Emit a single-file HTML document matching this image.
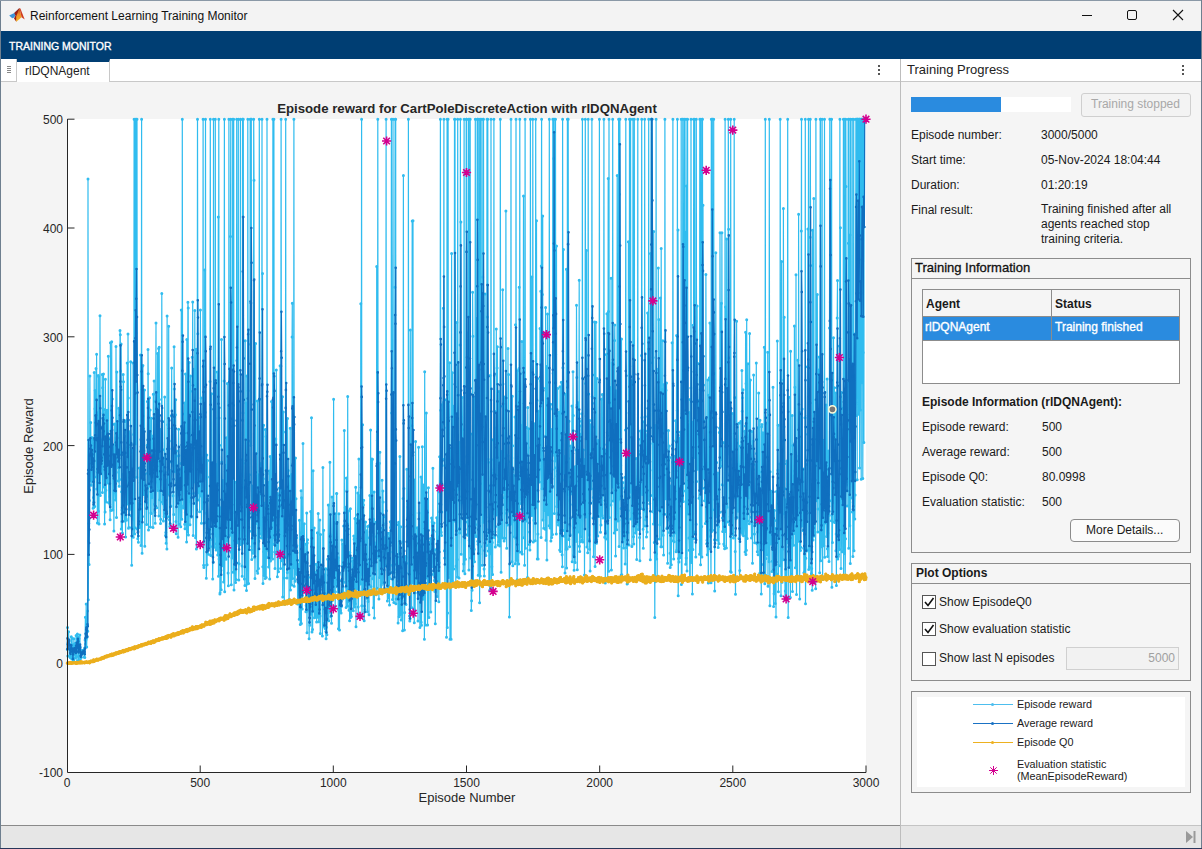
<!DOCTYPE html>
<html><head><meta charset="utf-8">
<style>
*{box-sizing:border-box;margin:0;padding:0}
html,body{width:1202px;height:849px;overflow:hidden;background:#f4f4f4;font-family:"Liberation Sans",sans-serif;color:#1a1a1a}
.a{position:absolute}
.t12{font-size:12px;line-height:14px;white-space:nowrap}
</style></head><body>
<div class="a" style="left:0;top:0;width:1202px;height:849px;background:#f4f4f4"></div>
<!-- title bar -->
<div class="a" style="left:0;top:0;width:1202px;height:31px;background:#f3f3f3"></div>
<svg class="a" style="left:4px;top:4px" width="24" height="24" viewBox="0 0 24 24">
<defs><linearGradient id="lg1" x1="0" y1="0" x2="0" y2="1"><stop offset="0" stop-color="#b83a18"/><stop offset="0.45" stop-color="#ee8a2a"/><stop offset="1" stop-color="#f8c023"/></linearGradient></defs>
<path d="M5.2 11.6 L10.3 9.1 L11.5 11.5 L9.8 13.8 L8.2 14.2 Z" fill="#3a93d8"/>
<path d="M10.3 9.1 L15.5 4 L11.5 11.5 Z" fill="#2a5aa0"/>
<path d="M10.3 9.1 L15.5 4 L12.3 17.8 L10 14.6 L11.5 11.5 Z" fill="#9e1f14"/>
<path d="M15.5 4 L17.6 13.3 L12.3 17.8 L12.2 12.5 Z" fill="url(#lg1)"/>
<path d="M15.5 4 L16.4 4.6 L20.7 15.4 L17.6 13.3 Z" fill="#cf3a1c"/>
</svg>
<div class="a t12" style="left:30px;top:9px;font-size:12px;color:#111">Reinforcement Learning Training Monitor</div>
<!-- window buttons -->
<div class="a" style="left:1082px;top:15px;width:10px;height:1px;background:#111"></div>
<div class="a" style="left:1127px;top:10px;width:10px;height:10px;border:1px solid #111;border-radius:2px"></div>
<svg class="a" style="left:1172px;top:9px" width="12" height="12" viewBox="0 0 12 12"><path d="M1 1 L11 11 M11 1 L1 11" stroke="#111" stroke-width="1.1"/></svg>
<!-- toolstrip -->
<div class="a" style="left:0;top:31px;width:1202px;height:28px;background:#003e73"></div>
<div class="a" style="left:9px;top:40px;font-size:10.5px;-webkit-text-stroke:0.35px #fff;line-height:12px;color:#fff;white-space:nowrap">TRAINING MONITOR</div>
<!-- left tab row -->
<div class="a" style="left:0;top:59px;width:900px;height:23px;background:#fff;border-bottom:1px solid #c8c8c8"></div>
<div class="a" style="left:1px;top:59px;width:16px;height:23px;background:#fff;border-right:1px solid #c8c8c8;border-bottom:1px solid #c8c8c8"></div>
<div class="a" style="left:7px;top:66px;width:4px;height:1px;background:#888;box-shadow:0 2px 0 #888,0 4px 0 #888,0 6px 0 #888"></div>
<div class="a" style="left:17px;top:59px;width:93px;height:23px;background:#fff;border-top:3px solid #003e73;border-right:1px solid #c8c8c8"></div>
<div class="a t12" style="left:25px;top:64px;color:#222">rlDQNAgent</div>
<div class="a" style="left:878px;top:65px;width:2px;height:2px;background:#555;box-shadow:0 4px 0 #555,0 8px 0 #555"></div>
<!-- left panel body -->
<div class="a" style="left:1px;top:82px;width:899px;height:743px;background:#f4f4f4"></div>
<!-- divider -->
<div class="a" style="left:900px;top:59px;width:1px;height:790px;background:#bdbdbd"></div>
<!-- right header -->
<div class="a" style="left:901px;top:59px;width:301px;height:23px;background:#fff;border-bottom:1px solid #c8c8c8"></div>
<div class="a t12" style="left:907px;top:63px;font-size:13px;color:#222">Training Progress</div>
<div class="a" style="left:1182px;top:65px;width:2px;height:2px;background:#555;box-shadow:0 4px 0 #555,0 8px 0 #555"></div>
<!-- right body -->
<div class="a" style="left:901px;top:82px;width:300px;height:743px;background:#f5f5f5"></div>
<!-- progress -->
<div class="a" style="left:911px;top:97px;width:160px;height:15px;background:#fff"></div>
<div class="a" style="left:911px;top:97px;width:90px;height:15px;background:#2a8bdf"></div>
<div class="a" style="left:1081px;top:93px;width:110px;height:24px;border:1px solid #cfcfcf;border-radius:3px;background:#f3f3f3"></div>
<div class="a t12" style="left:1091px;top:97px;color:#a8a8a8">Training stopped</div>
<!-- info rows -->
<div class="a t12" style="left:911px;top:128px">Episode number:</div>
<div class="a t12" style="left:1041px;top:128px">3000/5000</div>
<div class="a t12" style="left:911px;top:153px">Start time:</div>
<div class="a t12" style="left:1041px;top:153px">05-Nov-2024 18:04:44</div>
<div class="a t12" style="left:911px;top:178px">Duration:</div>
<div class="a t12" style="left:1041px;top:178px">01:20:19</div>
<div class="a t12" style="left:911px;top:203px">Final result:</div>
<div class="a t12" style="left:1041px;top:202px;line-height:15px">Training finished after all<br>agents reached stop<br>training criteria.</div>
<!-- training information -->
<div class="a" style="left:911px;top:258px;width:280px;height:295px;border:1px solid #8c8c8c"></div>
<div class="a" style="left:912px;top:278px;width:278px;height:1px;background:#8c8c8c"></div>
<div class="a t12" style="left:915px;top:261px;font-size:13px;-webkit-text-stroke:0.3px #111;color:#111">Training Information</div>
<div class="a" style="left:922px;top:289px;width:258px;height:95px;border:1px solid #8c8c8c;background:#fff"></div>
<div class="a" style="left:923px;top:290px;width:256px;height:27px;background:#f5f5f5;border-bottom:1px solid #8c8c8c"></div>
<div class="a" style="left:923px;top:317px;width:256px;height:24px;background:#2a8bdf;border-bottom:1px solid #8c8c8c"></div>
<div class="a" style="left:1051px;top:290px;width:1px;height:51px;background:#8c8c8c"></div>
<div class="a t12" style="left:926px;top:297px;font-weight:bold">Agent</div>
<div class="a t12" style="left:1055px;top:297px;font-weight:bold">Status</div>
<div class="a t12" style="left:925px;top:320px;font-size:12px;-webkit-text-stroke:0.35px #fff;color:#fff">rlDQNAgent</div>
<div class="a t12" style="left:1055px;top:320px;font-size:12px;-webkit-text-stroke:0.35px #fff;color:#fff">Training finished</div>
<div class="a t12" style="left:922px;top:395px;font-weight:bold">Episode Information (rlDQNAgent):</div>
<div class="a t12" style="left:922px;top:420px">Episode reward:</div>
<div class="a t12" style="left:1042px;top:420px">500</div>
<div class="a t12" style="left:922px;top:445px">Average reward:</div>
<div class="a t12" style="left:1042px;top:445px">500</div>
<div class="a t12" style="left:922px;top:470px">Episode Q0:</div>
<div class="a t12" style="left:1042px;top:470px">80.0998</div>
<div class="a t12" style="left:922px;top:495px">Evaluation statistic:</div>
<div class="a t12" style="left:1042px;top:495px">500</div>
<div class="a" style="left:1070px;top:519px;width:110px;height:23px;border:1px solid #8c8c8c;border-radius:4px;background:#fbfbfb"></div>
<div class="a t12" style="left:1086px;top:523px">More Details...</div>
<!-- plot options -->
<div class="a" style="left:911px;top:563px;width:280px;height:118px;border:1px solid #8c8c8c"></div>
<div class="a" style="left:912px;top:583px;width:278px;height:1px;background:#8c8c8c"></div>
<div class="a t12" style="left:916px;top:566px;font-size:12px;font-weight:bold">Plot Options</div>
<div class="a" style="left:922px;top:595px;width:14px;height:14px;border:1px solid #555;background:#fff"></div>
<svg class="a" style="left:922px;top:595px" width="14" height="14"><path d="M3 7 L6 10.5 L11.5 3" stroke="#111" stroke-width="1.6" fill="none"/></svg>
<div class="a t12" style="left:939px;top:595px">Show EpisodeQ0</div>
<div class="a" style="left:922px;top:622px;width:14px;height:14px;border:1px solid #555;background:#fff"></div>
<svg class="a" style="left:922px;top:622px" width="14" height="14"><path d="M3 7 L6 10.5 L11.5 3" stroke="#111" stroke-width="1.6" fill="none"/></svg>
<div class="a t12" style="left:939px;top:622px">Show evaluation statistic</div>
<div class="a" style="left:922px;top:652px;width:14px;height:14px;border:1px solid #555;background:#fff"></div>
<div class="a t12" style="left:939px;top:651px">Show last N episodes</div>
<div class="a" style="left:1066px;top:647px;width:113px;height:23px;border:1px solid #d0d0d0;background:#f2f2f2"></div>
<div class="a t12" style="left:1066px;top:651px;width:109px;text-align:right;color:#a0a0a0">5000</div>
<!-- legend -->
<div class="a" style="left:911px;top:691px;width:280px;height:102px;border:1px solid #8c8c8c"></div>
<div class="a" style="left:917px;top:697px;width:268px;height:90px;background:#fff"></div>
<div class="a" style="left:973px;top:704px;width:40px;height:1px;background:#4dbeee"></div>
<div class="a" style="left:991px;top:703px;width:3px;height:3px;border-radius:50%;background:#4dbeee"></div>
<div class="a t12" style="left:1017px;top:697px;font-size:10.8px">Episode reward</div>
<div class="a" style="left:973px;top:723px;width:40px;height:1px;background:#1a72c4"></div>
<div class="a" style="left:991px;top:722px;width:3px;height:3px;border-radius:50%;background:#1a72c4"></div>
<div class="a t12" style="left:1017px;top:716px;font-size:10.8px">Average reward</div>
<div class="a" style="left:973px;top:742px;width:40px;height:1px;background:#edb120"></div>
<div class="a" style="left:991px;top:741px;width:3px;height:3px;border-radius:50%;background:#edb120"></div>
<div class="a t12" style="left:1017px;top:735px;font-size:10.8px">Episode Q0</div>
<svg class="a" style="left:988px;top:765px" width="11" height="11" viewBox="-5.5 -5.5 11 11"><path d="M0 -4.5V4.5M-4.5 0H4.5M-3.2 -3.2L3.2 3.2M-3.2 3.2L3.2 -3.2" stroke="#d4008f" stroke-width="1"/></svg>
<div class="a t12" style="left:1017px;top:758px;font-size:10.8px;line-height:12px">Evaluation statistic<br>(MeanEpisodeReward)</div>
<!-- status bar -->
<div class="a" style="left:1px;top:825px;width:1201px;height:24px;background:#e6e6e6;border-top:1px solid #8a8a8a"></div>
<div class="a" style="left:901px;top:825px;width:301px;height:1px;background:#c4c4c4"></div>
<div class="a" style="left:900px;top:825px;width:1px;height:24px;background:#bdbdbd"></div>
<svg class="a" style="left:1185px;top:830px" width="11" height="14"><path d="M1 1 L8 7 L1 13Z" fill="#999"/><rect x="8.5" y="1" width="2" height="12" fill="#999"/></svg>
<!-- window borders -->
<div class="a" style="left:0;top:0;width:1px;height:849px;background:#6e7f8f"></div>
<div class="a" style="left:0;top:0;width:1202px;height:1px;background:#8a98a6"></div>
<div class="a" style="left:1201px;top:0;width:1px;height:849px;background:#6e7f8f"></div>
<div class="a" style="left:0;top:848px;width:1202px;height:1px;background:#28365a"></div>
<svg class="a" style="left:0;top:0" width="1202" height="849" viewBox="0 0 1202 849">
<rect x="67" y="119" width="799" height="653" fill="#fff"/>
<path d="M67.5 663.2h7M67.5 554.4h7M67.5 445.6h7M67.5 336.8h7M67.5 228.0h7M67.5 119.2h7M200.2 772.5v-7M333.3 772.5v-7M466.5 772.5v-7M599.7 772.5v-7M732.8 772.5v-7M866.0 772.5v-7" stroke="#262626" stroke-width="1"/>
<clipPath id="cp"><rect x="60" y="114" width="812" height="660"/></clipPath><g clip-path="url(#cp)">
<polyline points="67.3,649.2 67.5,627.6 67.8,656.1 68.1,643.9 68.3,645.5 68.6,631.7 68.9,646.9 69.1,641.0 69.4,647.2 69.7,645.4 69.9,656.3 70.2,657.4 70.5,648.1 70.7,650.3 71.0,649.0 71.3,636.8 71.5,658.6 71.8,650.8 72.1,638.3 72.3,658.6 72.6,657.1 72.9,661.1 73.1,644.7 73.4,646.7 73.7,660.1 73.9,638.8 74.2,654.7 74.5,653.8 74.7,646.8 75.0,643.4 75.3,657.9 75.5,649.1 75.8,652.1 76.1,635.5 76.3,656.9 76.6,635.8 76.9,661.8 77.1,645.9 77.4,634.1 77.7,645.3 77.9,637.3 78.2,641.0 78.5,660.4 78.7,656.1 79.0,638.6 79.3,648.9 79.5,652.3 79.8,634.9 80.1,646.6 80.3,662.0 80.6,658.4 80.8,650.0 81.1,653.8 81.4,657.3 81.6,652.5 81.9,653.8 82.2,650.6 82.4,651.1 82.7,653.0 83.0,653.8 83.2,650.2 83.5,651.7 83.8,650.2 84.0,650.7 84.3,657.3 84.6,648.0 84.8,657.6 85.1,639.9 85.4,617.3 85.6,644.1 85.9,640.1 86.2,603.9 86.4,638.6 86.7,647.0 87.0,625.2 87.2,636.9 87.5,610.9 87.8,631.2 88.0,179.0 88.3,599.8 88.6,541.0 88.8,523.5 89.1,564.5 89.4,500.5 89.6,489.9 89.9,376.0 90.2,480.6 90.4,457.9 90.7,422.5 91.0,456.1 91.2,485.2 91.5,467.9 91.8,437.4 92.0,444.6 92.3,481.3 92.6,454.0 92.8,439.7 93.1,508.2 93.4,497.6 93.6,507.8 93.9,502.3 94.2,372.5 94.4,439.3 94.7,506.4 95.0,408.7 95.2,390.6 95.5,447.3 95.8,430.1 96.0,368.4 96.3,477.0 96.6,354.3 96.8,488.9 97.1,471.6 97.4,522.9 97.6,412.7 97.9,482.2 98.2,375.4 98.4,511.3 98.7,376.4 99.0,524.1 99.2,466.0 99.5,459.0 99.8,413.2 100.0,315.8 100.3,495.6 100.6,468.8 100.8,457.2 101.1,462.1 101.4,471.8 101.6,439.4 101.9,471.4 102.2,374.6 102.4,492.6 102.7,387.8 103.0,438.1 103.2,432.6 103.5,374.0 103.8,486.9 104.0,409.5 104.3,466.8 104.6,523.9 104.8,418.3 105.1,512.0 105.4,379.3 105.6,441.4 105.9,490.2 106.2,502.1 106.4,440.9 106.7,410.4 107.0,410.2 107.2,483.1 107.5,448.6 107.7,465.3 108.0,479.8 108.3,356.2 108.5,481.7 108.8,502.7 109.1,438.0 109.3,450.1 109.6,496.6 109.9,504.5 110.1,519.7 110.4,342.8 110.7,439.5 110.9,510.6 111.2,443.0 111.5,446.7 111.7,341.7 112.0,430.0 112.3,399.0 112.5,424.5 112.8,510.0 113.1,459.6 113.3,457.4 113.6,446.6 113.9,531.1 114.1,456.4 114.4,484.4 114.7,423.9 114.9,458.8 115.2,492.3 115.5,500.1 115.7,480.8 116.0,346.5 116.3,472.3 116.5,517.6 116.8,372.0 117.1,424.5 117.3,467.5 117.6,461.3 117.9,442.8 118.1,460.3 118.4,481.1 118.7,408.3 118.9,480.2 119.2,486.3 119.5,436.1 119.7,479.5 120.0,330.4 120.3,334.7 120.5,371.1 120.8,454.3 121.1,343.9 121.3,528.9 121.6,491.7 121.9,521.6 122.1,510.1 122.4,532.9 122.7,474.5 122.9,509.0 123.2,374.4 123.5,381.8 123.7,503.9 124.0,512.6 124.3,521.1 124.5,432.2 124.8,436.2 125.1,421.6 125.3,500.8 125.6,537.1 125.9,488.7 126.1,518.8 126.4,520.3 126.7,420.1 126.9,461.9 127.2,362.9 127.5,503.6 127.7,504.1 128.0,334.1 128.3,398.1 128.5,528.2 128.8,527.6 129.1,488.7 129.3,431.8 129.6,496.3 129.9,504.7 130.1,509.2 130.4,464.2 130.7,361.7 130.9,452.5 131.2,515.7 131.5,527.4 131.7,565.2 132.0,494.8 132.3,449.8 132.5,461.7 132.8,519.1 133.1,362.9 133.3,537.3 133.6,434.4 133.8,470.4 134.1,119.2 134.4,435.4 134.6,534.0 134.9,527.7 135.2,119.2 135.4,367.8 135.7,443.8 136.0,333.2 136.2,119.2 136.5,354.6 136.8,477.3 137.0,119.2 137.3,529.0 137.6,529.4 137.8,538.7 138.1,527.5 138.4,542.2 138.6,503.3 138.9,519.1 139.2,506.4 139.4,468.1 139.7,527.6 140.0,517.0 140.2,482.7 140.5,355.1 140.8,439.5 141.0,545.5 141.3,449.6 141.6,119.2 141.8,496.9 142.1,553.3 142.4,516.5 142.6,366.1 142.9,365.6 143.2,426.5 143.4,494.4 143.7,494.0 144.0,450.7 144.2,454.0 144.5,390.1 144.8,546.3 145.0,474.0 145.3,484.5 145.6,498.3 145.8,489.1 146.1,499.6 146.4,502.4 146.6,524.4 146.9,495.6 147.2,445.3 147.4,401.4 147.7,473.0 148.0,349.6 148.2,373.8 148.5,530.0 148.8,460.0 149.0,461.9 149.3,435.2 149.6,397.8 149.8,485.9 150.1,410.0 150.4,526.9 150.6,435.4 150.9,513.1 151.2,513.6 151.4,418.2 151.7,497.7 152.0,436.1 152.2,474.4 152.5,457.1 152.8,487.9 153.0,527.5 153.3,394.2 153.6,394.3 153.8,467.4 154.1,381.0 154.4,504.2 154.6,511.3 154.9,512.6 155.2,523.3 155.4,482.4 155.7,400.9 156.0,323.0 156.2,453.3 156.5,450.3 156.8,507.8 157.0,440.7 157.3,481.4 157.6,353.5 157.8,395.0 158.1,490.4 158.4,490.4 158.6,348.5 158.9,516.0 159.2,347.2 159.4,399.4 159.7,499.7 160.0,484.8 160.2,429.4 160.5,523.4 160.7,519.2 161.0,429.9 161.3,464.4 161.5,460.2 161.8,293.4 162.1,470.4 162.3,502.0 162.6,421.5 162.9,449.7 163.1,503.7 163.4,520.9 163.7,459.8 163.9,501.9 164.2,516.5 164.5,511.7 164.7,397.1 165.0,492.8 165.3,472.3 165.5,535.6 165.8,532.5 166.1,543.3 166.3,479.9 166.6,512.1 166.9,549.0 167.1,316.1 167.4,481.9 167.7,516.7 167.9,424.8 168.2,462.7 168.5,465.7 168.7,326.3 169.0,493.8 169.3,441.1 169.5,519.7 169.8,526.6 170.1,524.2 170.3,470.4 170.6,482.6 170.9,506.0 171.1,462.1 171.4,416.0 171.7,367.9 171.9,448.8 172.2,428.1 172.5,465.5 172.7,453.4 173.0,495.8 173.3,526.9 173.5,414.9 173.8,514.4 174.1,346.8 174.3,388.9 174.6,416.5 174.9,471.7 175.1,471.4 175.4,414.7 175.7,399.7 175.9,521.6 176.2,533.8 176.5,465.4 176.7,451.1 177.0,480.7 177.3,478.9 177.5,501.6 177.8,471.6 178.1,537.3 178.3,456.0 178.6,429.3 178.9,455.4 179.1,524.3 179.4,504.5 179.7,472.3 179.9,491.5 180.2,473.8 180.5,468.7 180.7,526.7 181.0,463.4 181.3,310.0 181.5,505.7 181.8,519.3 182.1,473.6 182.3,119.2 182.6,432.3 182.9,455.2 183.1,431.0 183.4,508.1 183.7,435.0 183.9,450.6 184.2,414.1 184.5,402.9 184.7,524.3 185.0,528.8 185.3,512.2 185.5,374.0 185.8,472.9 186.1,503.2 186.3,498.2 186.6,542.0 186.8,339.6 187.1,456.4 187.4,531.9 187.6,465.3 187.9,302.2 188.2,307.9 188.4,534.9 188.7,501.5 189.0,444.2 189.2,362.5 189.5,438.5 189.8,448.0 190.0,524.8 190.3,441.7 190.6,375.9 190.8,516.1 191.1,516.2 191.4,517.0 191.6,460.0 191.9,487.7 192.2,357.2 192.4,391.2 192.7,301.9 193.0,463.2 193.2,535.4 193.5,493.4 193.8,481.9 194.0,369.3 194.3,480.9 194.6,410.7 194.8,310.4 195.1,446.5 195.4,503.2 195.6,537.7 195.9,435.7 196.2,349.2 196.4,549.0 196.7,509.8 197.0,492.5 197.2,447.8 197.5,119.2 197.8,333.8 198.0,499.9 198.3,465.7 198.6,492.8 198.8,417.5 199.1,450.4 199.4,426.8 199.6,511.7 199.9,475.1 200.2,457.9 200.4,310.0 200.7,444.4 201.0,496.1 201.2,398.0 201.5,523.2 201.8,473.0 202.0,477.2 202.3,458.0 202.6,508.8 202.8,471.3 203.1,119.2 203.4,491.9 203.6,565.3 203.9,567.4 204.2,437.0 204.4,502.2 204.7,270.1 205.0,479.1 205.2,412.3 205.5,119.2 205.8,522.3 206.0,513.3 206.3,578.2 206.6,564.9 206.8,455.1 207.1,564.7 207.4,477.1 207.6,460.4 207.9,549.6 208.2,547.5 208.4,554.3 208.7,543.8 209.0,521.6 209.2,537.1 209.5,530.0 209.8,546.4 210.0,381.6 210.3,119.2 210.6,539.5 210.8,555.4 211.1,485.2 211.4,512.4 211.6,393.7 211.9,517.0 212.2,476.6 212.4,546.4 212.7,579.0 213.0,546.4 213.2,562.0 213.5,119.2 213.7,483.8 214.0,500.4 214.3,520.3 214.5,547.2 214.8,494.8 215.1,536.1 215.3,119.2 215.6,485.9 215.9,543.9 216.1,550.0 216.4,464.4 216.7,549.3 216.9,535.3 217.2,372.0 217.5,543.2 217.7,555.0 218.0,418.0 218.3,217.1 218.5,576.2 218.8,119.2 219.1,558.9 219.3,545.3 219.6,445.2 219.9,593.9 220.1,592.7 220.4,507.8 220.7,564.3 220.9,570.3 221.2,589.7 221.5,339.5 221.7,462.1 222.0,548.1 222.3,565.8 222.5,503.1 222.8,480.5 223.1,521.6 223.3,542.4 223.6,582.0 223.9,510.9 224.1,381.1 224.4,119.2 224.7,591.8 224.9,544.6 225.2,471.4 225.5,465.3 225.7,558.6 226.0,559.3 226.3,437.7 226.5,526.8 226.8,487.2 227.1,541.0 227.3,383.4 227.6,532.7 227.9,453.0 228.1,572.9 228.4,585.7 228.7,511.2 228.9,119.2 229.2,515.1 229.5,472.5 229.7,515.9 230.0,535.3 230.3,507.9 230.5,236.5 230.8,119.2 231.1,551.9 231.3,584.8 231.6,449.1 231.9,507.0 232.1,558.1 232.4,532.8 232.7,119.2 232.9,457.7 233.2,572.2 233.5,405.2 233.7,119.2 234.0,590.1 234.3,567.9 234.5,535.2 234.8,518.9 235.1,482.2 235.3,566.3 235.6,582.5 235.9,546.0 236.1,579.5 236.4,563.0 236.7,119.2 236.9,360.4 237.2,500.7 237.5,542.9 237.7,496.7 238.0,537.4 238.3,119.2 238.5,505.0 238.8,579.9 239.1,563.7 239.3,472.9 239.6,521.8 239.9,481.1 240.1,510.2 240.4,119.2 240.6,544.6 240.9,459.8 241.2,528.8 241.4,474.4 241.7,518.7 242.0,565.9 242.2,576.2 242.5,119.2 242.8,119.2 243.0,413.0 243.3,119.2 243.6,543.1 243.8,536.8 244.1,502.7 244.4,578.9 244.6,536.1 244.9,585.6 245.2,340.7 245.4,515.3 245.7,463.3 246.0,403.1 246.2,498.6 246.5,590.5 246.8,376.1 247.0,554.3 247.3,583.9 247.6,492.7 247.8,119.2 248.1,390.7 248.4,479.5 248.6,583.4 248.9,519.3 249.2,546.4 249.4,474.8 249.7,531.2 250.0,441.1 250.2,119.2 250.5,344.3 250.8,445.6 251.0,119.2 251.3,119.2 251.6,549.9 251.8,559.6 252.1,505.5 252.4,485.9 252.6,529.9 252.9,511.8 253.2,553.3 253.4,541.4 253.7,119.2 254.0,180.2 254.2,539.3 254.5,557.4 254.8,533.5 255.0,578.6 255.3,494.5 255.6,343.5 255.8,523.6 256.1,493.3 256.4,514.1 256.6,476.2 256.9,516.6 257.2,571.0 257.4,401.0 257.7,573.2 258.0,488.7 258.2,474.7 258.5,568.5 258.8,541.2 259.0,537.0 259.3,119.2 259.6,479.2 259.8,399.3 260.1,534.1 260.4,474.0 260.6,468.2 260.9,463.6 261.2,480.9 261.4,538.1 261.7,498.6 262.0,119.2 262.2,534.9 262.5,273.5 262.8,566.8 263.0,583.6 263.3,478.7 263.6,425.3 263.8,551.8 264.1,575.6 264.4,503.2 264.6,508.3 264.9,550.9 265.2,578.6 265.4,429.5 265.7,546.0 266.0,436.4 266.2,577.4 266.5,511.8 266.8,557.5 267.0,119.2 267.3,498.8 267.5,536.4 267.8,482.2 268.1,508.5 268.3,550.5 268.6,567.0 268.9,556.5 269.1,471.0 269.4,559.3 269.7,579.1 269.9,473.7 270.2,456.4 270.5,561.1 270.7,482.4 271.0,542.9 271.3,557.3 271.5,401.5 271.8,554.4 272.1,482.2 272.3,520.1 272.6,559.1 272.9,119.2 273.1,544.3 273.4,529.8 273.7,471.6 273.9,119.2 274.2,537.7 274.5,515.9 274.7,552.0 275.0,568.6 275.3,499.0 275.5,484.7 275.8,439.1 276.1,525.5 276.3,370.0 276.6,552.8 276.9,545.8 277.1,505.3 277.4,576.7 277.7,493.6 277.9,524.5 278.2,515.2 278.5,571.7 278.7,535.3 279.0,496.7 279.3,487.9 279.5,516.6 279.8,481.9 280.1,365.8 280.3,530.1 280.6,568.5 280.9,366.0 281.1,119.2 281.4,450.0 281.7,504.1 281.9,560.7 282.2,484.2 282.5,396.7 282.7,597.1 283.0,514.1 283.3,412.0 283.5,431.9 283.8,491.1 284.1,578.1 284.3,604.2 284.6,511.1 284.9,492.4 285.1,556.7 285.4,547.7 285.7,119.2 285.9,502.8 286.2,527.2 286.5,502.3 286.7,557.8 287.0,577.9 287.3,572.4 287.5,418.5 287.8,470.2 288.1,488.2 288.3,470.4 288.6,555.7 288.9,550.3 289.1,599.6 289.4,513.1 289.7,476.3 289.9,568.4 290.2,428.2 290.5,589.9 290.7,558.5 291.0,545.0 291.3,485.3 291.5,474.5 291.8,585.1 292.1,336.9 292.3,303.2 292.6,578.4 292.9,509.7 293.1,564.2 293.4,504.5 293.6,567.8 293.9,119.2 294.2,586.3 294.4,545.8 294.7,521.7 295.0,554.4 295.2,581.2 295.5,458.1 295.8,573.5 296.0,498.8 296.3,569.7 296.6,537.8 296.8,545.7 297.1,574.6 297.4,560.4 297.6,603.9 297.9,573.0 298.2,569.7 298.4,564.1 298.7,594.2 299.0,591.5 299.2,619.2 299.5,520.2 299.8,592.8 300.0,603.5 300.3,624.5 300.6,594.0 300.8,533.1 301.1,490.8 301.4,623.4 301.6,497.8 301.9,596.9 302.2,608.9 302.4,580.3 302.7,585.1 303.0,443.6 303.2,587.7 303.5,589.2 303.8,580.8 304.0,560.3 304.3,523.7 304.6,580.3 304.8,559.8 305.1,544.3 305.4,559.0 305.6,582.0 305.9,611.7 306.2,605.5 306.4,611.8 306.7,513.1 307.0,632.8 307.2,543.0 307.5,539.8 307.8,574.9 308.0,610.0 308.3,591.1 308.6,577.2 308.8,592.6 309.1,638.8 309.4,621.9 309.6,607.1 309.9,625.3 310.2,587.7 310.4,598.9 310.7,511.5 311.0,614.2 311.2,608.3 311.5,417.7 311.8,564.9 312.0,632.0 312.3,572.7 312.6,629.5 312.8,585.6 313.1,470.7 313.4,610.9 313.6,561.2 313.9,577.3 314.2,528.1 314.4,617.7 314.7,597.1 315.0,572.4 315.2,610.3 315.5,617.3 315.8,586.7 316.0,564.2 316.3,574.0 316.6,622.0 316.8,587.1 317.1,591.6 317.4,532.8 317.6,617.2 317.9,606.6 318.2,513.4 318.4,566.8 318.7,621.8 319.0,608.5 319.2,609.8 319.5,610.3 319.8,520.0 320.0,615.9 320.3,633.5 320.5,534.5 320.8,586.5 321.1,573.8 321.3,586.6 321.6,575.8 321.9,568.4 322.1,585.3 322.4,635.9 322.7,593.5 322.9,467.4 323.2,584.6 323.5,593.7 323.7,530.3 324.0,623.6 324.3,625.7 324.5,627.0 324.8,574.8 325.1,628.5 325.3,627.2 325.6,568.7 325.9,631.4 326.1,638.8 326.4,627.2 326.7,593.9 326.9,634.8 327.2,569.1 327.5,619.8 327.7,559.3 328.0,604.1 328.3,505.1 328.5,600.3 328.8,620.8 329.1,593.3 329.3,602.8 329.6,612.3 329.9,462.3 330.1,534.6 330.4,547.0 330.7,545.6 330.9,616.5 331.2,608.3 331.5,623.2 331.7,540.4 332.0,496.9 332.3,600.6 332.5,589.4 332.8,599.3 333.1,571.8 333.3,546.7 333.6,399.3 333.9,563.7 334.1,578.1 334.4,591.4 334.7,522.6 334.9,565.6 335.2,606.2 335.5,513.8 335.7,584.4 336.0,542.5 336.3,584.0 336.5,493.6 336.8,493.4 337.1,580.1 337.3,586.7 337.6,591.8 337.9,560.5 338.1,557.8 338.4,628.8 338.7,610.1 338.9,513.7 339.2,574.4 339.5,629.9 339.7,580.4 340.0,605.5 340.3,595.3 340.5,610.6 340.8,594.5 341.1,612.9 341.3,597.0 341.6,606.3 341.9,540.1 342.1,591.0 342.4,569.4 342.7,598.9 342.9,544.3 343.2,568.9 343.5,592.7 343.7,526.1 344.0,582.2 344.3,430.5 344.5,564.9 344.8,567.5 345.1,566.1 345.3,507.6 345.6,564.4 345.9,587.0 346.1,607.4 346.4,478.0 346.6,506.7 346.9,490.7 347.2,574.0 347.4,606.0 347.7,396.4 348.0,601.4 348.2,589.4 348.5,511.0 348.8,591.3 349.0,610.2 349.3,570.4 349.6,620.7 349.8,552.4 350.1,606.2 350.4,508.8 350.6,617.5 350.9,614.6 351.2,594.7 351.4,616.5 351.7,585.3 352.0,558.1 352.2,589.3 352.5,561.3 352.8,574.2 353.0,582.5 353.3,610.7 353.6,591.9 353.8,536.1 354.1,539.3 354.4,555.3 354.6,607.1 354.9,518.5 355.2,603.7 355.4,578.2 355.7,487.3 356.0,626.8 356.2,576.8 356.5,541.8 356.8,588.8 357.0,519.6 357.3,534.8 357.6,515.2 357.8,493.0 358.1,607.0 358.4,616.8 358.6,561.1 358.9,459.0 359.2,580.5 359.4,523.3 359.7,591.6 360.0,495.5 360.2,535.8 360.5,584.1 360.8,303.8 361.0,574.4 361.3,465.9 361.6,119.2 361.8,605.7 362.1,616.9 362.4,515.9 362.6,424.8 362.9,582.1 363.2,591.7 363.4,505.0 363.7,500.2 364.0,541.7 364.2,620.8 364.5,605.9 364.8,609.6 365.0,551.9 365.3,560.2 365.6,522.0 365.8,580.5 366.1,577.2 366.4,584.9 366.6,530.7 366.9,598.2 367.2,582.4 367.4,611.7 367.7,526.5 368.0,601.5 368.2,579.3 368.5,563.2 368.8,575.4 369.0,614.8 369.3,537.7 369.6,525.2 369.8,495.4 370.1,575.0 370.4,563.1 370.6,430.1 370.9,586.6 371.2,590.5 371.4,520.7 371.7,459.0 372.0,507.4 372.2,559.4 372.5,459.2 372.8,578.7 373.0,534.0 373.3,607.7 373.5,519.2 373.8,561.3 374.1,491.9 374.3,618.0 374.6,542.8 374.9,561.8 375.1,567.2 375.4,548.6 375.7,570.0 375.9,522.2 376.2,594.8 376.5,536.5 376.7,266.5 377.0,588.3 377.3,440.5 377.5,557.4 377.8,119.2 378.1,529.5 378.3,530.9 378.6,539.1 378.9,598.9 379.1,512.8 379.4,463.2 379.7,577.5 379.9,452.2 380.2,554.3 380.5,534.5 380.7,592.8 381.0,528.2 381.3,585.0 381.5,592.9 381.8,544.2 382.1,480.2 382.3,572.5 382.6,582.4 382.9,491.0 383.1,502.1 383.4,551.6 383.7,537.2 383.9,583.2 384.2,589.8 384.5,592.5 384.7,565.0 385.0,516.8 385.3,565.6 385.5,553.4 385.8,523.5 386.1,119.2 386.3,510.8 386.6,542.5 386.9,589.8 387.1,566.6 387.4,601.0 387.7,533.3 387.9,558.7 388.2,567.9 388.5,598.0 388.7,542.9 389.0,539.6 389.3,533.3 389.5,605.1 389.8,536.8 390.1,578.5 390.3,521.8 390.6,527.5 390.9,543.0 391.1,521.4 391.4,119.2 391.7,413.1 391.9,572.6 392.2,565.2 392.5,599.6 392.7,552.0 393.0,119.2 393.3,507.7 393.5,549.9 393.8,602.6 394.1,565.1 394.3,564.2 394.6,538.7 394.9,287.2 395.1,119.2 395.4,565.1 395.7,119.2 395.9,603.7 396.2,598.9 396.5,569.5 396.7,524.8 397.0,568.5 397.3,577.7 397.5,557.5 397.8,576.2 398.1,623.0 398.3,598.6 398.6,522.3 398.9,577.4 399.1,616.8 399.4,577.9 399.7,589.4 399.9,456.6 400.2,614.7 400.4,558.8 400.7,526.8 401.0,557.9 401.2,620.1 401.5,580.7 401.8,613.2 402.0,600.8 402.3,557.4 402.6,630.7 402.8,541.7 403.1,498.4 403.4,175.5 403.6,596.4 403.9,488.6 404.2,567.9 404.4,629.9 404.7,612.4 405.0,568.7 405.2,575.5 405.5,556.6 405.8,559.1 406.0,604.5 406.3,593.0 406.6,563.2 406.8,469.2 407.1,526.8 407.4,506.9 407.6,543.4 407.9,503.7 408.2,591.8 408.4,119.2 408.7,573.2 409.0,557.3 409.2,592.0 409.5,615.9 409.8,620.9 410.0,618.7 410.3,330.1 410.6,480.2 410.8,523.5 411.1,540.5 411.4,545.3 411.6,607.6 411.9,425.7 412.2,221.1 412.4,562.4 412.7,583.1 413.0,220.8 413.2,552.6 413.5,516.5 413.8,547.1 414.0,608.7 414.3,622.8 414.6,479.9 414.8,512.9 415.1,610.8 415.4,584.5 415.6,441.4 415.9,583.8 416.2,583.7 416.4,567.1 416.7,554.4 417.0,575.9 417.2,527.7 417.5,582.4 417.8,593.0 418.0,621.1 418.3,561.8 418.6,447.2 418.8,548.3 419.1,513.1 419.4,560.1 419.6,561.9 419.9,627.5 420.2,594.3 420.4,585.9 420.7,540.6 421.0,477.1 421.2,622.3 421.5,625.3 421.8,587.4 422.0,573.4 422.3,446.8 422.6,587.8 422.8,599.2 423.1,597.6 423.4,484.9 423.6,588.9 423.9,584.6 424.2,555.0 424.4,639.2 424.7,371.8 425.0,574.8 425.2,549.1 425.5,625.0 425.8,523.2 426.0,541.8 426.3,412.9 426.6,578.1 426.8,506.1 427.1,531.8 427.3,499.6 427.6,625.0 427.9,529.7 428.1,574.2 428.4,487.7 428.7,571.6 428.9,617.4 429.2,570.1 429.5,569.7 429.7,553.4 430.0,542.3 430.3,573.7 430.5,538.5 430.8,612.0 431.1,571.5 431.3,570.5 431.6,518.1 431.9,566.7 432.1,522.1 432.4,561.5 432.7,548.2 432.9,468.3 433.2,574.4 433.5,574.9 433.7,563.6 434.0,522.9 434.3,580.4 434.5,560.0 434.8,591.6 435.1,549.7 435.3,623.7 435.6,591.6 435.9,586.7 436.1,574.7 436.4,582.4 436.7,517.7 436.9,531.5 437.2,596.5 437.5,553.9 437.7,485.8 438.0,583.5 438.3,573.6 438.5,536.9 438.8,601.7 439.1,562.8 439.3,491.9 439.6,456.7 439.9,587.7 440.1,487.8 440.4,119.2 440.7,410.2 440.9,504.5 441.2,532.2 441.5,535.4 441.7,512.1 442.0,404.7 442.3,465.6 442.5,419.6 442.8,423.8 443.1,423.6 443.3,308.3 443.6,402.2 443.9,119.2 444.1,459.3 444.4,550.8 444.7,558.0 444.9,584.9 445.2,484.6 445.5,506.6 445.7,497.8 446.0,399.8 446.3,465.4 446.5,637.3 446.8,427.8 447.1,119.2 447.3,627.4 447.6,613.0 447.9,520.5 448.1,119.2 448.4,566.0 448.7,577.5 448.9,419.2 449.2,484.3 449.5,488.5 449.7,362.8 450.0,639.3 450.3,449.2 450.5,473.6 450.8,523.9 451.1,639.3 451.3,451.2 451.6,253.5 451.9,545.7 452.1,581.1 452.4,372.8 452.7,429.2 452.9,479.4 453.2,584.6 453.4,406.3 453.7,569.0 454.0,426.0 454.2,512.9 454.5,119.2 454.8,520.5 455.0,119.2 455.3,521.3 455.6,454.0 455.8,584.1 456.1,566.1 456.4,442.0 456.6,476.3 456.9,322.5 457.2,559.5 457.4,576.9 457.7,119.2 458.0,489.5 458.2,478.4 458.5,480.7 458.8,442.2 459.0,578.1 459.3,481.6 459.6,528.3 459.8,532.9 460.1,345.0 460.4,119.2 460.6,395.0 460.9,221.9 461.2,554.3 461.4,497.2 461.7,503.0 462.0,488.7 462.2,397.6 462.5,429.4 462.8,489.9 463.0,496.3 463.3,571.1 463.6,475.2 463.8,564.1 464.1,119.2 464.4,495.8 464.6,544.4 464.9,573.7 465.2,470.3 465.4,559.2 465.7,465.8 466.0,517.4 466.2,119.2 466.5,119.2 466.8,456.6 467.0,495.8 467.3,522.0 467.6,535.3 467.8,332.8 468.1,499.0 468.4,119.2 468.6,527.9 468.9,570.1 469.2,540.2 469.4,468.2 469.7,119.2 470.0,488.2 470.2,119.2 470.5,558.0 470.8,505.7 471.0,433.9 471.3,610.5 471.6,600.7 471.8,551.6 472.1,590.2 472.4,556.7 472.6,292.2 472.9,336.3 473.2,560.8 473.4,580.6 473.7,520.2 474.0,397.2 474.2,549.2 474.5,561.8 474.8,486.8 475.0,535.1 475.3,119.2 475.6,524.4 475.8,496.4 476.1,536.5 476.4,480.7 476.6,318.5 476.9,421.0 477.2,119.2 477.4,119.2 477.7,541.2 478.0,544.3 478.2,575.2 478.5,469.0 478.8,119.2 479.0,506.8 479.3,468.3 479.6,602.8 479.8,554.0 480.1,119.2 480.3,576.0 480.6,546.6 480.9,421.7 481.1,119.2 481.4,392.7 481.7,341.0 481.9,374.8 482.2,565.3 482.5,483.7 482.7,277.0 483.0,119.2 483.3,522.2 483.5,119.2 483.8,450.9 484.1,569.0 484.3,576.0 484.6,550.4 484.9,502.2 485.1,294.1 485.4,521.9 485.7,433.6 485.9,555.6 486.2,532.8 486.5,529.4 486.7,545.4 487.0,119.2 487.3,316.9 487.5,419.3 487.8,119.2 488.1,459.3 488.3,550.9 488.6,462.3 488.9,584.7 489.1,517.3 489.4,487.1 489.7,590.3 489.9,547.8 490.2,375.4 490.5,553.7 490.7,527.3 491.0,119.2 491.3,588.0 491.5,459.5 491.8,566.8 492.1,486.1 492.3,542.5 492.6,574.6 492.9,439.7 493.1,513.6 493.4,472.9 493.7,469.5 493.9,119.2 494.2,537.4 494.5,465.3 494.7,427.7 495.0,531.8 495.3,547.1 495.5,526.5 495.8,411.6 496.1,498.0 496.3,329.1 496.6,515.0 496.9,489.6 497.1,368.0 497.4,346.7 497.7,438.0 497.9,544.9 498.2,536.3 498.5,493.0 498.7,541.8 499.0,391.4 499.3,462.2 499.5,535.0 499.8,546.1 500.1,490.1 500.3,119.2 500.6,406.3 500.9,516.1 501.1,572.3 501.4,451.4 501.7,536.2 501.9,498.0 502.2,478.8 502.5,538.0 502.7,289.8 503.0,384.0 503.3,408.3 503.5,492.3 503.8,430.6 504.1,541.0 504.3,497.5 504.6,396.9 504.9,538.2 505.1,473.4 505.4,425.2 505.7,476.8 505.9,211.0 506.2,506.4 506.4,513.3 506.7,548.3 507.0,467.7 507.2,474.4 507.5,525.1 507.8,455.8 508.0,348.5 508.3,510.9 508.6,374.5 508.8,443.0 509.1,492.3 509.4,617.0 509.6,583.0 509.9,490.6 510.2,524.5 510.4,461.7 510.7,513.4 511.0,119.2 511.2,523.5 511.5,516.4 511.8,458.0 512.0,561.8 512.3,396.2 512.6,445.7 512.8,565.7 513.1,469.7 513.4,512.1 513.6,475.2 513.9,504.5 514.2,501.9 514.4,536.8 514.7,521.6 515.0,417.1 515.2,563.8 515.5,324.8 515.8,538.6 516.0,119.2 516.3,560.2 516.6,540.5 516.8,513.0 517.1,579.8 517.4,560.3 517.6,370.8 517.9,440.7 518.2,417.9 518.4,456.1 518.7,563.9 519.0,368.4 519.2,287.2 519.5,552.0 519.8,119.2 520.0,503.5 520.3,498.7 520.6,425.0 520.8,493.1 521.1,484.6 521.4,491.6 521.6,551.9 521.9,341.6 522.2,554.0 522.4,508.2 522.7,501.6 523.0,463.0 523.2,445.0 523.5,195.9 523.8,476.9 524.0,537.8 524.3,455.4 524.6,565.2 524.8,470.6 525.1,119.2 525.4,548.2 525.6,492.9 525.9,442.4 526.2,427.5 526.4,460.9 526.7,521.0 527.0,470.0 527.2,492.1 527.5,577.5 527.8,407.4 528.0,479.5 528.3,480.6 528.6,428.8 528.8,515.8 529.1,492.2 529.4,544.4 529.6,532.1 529.9,549.9 530.2,540.7 530.4,119.2 530.7,492.6 531.0,447.8 531.2,513.9 531.5,475.7 531.8,277.1 532.0,515.5 532.3,496.5 532.6,502.2 532.8,119.2 533.1,462.6 533.3,542.1 533.6,452.3 533.9,520.2 534.1,480.4 534.4,423.7 534.7,461.5 534.9,523.3 535.2,540.7 535.5,506.2 535.7,119.2 536.0,506.6 536.3,506.4 536.5,220.8 536.8,471.7 537.1,400.4 537.3,558.9 537.6,378.4 537.9,534.1 538.1,559.1 538.4,411.3 538.7,438.7 538.9,466.1 539.2,430.6 539.5,481.9 539.7,468.9 540.0,328.4 540.3,421.6 540.5,381.1 540.8,291.3 541.1,537.4 541.3,266.0 541.6,119.2 541.9,417.9 542.1,488.7 542.4,294.4 542.7,215.9 542.9,520.1 543.2,435.8 543.5,388.3 543.7,528.3 544.0,461.6 544.3,510.5 544.5,494.6 544.8,481.4 545.1,474.0 545.3,529.2 545.6,307.6 545.9,540.3 546.1,464.0 546.4,509.7 546.7,366.6 546.9,560.0 547.2,500.0 547.5,314.1 547.7,402.0 548.0,479.5 548.3,514.8 548.5,438.0 548.8,459.2 549.1,525.7 549.3,119.2 549.6,502.3 549.9,444.2 550.1,528.1 550.4,409.1 550.7,404.3 550.9,541.0 551.2,477.9 551.5,429.5 551.7,537.6 552.0,469.5 552.3,455.4 552.5,534.4 552.8,119.2 553.1,373.3 553.3,453.1 553.6,158.4 553.9,119.2 554.1,119.2 554.4,513.4 554.7,266.6 554.9,461.0 555.2,421.1 555.5,119.2 555.7,354.8 556.0,467.7 556.3,534.0 556.5,246.1 556.8,506.4 557.1,476.3 557.3,502.7 557.6,388.4 557.9,522.2 558.1,512.9 558.4,524.9 558.7,506.7 558.9,412.0 559.2,432.5 559.5,514.8 559.7,549.9 560.0,386.7 560.2,516.1 560.5,551.4 560.8,533.1 561.0,506.7 561.3,382.3 561.6,432.0 561.8,485.8 562.1,554.7 562.4,566.8 562.6,119.2 562.9,367.8 563.2,473.3 563.4,249.6 563.7,456.3 564.0,530.5 564.2,480.1 564.5,536.2 564.8,458.3 565.0,573.1 565.3,394.3 565.6,476.7 565.8,432.5 566.1,549.3 566.4,269.3 566.6,568.0 566.9,476.1 567.2,548.9 567.4,119.2 567.7,494.6 568.0,119.2 568.2,119.2 568.5,458.4 568.8,539.6 569.0,421.2 569.3,500.4 569.6,546.8 569.8,525.9 570.1,534.6 570.4,494.2 570.6,446.0 570.9,491.6 571.2,471.7 571.4,493.4 571.7,453.9 572.0,406.1 572.2,561.7 572.5,484.1 572.8,504.5 573.0,371.8 573.3,415.6 573.6,555.3 573.8,545.1 574.1,570.2 574.4,468.1 574.6,478.0 574.9,513.4 575.2,562.4 575.4,466.4 575.7,541.5 576.0,449.7 576.2,539.4 576.5,305.2 576.8,377.6 577.0,405.0 577.3,569.8 577.6,416.3 577.8,402.5 578.1,531.9 578.4,495.0 578.6,518.9 578.9,429.7 579.2,280.2 579.4,546.2 579.7,551.5 580.0,454.6 580.2,541.7 580.5,434.3 580.8,536.7 581.0,425.9 581.3,421.2 581.6,476.2 581.8,413.8 582.1,540.0 582.4,119.2 582.6,475.9 582.9,542.0 583.2,489.8 583.4,450.1 583.7,488.4 584.0,459.5 584.2,467.7 584.5,575.0 584.8,500.5 585.0,511.9 585.3,119.2 585.6,383.6 585.8,517.0 586.1,416.1 586.4,250.6 586.6,440.2 586.9,546.9 587.1,436.6 587.4,431.8 587.7,552.7 587.9,455.1 588.2,119.2 588.5,491.8 588.7,393.9 589.0,534.8 589.3,539.6 589.5,549.2 589.8,420.5 590.1,571.1 590.3,436.3 590.6,502.9 590.9,424.8 591.1,446.7 591.4,488.8 591.7,438.0 591.9,119.2 592.2,396.8 592.5,403.2 592.7,426.9 593.0,518.0 593.3,497.6 593.5,556.8 593.8,501.3 594.1,497.8 594.3,374.9 594.6,322.0 594.9,540.3 595.1,566.6 595.4,520.9 595.7,467.4 595.9,322.2 596.2,542.1 596.5,543.2 596.7,539.8 597.0,378.6 597.3,515.1 597.5,498.3 597.8,535.9 598.1,440.6 598.3,500.3 598.6,479.5 598.9,516.5 599.1,510.9 599.4,119.2 599.7,509.6 599.9,448.2 600.2,503.5 600.5,532.3 600.7,457.0 601.0,525.1 601.3,474.9 601.5,399.2 601.8,495.1 602.1,515.6 602.3,394.6 602.6,487.4 602.9,517.9 603.1,480.2 603.4,428.9 603.7,437.7 603.9,119.2 604.2,444.5 604.5,484.3 604.7,537.2 605.0,480.4 605.3,582.9 605.5,450.0 605.8,531.5 606.1,539.1 606.3,354.5 606.6,467.7 606.9,313.7 607.1,517.1 607.4,475.8 607.7,577.7 607.9,509.0 608.2,178.6 608.5,311.6 608.7,571.3 609.0,119.2 609.3,517.6 609.5,416.0 609.8,387.3 610.1,457.2 610.3,472.7 610.6,442.3 610.9,504.9 611.1,278.3 611.4,570.0 611.7,434.5 611.9,474.2 612.2,362.9 612.5,486.9 612.7,119.2 613.0,473.2 613.2,501.0 613.5,450.2 613.8,447.8 614.0,448.6 614.3,532.9 614.6,340.5 614.8,325.0 615.1,477.1 615.4,524.9 615.6,555.9 615.9,390.8 616.2,413.9 616.4,467.9 616.7,529.7 617.0,450.2 617.2,175.5 617.5,488.0 617.8,441.4 618.0,521.0 618.3,499.9 618.6,119.2 618.8,483.5 619.1,546.4 619.4,194.3 619.6,119.2 619.9,119.2 620.2,498.5 620.4,354.2 620.7,465.2 621.0,508.4 621.2,575.1 621.5,338.9 621.8,574.8 622.0,520.1 622.3,531.3 622.6,501.4 622.8,482.6 623.1,516.0 623.4,510.5 623.6,548.0 623.9,537.8 624.2,522.5 624.4,510.7 624.7,488.0 625.0,477.2 625.2,564.0 625.5,430.1 625.8,119.2 626.0,505.5 626.3,502.6 626.6,547.5 626.8,465.2 627.1,584.0 627.4,583.8 627.6,452.2 627.9,532.7 628.2,510.4 628.4,241.8 628.7,452.1 629.0,544.9 629.2,495.9 629.5,119.2 629.8,366.3 630.0,415.5 630.3,491.2 630.6,119.2 630.8,518.9 631.1,492.2 631.4,438.7 631.6,380.8 631.9,546.6 632.2,512.5 632.4,458.3 632.7,459.4 633.0,119.2 633.2,498.3 633.5,536.7 633.8,543.9 634.0,459.6 634.3,119.2 634.6,501.3 634.8,525.8 635.1,512.9 635.4,532.9 635.6,507.4 635.9,503.1 636.2,458.5 636.4,499.6 636.7,559.5 637.0,507.3 637.2,489.3 637.5,515.2 637.8,119.2 638.0,487.4 638.3,529.4 638.6,439.2 638.8,524.8 639.1,499.7 639.4,503.7 639.6,537.4 639.9,560.7 640.1,454.7 640.4,431.0 640.7,451.0 640.9,480.3 641.2,508.4 641.5,355.6 641.7,119.2 642.0,417.4 642.3,494.6 642.5,440.7 642.8,430.6 643.1,529.3 643.3,548.2 643.6,451.2 643.9,421.8 644.1,450.8 644.4,510.9 644.7,119.2 644.9,526.0 645.2,416.4 645.5,434.2 645.7,519.7 646.0,435.8 646.3,504.7 646.5,537.1 646.8,508.8 647.1,532.1 647.3,431.0 647.6,313.0 647.9,481.4 648.1,408.1 648.4,500.2 648.7,119.2 648.9,428.0 649.2,466.4 649.5,411.2 649.7,503.7 650.0,470.3 650.3,559.8 650.5,253.4 650.8,495.4 651.1,119.2 651.3,119.2 651.6,119.2 651.9,119.2 652.1,119.2 652.4,362.8 652.7,511.8 652.9,443.5 653.2,357.5 653.5,523.9 653.7,231.6 654.0,458.3 654.3,542.5 654.5,497.7 654.8,617.5 655.1,425.6 655.3,581.7 655.6,488.4 655.9,446.0 656.1,119.2 656.4,553.8 656.7,558.9 656.9,495.5 657.2,576.4 657.5,388.6 657.7,369.2 658.0,509.8 658.3,267.9 658.5,487.5 658.8,319.5 659.1,425.5 659.3,538.9 659.6,469.7 659.9,524.8 660.1,435.9 660.4,298.1 660.7,443.7 660.9,546.8 661.2,248.5 661.5,515.8 661.7,546.8 662.0,459.1 662.3,389.6 662.5,451.5 662.8,340.7 663.1,535.2 663.3,502.3 663.6,555.0 663.9,485.5 664.1,384.6 664.4,494.1 664.7,514.2 664.9,119.2 665.2,392.4 665.5,479.6 665.7,498.8 666.0,390.3 666.2,459.9 666.5,383.1 666.8,528.4 667.0,495.2 667.3,527.0 667.6,563.2 667.8,493.9 668.1,457.1 668.4,430.4 668.6,467.1 668.9,520.1 669.2,445.9 669.4,532.4 669.7,457.6 670.0,553.2 670.2,567.6 670.5,486.0 670.8,502.6 671.0,532.0 671.3,564.7 671.6,480.8 671.8,540.7 672.1,342.7 672.4,462.3 672.6,529.4 672.9,119.2 673.2,502.4 673.4,535.7 673.7,559.0 674.0,456.2 674.2,541.8 674.5,462.9 674.8,533.1 675.0,477.7 675.3,486.5 675.6,420.8 675.8,440.8 676.1,551.8 676.4,439.6 676.6,335.6 676.9,549.9 677.2,410.5 677.4,119.2 677.7,480.0 678.0,229.9 678.2,595.8 678.5,558.6 678.8,501.4 679.0,562.0 679.3,519.0 679.6,437.9 679.8,508.5 680.1,557.6 680.4,432.0 680.6,477.3 680.9,549.2 681.2,119.2 681.4,584.5 681.7,494.9 682.0,579.6 682.2,413.2 682.5,494.6 682.8,119.2 683.0,119.2 683.3,501.6 683.6,491.0 683.8,458.3 684.1,339.5 684.4,119.2 684.6,382.1 684.9,467.6 685.2,232.3 685.4,434.8 685.7,564.3 686.0,119.2 686.2,557.9 686.5,186.0 686.8,432.8 687.0,570.9 687.3,420.9 687.6,119.2 687.8,470.0 688.1,514.1 688.4,479.0 688.6,424.7 688.9,537.9 689.2,550.2 689.4,412.5 689.7,579.9 690.0,399.6 690.2,580.4 690.5,501.7 690.8,388.0 691.0,119.2 691.3,562.6 691.6,523.2 691.8,422.1 692.1,429.9 692.4,593.9 692.6,467.0 692.9,549.4 693.1,325.3 693.4,538.4 693.7,119.2 693.9,457.5 694.2,418.2 694.5,378.4 694.7,119.2 695.0,533.2 695.3,531.8 695.5,538.3 695.8,557.1 696.1,524.3 696.3,119.2 696.6,481.5 696.9,418.5 697.1,306.1 697.4,428.4 697.7,469.3 697.9,363.4 698.2,460.2 698.5,400.4 698.7,441.8 699.0,498.2 699.3,419.5 699.5,554.2 699.8,119.2 700.1,495.7 700.3,422.8 700.6,564.8 700.9,119.2 701.1,448.7 701.4,432.4 701.7,526.6 701.9,556.9 702.2,119.2 702.5,119.2 702.7,488.3 703.0,205.2 703.3,478.2 703.5,385.1 703.8,420.8 704.1,459.7 704.3,439.6 704.6,500.7 704.9,466.8 705.1,472.3 705.4,523.4 705.7,483.0 705.9,274.6 706.2,497.0 706.5,480.7 706.7,543.8 707.0,540.2 707.3,554.7 707.5,535.3 707.8,379.9 708.1,493.2 708.3,583.1 708.6,395.3 708.9,530.1 709.1,549.1 709.4,377.8 709.7,491.9 709.9,323.1 710.2,481.5 710.5,536.4 710.7,536.1 711.0,582.7 711.3,119.2 711.5,531.7 711.8,390.1 712.1,119.2 712.3,119.2 712.6,530.3 712.9,473.8 713.1,334.7 713.4,444.5 713.7,119.2 713.9,373.5 714.2,509.7 714.5,539.8 714.7,591.1 715.0,499.5 715.3,507.2 715.5,478.0 715.8,252.7 716.1,512.2 716.3,516.7 716.6,462.5 716.9,510.1 717.1,525.2 717.4,540.1 717.7,498.6 717.9,473.1 718.2,547.5 718.5,526.7 718.7,492.4 719.0,543.7 719.3,432.5 719.5,427.9 719.8,512.3 720.0,232.7 720.3,418.2 720.6,454.1 720.8,466.3 721.1,396.6 721.4,303.3 721.6,459.4 721.9,232.8 722.2,484.8 722.4,518.1 722.7,531.4 723.0,512.2 723.2,497.4 723.5,506.5 723.8,543.9 724.0,442.5 724.3,545.7 724.6,548.7 724.8,485.8 725.1,119.2 725.4,531.6 725.6,307.1 725.9,501.3 726.2,461.9 726.4,547.9 726.7,239.0 727.0,507.3 727.2,418.6 727.5,473.6 727.8,445.8 728.0,521.9 728.3,119.2 728.6,229.3 728.8,357.8 729.1,453.9 729.4,447.8 729.6,524.7 729.9,521.4 730.2,516.8 730.4,571.6 730.7,119.2 731.0,534.1 731.2,572.2 731.5,494.6 731.8,508.8 732.0,534.8 732.3,482.9 732.6,459.2 732.8,413.5 733.1,532.0 733.4,538.1 733.6,453.2 733.9,497.6 734.2,119.2 734.4,442.3 734.7,397.6 735.0,460.8 735.2,551.5 735.5,594.2 735.8,439.4 736.0,518.7 736.3,509.0 736.6,321.2 736.8,443.1 737.1,517.6 737.4,502.3 737.6,468.6 737.9,464.3 738.2,511.2 738.4,478.7 738.7,423.3 739.0,538.4 739.2,469.5 739.5,577.9 739.8,570.6 740.0,476.5 740.3,446.1 740.6,531.6 740.8,421.4 741.1,498.5 741.4,423.0 741.6,532.4 741.9,370.4 742.2,411.2 742.4,397.8 742.7,534.5 743.0,389.8 743.2,476.3 743.5,535.8 743.8,527.7 744.0,492.8 744.3,499.5 744.6,431.3 744.8,502.0 745.1,551.9 745.4,426.1 745.6,332.3 745.9,554.4 746.1,383.5 746.4,550.2 746.7,319.8 746.9,505.9 747.2,538.5 747.5,482.2 747.7,521.0 748.0,363.8 748.3,498.0 748.5,470.2 748.8,487.2 749.1,435.5 749.3,523.7 749.6,333.5 749.9,479.1 750.1,478.8 750.4,379.9 750.7,487.1 750.9,509.8 751.2,517.3 751.5,538.1 751.7,480.3 752.0,431.6 752.3,479.3 752.5,563.2 752.8,473.6 753.1,441.2 753.3,469.6 753.6,374.9 753.9,501.4 754.1,500.8 754.4,534.1 754.7,542.8 754.9,491.9 755.2,524.6 755.5,464.6 755.7,519.9 756.0,502.4 756.3,363.1 756.5,453.4 756.8,439.8 757.1,543.8 757.3,551.7 757.6,531.9 757.9,427.7 758.1,554.7 758.4,505.4 758.7,393.1 758.9,529.5 759.2,509.1 759.5,472.1 759.7,573.3 760.0,420.2 760.3,524.5 760.5,524.9 760.8,578.5 761.1,546.6 761.3,594.1 761.6,426.8 761.9,424.4 762.1,549.7 762.4,441.2 762.7,482.1 762.9,432.7 763.2,564.5 763.5,579.2 763.7,573.9 764.0,478.5 764.3,347.2 764.5,507.9 764.8,583.8 765.1,534.9 765.3,119.2 765.6,575.3 765.9,558.6 766.1,494.9 766.4,535.0 766.7,554.8 766.9,423.1 767.2,456.6 767.5,492.4 767.7,352.2 768.0,586.2 768.3,475.9 768.5,471.3 768.8,435.3 769.1,561.7 769.3,119.2 769.6,519.6 769.9,605.8 770.1,471.8 770.4,517.3 770.7,544.1 770.9,514.7 771.2,515.0 771.5,491.2 771.7,510.6 772.0,571.6 772.3,561.2 772.5,515.9 772.8,527.6 773.0,387.2 773.3,560.9 773.6,606.6 773.8,541.2 774.1,593.7 774.4,510.6 774.6,545.0 774.9,546.8 775.2,603.5 775.4,528.4 775.7,548.5 776.0,616.9 776.2,520.6 776.5,491.5 776.8,573.9 777.0,541.5 777.3,341.0 777.6,538.7 777.8,470.3 778.1,425.2 778.4,591.8 778.6,494.4 778.9,530.1 779.2,492.9 779.4,507.6 779.7,463.9 780.0,565.7 780.2,119.2 780.5,501.0 780.8,490.4 781.0,595.8 781.3,380.1 781.6,261.4 781.8,509.3 782.1,582.2 782.4,549.3 782.6,474.3 782.9,451.9 783.2,559.7 783.4,208.5 783.7,441.3 784.0,426.8 784.2,317.3 784.5,514.0 784.8,488.8 785.0,599.6 785.3,591.1 785.6,517.3 785.8,499.8 786.1,519.6 786.4,597.5 786.6,463.7 786.9,461.1 787.2,542.8 787.4,508.8 787.7,119.2 788.0,498.6 788.2,617.5 788.5,538.6 788.8,546.8 789.0,397.2 789.3,567.5 789.6,530.1 789.8,538.0 790.1,545.5 790.4,597.5 790.6,351.3 790.9,527.0 791.2,484.3 791.4,500.0 791.7,574.3 792.0,528.4 792.2,415.4 792.5,591.6 792.8,445.6 793.0,501.7 793.3,545.0 793.6,545.3 793.8,475.9 794.1,533.5 794.4,325.9 794.6,471.1 794.9,387.3 795.2,465.9 795.4,567.8 795.7,525.0 796.0,274.8 796.2,514.6 796.5,594.4 796.8,469.6 797.0,460.2 797.3,508.5 797.6,576.9 797.8,360.3 798.1,533.6 798.4,541.3 798.6,214.3 798.9,457.5 799.2,425.0 799.4,427.6 799.7,599.0 799.9,412.5 800.2,527.2 800.5,550.5 800.7,547.2 801.0,463.4 801.3,231.1 801.5,119.2 801.8,525.8 802.1,408.9 802.3,511.2 802.6,488.4 802.9,530.4 803.1,481.2 803.4,468.9 803.7,548.3 803.9,572.8 804.2,517.1 804.5,571.8 804.7,513.8 805.0,417.8 805.3,119.2 805.5,603.8 805.8,558.2 806.1,490.3 806.3,492.6 806.6,550.9 806.9,464.4 807.1,549.9 807.4,366.8 807.7,434.3 807.9,228.9 808.2,415.4 808.5,119.2 808.7,569.6 809.0,501.4 809.3,567.0 809.5,421.7 809.8,550.3 810.1,237.3 810.3,119.2 810.6,265.4 810.9,581.3 811.1,534.9 811.4,573.8 811.7,568.5 811.9,497.1 812.2,590.3 812.5,230.2 812.7,513.8 813.0,539.9 813.3,530.6 813.5,536.2 813.8,198.4 814.1,521.4 814.3,516.4 814.6,533.7 814.9,421.3 815.1,484.9 815.4,491.0 815.7,588.7 815.9,119.2 816.2,414.2 816.5,500.8 816.7,402.8 817.0,479.6 817.3,294.4 817.5,453.0 817.8,531.9 818.1,509.0 818.3,408.0 818.6,369.9 818.9,397.6 819.1,357.0 819.4,393.1 819.7,572.8 819.9,439.1 820.2,119.2 820.5,119.2 820.7,560.7 821.0,543.0 821.3,486.4 821.5,546.8 821.8,479.6 822.1,119.2 822.3,463.8 822.6,579.4 822.9,510.0 823.1,440.2 823.4,514.3 823.7,464.0 823.9,545.7 824.2,514.5 824.5,119.2 824.7,557.3 825.0,500.8 825.3,508.3 825.5,523.1 825.8,468.9 826.0,405.0 826.3,513.6 826.6,536.4 826.8,515.2 827.1,378.9 827.4,548.7 827.6,556.6 827.9,533.3 828.2,450.9 828.4,499.9 828.7,457.5 829.0,561.4 829.2,515.3 829.5,328.1 829.8,119.2 830.0,119.2 830.3,302.0 830.6,344.1 830.8,400.9 831.1,500.8 831.4,520.7 831.6,119.2 831.9,587.2 832.2,412.6 832.4,542.5 832.7,489.9 833.0,502.6 833.2,471.8 833.5,337.8 833.8,441.9 834.0,522.0 834.3,387.8 834.6,472.8 834.8,522.5 835.1,489.1 835.4,436.4 835.6,393.1 835.9,550.8 836.2,534.1 836.4,585.6 836.7,441.9 837.0,387.5 837.2,317.9 837.5,280.4 837.8,559.1 838.0,494.4 838.3,556.4 838.6,554.5 838.8,508.9 839.1,527.6 839.4,345.9 839.6,549.4 839.9,119.2 840.2,522.0 840.4,227.8 840.7,477.0 841.0,568.4 841.2,444.2 841.5,392.6 841.8,408.2 842.0,515.0 842.3,551.8 842.6,429.4 842.8,533.9 843.1,483.8 843.4,119.2 843.6,575.3 843.9,511.4 844.2,512.5 844.4,553.4 844.7,119.2 845.0,470.6 845.2,576.8 845.5,538.8 845.8,119.2 846.0,186.6 846.3,469.3 846.6,484.9 846.8,481.9 847.1,505.9 847.4,383.2 847.6,399.0 847.9,479.1 848.2,119.2 848.4,243.3 848.7,548.3 849.0,119.2 849.2,475.4 849.5,483.2 849.8,525.7 850.0,234.9 850.3,563.6 850.6,119.2 850.8,423.1 851.1,373.7 851.4,465.9 851.6,479.6 851.9,498.0 852.2,119.2 852.4,512.0 852.7,460.0 852.9,556.4 853.2,502.2 853.5,471.7 853.7,119.2 854.0,550.7 854.3,334.0 854.5,428.8 854.8,518.9 855.1,494.9 855.3,402.2 855.6,382.6 855.9,119.2 856.1,119.2 856.4,345.4 856.7,415.6 856.9,119.2 857.2,479.8 857.5,119.2 857.7,119.2 858.0,364.1 858.3,119.2 858.5,414.3 858.8,245.4 859.1,119.2 859.3,119.2 859.6,468.1 859.9,119.2 860.1,314.8 860.4,410.1 860.7,119.2 860.9,349.7 861.2,479.3 861.5,119.2 861.7,119.2 862.0,382.8 862.3,119.2 862.5,119.2 862.8,478.4 863.1,352.4 863.3,119.2 863.6,119.2 863.9,442.6 864.1,119.2 864.4,119.2 864.7,119.2 864.9,119.2 865.2,119.2 865.5,119.2 865.7,119.2 866.0,119.2" fill="none" stroke="#30bcef" stroke-width="1.2" stroke-linejoin="round"/>
<path d="M67.3 649.2h0M67.5 627.6h0M67.8 656.1h0M68.1 643.9h0M68.3 645.5h0M68.6 631.7h0M68.9 646.9h0M69.1 641.0h0M69.4 647.2h0M69.7 645.4h0M69.9 656.3h0M70.2 657.4h0M70.5 648.1h0M70.7 650.3h0M71.0 649.0h0M71.3 636.8h0M71.5 658.6h0M71.8 650.8h0M72.1 638.3h0M72.3 658.6h0M72.6 657.1h0M72.9 661.1h0M73.1 644.7h0M73.4 646.7h0M73.7 660.1h0M73.9 638.8h0M74.2 654.7h0M74.5 653.8h0M74.7 646.8h0M75.0 643.4h0M75.3 657.9h0M75.5 649.1h0M75.8 652.1h0M76.1 635.5h0M76.3 656.9h0M76.6 635.8h0M76.9 661.8h0M77.1 645.9h0M77.4 634.1h0M77.7 645.3h0M77.9 637.3h0M78.2 641.0h0M78.5 660.4h0M78.7 656.1h0M79.0 638.6h0M79.3 648.9h0M79.5 652.3h0M79.8 634.9h0M80.1 646.6h0M80.3 662.0h0M80.6 658.4h0M80.8 650.0h0M81.1 653.8h0M81.4 657.3h0M81.6 652.5h0M81.9 653.8h0M82.2 650.6h0M82.4 651.1h0M82.7 653.0h0M83.0 653.8h0M83.2 650.2h0M83.5 651.7h0M83.8 650.2h0M84.0 650.7h0M84.3 657.3h0M84.6 648.0h0M84.8 657.6h0M85.1 639.9h0M85.4 617.3h0M85.6 644.1h0M85.9 640.1h0M86.2 603.9h0M86.4 638.6h0M86.7 647.0h0M87.0 625.2h0M87.2 636.9h0M87.5 610.9h0M87.8 631.2h0M88.0 179.0h0M88.3 599.8h0M88.6 541.0h0M88.8 523.5h0M89.1 564.5h0M89.4 500.5h0M89.6 489.9h0M89.9 376.0h0M90.2 480.6h0M90.4 457.9h0M90.7 422.5h0M91.0 456.1h0M91.2 485.2h0M91.5 467.9h0M91.8 437.4h0M92.0 444.6h0M92.3 481.3h0M92.6 454.0h0M92.8 439.7h0M93.1 508.2h0M93.4 497.6h0M93.6 507.8h0M93.9 502.3h0M94.2 372.5h0M94.4 439.3h0M94.7 506.4h0M95.0 408.7h0M95.2 390.6h0M95.5 447.3h0M95.8 430.1h0M96.0 368.4h0M96.3 477.0h0M96.6 354.3h0M96.8 488.9h0M97.1 471.6h0M97.4 522.9h0M97.6 412.7h0M97.9 482.2h0M98.2 375.4h0M98.4 511.3h0M98.7 376.4h0M99.0 524.1h0M99.2 466.0h0M99.5 459.0h0M99.8 413.2h0M100.0 315.8h0M100.3 495.6h0M100.6 468.8h0M100.8 457.2h0M101.1 462.1h0M101.4 471.8h0M101.6 439.4h0M101.9 471.4h0M102.2 374.6h0M102.4 492.6h0M102.7 387.8h0M103.0 438.1h0M103.2 432.6h0M103.5 374.0h0M103.8 486.9h0M104.0 409.5h0M104.3 466.8h0M104.6 523.9h0M104.8 418.3h0M105.1 512.0h0M105.4 379.3h0M105.6 441.4h0M105.9 490.2h0M106.2 502.1h0M106.4 440.9h0M106.7 410.4h0M107.0 410.2h0M107.2 483.1h0M107.5 448.6h0M107.7 465.3h0M108.0 479.8h0M108.3 356.2h0M108.5 481.7h0M108.8 502.7h0M109.1 438.0h0M109.3 450.1h0M109.6 496.6h0M109.9 504.5h0M110.1 519.7h0M110.4 342.8h0M110.7 439.5h0M110.9 510.6h0M111.2 443.0h0M111.5 446.7h0M111.7 341.7h0M112.0 430.0h0M112.3 399.0h0M112.5 424.5h0M112.8 510.0h0M113.1 459.6h0M113.3 457.4h0M113.6 446.6h0M113.9 531.1h0M114.1 456.4h0M114.4 484.4h0M114.7 423.9h0M114.9 458.8h0M115.2 492.3h0M115.5 500.1h0M115.7 480.8h0M116.0 346.5h0M116.3 472.3h0M116.5 517.6h0M116.8 372.0h0M117.1 424.5h0M117.3 467.5h0M117.6 461.3h0M117.9 442.8h0M118.1 460.3h0M118.4 481.1h0M118.7 408.3h0M118.9 480.2h0M119.2 486.3h0M119.5 436.1h0M119.7 479.5h0M120.0 330.4h0M120.3 334.7h0M120.5 371.1h0M120.8 454.3h0M121.1 343.9h0M121.3 528.9h0M121.6 491.7h0M121.9 521.6h0M122.1 510.1h0M122.4 532.9h0M122.7 474.5h0M122.9 509.0h0M123.2 374.4h0M123.5 381.8h0M123.7 503.9h0M124.0 512.6h0M124.3 521.1h0M124.5 432.2h0M124.8 436.2h0M125.1 421.6h0M125.3 500.8h0M125.6 537.1h0M125.9 488.7h0M126.1 518.8h0M126.4 520.3h0M126.7 420.1h0M126.9 461.9h0M127.2 362.9h0M127.5 503.6h0M127.7 504.1h0M128.0 334.1h0M128.3 398.1h0M128.5 528.2h0M128.8 527.6h0M129.1 488.7h0M129.3 431.8h0M129.6 496.3h0M129.9 504.7h0M130.1 509.2h0M130.4 464.2h0M130.7 361.7h0M130.9 452.5h0M131.2 515.7h0M131.5 527.4h0M131.7 565.2h0M132.0 494.8h0M132.3 449.8h0M132.5 461.7h0M132.8 519.1h0M133.1 362.9h0M133.3 537.3h0M133.6 434.4h0M133.8 470.4h0M134.1 119.2h0M134.4 435.4h0M134.6 534.0h0M134.9 527.7h0M135.2 119.2h0M135.4 367.8h0M135.7 443.8h0M136.0 333.2h0M136.2 119.2h0M136.5 354.6h0M136.8 477.3h0M137.0 119.2h0M137.3 529.0h0M137.6 529.4h0M137.8 538.7h0M138.1 527.5h0M138.4 542.2h0M138.6 503.3h0M138.9 519.1h0M139.2 506.4h0M139.4 468.1h0M139.7 527.6h0M140.0 517.0h0M140.2 482.7h0M140.5 355.1h0M140.8 439.5h0M141.0 545.5h0M141.3 449.6h0M141.6 119.2h0M141.8 496.9h0M142.1 553.3h0M142.4 516.5h0M142.6 366.1h0M142.9 365.6h0M143.2 426.5h0M143.4 494.4h0M143.7 494.0h0M144.0 450.7h0M144.2 454.0h0M144.5 390.1h0M144.8 546.3h0M145.0 474.0h0M145.3 484.5h0M145.6 498.3h0M145.8 489.1h0M146.1 499.6h0M146.4 502.4h0M146.6 524.4h0M146.9 495.6h0M147.2 445.3h0M147.4 401.4h0M147.7 473.0h0M148.0 349.6h0M148.2 373.8h0M148.5 530.0h0M148.8 460.0h0M149.0 461.9h0M149.3 435.2h0M149.6 397.8h0M149.8 485.9h0M150.1 410.0h0M150.4 526.9h0M150.6 435.4h0M150.9 513.1h0M151.2 513.6h0M151.4 418.2h0M151.7 497.7h0M152.0 436.1h0M152.2 474.4h0M152.5 457.1h0M152.8 487.9h0M153.0 527.5h0M153.3 394.2h0M153.6 394.3h0M153.8 467.4h0M154.1 381.0h0M154.4 504.2h0M154.6 511.3h0M154.9 512.6h0M155.2 523.3h0M155.4 482.4h0M155.7 400.9h0M156.0 323.0h0M156.2 453.3h0M156.5 450.3h0M156.8 507.8h0M157.0 440.7h0M157.3 481.4h0M157.6 353.5h0M157.8 395.0h0M158.1 490.4h0M158.4 490.4h0M158.6 348.5h0M158.9 516.0h0M159.2 347.2h0M159.4 399.4h0M159.7 499.7h0M160.0 484.8h0M160.2 429.4h0M160.5 523.4h0M160.7 519.2h0M161.0 429.9h0M161.3 464.4h0M161.5 460.2h0M161.8 293.4h0M162.1 470.4h0M162.3 502.0h0M162.6 421.5h0M162.9 449.7h0M163.1 503.7h0M163.4 520.9h0M163.7 459.8h0M163.9 501.9h0M164.2 516.5h0M164.5 511.7h0M164.7 397.1h0M165.0 492.8h0M165.3 472.3h0M165.5 535.6h0M165.8 532.5h0M166.1 543.3h0M166.3 479.9h0M166.6 512.1h0M166.9 549.0h0M167.1 316.1h0M167.4 481.9h0M167.7 516.7h0M167.9 424.8h0M168.2 462.7h0M168.5 465.7h0M168.7 326.3h0M169.0 493.8h0M169.3 441.1h0M169.5 519.7h0M169.8 526.6h0M170.1 524.2h0M170.3 470.4h0M170.6 482.6h0M170.9 506.0h0M171.1 462.1h0M171.4 416.0h0M171.7 367.9h0M171.9 448.8h0M172.2 428.1h0M172.5 465.5h0M172.7 453.4h0M173.0 495.8h0M173.3 526.9h0M173.5 414.9h0M173.8 514.4h0M174.1 346.8h0M174.3 388.9h0M174.6 416.5h0M174.9 471.7h0M175.1 471.4h0M175.4 414.7h0M175.7 399.7h0M175.9 521.6h0M176.2 533.8h0M176.5 465.4h0M176.7 451.1h0M177.0 480.7h0M177.3 478.9h0M177.5 501.6h0M177.8 471.6h0M178.1 537.3h0M178.3 456.0h0M178.6 429.3h0M178.9 455.4h0M179.1 524.3h0M179.4 504.5h0M179.7 472.3h0M179.9 491.5h0M180.2 473.8h0M180.5 468.7h0M180.7 526.7h0M181.0 463.4h0M181.3 310.0h0M181.5 505.7h0M181.8 519.3h0M182.1 473.6h0M182.3 119.2h0M182.6 432.3h0M182.9 455.2h0M183.1 431.0h0M183.4 508.1h0M183.7 435.0h0M183.9 450.6h0M184.2 414.1h0M184.5 402.9h0M184.7 524.3h0M185.0 528.8h0M185.3 512.2h0M185.5 374.0h0M185.8 472.9h0M186.1 503.2h0M186.3 498.2h0M186.6 542.0h0M186.8 339.6h0M187.1 456.4h0M187.4 531.9h0M187.6 465.3h0M187.9 302.2h0M188.2 307.9h0M188.4 534.9h0M188.7 501.5h0M189.0 444.2h0M189.2 362.5h0M189.5 438.5h0M189.8 448.0h0M190.0 524.8h0M190.3 441.7h0M190.6 375.9h0M190.8 516.1h0M191.1 516.2h0M191.4 517.0h0M191.6 460.0h0M191.9 487.7h0M192.2 357.2h0M192.4 391.2h0M192.7 301.9h0M193.0 463.2h0M193.2 535.4h0M193.5 493.4h0M193.8 481.9h0M194.0 369.3h0M194.3 480.9h0M194.6 410.7h0M194.8 310.4h0M195.1 446.5h0M195.4 503.2h0M195.6 537.7h0M195.9 435.7h0M196.2 349.2h0M196.4 549.0h0M196.7 509.8h0M197.0 492.5h0M197.2 447.8h0M197.5 119.2h0M197.8 333.8h0M198.0 499.9h0M198.3 465.7h0M198.6 492.8h0M198.8 417.5h0M199.1 450.4h0M199.4 426.8h0M199.6 511.7h0M199.9 475.1h0M200.2 457.9h0M200.4 310.0h0M200.7 444.4h0M201.0 496.1h0M201.2 398.0h0M201.5 523.2h0M201.8 473.0h0M202.0 477.2h0M202.3 458.0h0M202.6 508.8h0M202.8 471.3h0M203.1 119.2h0M203.4 491.9h0M203.6 565.3h0M203.9 567.4h0M204.2 437.0h0M204.4 502.2h0M204.7 270.1h0M205.0 479.1h0M205.2 412.3h0M205.5 119.2h0M205.8 522.3h0M206.0 513.3h0M206.3 578.2h0M206.6 564.9h0M206.8 455.1h0M207.1 564.7h0M207.4 477.1h0M207.6 460.4h0M207.9 549.6h0M208.2 547.5h0M208.4 554.3h0M208.7 543.8h0M209.0 521.6h0M209.2 537.1h0M209.5 530.0h0M209.8 546.4h0M210.0 381.6h0M210.3 119.2h0M210.6 539.5h0M210.8 555.4h0M211.1 485.2h0M211.4 512.4h0M211.6 393.7h0M211.9 517.0h0M212.2 476.6h0M212.4 546.4h0M212.7 579.0h0M213.0 546.4h0M213.2 562.0h0M213.5 119.2h0M213.7 483.8h0M214.0 500.4h0M214.3 520.3h0M214.5 547.2h0M214.8 494.8h0M215.1 536.1h0M215.3 119.2h0M215.6 485.9h0M215.9 543.9h0M216.1 550.0h0M216.4 464.4h0M216.7 549.3h0M216.9 535.3h0M217.2 372.0h0M217.5 543.2h0M217.7 555.0h0M218.0 418.0h0M218.3 217.1h0M218.5 576.2h0M218.8 119.2h0M219.1 558.9h0M219.3 545.3h0M219.6 445.2h0M219.9 593.9h0M220.1 592.7h0M220.4 507.8h0M220.7 564.3h0M220.9 570.3h0M221.2 589.7h0M221.5 339.5h0M221.7 462.1h0M222.0 548.1h0M222.3 565.8h0M222.5 503.1h0M222.8 480.5h0M223.1 521.6h0M223.3 542.4h0M223.6 582.0h0M223.9 510.9h0M224.1 381.1h0M224.4 119.2h0M224.7 591.8h0M224.9 544.6h0M225.2 471.4h0M225.5 465.3h0M225.7 558.6h0M226.0 559.3h0M226.3 437.7h0M226.5 526.8h0M226.8 487.2h0M227.1 541.0h0M227.3 383.4h0M227.6 532.7h0M227.9 453.0h0M228.1 572.9h0M228.4 585.7h0M228.7 511.2h0M228.9 119.2h0M229.2 515.1h0M229.5 472.5h0M229.7 515.9h0M230.0 535.3h0M230.3 507.9h0M230.5 236.5h0M230.8 119.2h0M231.1 551.9h0M231.3 584.8h0M231.6 449.1h0M231.9 507.0h0M232.1 558.1h0M232.4 532.8h0M232.7 119.2h0M232.9 457.7h0M233.2 572.2h0M233.5 405.2h0M233.7 119.2h0M234.0 590.1h0M234.3 567.9h0M234.5 535.2h0M234.8 518.9h0M235.1 482.2h0M235.3 566.3h0M235.6 582.5h0M235.9 546.0h0M236.1 579.5h0M236.4 563.0h0M236.7 119.2h0M236.9 360.4h0M237.2 500.7h0M237.5 542.9h0M237.7 496.7h0M238.0 537.4h0M238.3 119.2h0M238.5 505.0h0M238.8 579.9h0M239.1 563.7h0M239.3 472.9h0M239.6 521.8h0M239.9 481.1h0M240.1 510.2h0M240.4 119.2h0M240.6 544.6h0M240.9 459.8h0M241.2 528.8h0M241.4 474.4h0M241.7 518.7h0M242.0 565.9h0M242.2 576.2h0M242.5 119.2h0M242.8 119.2h0M243.0 413.0h0M243.3 119.2h0M243.6 543.1h0M243.8 536.8h0M244.1 502.7h0M244.4 578.9h0M244.6 536.1h0M244.9 585.6h0M245.2 340.7h0M245.4 515.3h0M245.7 463.3h0M246.0 403.1h0M246.2 498.6h0M246.5 590.5h0M246.8 376.1h0M247.0 554.3h0M247.3 583.9h0M247.6 492.7h0M247.8 119.2h0M248.1 390.7h0M248.4 479.5h0M248.6 583.4h0M248.9 519.3h0M249.2 546.4h0M249.4 474.8h0M249.7 531.2h0M250.0 441.1h0M250.2 119.2h0M250.5 344.3h0M250.8 445.6h0M251.0 119.2h0M251.3 119.2h0M251.6 549.9h0M251.8 559.6h0M252.1 505.5h0M252.4 485.9h0M252.6 529.9h0M252.9 511.8h0M253.2 553.3h0M253.4 541.4h0M253.7 119.2h0M254.0 180.2h0M254.2 539.3h0M254.5 557.4h0M254.8 533.5h0M255.0 578.6h0M255.3 494.5h0M255.6 343.5h0M255.8 523.6h0M256.1 493.3h0M256.4 514.1h0M256.6 476.2h0M256.9 516.6h0M257.2 571.0h0M257.4 401.0h0M257.7 573.2h0M258.0 488.7h0M258.2 474.7h0M258.5 568.5h0M258.8 541.2h0M259.0 537.0h0M259.3 119.2h0M259.6 479.2h0M259.8 399.3h0M260.1 534.1h0M260.4 474.0h0M260.6 468.2h0M260.9 463.6h0M261.2 480.9h0M261.4 538.1h0M261.7 498.6h0M262.0 119.2h0M262.2 534.9h0M262.5 273.5h0M262.8 566.8h0M263.0 583.6h0M263.3 478.7h0M263.6 425.3h0M263.8 551.8h0M264.1 575.6h0M264.4 503.2h0M264.6 508.3h0M264.9 550.9h0M265.2 578.6h0M265.4 429.5h0M265.7 546.0h0M266.0 436.4h0M266.2 577.4h0M266.5 511.8h0M266.8 557.5h0M267.0 119.2h0M267.3 498.8h0M267.5 536.4h0M267.8 482.2h0M268.1 508.5h0M268.3 550.5h0M268.6 567.0h0M268.9 556.5h0M269.1 471.0h0M269.4 559.3h0M269.7 579.1h0M269.9 473.7h0M270.2 456.4h0M270.5 561.1h0M270.7 482.4h0M271.0 542.9h0M271.3 557.3h0M271.5 401.5h0M271.8 554.4h0M272.1 482.2h0M272.3 520.1h0M272.6 559.1h0M272.9 119.2h0M273.1 544.3h0M273.4 529.8h0M273.7 471.6h0M273.9 119.2h0M274.2 537.7h0M274.5 515.9h0M274.7 552.0h0M275.0 568.6h0M275.3 499.0h0M275.5 484.7h0M275.8 439.1h0M276.1 525.5h0M276.3 370.0h0M276.6 552.8h0M276.9 545.8h0M277.1 505.3h0M277.4 576.7h0M277.7 493.6h0M277.9 524.5h0M278.2 515.2h0M278.5 571.7h0M278.7 535.3h0M279.0 496.7h0M279.3 487.9h0M279.5 516.6h0M279.8 481.9h0M280.1 365.8h0M280.3 530.1h0M280.6 568.5h0M280.9 366.0h0M281.1 119.2h0M281.4 450.0h0M281.7 504.1h0M281.9 560.7h0M282.2 484.2h0M282.5 396.7h0M282.7 597.1h0M283.0 514.1h0M283.3 412.0h0M283.5 431.9h0M283.8 491.1h0M284.1 578.1h0M284.3 604.2h0M284.6 511.1h0M284.9 492.4h0M285.1 556.7h0M285.4 547.7h0M285.7 119.2h0M285.9 502.8h0M286.2 527.2h0M286.5 502.3h0M286.7 557.8h0M287.0 577.9h0M287.3 572.4h0M287.5 418.5h0M287.8 470.2h0M288.1 488.2h0M288.3 470.4h0M288.6 555.7h0M288.9 550.3h0M289.1 599.6h0M289.4 513.1h0M289.7 476.3h0M289.9 568.4h0M290.2 428.2h0M290.5 589.9h0M290.7 558.5h0M291.0 545.0h0M291.3 485.3h0M291.5 474.5h0M291.8 585.1h0M292.1 336.9h0M292.3 303.2h0M292.6 578.4h0M292.9 509.7h0M293.1 564.2h0M293.4 504.5h0M293.6 567.8h0M293.9 119.2h0M294.2 586.3h0M294.4 545.8h0M294.7 521.7h0M295.0 554.4h0M295.2 581.2h0M295.5 458.1h0M295.8 573.5h0M296.0 498.8h0M296.3 569.7h0M296.6 537.8h0M296.8 545.7h0M297.1 574.6h0M297.4 560.4h0M297.6 603.9h0M297.9 573.0h0M298.2 569.7h0M298.4 564.1h0M298.7 594.2h0M299.0 591.5h0M299.2 619.2h0M299.5 520.2h0M299.8 592.8h0M300.0 603.5h0M300.3 624.5h0M300.6 594.0h0M300.8 533.1h0M301.1 490.8h0M301.4 623.4h0M301.6 497.8h0M301.9 596.9h0M302.2 608.9h0M302.4 580.3h0M302.7 585.1h0M303.0 443.6h0M303.2 587.7h0M303.5 589.2h0M303.8 580.8h0M304.0 560.3h0M304.3 523.7h0M304.6 580.3h0M304.8 559.8h0M305.1 544.3h0M305.4 559.0h0M305.6 582.0h0M305.9 611.7h0M306.2 605.5h0M306.4 611.8h0M306.7 513.1h0M307.0 632.8h0M307.2 543.0h0M307.5 539.8h0M307.8 574.9h0M308.0 610.0h0M308.3 591.1h0M308.6 577.2h0M308.8 592.6h0M309.1 638.8h0M309.4 621.9h0M309.6 607.1h0M309.9 625.3h0M310.2 587.7h0M310.4 598.9h0M310.7 511.5h0M311.0 614.2h0M311.2 608.3h0M311.5 417.7h0M311.8 564.9h0M312.0 632.0h0M312.3 572.7h0M312.6 629.5h0M312.8 585.6h0M313.1 470.7h0M313.4 610.9h0M313.6 561.2h0M313.9 577.3h0M314.2 528.1h0M314.4 617.7h0M314.7 597.1h0M315.0 572.4h0M315.2 610.3h0M315.5 617.3h0M315.8 586.7h0M316.0 564.2h0M316.3 574.0h0M316.6 622.0h0M316.8 587.1h0M317.1 591.6h0M317.4 532.8h0M317.6 617.2h0M317.9 606.6h0M318.2 513.4h0M318.4 566.8h0M318.7 621.8h0M319.0 608.5h0M319.2 609.8h0M319.5 610.3h0M319.8 520.0h0M320.0 615.9h0M320.3 633.5h0M320.5 534.5h0M320.8 586.5h0M321.1 573.8h0M321.3 586.6h0M321.6 575.8h0M321.9 568.4h0M322.1 585.3h0M322.4 635.9h0M322.7 593.5h0M322.9 467.4h0M323.2 584.6h0M323.5 593.7h0M323.7 530.3h0M324.0 623.6h0M324.3 625.7h0M324.5 627.0h0M324.8 574.8h0M325.1 628.5h0M325.3 627.2h0M325.6 568.7h0M325.9 631.4h0M326.1 638.8h0M326.4 627.2h0M326.7 593.9h0M326.9 634.8h0M327.2 569.1h0M327.5 619.8h0M327.7 559.3h0M328.0 604.1h0M328.3 505.1h0M328.5 600.3h0M328.8 620.8h0M329.1 593.3h0M329.3 602.8h0M329.6 612.3h0M329.9 462.3h0M330.1 534.6h0M330.4 547.0h0M330.7 545.6h0M330.9 616.5h0M331.2 608.3h0M331.5 623.2h0M331.7 540.4h0M332.0 496.9h0M332.3 600.6h0M332.5 589.4h0M332.8 599.3h0M333.1 571.8h0M333.3 546.7h0M333.6 399.3h0M333.9 563.7h0M334.1 578.1h0M334.4 591.4h0M334.7 522.6h0M334.9 565.6h0M335.2 606.2h0M335.5 513.8h0M335.7 584.4h0M336.0 542.5h0M336.3 584.0h0M336.5 493.6h0M336.8 493.4h0M337.1 580.1h0M337.3 586.7h0M337.6 591.8h0M337.9 560.5h0M338.1 557.8h0M338.4 628.8h0M338.7 610.1h0M338.9 513.7h0M339.2 574.4h0M339.5 629.9h0M339.7 580.4h0M340.0 605.5h0M340.3 595.3h0M340.5 610.6h0M340.8 594.5h0M341.1 612.9h0M341.3 597.0h0M341.6 606.3h0M341.9 540.1h0M342.1 591.0h0M342.4 569.4h0M342.7 598.9h0M342.9 544.3h0M343.2 568.9h0M343.5 592.7h0M343.7 526.1h0M344.0 582.2h0M344.3 430.5h0M344.5 564.9h0M344.8 567.5h0M345.1 566.1h0M345.3 507.6h0M345.6 564.4h0M345.9 587.0h0M346.1 607.4h0M346.4 478.0h0M346.6 506.7h0M346.9 490.7h0M347.2 574.0h0M347.4 606.0h0M347.7 396.4h0M348.0 601.4h0M348.2 589.4h0M348.5 511.0h0M348.8 591.3h0M349.0 610.2h0M349.3 570.4h0M349.6 620.7h0M349.8 552.4h0M350.1 606.2h0M350.4 508.8h0M350.6 617.5h0M350.9 614.6h0M351.2 594.7h0M351.4 616.5h0M351.7 585.3h0M352.0 558.1h0M352.2 589.3h0M352.5 561.3h0M352.8 574.2h0M353.0 582.5h0M353.3 610.7h0M353.6 591.9h0M353.8 536.1h0M354.1 539.3h0M354.4 555.3h0M354.6 607.1h0M354.9 518.5h0M355.2 603.7h0M355.4 578.2h0M355.7 487.3h0M356.0 626.8h0M356.2 576.8h0M356.5 541.8h0M356.8 588.8h0M357.0 519.6h0M357.3 534.8h0M357.6 515.2h0M357.8 493.0h0M358.1 607.0h0M358.4 616.8h0M358.6 561.1h0M358.9 459.0h0M359.2 580.5h0M359.4 523.3h0M359.7 591.6h0M360.0 495.5h0M360.2 535.8h0M360.5 584.1h0M360.8 303.8h0M361.0 574.4h0M361.3 465.9h0M361.6 119.2h0M361.8 605.7h0M362.1 616.9h0M362.4 515.9h0M362.6 424.8h0M362.9 582.1h0M363.2 591.7h0M363.4 505.0h0M363.7 500.2h0M364.0 541.7h0M364.2 620.8h0M364.5 605.9h0M364.8 609.6h0M365.0 551.9h0M365.3 560.2h0M365.6 522.0h0M365.8 580.5h0M366.1 577.2h0M366.4 584.9h0M366.6 530.7h0M366.9 598.2h0M367.2 582.4h0M367.4 611.7h0M367.7 526.5h0M368.0 601.5h0M368.2 579.3h0M368.5 563.2h0M368.8 575.4h0M369.0 614.8h0M369.3 537.7h0M369.6 525.2h0M369.8 495.4h0M370.1 575.0h0M370.4 563.1h0M370.6 430.1h0M370.9 586.6h0M371.2 590.5h0M371.4 520.7h0M371.7 459.0h0M372.0 507.4h0M372.2 559.4h0M372.5 459.2h0M372.8 578.7h0M373.0 534.0h0M373.3 607.7h0M373.5 519.2h0M373.8 561.3h0M374.1 491.9h0M374.3 618.0h0M374.6 542.8h0M374.9 561.8h0M375.1 567.2h0M375.4 548.6h0M375.7 570.0h0M375.9 522.2h0M376.2 594.8h0M376.5 536.5h0M376.7 266.5h0M377.0 588.3h0M377.3 440.5h0M377.5 557.4h0M377.8 119.2h0M378.1 529.5h0M378.3 530.9h0M378.6 539.1h0M378.9 598.9h0M379.1 512.8h0M379.4 463.2h0M379.7 577.5h0M379.9 452.2h0M380.2 554.3h0M380.5 534.5h0M380.7 592.8h0M381.0 528.2h0M381.3 585.0h0M381.5 592.9h0M381.8 544.2h0M382.1 480.2h0M382.3 572.5h0M382.6 582.4h0M382.9 491.0h0M383.1 502.1h0M383.4 551.6h0M383.7 537.2h0M383.9 583.2h0M384.2 589.8h0M384.5 592.5h0M384.7 565.0h0M385.0 516.8h0M385.3 565.6h0M385.5 553.4h0M385.8 523.5h0M386.1 119.2h0M386.3 510.8h0M386.6 542.5h0M386.9 589.8h0M387.1 566.6h0M387.4 601.0h0M387.7 533.3h0M387.9 558.7h0M388.2 567.9h0M388.5 598.0h0M388.7 542.9h0M389.0 539.6h0M389.3 533.3h0M389.5 605.1h0M389.8 536.8h0M390.1 578.5h0M390.3 521.8h0M390.6 527.5h0M390.9 543.0h0M391.1 521.4h0M391.4 119.2h0M391.7 413.1h0M391.9 572.6h0M392.2 565.2h0M392.5 599.6h0M392.7 552.0h0M393.0 119.2h0M393.3 507.7h0M393.5 549.9h0M393.8 602.6h0M394.1 565.1h0M394.3 564.2h0M394.6 538.7h0M394.9 287.2h0M395.1 119.2h0M395.4 565.1h0M395.7 119.2h0M395.9 603.7h0M396.2 598.9h0M396.5 569.5h0M396.7 524.8h0M397.0 568.5h0M397.3 577.7h0M397.5 557.5h0M397.8 576.2h0M398.1 623.0h0M398.3 598.6h0M398.6 522.3h0M398.9 577.4h0M399.1 616.8h0M399.4 577.9h0M399.7 589.4h0M399.9 456.6h0M400.2 614.7h0M400.4 558.8h0M400.7 526.8h0M401.0 557.9h0M401.2 620.1h0M401.5 580.7h0M401.8 613.2h0M402.0 600.8h0M402.3 557.4h0M402.6 630.7h0M402.8 541.7h0M403.1 498.4h0M403.4 175.5h0M403.6 596.4h0M403.9 488.6h0M404.2 567.9h0M404.4 629.9h0M404.7 612.4h0M405.0 568.7h0M405.2 575.5h0M405.5 556.6h0M405.8 559.1h0M406.0 604.5h0M406.3 593.0h0M406.6 563.2h0M406.8 469.2h0M407.1 526.8h0M407.4 506.9h0M407.6 543.4h0M407.9 503.7h0M408.2 591.8h0M408.4 119.2h0M408.7 573.2h0M409.0 557.3h0M409.2 592.0h0M409.5 615.9h0M409.8 620.9h0M410.0 618.7h0M410.3 330.1h0M410.6 480.2h0M410.8 523.5h0M411.1 540.5h0M411.4 545.3h0M411.6 607.6h0M411.9 425.7h0M412.2 221.1h0M412.4 562.4h0M412.7 583.1h0M413.0 220.8h0M413.2 552.6h0M413.5 516.5h0M413.8 547.1h0M414.0 608.7h0M414.3 622.8h0M414.6 479.9h0M414.8 512.9h0M415.1 610.8h0M415.4 584.5h0M415.6 441.4h0M415.9 583.8h0M416.2 583.7h0M416.4 567.1h0M416.7 554.4h0M417.0 575.9h0M417.2 527.7h0M417.5 582.4h0M417.8 593.0h0M418.0 621.1h0M418.3 561.8h0M418.6 447.2h0M418.8 548.3h0M419.1 513.1h0M419.4 560.1h0M419.6 561.9h0M419.9 627.5h0M420.2 594.3h0M420.4 585.9h0M420.7 540.6h0M421.0 477.1h0M421.2 622.3h0M421.5 625.3h0M421.8 587.4h0M422.0 573.4h0M422.3 446.8h0M422.6 587.8h0M422.8 599.2h0M423.1 597.6h0M423.4 484.9h0M423.6 588.9h0M423.9 584.6h0M424.2 555.0h0M424.4 639.2h0M424.7 371.8h0M425.0 574.8h0M425.2 549.1h0M425.5 625.0h0M425.8 523.2h0M426.0 541.8h0M426.3 412.9h0M426.6 578.1h0M426.8 506.1h0M427.1 531.8h0M427.3 499.6h0M427.6 625.0h0M427.9 529.7h0M428.1 574.2h0M428.4 487.7h0M428.7 571.6h0M428.9 617.4h0M429.2 570.1h0M429.5 569.7h0M429.7 553.4h0M430.0 542.3h0M430.3 573.7h0M430.5 538.5h0M430.8 612.0h0M431.1 571.5h0M431.3 570.5h0M431.6 518.1h0M431.9 566.7h0M432.1 522.1h0M432.4 561.5h0M432.7 548.2h0M432.9 468.3h0M433.2 574.4h0M433.5 574.9h0M433.7 563.6h0M434.0 522.9h0M434.3 580.4h0M434.5 560.0h0M434.8 591.6h0M435.1 549.7h0M435.3 623.7h0M435.6 591.6h0M435.9 586.7h0M436.1 574.7h0M436.4 582.4h0M436.7 517.7h0M436.9 531.5h0M437.2 596.5h0M437.5 553.9h0M437.7 485.8h0M438.0 583.5h0M438.3 573.6h0M438.5 536.9h0M438.8 601.7h0M439.1 562.8h0M439.3 491.9h0M439.6 456.7h0M439.9 587.7h0M440.1 487.8h0M440.4 119.2h0M440.7 410.2h0M440.9 504.5h0M441.2 532.2h0M441.5 535.4h0M441.7 512.1h0M442.0 404.7h0M442.3 465.6h0M442.5 419.6h0M442.8 423.8h0M443.1 423.6h0M443.3 308.3h0M443.6 402.2h0M443.9 119.2h0M444.1 459.3h0M444.4 550.8h0M444.7 558.0h0M444.9 584.9h0M445.2 484.6h0M445.5 506.6h0M445.7 497.8h0M446.0 399.8h0M446.3 465.4h0M446.5 637.3h0M446.8 427.8h0M447.1 119.2h0M447.3 627.4h0M447.6 613.0h0M447.9 520.5h0M448.1 119.2h0M448.4 566.0h0M448.7 577.5h0M448.9 419.2h0M449.2 484.3h0M449.5 488.5h0M449.7 362.8h0M450.0 639.3h0M450.3 449.2h0M450.5 473.6h0M450.8 523.9h0M451.1 639.3h0M451.3 451.2h0M451.6 253.5h0M451.9 545.7h0M452.1 581.1h0M452.4 372.8h0M452.7 429.2h0M452.9 479.4h0M453.2 584.6h0M453.4 406.3h0M453.7 569.0h0M454.0 426.0h0M454.2 512.9h0M454.5 119.2h0M454.8 520.5h0M455.0 119.2h0M455.3 521.3h0M455.6 454.0h0M455.8 584.1h0M456.1 566.1h0M456.4 442.0h0M456.6 476.3h0M456.9 322.5h0M457.2 559.5h0M457.4 576.9h0M457.7 119.2h0M458.0 489.5h0M458.2 478.4h0M458.5 480.7h0M458.8 442.2h0M459.0 578.1h0M459.3 481.6h0M459.6 528.3h0M459.8 532.9h0M460.1 345.0h0M460.4 119.2h0M460.6 395.0h0M460.9 221.9h0M461.2 554.3h0M461.4 497.2h0M461.7 503.0h0M462.0 488.7h0M462.2 397.6h0M462.5 429.4h0M462.8 489.9h0M463.0 496.3h0M463.3 571.1h0M463.6 475.2h0M463.8 564.1h0M464.1 119.2h0M464.4 495.8h0M464.6 544.4h0M464.9 573.7h0M465.2 470.3h0M465.4 559.2h0M465.7 465.8h0M466.0 517.4h0M466.2 119.2h0M466.5 119.2h0M466.8 456.6h0M467.0 495.8h0M467.3 522.0h0M467.6 535.3h0M467.8 332.8h0M468.1 499.0h0M468.4 119.2h0M468.6 527.9h0M468.9 570.1h0M469.2 540.2h0M469.4 468.2h0M469.7 119.2h0M470.0 488.2h0M470.2 119.2h0M470.5 558.0h0M470.8 505.7h0M471.0 433.9h0M471.3 610.5h0M471.6 600.7h0M471.8 551.6h0M472.1 590.2h0M472.4 556.7h0M472.6 292.2h0M472.9 336.3h0M473.2 560.8h0M473.4 580.6h0M473.7 520.2h0M474.0 397.2h0M474.2 549.2h0M474.5 561.8h0M474.8 486.8h0M475.0 535.1h0M475.3 119.2h0M475.6 524.4h0M475.8 496.4h0M476.1 536.5h0M476.4 480.7h0M476.6 318.5h0M476.9 421.0h0M477.2 119.2h0M477.4 119.2h0M477.7 541.2h0M478.0 544.3h0M478.2 575.2h0M478.5 469.0h0M478.8 119.2h0M479.0 506.8h0M479.3 468.3h0M479.6 602.8h0M479.8 554.0h0M480.1 119.2h0M480.3 576.0h0M480.6 546.6h0M480.9 421.7h0M481.1 119.2h0M481.4 392.7h0M481.7 341.0h0M481.9 374.8h0M482.2 565.3h0M482.5 483.7h0M482.7 277.0h0M483.0 119.2h0M483.3 522.2h0M483.5 119.2h0M483.8 450.9h0M484.1 569.0h0M484.3 576.0h0M484.6 550.4h0M484.9 502.2h0M485.1 294.1h0M485.4 521.9h0M485.7 433.6h0M485.9 555.6h0M486.2 532.8h0M486.5 529.4h0M486.7 545.4h0M487.0 119.2h0M487.3 316.9h0M487.5 419.3h0M487.8 119.2h0M488.1 459.3h0M488.3 550.9h0M488.6 462.3h0M488.9 584.7h0M489.1 517.3h0M489.4 487.1h0M489.7 590.3h0M489.9 547.8h0M490.2 375.4h0M490.5 553.7h0M490.7 527.3h0M491.0 119.2h0M491.3 588.0h0M491.5 459.5h0M491.8 566.8h0M492.1 486.1h0M492.3 542.5h0M492.6 574.6h0M492.9 439.7h0M493.1 513.6h0M493.4 472.9h0M493.7 469.5h0M493.9 119.2h0M494.2 537.4h0M494.5 465.3h0M494.7 427.7h0M495.0 531.8h0M495.3 547.1h0M495.5 526.5h0M495.8 411.6h0M496.1 498.0h0M496.3 329.1h0M496.6 515.0h0M496.9 489.6h0M497.1 368.0h0M497.4 346.7h0M497.7 438.0h0M497.9 544.9h0M498.2 536.3h0M498.5 493.0h0M498.7 541.8h0M499.0 391.4h0M499.3 462.2h0M499.5 535.0h0M499.8 546.1h0M500.1 490.1h0M500.3 119.2h0M500.6 406.3h0M500.9 516.1h0M501.1 572.3h0M501.4 451.4h0M501.7 536.2h0M501.9 498.0h0M502.2 478.8h0M502.5 538.0h0M502.7 289.8h0M503.0 384.0h0M503.3 408.3h0M503.5 492.3h0M503.8 430.6h0M504.1 541.0h0M504.3 497.5h0M504.6 396.9h0M504.9 538.2h0M505.1 473.4h0M505.4 425.2h0M505.7 476.8h0M505.9 211.0h0M506.2 506.4h0M506.4 513.3h0M506.7 548.3h0M507.0 467.7h0M507.2 474.4h0M507.5 525.1h0M507.8 455.8h0M508.0 348.5h0M508.3 510.9h0M508.6 374.5h0M508.8 443.0h0M509.1 492.3h0M509.4 617.0h0M509.6 583.0h0M509.9 490.6h0M510.2 524.5h0M510.4 461.7h0M510.7 513.4h0M511.0 119.2h0M511.2 523.5h0M511.5 516.4h0M511.8 458.0h0M512.0 561.8h0M512.3 396.2h0M512.6 445.7h0M512.8 565.7h0M513.1 469.7h0M513.4 512.1h0M513.6 475.2h0M513.9 504.5h0M514.2 501.9h0M514.4 536.8h0M514.7 521.6h0M515.0 417.1h0M515.2 563.8h0M515.5 324.8h0M515.8 538.6h0M516.0 119.2h0M516.3 560.2h0M516.6 540.5h0M516.8 513.0h0M517.1 579.8h0M517.4 560.3h0M517.6 370.8h0M517.9 440.7h0M518.2 417.9h0M518.4 456.1h0M518.7 563.9h0M519.0 368.4h0M519.2 287.2h0M519.5 552.0h0M519.8 119.2h0M520.0 503.5h0M520.3 498.7h0M520.6 425.0h0M520.8 493.1h0M521.1 484.6h0M521.4 491.6h0M521.6 551.9h0M521.9 341.6h0M522.2 554.0h0M522.4 508.2h0M522.7 501.6h0M523.0 463.0h0M523.2 445.0h0M523.5 195.9h0M523.8 476.9h0M524.0 537.8h0M524.3 455.4h0M524.6 565.2h0M524.8 470.6h0M525.1 119.2h0M525.4 548.2h0M525.6 492.9h0M525.9 442.4h0M526.2 427.5h0M526.4 460.9h0M526.7 521.0h0M527.0 470.0h0M527.2 492.1h0M527.5 577.5h0M527.8 407.4h0M528.0 479.5h0M528.3 480.6h0M528.6 428.8h0M528.8 515.8h0M529.1 492.2h0M529.4 544.4h0M529.6 532.1h0M529.9 549.9h0M530.2 540.7h0M530.4 119.2h0M530.7 492.6h0M531.0 447.8h0M531.2 513.9h0M531.5 475.7h0M531.8 277.1h0M532.0 515.5h0M532.3 496.5h0M532.6 502.2h0M532.8 119.2h0M533.1 462.6h0M533.3 542.1h0M533.6 452.3h0M533.9 520.2h0M534.1 480.4h0M534.4 423.7h0M534.7 461.5h0M534.9 523.3h0M535.2 540.7h0M535.5 506.2h0M535.7 119.2h0M536.0 506.6h0M536.3 506.4h0M536.5 220.8h0M536.8 471.7h0M537.1 400.4h0M537.3 558.9h0M537.6 378.4h0M537.9 534.1h0M538.1 559.1h0M538.4 411.3h0M538.7 438.7h0M538.9 466.1h0M539.2 430.6h0M539.5 481.9h0M539.7 468.9h0M540.0 328.4h0M540.3 421.6h0M540.5 381.1h0M540.8 291.3h0M541.1 537.4h0M541.3 266.0h0M541.6 119.2h0M541.9 417.9h0M542.1 488.7h0M542.4 294.4h0M542.7 215.9h0M542.9 520.1h0M543.2 435.8h0M543.5 388.3h0M543.7 528.3h0M544.0 461.6h0M544.3 510.5h0M544.5 494.6h0M544.8 481.4h0M545.1 474.0h0M545.3 529.2h0M545.6 307.6h0M545.9 540.3h0M546.1 464.0h0M546.4 509.7h0M546.7 366.6h0M546.9 560.0h0M547.2 500.0h0M547.5 314.1h0M547.7 402.0h0M548.0 479.5h0M548.3 514.8h0M548.5 438.0h0M548.8 459.2h0M549.1 525.7h0M549.3 119.2h0M549.6 502.3h0M549.9 444.2h0M550.1 528.1h0M550.4 409.1h0M550.7 404.3h0M550.9 541.0h0M551.2 477.9h0M551.5 429.5h0M551.7 537.6h0M552.0 469.5h0M552.3 455.4h0M552.5 534.4h0M552.8 119.2h0M553.1 373.3h0M553.3 453.1h0M553.6 158.4h0M553.9 119.2h0M554.1 119.2h0M554.4 513.4h0M554.7 266.6h0M554.9 461.0h0M555.2 421.1h0M555.5 119.2h0M555.7 354.8h0M556.0 467.7h0M556.3 534.0h0M556.5 246.1h0M556.8 506.4h0M557.1 476.3h0M557.3 502.7h0M557.6 388.4h0M557.9 522.2h0M558.1 512.9h0M558.4 524.9h0M558.7 506.7h0M558.9 412.0h0M559.2 432.5h0M559.5 514.8h0M559.7 549.9h0M560.0 386.7h0M560.2 516.1h0M560.5 551.4h0M560.8 533.1h0M561.0 506.7h0M561.3 382.3h0M561.6 432.0h0M561.8 485.8h0M562.1 554.7h0M562.4 566.8h0M562.6 119.2h0M562.9 367.8h0M563.2 473.3h0M563.4 249.6h0M563.7 456.3h0M564.0 530.5h0M564.2 480.1h0M564.5 536.2h0M564.8 458.3h0M565.0 573.1h0M565.3 394.3h0M565.6 476.7h0M565.8 432.5h0M566.1 549.3h0M566.4 269.3h0M566.6 568.0h0M566.9 476.1h0M567.2 548.9h0M567.4 119.2h0M567.7 494.6h0M568.0 119.2h0M568.2 119.2h0M568.5 458.4h0M568.8 539.6h0M569.0 421.2h0M569.3 500.4h0M569.6 546.8h0M569.8 525.9h0M570.1 534.6h0M570.4 494.2h0M570.6 446.0h0M570.9 491.6h0M571.2 471.7h0M571.4 493.4h0M571.7 453.9h0M572.0 406.1h0M572.2 561.7h0M572.5 484.1h0M572.8 504.5h0M573.0 371.8h0M573.3 415.6h0M573.6 555.3h0M573.8 545.1h0M574.1 570.2h0M574.4 468.1h0M574.6 478.0h0M574.9 513.4h0M575.2 562.4h0M575.4 466.4h0M575.7 541.5h0M576.0 449.7h0M576.2 539.4h0M576.5 305.2h0M576.8 377.6h0M577.0 405.0h0M577.3 569.8h0M577.6 416.3h0M577.8 402.5h0M578.1 531.9h0M578.4 495.0h0M578.6 518.9h0M578.9 429.7h0M579.2 280.2h0M579.4 546.2h0M579.7 551.5h0M580.0 454.6h0M580.2 541.7h0M580.5 434.3h0M580.8 536.7h0M581.0 425.9h0M581.3 421.2h0M581.6 476.2h0M581.8 413.8h0M582.1 540.0h0M582.4 119.2h0M582.6 475.9h0M582.9 542.0h0M583.2 489.8h0M583.4 450.1h0M583.7 488.4h0M584.0 459.5h0M584.2 467.7h0M584.5 575.0h0M584.8 500.5h0M585.0 511.9h0M585.3 119.2h0M585.6 383.6h0M585.8 517.0h0M586.1 416.1h0M586.4 250.6h0M586.6 440.2h0M586.9 546.9h0M587.1 436.6h0M587.4 431.8h0M587.7 552.7h0M587.9 455.1h0M588.2 119.2h0M588.5 491.8h0M588.7 393.9h0M589.0 534.8h0M589.3 539.6h0M589.5 549.2h0M589.8 420.5h0M590.1 571.1h0M590.3 436.3h0M590.6 502.9h0M590.9 424.8h0M591.1 446.7h0M591.4 488.8h0M591.7 438.0h0M591.9 119.2h0M592.2 396.8h0M592.5 403.2h0M592.7 426.9h0M593.0 518.0h0M593.3 497.6h0M593.5 556.8h0M593.8 501.3h0M594.1 497.8h0M594.3 374.9h0M594.6 322.0h0M594.9 540.3h0M595.1 566.6h0M595.4 520.9h0M595.7 467.4h0M595.9 322.2h0M596.2 542.1h0M596.5 543.2h0M596.7 539.8h0M597.0 378.6h0M597.3 515.1h0M597.5 498.3h0M597.8 535.9h0M598.1 440.6h0M598.3 500.3h0M598.6 479.5h0M598.9 516.5h0M599.1 510.9h0M599.4 119.2h0M599.7 509.6h0M599.9 448.2h0M600.2 503.5h0M600.5 532.3h0M600.7 457.0h0M601.0 525.1h0M601.3 474.9h0M601.5 399.2h0M601.8 495.1h0M602.1 515.6h0M602.3 394.6h0M602.6 487.4h0M602.9 517.9h0M603.1 480.2h0M603.4 428.9h0M603.7 437.7h0M603.9 119.2h0M604.2 444.5h0M604.5 484.3h0M604.7 537.2h0M605.0 480.4h0M605.3 582.9h0M605.5 450.0h0M605.8 531.5h0M606.1 539.1h0M606.3 354.5h0M606.6 467.7h0M606.9 313.7h0M607.1 517.1h0M607.4 475.8h0M607.7 577.7h0M607.9 509.0h0M608.2 178.6h0M608.5 311.6h0M608.7 571.3h0M609.0 119.2h0M609.3 517.6h0M609.5 416.0h0M609.8 387.3h0M610.1 457.2h0M610.3 472.7h0M610.6 442.3h0M610.9 504.9h0M611.1 278.3h0M611.4 570.0h0M611.7 434.5h0M611.9 474.2h0M612.2 362.9h0M612.5 486.9h0M612.7 119.2h0M613.0 473.2h0M613.2 501.0h0M613.5 450.2h0M613.8 447.8h0M614.0 448.6h0M614.3 532.9h0M614.6 340.5h0M614.8 325.0h0M615.1 477.1h0M615.4 524.9h0M615.6 555.9h0M615.9 390.8h0M616.2 413.9h0M616.4 467.9h0M616.7 529.7h0M617.0 450.2h0M617.2 175.5h0M617.5 488.0h0M617.8 441.4h0M618.0 521.0h0M618.3 499.9h0M618.6 119.2h0M618.8 483.5h0M619.1 546.4h0M619.4 194.3h0M619.6 119.2h0M619.9 119.2h0M620.2 498.5h0M620.4 354.2h0M620.7 465.2h0M621.0 508.4h0M621.2 575.1h0M621.5 338.9h0M621.8 574.8h0M622.0 520.1h0M622.3 531.3h0M622.6 501.4h0M622.8 482.6h0M623.1 516.0h0M623.4 510.5h0M623.6 548.0h0M623.9 537.8h0M624.2 522.5h0M624.4 510.7h0M624.7 488.0h0M625.0 477.2h0M625.2 564.0h0M625.5 430.1h0M625.8 119.2h0M626.0 505.5h0M626.3 502.6h0M626.6 547.5h0M626.8 465.2h0M627.1 584.0h0M627.4 583.8h0M627.6 452.2h0M627.9 532.7h0M628.2 510.4h0M628.4 241.8h0M628.7 452.1h0M629.0 544.9h0M629.2 495.9h0M629.5 119.2h0M629.8 366.3h0M630.0 415.5h0M630.3 491.2h0M630.6 119.2h0M630.8 518.9h0M631.1 492.2h0M631.4 438.7h0M631.6 380.8h0M631.9 546.6h0M632.2 512.5h0M632.4 458.3h0M632.7 459.4h0M633.0 119.2h0M633.2 498.3h0M633.5 536.7h0M633.8 543.9h0M634.0 459.6h0M634.3 119.2h0M634.6 501.3h0M634.8 525.8h0M635.1 512.9h0M635.4 532.9h0M635.6 507.4h0M635.9 503.1h0M636.2 458.5h0M636.4 499.6h0M636.7 559.5h0M637.0 507.3h0M637.2 489.3h0M637.5 515.2h0M637.8 119.2h0M638.0 487.4h0M638.3 529.4h0M638.6 439.2h0M638.8 524.8h0M639.1 499.7h0M639.4 503.7h0M639.6 537.4h0M639.9 560.7h0M640.1 454.7h0M640.4 431.0h0M640.7 451.0h0M640.9 480.3h0M641.2 508.4h0M641.5 355.6h0M641.7 119.2h0M642.0 417.4h0M642.3 494.6h0M642.5 440.7h0M642.8 430.6h0M643.1 529.3h0M643.3 548.2h0M643.6 451.2h0M643.9 421.8h0M644.1 450.8h0M644.4 510.9h0M644.7 119.2h0M644.9 526.0h0M645.2 416.4h0M645.5 434.2h0M645.7 519.7h0M646.0 435.8h0M646.3 504.7h0M646.5 537.1h0M646.8 508.8h0M647.1 532.1h0M647.3 431.0h0M647.6 313.0h0M647.9 481.4h0M648.1 408.1h0M648.4 500.2h0M648.7 119.2h0M648.9 428.0h0M649.2 466.4h0M649.5 411.2h0M649.7 503.7h0M650.0 470.3h0M650.3 559.8h0M650.5 253.4h0M650.8 495.4h0M651.1 119.2h0M651.3 119.2h0M651.6 119.2h0M651.9 119.2h0M652.1 119.2h0M652.4 362.8h0M652.7 511.8h0M652.9 443.5h0M653.2 357.5h0M653.5 523.9h0M653.7 231.6h0M654.0 458.3h0M654.3 542.5h0M654.5 497.7h0M654.8 617.5h0M655.1 425.6h0M655.3 581.7h0M655.6 488.4h0M655.9 446.0h0M656.1 119.2h0M656.4 553.8h0M656.7 558.9h0M656.9 495.5h0M657.2 576.4h0M657.5 388.6h0M657.7 369.2h0M658.0 509.8h0M658.3 267.9h0M658.5 487.5h0M658.8 319.5h0M659.1 425.5h0M659.3 538.9h0M659.6 469.7h0M659.9 524.8h0M660.1 435.9h0M660.4 298.1h0M660.7 443.7h0M660.9 546.8h0M661.2 248.5h0M661.5 515.8h0M661.7 546.8h0M662.0 459.1h0M662.3 389.6h0M662.5 451.5h0M662.8 340.7h0M663.1 535.2h0M663.3 502.3h0M663.6 555.0h0M663.9 485.5h0M664.1 384.6h0M664.4 494.1h0M664.7 514.2h0M664.9 119.2h0M665.2 392.4h0M665.5 479.6h0M665.7 498.8h0M666.0 390.3h0M666.2 459.9h0M666.5 383.1h0M666.8 528.4h0M667.0 495.2h0M667.3 527.0h0M667.6 563.2h0M667.8 493.9h0M668.1 457.1h0M668.4 430.4h0M668.6 467.1h0M668.9 520.1h0M669.2 445.9h0M669.4 532.4h0M669.7 457.6h0M670.0 553.2h0M670.2 567.6h0M670.5 486.0h0M670.8 502.6h0M671.0 532.0h0M671.3 564.7h0M671.6 480.8h0M671.8 540.7h0M672.1 342.7h0M672.4 462.3h0M672.6 529.4h0M672.9 119.2h0M673.2 502.4h0M673.4 535.7h0M673.7 559.0h0M674.0 456.2h0M674.2 541.8h0M674.5 462.9h0M674.8 533.1h0M675.0 477.7h0M675.3 486.5h0M675.6 420.8h0M675.8 440.8h0M676.1 551.8h0M676.4 439.6h0M676.6 335.6h0M676.9 549.9h0M677.2 410.5h0M677.4 119.2h0M677.7 480.0h0M678.0 229.9h0M678.2 595.8h0M678.5 558.6h0M678.8 501.4h0M679.0 562.0h0M679.3 519.0h0M679.6 437.9h0M679.8 508.5h0M680.1 557.6h0M680.4 432.0h0M680.6 477.3h0M680.9 549.2h0M681.2 119.2h0M681.4 584.5h0M681.7 494.9h0M682.0 579.6h0M682.2 413.2h0M682.5 494.6h0M682.8 119.2h0M683.0 119.2h0M683.3 501.6h0M683.6 491.0h0M683.8 458.3h0M684.1 339.5h0M684.4 119.2h0M684.6 382.1h0M684.9 467.6h0M685.2 232.3h0M685.4 434.8h0M685.7 564.3h0M686.0 119.2h0M686.2 557.9h0M686.5 186.0h0M686.8 432.8h0M687.0 570.9h0M687.3 420.9h0M687.6 119.2h0M687.8 470.0h0M688.1 514.1h0M688.4 479.0h0M688.6 424.7h0M688.9 537.9h0M689.2 550.2h0M689.4 412.5h0M689.7 579.9h0M690.0 399.6h0M690.2 580.4h0M690.5 501.7h0M690.8 388.0h0M691.0 119.2h0M691.3 562.6h0M691.6 523.2h0M691.8 422.1h0M692.1 429.9h0M692.4 593.9h0M692.6 467.0h0M692.9 549.4h0M693.1 325.3h0M693.4 538.4h0M693.7 119.2h0M693.9 457.5h0M694.2 418.2h0M694.5 378.4h0M694.7 119.2h0M695.0 533.2h0M695.3 531.8h0M695.5 538.3h0M695.8 557.1h0M696.1 524.3h0M696.3 119.2h0M696.6 481.5h0M696.9 418.5h0M697.1 306.1h0M697.4 428.4h0M697.7 469.3h0M697.9 363.4h0M698.2 460.2h0M698.5 400.4h0M698.7 441.8h0M699.0 498.2h0M699.3 419.5h0M699.5 554.2h0M699.8 119.2h0M700.1 495.7h0M700.3 422.8h0M700.6 564.8h0M700.9 119.2h0M701.1 448.7h0M701.4 432.4h0M701.7 526.6h0M701.9 556.9h0M702.2 119.2h0M702.5 119.2h0M702.7 488.3h0M703.0 205.2h0M703.3 478.2h0M703.5 385.1h0M703.8 420.8h0M704.1 459.7h0M704.3 439.6h0M704.6 500.7h0M704.9 466.8h0M705.1 472.3h0M705.4 523.4h0M705.7 483.0h0M705.9 274.6h0M706.2 497.0h0M706.5 480.7h0M706.7 543.8h0M707.0 540.2h0M707.3 554.7h0M707.5 535.3h0M707.8 379.9h0M708.1 493.2h0M708.3 583.1h0M708.6 395.3h0M708.9 530.1h0M709.1 549.1h0M709.4 377.8h0M709.7 491.9h0M709.9 323.1h0M710.2 481.5h0M710.5 536.4h0M710.7 536.1h0M711.0 582.7h0M711.3 119.2h0M711.5 531.7h0M711.8 390.1h0M712.1 119.2h0M712.3 119.2h0M712.6 530.3h0M712.9 473.8h0M713.1 334.7h0M713.4 444.5h0M713.7 119.2h0M713.9 373.5h0M714.2 509.7h0M714.5 539.8h0M714.7 591.1h0M715.0 499.5h0M715.3 507.2h0M715.5 478.0h0M715.8 252.7h0M716.1 512.2h0M716.3 516.7h0M716.6 462.5h0M716.9 510.1h0M717.1 525.2h0M717.4 540.1h0M717.7 498.6h0M717.9 473.1h0M718.2 547.5h0M718.5 526.7h0M718.7 492.4h0M719.0 543.7h0M719.3 432.5h0M719.5 427.9h0M719.8 512.3h0M720.0 232.7h0M720.3 418.2h0M720.6 454.1h0M720.8 466.3h0M721.1 396.6h0M721.4 303.3h0M721.6 459.4h0M721.9 232.8h0M722.2 484.8h0M722.4 518.1h0M722.7 531.4h0M723.0 512.2h0M723.2 497.4h0M723.5 506.5h0M723.8 543.9h0M724.0 442.5h0M724.3 545.7h0M724.6 548.7h0M724.8 485.8h0M725.1 119.2h0M725.4 531.6h0M725.6 307.1h0M725.9 501.3h0M726.2 461.9h0M726.4 547.9h0M726.7 239.0h0M727.0 507.3h0M727.2 418.6h0M727.5 473.6h0M727.8 445.8h0M728.0 521.9h0M728.3 119.2h0M728.6 229.3h0M728.8 357.8h0M729.1 453.9h0M729.4 447.8h0M729.6 524.7h0M729.9 521.4h0M730.2 516.8h0M730.4 571.6h0M730.7 119.2h0M731.0 534.1h0M731.2 572.2h0M731.5 494.6h0M731.8 508.8h0M732.0 534.8h0M732.3 482.9h0M732.6 459.2h0M732.8 413.5h0M733.1 532.0h0M733.4 538.1h0M733.6 453.2h0M733.9 497.6h0M734.2 119.2h0M734.4 442.3h0M734.7 397.6h0M735.0 460.8h0M735.2 551.5h0M735.5 594.2h0M735.8 439.4h0M736.0 518.7h0M736.3 509.0h0M736.6 321.2h0M736.8 443.1h0M737.1 517.6h0M737.4 502.3h0M737.6 468.6h0M737.9 464.3h0M738.2 511.2h0M738.4 478.7h0M738.7 423.3h0M739.0 538.4h0M739.2 469.5h0M739.5 577.9h0M739.8 570.6h0M740.0 476.5h0M740.3 446.1h0M740.6 531.6h0M740.8 421.4h0M741.1 498.5h0M741.4 423.0h0M741.6 532.4h0M741.9 370.4h0M742.2 411.2h0M742.4 397.8h0M742.7 534.5h0M743.0 389.8h0M743.2 476.3h0M743.5 535.8h0M743.8 527.7h0M744.0 492.8h0M744.3 499.5h0M744.6 431.3h0M744.8 502.0h0M745.1 551.9h0M745.4 426.1h0M745.6 332.3h0M745.9 554.4h0M746.1 383.5h0M746.4 550.2h0M746.7 319.8h0M746.9 505.9h0M747.2 538.5h0M747.5 482.2h0M747.7 521.0h0M748.0 363.8h0M748.3 498.0h0M748.5 470.2h0M748.8 487.2h0M749.1 435.5h0M749.3 523.7h0M749.6 333.5h0M749.9 479.1h0M750.1 478.8h0M750.4 379.9h0M750.7 487.1h0M750.9 509.8h0M751.2 517.3h0M751.5 538.1h0M751.7 480.3h0M752.0 431.6h0M752.3 479.3h0M752.5 563.2h0M752.8 473.6h0M753.1 441.2h0M753.3 469.6h0M753.6 374.9h0M753.9 501.4h0M754.1 500.8h0M754.4 534.1h0M754.7 542.8h0M754.9 491.9h0M755.2 524.6h0M755.5 464.6h0M755.7 519.9h0M756.0 502.4h0M756.3 363.1h0M756.5 453.4h0M756.8 439.8h0M757.1 543.8h0M757.3 551.7h0M757.6 531.9h0M757.9 427.7h0M758.1 554.7h0M758.4 505.4h0M758.7 393.1h0M758.9 529.5h0M759.2 509.1h0M759.5 472.1h0M759.7 573.3h0M760.0 420.2h0M760.3 524.5h0M760.5 524.9h0M760.8 578.5h0M761.1 546.6h0M761.3 594.1h0M761.6 426.8h0M761.9 424.4h0M762.1 549.7h0M762.4 441.2h0M762.7 482.1h0M762.9 432.7h0M763.2 564.5h0M763.5 579.2h0M763.7 573.9h0M764.0 478.5h0M764.3 347.2h0M764.5 507.9h0M764.8 583.8h0M765.1 534.9h0M765.3 119.2h0M765.6 575.3h0M765.9 558.6h0M766.1 494.9h0M766.4 535.0h0M766.7 554.8h0M766.9 423.1h0M767.2 456.6h0M767.5 492.4h0M767.7 352.2h0M768.0 586.2h0M768.3 475.9h0M768.5 471.3h0M768.8 435.3h0M769.1 561.7h0M769.3 119.2h0M769.6 519.6h0M769.9 605.8h0M770.1 471.8h0M770.4 517.3h0M770.7 544.1h0M770.9 514.7h0M771.2 515.0h0M771.5 491.2h0M771.7 510.6h0M772.0 571.6h0M772.3 561.2h0M772.5 515.9h0M772.8 527.6h0M773.0 387.2h0M773.3 560.9h0M773.6 606.6h0M773.8 541.2h0M774.1 593.7h0M774.4 510.6h0M774.6 545.0h0M774.9 546.8h0M775.2 603.5h0M775.4 528.4h0M775.7 548.5h0M776.0 616.9h0M776.2 520.6h0M776.5 491.5h0M776.8 573.9h0M777.0 541.5h0M777.3 341.0h0M777.6 538.7h0M777.8 470.3h0M778.1 425.2h0M778.4 591.8h0M778.6 494.4h0M778.9 530.1h0M779.2 492.9h0M779.4 507.6h0M779.7 463.9h0M780.0 565.7h0M780.2 119.2h0M780.5 501.0h0M780.8 490.4h0M781.0 595.8h0M781.3 380.1h0M781.6 261.4h0M781.8 509.3h0M782.1 582.2h0M782.4 549.3h0M782.6 474.3h0M782.9 451.9h0M783.2 559.7h0M783.4 208.5h0M783.7 441.3h0M784.0 426.8h0M784.2 317.3h0M784.5 514.0h0M784.8 488.8h0M785.0 599.6h0M785.3 591.1h0M785.6 517.3h0M785.8 499.8h0M786.1 519.6h0M786.4 597.5h0M786.6 463.7h0M786.9 461.1h0M787.2 542.8h0M787.4 508.8h0M787.7 119.2h0M788.0 498.6h0M788.2 617.5h0M788.5 538.6h0M788.8 546.8h0M789.0 397.2h0M789.3 567.5h0M789.6 530.1h0M789.8 538.0h0M790.1 545.5h0M790.4 597.5h0M790.6 351.3h0M790.9 527.0h0M791.2 484.3h0M791.4 500.0h0M791.7 574.3h0M792.0 528.4h0M792.2 415.4h0M792.5 591.6h0M792.8 445.6h0M793.0 501.7h0M793.3 545.0h0M793.6 545.3h0M793.8 475.9h0M794.1 533.5h0M794.4 325.9h0M794.6 471.1h0M794.9 387.3h0M795.2 465.9h0M795.4 567.8h0M795.7 525.0h0M796.0 274.8h0M796.2 514.6h0M796.5 594.4h0M796.8 469.6h0M797.0 460.2h0M797.3 508.5h0M797.6 576.9h0M797.8 360.3h0M798.1 533.6h0M798.4 541.3h0M798.6 214.3h0M798.9 457.5h0M799.2 425.0h0M799.4 427.6h0M799.7 599.0h0M799.9 412.5h0M800.2 527.2h0M800.5 550.5h0M800.7 547.2h0M801.0 463.4h0M801.3 231.1h0M801.5 119.2h0M801.8 525.8h0M802.1 408.9h0M802.3 511.2h0M802.6 488.4h0M802.9 530.4h0M803.1 481.2h0M803.4 468.9h0M803.7 548.3h0M803.9 572.8h0M804.2 517.1h0M804.5 571.8h0M804.7 513.8h0M805.0 417.8h0M805.3 119.2h0M805.5 603.8h0M805.8 558.2h0M806.1 490.3h0M806.3 492.6h0M806.6 550.9h0M806.9 464.4h0M807.1 549.9h0M807.4 366.8h0M807.7 434.3h0M807.9 228.9h0M808.2 415.4h0M808.5 119.2h0M808.7 569.6h0M809.0 501.4h0M809.3 567.0h0M809.5 421.7h0M809.8 550.3h0M810.1 237.3h0M810.3 119.2h0M810.6 265.4h0M810.9 581.3h0M811.1 534.9h0M811.4 573.8h0M811.7 568.5h0M811.9 497.1h0M812.2 590.3h0M812.5 230.2h0M812.7 513.8h0M813.0 539.9h0M813.3 530.6h0M813.5 536.2h0M813.8 198.4h0M814.1 521.4h0M814.3 516.4h0M814.6 533.7h0M814.9 421.3h0M815.1 484.9h0M815.4 491.0h0M815.7 588.7h0M815.9 119.2h0M816.2 414.2h0M816.5 500.8h0M816.7 402.8h0M817.0 479.6h0M817.3 294.4h0M817.5 453.0h0M817.8 531.9h0M818.1 509.0h0M818.3 408.0h0M818.6 369.9h0M818.9 397.6h0M819.1 357.0h0M819.4 393.1h0M819.7 572.8h0M819.9 439.1h0M820.2 119.2h0M820.5 119.2h0M820.7 560.7h0M821.0 543.0h0M821.3 486.4h0M821.5 546.8h0M821.8 479.6h0M822.1 119.2h0M822.3 463.8h0M822.6 579.4h0M822.9 510.0h0M823.1 440.2h0M823.4 514.3h0M823.7 464.0h0M823.9 545.7h0M824.2 514.5h0M824.5 119.2h0M824.7 557.3h0M825.0 500.8h0M825.3 508.3h0M825.5 523.1h0M825.8 468.9h0M826.0 405.0h0M826.3 513.6h0M826.6 536.4h0M826.8 515.2h0M827.1 378.9h0M827.4 548.7h0M827.6 556.6h0M827.9 533.3h0M828.2 450.9h0M828.4 499.9h0M828.7 457.5h0M829.0 561.4h0M829.2 515.3h0M829.5 328.1h0M829.8 119.2h0M830.0 119.2h0M830.3 302.0h0M830.6 344.1h0M830.8 400.9h0M831.1 500.8h0M831.4 520.7h0M831.6 119.2h0M831.9 587.2h0M832.2 412.6h0M832.4 542.5h0M832.7 489.9h0M833.0 502.6h0M833.2 471.8h0M833.5 337.8h0M833.8 441.9h0M834.0 522.0h0M834.3 387.8h0M834.6 472.8h0M834.8 522.5h0M835.1 489.1h0M835.4 436.4h0M835.6 393.1h0M835.9 550.8h0M836.2 534.1h0M836.4 585.6h0M836.7 441.9h0M837.0 387.5h0M837.2 317.9h0M837.5 280.4h0M837.8 559.1h0M838.0 494.4h0M838.3 556.4h0M838.6 554.5h0M838.8 508.9h0M839.1 527.6h0M839.4 345.9h0M839.6 549.4h0M839.9 119.2h0M840.2 522.0h0M840.4 227.8h0M840.7 477.0h0M841.0 568.4h0M841.2 444.2h0M841.5 392.6h0M841.8 408.2h0M842.0 515.0h0M842.3 551.8h0M842.6 429.4h0M842.8 533.9h0M843.1 483.8h0M843.4 119.2h0M843.6 575.3h0M843.9 511.4h0M844.2 512.5h0M844.4 553.4h0M844.7 119.2h0M845.0 470.6h0M845.2 576.8h0M845.5 538.8h0M845.8 119.2h0M846.0 186.6h0M846.3 469.3h0M846.6 484.9h0M846.8 481.9h0M847.1 505.9h0M847.4 383.2h0M847.6 399.0h0M847.9 479.1h0M848.2 119.2h0M848.4 243.3h0M848.7 548.3h0M849.0 119.2h0M849.2 475.4h0M849.5 483.2h0M849.8 525.7h0M850.0 234.9h0M850.3 563.6h0M850.6 119.2h0M850.8 423.1h0M851.1 373.7h0M851.4 465.9h0M851.6 479.6h0M851.9 498.0h0M852.2 119.2h0M852.4 512.0h0M852.7 460.0h0M852.9 556.4h0M853.2 502.2h0M853.5 471.7h0M853.7 119.2h0M854.0 550.7h0M854.3 334.0h0M854.5 428.8h0M854.8 518.9h0M855.1 494.9h0M855.3 402.2h0M855.6 382.6h0M855.9 119.2h0M856.1 119.2h0M856.4 345.4h0M856.7 415.6h0M856.9 119.2h0M857.2 479.8h0M857.5 119.2h0M857.7 119.2h0M858.0 364.1h0M858.3 119.2h0M858.5 414.3h0M858.8 245.4h0M859.1 119.2h0M859.3 119.2h0M859.6 468.1h0M859.9 119.2h0M860.1 314.8h0M860.4 410.1h0M860.7 119.2h0M860.9 349.7h0M861.2 479.3h0M861.5 119.2h0M861.7 119.2h0M862.0 382.8h0M862.3 119.2h0M862.5 119.2h0M862.8 478.4h0M863.1 352.4h0M863.3 119.2h0M863.6 119.2h0M863.9 442.6h0M864.1 119.2h0M864.4 119.2h0M864.7 119.2h0M864.9 119.2h0M865.2 119.2h0M865.5 119.2h0M865.7 119.2h0M866.0 119.2h0" stroke="#30bcef" stroke-width="3" stroke-linecap="round"/>
<polyline points="67.3,649.2 67.5,638.4 67.8,644.3 68.1,642.5 68.3,648.5 68.6,640.4 68.9,641.4 69.1,639.9 69.4,645.1 69.7,644.6 69.9,649.7 70.2,653.1 70.5,654.0 70.7,651.9 71.0,649.1 71.3,645.4 71.5,648.1 71.8,648.7 72.1,649.2 72.3,649.2 72.6,651.3 72.9,658.9 73.1,654.3 73.4,650.9 73.7,650.5 73.9,648.5 74.2,651.2 74.5,649.1 74.7,651.7 75.0,648.0 75.3,649.4 75.5,650.1 75.8,653.0 76.1,645.6 76.3,648.2 76.6,642.7 76.9,651.5 77.1,647.8 77.4,647.3 77.7,641.8 77.9,638.9 78.2,641.2 78.5,646.3 78.7,652.5 79.0,651.7 79.3,647.9 79.5,646.6 79.8,645.4 80.1,644.6 80.3,647.8 80.6,655.7 80.8,656.8 81.1,654.1 81.4,653.7 81.6,654.5 81.9,654.5 82.2,652.3 82.4,651.8 82.7,651.5 83.0,652.6 83.2,652.3 83.5,651.9 83.8,650.7 84.0,650.9 84.3,652.7 84.6,652.0 84.8,654.3 85.1,648.5 85.4,638.3 85.6,633.7 85.9,633.8 86.2,629.4 86.4,627.5 86.7,629.8 87.0,636.9 87.2,636.3 87.5,624.3 87.8,626.3 88.0,473.7 88.3,470.0 88.6,440.0 88.8,554.8 89.1,543.0 89.4,529.5 89.6,518.3 89.9,455.5 90.2,448.8 90.4,438.2 90.7,453.7 91.0,445.5 91.2,454.6 91.5,469.7 91.8,463.5 92.0,450.0 92.3,454.4 92.6,460.0 92.8,458.4 93.1,467.3 93.4,481.8 93.6,504.5 93.9,502.6 94.2,460.9 94.4,438.0 94.7,439.4 95.0,451.5 95.2,435.2 95.5,415.5 95.8,422.7 96.0,415.3 96.3,425.2 96.6,399.9 96.8,440.1 97.1,438.3 97.4,494.5 97.6,469.1 97.9,472.6 98.2,423.4 98.4,456.3 98.7,421.0 99.0,470.6 99.2,455.5 99.5,483.0 99.8,446.1 100.0,396.0 100.3,408.2 100.6,426.8 100.8,473.9 101.1,462.7 101.4,463.7 101.6,457.7 101.9,460.8 102.2,428.4 102.4,446.2 102.7,418.3 103.0,439.5 103.2,419.5 103.5,414.9 103.8,431.2 104.0,423.5 104.3,454.4 104.6,466.8 104.8,469.7 105.1,484.7 105.4,436.5 105.6,444.2 105.9,437.0 106.2,477.9 106.4,477.7 106.7,451.1 107.0,420.5 107.2,434.6 107.5,447.3 107.7,465.6 108.0,464.5 108.3,433.8 108.5,439.2 108.8,446.9 109.1,474.1 109.3,463.6 109.6,461.6 109.9,483.7 110.1,506.9 110.4,455.7 110.7,434.0 110.9,431.0 111.2,464.4 111.5,466.8 111.7,410.5 112.0,406.1 112.3,390.2 112.5,417.8 112.8,444.5 113.1,464.7 113.3,475.7 113.6,454.5 113.9,478.4 114.1,478.0 114.4,490.6 114.7,454.9 114.9,455.7 115.2,458.3 115.5,483.7 115.7,491.1 116.0,442.5 116.3,433.2 116.5,445.4 116.8,454.0 117.1,438.0 117.3,421.3 117.6,451.1 117.9,457.2 118.1,454.8 118.4,461.4 118.7,449.9 118.9,456.5 119.2,458.3 119.5,467.5 119.7,467.3 120.0,415.3 120.3,381.5 120.5,345.4 120.8,386.7 121.1,389.8 121.3,442.4 121.6,454.9 121.9,514.1 122.1,507.8 122.4,521.6 122.7,505.9 122.9,505.5 123.2,452.6 123.5,421.8 123.7,420.1 124.0,466.1 124.3,512.5 124.5,488.6 124.8,463.2 125.1,430.0 125.3,452.9 125.6,486.5 125.9,508.9 126.1,514.9 126.4,509.3 126.7,486.4 126.9,467.4 127.2,415.0 127.5,442.8 127.7,456.9 128.0,447.3 128.3,412.1 128.5,420.1 128.8,484.6 129.1,514.8 129.3,482.7 129.6,472.3 129.9,477.6 130.1,503.4 130.4,492.7 130.7,445.0 130.9,426.1 131.2,443.3 131.5,498.5 131.7,536.1 132.0,529.1 132.3,503.3 132.5,468.8 132.8,476.9 133.1,447.9 133.3,473.1 133.6,444.9 133.8,480.7 134.1,341.3 134.4,341.7 134.6,362.8 134.9,499.0 135.2,393.6 135.4,338.2 135.7,310.3 136.0,381.6 136.2,298.7 136.5,269.0 136.8,317.0 137.0,317.0 137.3,375.1 137.6,392.5 137.8,532.4 138.1,531.9 138.4,536.1 138.6,524.3 138.9,521.5 139.2,509.6 139.4,497.9 139.7,500.7 140.0,504.2 140.2,509.1 140.5,451.6 140.8,425.8 141.0,446.7 141.3,478.2 141.6,371.5 141.8,355.2 142.1,389.8 142.4,522.2 142.6,478.6 142.9,416.1 143.2,386.1 143.4,428.8 143.7,471.6 144.0,479.7 144.2,466.2 144.5,431.6 144.8,463.5 145.0,470.1 145.3,501.6 145.6,485.6 145.8,490.6 146.1,495.7 146.4,497.0 146.6,508.8 146.9,507.5 147.2,488.4 147.4,447.4 147.7,439.9 148.0,408.0 148.2,398.8 148.5,417.8 148.8,454.6 149.0,483.9 149.3,452.3 149.6,431.6 149.8,439.6 150.1,431.2 150.4,474.3 150.6,457.4 150.9,491.8 151.2,487.4 151.4,481.6 151.7,476.5 152.0,450.6 152.2,469.4 152.5,455.8 152.8,473.1 153.0,490.8 153.3,469.9 153.6,438.7 153.8,418.6 154.1,414.3 154.4,450.9 154.6,465.5 154.9,509.4 155.2,515.8 155.4,506.1 155.7,468.9 156.0,402.1 156.2,392.4 156.5,408.9 156.8,470.5 157.0,466.3 157.3,476.7 157.6,425.2 157.8,410.0 158.1,413.0 158.4,458.6 158.6,443.1 158.9,451.7 159.2,403.9 159.4,420.9 159.7,415.4 160.0,461.3 160.2,471.3 160.5,479.2 160.7,490.7 161.0,490.8 161.3,471.2 161.5,451.5 161.8,406.0 162.1,408.0 162.3,421.9 162.6,464.6 162.9,457.7 163.1,458.3 163.4,491.4 163.7,494.8 163.9,494.2 164.2,492.7 164.5,510.0 164.7,475.1 165.0,467.2 165.3,454.1 165.5,500.2 165.8,513.5 166.1,537.1 166.3,518.6 166.6,511.8 166.9,513.7 167.1,459.1 167.4,449.0 167.7,438.3 167.9,474.5 168.2,468.1 168.5,451.1 168.7,418.2 169.0,428.6 169.3,420.4 169.5,484.9 169.8,495.8 170.1,523.5 170.3,507.1 170.6,492.4 170.9,486.3 171.1,483.6 171.4,461.4 171.7,415.3 171.9,410.9 172.2,414.9 172.5,447.5 172.7,449.0 173.0,471.5 173.3,492.0 173.5,479.2 173.8,485.4 174.1,425.3 174.3,416.7 174.6,384.1 174.9,425.7 175.1,453.2 175.4,452.6 175.7,428.6 175.9,445.3 176.2,485.0 176.5,506.9 176.7,483.4 177.0,465.7 177.3,470.2 177.5,487.1 177.8,484.1 178.1,503.5 178.3,488.3 178.6,474.2 178.9,446.9 179.1,469.6 179.4,494.7 179.7,500.3 179.9,489.4 180.2,479.2 180.5,478.0 180.7,489.7 181.0,486.3 181.3,433.4 181.5,426.4 181.8,445.0 182.1,499.5 182.3,370.7 182.6,341.7 182.9,335.6 183.1,439.5 183.4,464.8 183.7,458.0 183.9,464.6 184.2,433.3 184.5,422.6 184.7,447.1 185.0,485.3 185.3,521.8 185.5,471.7 185.8,453.0 186.1,450.0 186.3,491.4 186.6,514.5 186.8,459.9 187.1,446.0 187.4,442.6 187.6,484.5 187.9,433.1 188.2,358.5 188.4,381.7 188.7,448.1 189.0,493.5 189.2,436.1 189.5,415.1 189.8,416.3 190.0,470.4 190.3,471.5 190.6,447.5 190.8,444.6 191.1,469.4 191.4,516.4 191.6,497.7 191.9,488.2 192.2,435.0 192.4,412.0 192.7,350.1 193.0,385.4 193.2,433.5 193.5,497.3 193.8,503.6 194.0,448.2 194.3,444.0 194.6,420.3 194.8,400.7 195.1,389.2 195.4,420.1 195.6,495.8 195.9,492.2 196.2,440.9 196.4,444.6 196.7,469.3 197.0,517.1 197.2,483.3 197.5,353.2 197.8,300.3 198.0,317.6 198.3,433.1 198.6,486.1 198.8,458.7 199.1,453.6 199.4,431.6 199.6,462.9 199.9,471.2 200.2,481.5 200.4,414.3 200.7,404.1 201.0,416.9 201.2,446.2 201.5,472.5 201.8,464.8 202.0,491.2 202.3,469.4 202.6,481.3 202.8,479.4 203.1,366.4 203.4,360.8 203.6,392.1 203.9,541.5 204.2,523.2 204.4,502.2 204.7,403.1 205.0,417.1 205.2,387.1 205.5,336.9 205.8,351.3 206.0,384.9 206.3,537.9 206.6,552.1 206.8,532.7 207.1,528.3 207.4,499.0 207.6,500.7 207.9,495.7 208.2,519.2 208.4,550.5 208.7,548.5 209.0,539.9 209.2,534.2 209.5,529.6 209.8,537.8 210.0,486.0 210.3,349.1 210.6,346.8 210.8,404.7 211.1,526.7 211.4,517.7 211.6,463.8 211.9,474.4 212.2,462.5 212.4,513.3 212.7,534.0 213.0,557.3 213.2,562.5 213.5,409.2 213.7,388.3 214.0,367.8 214.3,501.5 214.5,522.6 214.8,520.8 215.1,526.0 215.3,383.4 215.6,380.4 215.9,383.0 216.1,526.6 216.4,519.4 216.7,521.2 216.9,516.3 217.2,485.5 217.5,483.5 217.7,490.1 218.0,505.4 218.3,396.7 218.5,403.8 218.8,304.2 219.1,418.1 219.3,407.8 219.6,516.5 219.9,528.1 220.1,543.9 220.4,564.8 220.7,554.9 220.9,547.5 221.2,574.8 221.5,499.8 221.7,463.8 222.0,449.9 222.3,525.4 222.5,539.0 222.8,516.5 223.1,501.7 223.3,514.8 223.6,548.7 223.9,545.1 224.1,491.3 224.4,337.1 224.7,364.0 224.9,418.5 225.2,536.0 225.5,493.8 225.7,498.4 226.0,527.7 226.3,518.5 226.5,507.9 226.8,483.9 227.1,518.3 227.3,470.5 227.6,485.7 227.9,456.4 228.1,519.6 228.4,537.2 228.7,556.6 228.9,405.4 229.2,381.8 229.5,368.9 229.7,501.2 230.0,507.9 230.3,519.7 230.5,426.5 230.8,287.8 231.1,302.5 231.3,418.7 231.6,528.6 231.9,513.6 232.1,504.7 232.4,532.6 232.7,403.4 232.9,369.9 233.2,383.1 233.5,478.4 233.7,365.5 234.0,371.5 234.3,425.7 234.5,564.4 234.8,540.7 235.1,512.1 235.3,522.5 235.6,543.7 235.9,564.9 236.1,569.3 236.4,562.8 236.7,420.6 236.9,347.5 237.2,326.8 237.5,468.0 237.7,513.4 238.0,525.6 238.3,384.4 238.5,387.2 238.8,401.4 239.1,549.6 239.3,538.9 239.6,519.5 239.9,491.9 240.1,504.4 240.4,370.2 240.6,391.4 240.9,374.5 241.2,511.1 241.4,487.7 241.7,507.3 242.0,519.6 242.2,553.6 242.5,420.4 242.8,271.5 243.0,217.1 243.3,217.1 243.6,358.4 243.8,399.7 244.1,527.5 244.4,539.5 244.6,539.2 244.9,566.9 245.2,487.5 245.4,480.5 245.7,439.8 246.0,460.6 246.2,455.0 246.5,497.4 246.8,488.4 247.0,507.0 247.3,504.8 247.6,543.6 247.8,398.6 248.1,334.2 248.4,329.8 248.6,484.6 248.9,527.4 249.2,549.7 249.4,513.5 249.7,517.5 250.0,482.4 250.2,363.8 250.5,301.5 250.8,303.0 251.0,303.0 251.3,228.0 251.6,262.8 251.8,409.6 252.1,538.3 252.4,517.0 252.6,507.1 252.9,509.2 253.2,531.7 253.4,535.5 253.7,404.6 254.0,280.3 254.2,279.6 254.5,425.6 254.8,543.4 255.0,556.5 255.3,535.5 255.6,472.2 255.8,453.9 256.1,453.5 256.4,510.3 256.6,494.5 256.9,502.3 257.2,521.3 257.4,496.2 257.7,515.0 258.0,487.6 258.2,512.2 258.5,510.6 258.8,528.1 259.0,548.9 259.3,399.1 259.6,378.5 259.8,332.6 260.1,470.9 260.4,469.1 260.6,492.1 260.9,468.6 261.2,470.9 261.4,494.2 261.7,505.8 262.0,385.3 262.2,384.2 262.5,309.2 262.8,458.4 263.0,474.6 263.3,543.0 263.6,495.8 263.8,485.3 264.1,517.6 264.4,543.6 264.6,529.0 264.9,520.8 265.2,545.9 265.4,519.7 265.7,518.0 266.0,470.6 266.2,519.9 266.5,508.5 266.8,548.9 267.0,396.2 267.3,391.8 267.5,384.8 267.8,505.8 268.1,509.0 268.3,513.7 268.6,542.0 268.9,558.0 269.1,531.5 269.4,528.9 269.7,536.5 269.9,537.4 270.2,503.1 270.5,497.1 270.7,500.0 271.0,528.8 271.3,527.5 271.5,500.5 271.8,504.4 272.1,479.3 272.3,518.9 272.6,520.4 272.9,399.5 273.1,407.5 273.4,397.8 273.7,515.2 273.9,373.5 274.2,376.2 274.5,390.9 274.7,535.2 275.0,545.5 275.3,539.9 275.5,517.4 275.8,474.3 276.1,483.1 276.3,444.9 276.6,482.8 276.9,489.5 277.1,534.6 277.4,542.6 277.7,525.2 277.9,531.6 278.2,511.1 278.5,537.1 278.7,540.7 279.0,534.6 279.3,506.6 279.5,500.4 279.8,495.4 280.1,454.8 280.3,459.3 280.6,488.1 280.9,488.2 281.1,351.2 281.4,311.7 281.7,357.8 281.9,504.9 282.2,516.3 282.5,480.6 282.7,492.7 283.0,502.7 283.3,507.8 283.5,452.7 283.8,445.0 284.1,500.4 284.3,557.8 284.6,564.5 284.9,535.9 285.1,520.1 285.4,532.3 285.7,407.9 285.9,389.9 286.2,383.1 286.5,510.8 286.7,529.1 287.0,546.0 287.3,569.4 287.5,522.9 287.8,487.0 288.1,459.0 288.3,476.2 288.6,504.8 288.9,525.4 289.1,568.5 289.4,554.3 289.7,529.7 289.9,519.3 290.2,491.0 290.5,528.8 290.7,525.5 291.0,564.4 291.3,529.6 291.5,501.6 291.8,515.0 292.1,465.5 292.3,408.4 292.6,406.2 292.9,463.8 293.1,550.8 293.4,526.1 293.6,545.5 293.9,397.2 294.2,424.4 294.4,417.1 294.7,551.3 295.0,540.6 295.2,552.5 295.5,531.2 295.8,537.6 296.0,510.1 296.3,547.3 296.6,535.4 296.8,551.1 297.1,552.7 297.4,560.2 297.6,579.6 297.9,579.1 298.2,582.2 298.4,569.0 298.7,576.0 299.0,583.3 299.2,601.7 299.5,577.0 299.8,577.4 300.0,572.2 300.3,606.9 300.6,607.3 300.8,583.9 301.1,539.3 301.4,549.1 301.6,537.3 301.9,572.7 302.2,567.9 302.4,595.4 302.7,591.4 303.0,536.3 303.2,538.8 303.5,540.2 303.8,585.9 304.0,576.8 304.3,554.9 304.6,554.7 304.8,554.6 305.1,561.5 305.4,554.4 305.6,561.8 305.9,584.2 306.2,599.7 306.4,609.7 306.7,576.8 307.0,585.9 307.2,563.0 307.5,571.9 307.8,552.6 308.0,574.9 308.3,592.0 308.6,592.8 308.8,587.0 309.1,602.8 309.4,617.8 309.6,622.6 309.9,618.1 310.2,606.7 310.4,604.0 310.7,566.0 311.0,574.9 311.2,578.0 311.5,546.7 311.8,530.3 312.0,538.2 312.3,589.9 312.6,611.4 312.8,595.9 313.1,561.9 313.4,555.7 313.6,547.6 313.9,583.2 314.2,555.6 314.4,574.4 314.7,581.0 315.0,595.7 315.2,593.3 315.5,600.0 315.8,604.8 316.0,589.4 316.3,575.0 316.6,586.7 316.8,594.4 317.1,600.2 317.4,570.5 317.6,580.6 317.9,585.6 318.2,579.1 318.4,562.3 318.7,567.3 319.0,599.0 319.2,613.4 319.5,609.5 319.8,580.1 320.0,582.1 320.3,589.8 320.5,594.6 320.8,584.8 321.1,564.9 321.3,582.3 321.6,578.7 321.9,576.9 322.1,576.5 322.4,596.5 322.7,604.9 322.9,565.6 323.2,548.5 323.5,548.6 323.7,569.5 324.0,582.5 324.3,593.2 324.5,625.4 324.8,609.2 325.1,610.1 325.3,610.2 325.6,608.1 325.9,609.1 326.1,613.0 326.4,632.5 326.7,620.0 326.9,618.7 327.2,599.3 327.5,607.9 327.7,582.8 328.0,594.4 328.3,556.2 328.5,569.8 328.8,575.4 329.1,604.8 329.3,605.6 329.6,602.8 329.9,559.1 330.1,536.4 330.4,514.6 330.7,542.4 330.9,569.7 331.2,590.1 331.5,616.0 331.7,590.6 332.0,553.5 332.3,545.9 332.5,562.3 332.8,596.4 333.1,586.8 333.3,572.6 333.6,505.9 333.9,503.2 334.1,513.7 334.4,577.7 334.7,564.0 334.9,559.8 335.2,564.8 335.5,561.8 335.7,568.1 336.0,546.9 336.3,570.3 336.5,540.0 336.8,523.7 337.1,522.4 337.3,553.4 337.6,586.2 337.9,579.7 338.1,570.0 338.4,582.4 338.7,598.9 338.9,584.2 339.2,566.1 339.5,572.7 339.7,594.9 340.0,605.2 340.3,593.7 340.5,603.8 340.8,600.2 341.1,606.0 341.3,601.5 341.6,605.4 341.9,581.2 342.1,579.1 342.4,566.8 342.7,586.4 342.9,570.9 343.2,570.7 343.5,568.6 343.7,562.6 344.0,567.0 344.3,512.9 344.5,525.9 344.8,520.9 345.1,566.1 345.3,547.1 345.6,546.0 345.9,553.0 346.1,586.2 346.4,557.5 346.6,530.7 346.9,491.8 347.2,523.8 347.4,556.9 347.7,525.5 348.0,534.6 348.2,529.1 348.5,567.2 348.8,563.9 349.0,570.8 349.3,590.6 349.6,600.4 349.8,581.1 350.1,593.1 350.4,555.8 350.6,577.5 350.9,580.3 351.2,609.0 351.4,608.6 351.7,598.8 352.0,586.6 352.2,577.6 352.5,569.6 352.8,575.0 353.0,572.7 353.3,589.2 353.6,595.1 353.8,579.6 354.1,555.8 354.4,543.6 354.6,567.2 354.9,560.3 355.2,576.4 355.4,566.8 355.7,556.4 356.0,564.1 356.2,563.6 356.5,581.8 356.8,569.1 357.0,550.1 357.3,547.7 357.6,523.2 357.8,514.3 358.1,538.4 358.4,572.3 358.6,595.0 358.9,545.6 359.2,533.5 359.4,520.9 359.7,565.1 360.0,536.8 360.2,541.0 360.5,538.5 360.8,474.6 361.0,487.5 361.3,448.0 361.6,386.5 361.8,396.9 362.1,447.3 362.4,579.5 362.6,519.2 362.9,507.6 363.2,532.9 363.4,559.6 363.7,532.3 364.0,515.6 364.2,554.2 364.5,589.5 364.8,612.1 365.0,589.1 365.3,573.9 365.6,544.7 365.8,554.2 366.1,559.9 366.4,580.9 366.6,564.3 366.9,571.3 367.2,570.4 367.4,597.5 367.7,573.5 368.0,579.9 368.2,569.1 368.5,581.3 368.8,572.7 369.0,584.5 369.3,576.0 369.6,559.3 369.8,519.5 370.1,531.9 370.4,544.5 370.6,522.7 370.9,526.6 371.2,535.7 371.4,565.9 371.7,523.4 372.0,495.7 372.2,508.6 372.5,508.7 372.8,532.5 373.0,524.0 373.3,573.4 373.5,553.6 373.8,562.7 374.1,524.1 374.3,557.1 374.6,550.9 374.9,574.2 375.1,557.3 375.4,559.2 375.7,562.0 375.9,546.9 376.2,562.3 376.5,551.1 376.7,465.9 377.0,463.8 377.3,431.8 377.5,528.8 377.8,372.4 378.1,402.0 378.3,393.2 378.6,533.2 378.9,556.3 379.1,550.3 379.4,525.0 379.7,517.8 379.9,497.6 380.2,528.0 380.5,513.6 380.7,560.5 381.0,551.8 381.3,568.7 381.5,568.7 381.8,574.0 382.1,539.1 382.3,532.3 382.6,545.1 382.9,548.7 383.1,525.2 383.4,514.9 383.7,530.3 383.9,557.3 384.2,570.1 384.5,588.5 384.7,582.5 385.0,558.1 385.3,549.1 385.5,545.3 385.8,547.5 386.1,398.7 386.3,384.5 386.6,390.8 386.9,547.7 387.1,566.3 387.4,585.8 387.7,567.0 387.9,564.3 388.2,553.3 388.5,574.8 388.7,569.6 389.0,560.2 389.3,538.6 389.5,559.3 389.8,558.4 390.1,573.5 390.3,545.7 390.6,542.6 390.9,530.8 391.1,530.6 391.4,394.6 391.7,351.2 391.9,368.3 392.2,517.0 392.5,579.2 392.7,572.3 393.0,423.6 393.3,393.0 393.5,392.3 393.8,553.4 394.1,572.5 394.3,577.3 394.6,556.0 394.9,463.4 395.1,315.0 395.4,323.8 395.7,267.8 395.9,429.4 396.2,440.6 396.5,590.7 396.7,564.4 397.0,554.3 397.3,557.0 397.5,567.9 397.8,570.5 398.1,585.6 398.3,599.3 398.6,581.3 398.9,566.1 399.1,572.2 399.4,590.7 399.7,594.7 399.9,541.3 400.2,553.6 400.4,543.4 400.7,566.8 401.0,547.8 401.2,568.3 401.5,586.2 401.8,604.6 402.0,598.2 402.3,590.5 402.6,596.3 402.8,576.6 403.1,556.9 403.4,405.2 403.6,423.4 403.9,420.2 404.2,550.9 404.4,562.1 404.7,603.4 405.0,603.6 405.2,585.5 405.5,566.9 405.8,563.7 406.0,573.4 406.3,585.5 406.6,586.9 406.8,541.8 407.1,519.8 407.4,501.0 407.6,525.7 407.9,518.0 408.2,546.3 408.4,404.9 408.7,428.1 409.0,416.6 409.2,574.2 409.5,588.4 409.8,609.6 410.0,618.5 410.3,523.2 410.6,476.4 410.8,444.6 411.1,514.7 411.4,536.4 411.6,564.5 411.9,526.2 412.2,418.1 412.4,403.1 412.7,455.5 413.0,455.4 413.2,452.2 413.5,430.0 413.8,538.7 414.0,557.4 414.3,592.9 414.6,570.5 414.8,538.5 415.1,534.5 415.4,569.4 415.6,545.6 415.9,536.6 416.2,536.3 416.4,578.2 416.7,568.4 417.0,565.8 417.2,552.7 417.5,562.0 417.8,567.7 418.0,598.8 418.3,592.0 418.6,543.4 418.8,519.1 419.1,502.9 419.4,540.5 419.6,545.0 419.9,583.1 420.2,594.6 420.4,602.5 420.7,573.6 421.0,534.5 421.2,546.7 421.5,574.9 421.8,611.7 422.0,595.4 422.3,535.9 422.6,536.0 422.8,544.6 423.1,594.9 423.4,560.6 423.6,557.2 423.9,552.8 424.2,576.2 424.4,592.9 424.7,522.0 425.0,528.6 425.2,498.6 425.5,583.0 425.8,565.8 426.0,563.3 426.3,492.6 426.6,510.9 426.8,499.0 427.1,538.7 427.3,512.5 427.6,552.1 427.9,551.5 428.1,576.3 428.4,530.6 428.7,544.5 428.9,558.9 429.2,586.3 429.5,585.7 429.7,564.4 430.0,555.1 430.3,556.5 430.5,551.5 430.8,574.7 431.1,574.0 431.3,584.7 431.6,553.4 431.9,551.8 432.1,535.6 432.4,550.1 432.7,543.9 432.9,526.0 433.2,530.3 433.5,539.2 433.7,570.9 434.0,553.8 434.3,555.6 434.5,554.4 434.8,577.3 435.1,567.1 435.3,588.3 435.6,588.3 435.9,600.7 436.1,584.3 436.4,581.3 436.7,558.3 436.9,543.9 437.2,548.6 437.5,560.7 437.7,545.4 438.0,541.1 438.3,547.6 438.5,564.7 438.8,570.7 439.1,567.1 439.3,552.1 439.6,503.8 439.9,512.1 440.1,510.7 440.4,398.2 440.7,339.1 440.9,344.6 441.2,482.3 441.5,524.0 441.7,526.6 442.0,484.1 442.3,460.8 442.5,429.9 442.8,436.3 443.1,422.3 443.3,385.2 443.6,378.0 443.9,276.6 444.1,326.9 444.4,376.4 444.7,522.7 444.9,564.5 445.2,542.5 445.5,525.4 445.7,496.4 446.0,468.1 446.3,454.4 446.5,500.8 446.8,510.2 447.1,394.8 447.3,391.4 447.6,453.2 447.9,586.9 448.1,417.5 448.4,401.9 448.7,420.9 448.9,520.9 449.2,493.6 449.5,464.0 449.7,445.2 450.0,496.9 450.3,483.8 450.5,520.7 450.8,482.3 451.1,545.6 451.3,538.1 451.6,448.0 451.9,416.8 452.1,460.1 452.4,499.8 452.7,461.0 452.9,427.1 453.2,497.7 453.4,490.1 453.7,520.0 454.0,467.1 454.2,502.6 454.5,352.7 454.8,384.2 455.0,253.0 455.3,387.0 455.6,364.8 455.8,519.8 456.1,534.7 456.4,530.7 456.6,494.8 456.9,413.6 457.2,452.8 457.4,486.3 457.7,418.5 458.0,395.2 458.2,362.4 458.5,482.9 458.8,467.1 459.0,500.3 459.3,500.6 459.6,529.3 459.8,514.3 460.1,468.7 460.4,332.4 460.6,286.4 460.9,245.4 461.2,390.4 461.4,424.4 461.7,518.1 462.0,496.3 462.2,463.1 462.5,438.6 462.8,439.0 463.0,471.8 463.3,519.1 463.6,514.2 463.8,536.8 464.1,386.2 464.4,393.1 464.6,386.5 464.9,538.0 465.2,529.4 465.4,534.4 465.7,498.4 466.0,514.1 466.2,367.5 466.5,251.9 466.8,231.7 467.0,357.2 467.3,491.5 467.6,517.7 467.8,463.4 468.1,455.7 468.4,317.0 468.6,382.0 468.9,405.7 469.2,546.1 469.4,526.2 469.7,375.9 470.0,358.5 470.2,242.2 470.5,388.4 470.8,394.3 471.0,499.2 471.3,516.7 471.6,548.4 471.8,587.6 472.1,580.8 472.4,566.2 472.6,479.7 472.9,395.1 473.2,396.4 473.4,492.6 473.7,553.9 474.0,499.3 474.2,488.9 474.5,502.7 474.8,532.6 475.0,527.9 475.3,380.4 475.6,392.9 475.8,380.0 476.1,519.1 476.4,504.6 476.6,445.2 476.9,406.7 477.2,286.2 477.4,219.8 477.7,259.9 478.0,401.6 478.2,553.6 478.5,529.5 478.8,387.8 479.0,365.0 479.3,364.8 479.6,526.0 479.8,541.7 480.1,425.3 480.3,416.4 480.6,413.9 480.9,514.8 481.1,362.5 481.4,311.2 481.7,284.3 481.9,369.5 482.2,427.0 482.5,474.6 482.7,442.0 483.0,293.3 483.3,306.1 483.5,253.5 483.8,364.1 484.1,379.7 484.3,532.0 484.6,565.1 484.9,542.9 485.1,448.9 485.4,439.4 485.7,416.5 485.9,503.7 486.2,507.3 486.5,539.3 486.7,535.9 487.0,398.0 487.3,327.1 487.5,285.1 487.8,285.1 488.1,332.6 488.3,376.5 488.6,490.8 488.9,532.6 489.1,521.4 489.4,529.7 489.7,531.5 489.9,541.7 490.2,504.5 490.5,492.3 490.7,485.5 491.0,400.1 491.3,411.5 491.5,388.9 491.8,538.1 492.1,504.1 492.3,531.8 492.6,534.4 492.9,519.0 493.1,509.3 493.4,475.4 493.7,485.4 493.9,353.9 494.2,375.4 494.5,373.9 494.7,476.8 495.0,474.9 495.3,502.2 495.5,535.1 495.8,495.1 496.1,478.7 496.3,412.9 496.6,447.4 496.9,444.6 497.1,457.6 497.4,401.4 497.7,384.2 497.9,443.2 498.2,506.4 498.5,524.8 498.7,523.7 499.0,475.4 499.3,465.2 499.5,462.9 499.8,514.4 500.1,523.7 500.3,385.1 500.6,338.5 500.9,347.2 501.1,498.2 501.4,513.2 501.7,519.9 501.9,495.2 502.2,504.3 502.5,504.9 502.7,435.5 503.0,403.9 503.3,360.7 503.5,428.2 503.8,443.8 504.1,488.0 504.3,489.7 504.6,478.5 504.9,477.6 505.1,469.5 505.4,478.9 505.7,458.5 505.9,371.0 506.2,398.1 506.4,410.3 506.7,522.7 507.0,509.8 507.2,496.8 507.5,489.1 507.8,485.1 508.0,443.1 508.3,438.4 508.6,411.3 508.8,442.8 509.1,436.6 509.4,517.4 509.6,564.1 509.9,563.5 510.2,532.7 510.4,492.3 510.7,499.9 511.0,364.8 511.2,385.3 511.5,386.4 511.8,499.3 512.0,512.1 512.3,472.0 512.6,467.9 512.8,469.2 513.1,493.7 513.4,515.8 513.6,485.7 513.9,497.3 514.2,493.9 514.4,514.4 514.7,520.1 515.0,491.9 515.2,500.8 515.5,435.2 515.8,475.7 516.0,327.5 516.3,406.0 516.6,406.7 516.8,537.9 517.1,544.5 517.4,551.0 517.6,503.6 517.9,457.2 518.2,409.8 518.4,438.2 518.7,479.3 519.0,462.8 519.2,406.5 519.5,402.5 519.8,319.5 520.0,391.6 520.3,373.8 520.6,475.7 520.8,472.3 521.1,467.6 521.4,489.7 521.6,509.3 521.9,461.7 522.2,482.5 522.4,467.9 522.7,521.3 523.0,491.0 523.2,469.9 523.5,368.0 523.8,372.6 524.0,403.5 524.3,490.0 524.6,519.5 524.8,497.0 525.1,385.0 525.4,379.3 525.6,386.8 525.9,494.5 526.2,454.3 526.4,443.6 526.7,469.8 527.0,483.9 527.2,494.4 527.5,513.2 527.8,492.3 528.0,488.1 528.3,455.8 528.6,463.0 528.8,475.1 529.1,478.9 529.4,517.5 529.6,522.9 529.9,542.1 530.2,540.9 530.4,403.3 530.7,384.2 531.0,353.2 531.2,484.7 531.5,479.1 531.8,422.2 532.0,422.8 532.3,429.7 532.6,504.7 532.8,372.6 533.1,361.3 533.3,374.6 533.6,485.7 533.9,504.9 534.1,484.3 534.4,474.8 534.7,455.2 534.9,469.5 535.2,508.5 535.5,523.4 535.7,388.7 536.0,377.3 536.3,377.4 536.5,411.3 536.8,399.7 537.1,364.3 537.3,477.0 537.6,445.9 537.9,490.5 538.1,490.5 538.4,501.5 538.7,469.7 538.9,438.7 539.2,445.1 539.5,459.5 539.7,460.4 540.0,426.4 540.3,406.3 540.5,377.0 540.8,364.7 541.1,403.3 541.3,364.9 541.6,307.5 541.9,267.7 542.1,341.9 542.4,400.3 542.7,333.0 542.9,343.5 543.2,390.6 543.5,448.1 543.7,450.8 544.0,459.4 544.3,500.2 544.5,488.9 544.8,495.5 545.1,483.3 545.3,494.9 545.6,436.9 545.9,459.0 546.1,437.3 546.4,504.6 546.7,446.7 546.9,478.8 547.2,475.5 547.5,458.1 547.7,405.4 548.0,398.5 548.3,465.4 548.5,477.4 548.8,470.7 549.1,474.3 549.3,368.0 549.6,382.4 549.9,355.2 550.1,491.5 550.4,460.5 550.7,447.2 550.9,451.5 551.2,474.4 551.5,482.8 551.7,481.7 552.0,478.9 552.3,487.5 552.5,486.4 552.8,369.7 553.1,342.3 553.3,315.2 553.6,328.3 553.9,243.6 554.1,132.3 554.4,250.6 554.7,299.8 554.9,413.7 555.2,382.9 555.5,333.8 555.7,298.4 556.0,313.9 556.3,452.2 556.5,416.0 556.8,428.8 557.1,409.6 557.3,495.1 557.6,455.8 557.9,471.1 558.1,474.5 558.4,520.0 558.7,514.8 558.9,481.2 559.2,450.4 559.5,453.1 559.7,499.1 560.0,483.8 560.2,484.2 560.5,484.7 560.8,533.5 561.0,530.4 561.3,474.1 561.6,440.3 561.8,433.4 562.1,490.8 562.4,535.8 562.6,413.6 562.9,351.3 563.2,320.1 563.4,363.6 563.7,393.1 564.0,412.1 564.2,489.0 564.5,515.6 564.8,491.5 565.0,522.6 565.3,475.2 565.6,481.4 565.8,434.5 566.1,486.2 566.4,417.0 566.6,462.2 566.9,437.8 567.2,531.0 567.4,381.4 567.7,387.6 568.0,244.3 568.2,244.3 568.5,232.3 568.8,372.4 569.0,473.1 569.3,487.1 569.6,489.4 569.8,524.4 570.1,535.8 570.4,518.2 570.6,491.6 570.9,477.2 571.2,469.7 571.4,485.6 571.7,473.0 572.0,451.1 572.2,473.9 572.5,484.0 572.8,516.8 573.0,453.5 573.3,430.7 573.6,447.6 573.8,505.4 574.1,556.9 574.4,527.8 574.6,505.4 574.9,486.5 575.2,517.9 575.4,514.1 575.7,523.4 576.0,485.9 576.2,510.2 576.5,431.4 576.8,407.4 577.0,362.6 577.3,450.8 577.6,463.7 577.8,462.9 578.1,450.2 578.4,476.5 578.6,515.3 578.9,481.2 579.2,409.6 579.4,418.7 579.7,459.3 580.0,517.4 580.2,515.9 580.5,476.9 580.8,504.2 581.0,465.6 581.3,461.3 581.6,441.1 581.8,437.1 582.1,476.7 582.4,357.7 582.6,378.4 582.9,379.0 583.2,502.6 583.4,494.0 583.7,476.1 584.0,466.0 584.2,471.9 584.5,500.8 584.8,514.4 585.0,529.1 585.3,377.2 585.6,338.2 585.8,339.9 586.1,438.9 586.4,394.6 586.6,369.0 586.9,412.5 587.1,474.6 587.4,471.8 587.7,473.7 587.9,479.9 588.2,375.7 588.5,355.4 588.7,335.0 589.0,473.5 589.3,489.4 589.5,541.2 589.8,503.1 590.1,513.6 590.3,475.9 590.6,503.4 590.9,454.7 591.1,458.1 591.4,453.4 591.7,457.8 591.9,348.7 592.2,318.0 592.5,306.4 592.7,409.0 593.0,449.4 593.3,480.8 593.5,524.1 593.8,518.5 594.1,518.6 594.3,458.0 594.6,398.2 594.9,412.4 595.1,476.3 595.4,542.6 595.7,518.3 595.9,436.8 596.2,443.9 596.5,469.2 596.7,541.7 597.0,487.2 597.3,477.8 597.5,464.0 597.8,516.4 598.1,491.6 598.3,492.3 598.6,473.5 598.9,498.8 599.1,502.3 599.4,382.2 599.7,379.9 599.9,359.0 600.2,487.1 600.5,494.7 600.7,497.6 601.0,504.8 601.3,485.7 601.5,466.4 601.8,456.4 602.1,470.0 602.3,468.4 602.6,465.9 602.9,466.6 603.1,495.2 603.4,475.7 603.7,448.9 603.9,328.6 604.2,333.8 604.5,349.3 604.7,488.7 605.0,500.6 605.3,533.5 605.5,504.4 605.8,521.5 606.1,506.9 606.3,475.1 606.6,453.8 606.9,378.6 607.1,432.8 607.4,435.5 607.7,523.5 607.9,520.8 608.2,421.8 608.5,333.0 608.7,353.8 609.0,334.0 609.3,402.7 609.5,350.9 609.8,440.3 610.1,420.2 610.3,439.1 610.6,457.4 610.9,473.3 611.1,408.5 611.4,451.1 611.7,427.6 611.9,492.9 612.2,423.9 612.5,441.3 612.7,323.0 613.0,359.8 613.2,364.5 613.5,474.8 613.8,466.3 614.0,448.8 614.3,476.4 614.6,440.7 614.8,399.5 615.1,380.9 615.4,442.3 615.6,519.3 615.9,490.5 616.2,453.5 616.4,424.2 616.7,470.5 617.0,482.6 617.2,385.1 617.5,371.2 617.8,368.3 618.0,483.5 618.3,487.4 618.6,380.0 618.8,367.6 619.1,383.1 619.4,408.1 619.6,286.6 619.9,144.2 620.2,245.6 620.4,324.0 620.7,439.3 621.0,442.6 621.2,516.2 621.5,474.1 621.8,496.3 622.0,477.9 622.3,542.1 622.6,517.6 622.8,505.1 623.1,500.0 623.4,503.1 623.6,524.9 623.9,532.1 624.2,536.1 624.4,523.7 624.7,507.0 625.0,492.0 625.2,509.7 625.5,490.4 625.8,371.1 626.0,351.6 626.3,375.8 626.6,518.6 626.8,505.1 627.1,532.3 627.4,544.3 627.6,540.0 627.9,522.9 628.2,498.4 628.4,428.3 628.7,401.4 629.0,412.9 629.2,497.6 629.5,386.7 629.8,327.1 630.0,300.3 630.3,424.3 630.6,342.0 630.8,376.5 631.1,376.8 631.4,483.3 631.6,437.2 631.9,455.4 632.2,480.0 632.4,505.8 632.7,476.7 633.0,345.6 633.2,359.0 633.5,384.7 633.8,526.3 634.0,513.4 634.3,374.2 634.6,360.0 634.8,382.1 635.1,513.3 635.4,523.9 635.6,517.7 635.9,514.5 636.2,489.7 636.4,487.0 636.7,505.8 637.0,522.1 637.2,518.7 637.5,503.9 637.8,374.6 638.0,374.0 638.3,378.7 638.6,485.3 638.8,497.8 639.1,487.9 639.4,509.4 639.6,513.6 639.9,534.0 640.1,517.6 640.4,482.2 640.7,445.6 640.9,454.1 641.2,479.9 641.5,448.1 641.7,327.7 642.0,297.4 642.3,343.7 642.5,450.9 642.8,455.3 643.1,466.9 643.3,502.7 643.6,509.6 643.9,473.7 644.1,441.3 644.4,461.2 644.7,360.3 644.9,385.4 645.2,353.9 645.5,458.9 645.7,456.7 646.0,463.2 646.3,486.7 646.5,492.5 646.8,516.8 647.1,526.0 647.3,490.6 647.6,425.4 647.9,408.5 648.1,400.9 648.4,463.3 648.7,342.5 648.9,349.1 649.2,337.9 649.5,435.2 649.7,460.4 650.0,461.7 650.3,511.3 650.5,427.8 650.8,436.2 651.1,289.3 651.3,244.6 651.6,119.2 651.9,119.2 652.1,119.2 652.4,200.4 652.7,331.3 652.9,439.4 653.2,437.6 653.5,441.6 653.7,371.0 654.0,404.6 654.3,410.8 654.5,499.5 654.8,552.5 655.1,513.6 655.3,541.6 655.6,498.5 655.9,505.4 656.1,351.2 656.4,373.0 656.7,410.6 656.9,536.0 657.2,543.6 657.5,486.8 657.7,444.7 658.0,422.5 658.3,382.3 658.5,421.7 658.8,358.3 659.1,410.8 659.3,428.0 659.6,478.0 659.9,511.1 660.1,476.8 660.4,419.6 660.7,392.6 660.9,429.5 661.2,413.0 661.5,437.0 661.7,437.0 662.0,507.2 662.3,465.1 662.5,433.4 662.8,393.9 663.1,442.5 663.3,459.4 663.6,530.8 663.9,514.3 664.1,475.0 664.4,454.7 664.7,464.3 664.9,375.8 665.2,341.9 665.5,330.4 665.7,456.9 666.0,456.2 666.2,449.7 666.5,411.1 666.8,457.1 667.0,468.9 667.3,516.9 667.6,528.5 667.8,528.0 668.1,504.7 668.4,460.5 668.6,451.5 668.9,472.5 669.2,477.7 669.4,499.4 669.7,478.6 670.0,514.4 670.2,526.1 670.5,535.6 670.8,518.7 671.0,506.9 671.3,533.1 671.6,525.9 671.8,528.8 672.1,454.8 672.4,448.6 672.6,444.8 672.9,370.3 673.2,383.7 673.4,385.8 673.7,532.4 674.0,517.0 674.2,519.0 674.5,486.9 674.8,512.6 675.0,491.2 675.3,499.1 675.6,461.7 675.8,449.4 676.1,471.1 676.4,477.4 676.6,442.3 676.9,441.7 677.2,432.0 677.4,359.9 677.7,336.5 678.0,276.4 678.2,435.2 678.5,461.4 678.8,551.9 679.0,540.6 679.3,527.5 679.6,506.3 679.8,488.5 680.1,501.3 680.4,499.4 680.6,489.0 680.9,486.2 681.2,381.9 681.4,417.7 681.7,399.6 682.0,553.0 682.2,495.9 682.5,495.8 682.8,342.3 683.0,244.3 683.3,246.7 683.6,370.6 683.8,483.6 684.1,429.6 684.4,305.6 684.6,280.2 684.9,322.9 685.2,360.7 685.4,378.2 685.7,410.5 686.0,372.8 686.2,413.8 686.5,287.7 686.8,392.2 687.0,396.6 687.3,474.9 687.6,370.3 687.8,336.7 688.1,367.7 688.4,487.7 688.6,472.6 688.9,480.5 689.2,504.3 689.4,500.2 689.7,514.2 690.0,464.0 690.2,520.0 690.5,493.9 690.8,490.0 691.0,336.3 691.3,356.6 691.6,401.7 691.8,502.6 692.1,458.4 692.4,482.0 692.6,496.9 692.9,536.8 693.1,447.3 693.4,471.0 693.7,327.6 693.9,371.7 694.2,331.6 694.5,418.0 694.7,305.2 695.0,343.6 695.3,394.7 695.5,534.4 695.8,542.4 696.1,539.9 696.3,400.2 696.6,375.0 696.9,339.7 697.1,402.0 697.4,384.4 697.7,401.3 697.9,420.4 698.2,431.0 698.5,408.0 698.7,434.2 699.0,446.8 699.3,453.2 699.5,490.6 699.8,364.3 700.1,389.7 700.3,345.9 700.6,494.4 700.9,368.9 701.1,377.6 701.4,333.4 701.7,469.2 701.9,505.3 702.2,400.9 702.5,265.1 702.7,242.2 703.0,270.9 703.3,390.6 703.5,356.2 703.8,428.0 704.1,421.9 704.3,440.0 704.6,466.7 704.9,469.0 705.1,480.0 705.4,487.5 705.7,492.9 705.9,427.0 706.2,418.2 706.5,417.4 706.7,507.1 707.0,521.5 707.3,546.2 707.5,543.4 707.8,490.0 708.1,469.5 708.3,485.4 708.6,490.5 708.9,502.8 709.1,491.5 709.4,485.7 709.7,473.0 709.9,397.6 710.2,432.2 710.5,447.0 710.7,518.0 711.0,551.7 711.3,412.7 711.5,411.2 711.8,347.0 712.1,347.0 712.3,209.5 712.6,256.2 712.9,374.4 713.1,446.3 713.4,417.7 713.7,299.5 713.9,312.4 714.2,334.1 714.5,474.3 714.7,546.9 715.0,543.4 715.3,532.6 715.5,494.9 715.8,412.6 716.1,414.3 716.3,427.2 716.6,497.1 716.9,496.4 717.1,499.3 717.4,525.1 717.7,521.3 717.9,503.9 718.2,506.4 718.5,515.7 718.7,522.2 719.0,520.9 719.3,489.5 719.5,468.0 719.8,457.6 720.0,391.0 720.3,387.7 720.6,368.4 720.8,446.2 721.1,439.0 721.4,388.8 721.6,386.4 721.9,331.9 722.2,392.3 722.4,411.9 722.7,511.5 723.0,520.6 723.2,513.7 723.5,505.4 723.8,515.9 724.0,497.6 724.3,510.7 724.6,512.3 724.8,526.7 725.1,384.6 725.4,378.9 725.6,319.3 725.9,446.7 726.2,423.4 726.4,503.7 726.7,416.3 727.0,431.4 727.2,388.3 727.5,466.5 727.8,446.0 728.0,480.4 728.3,362.3 728.6,290.1 728.8,235.4 729.1,347.0 729.4,419.8 729.6,475.5 729.9,498.0 730.2,521.0 730.4,536.6 730.7,402.5 731.0,408.3 731.2,408.5 731.5,533.7 731.8,525.2 732.0,512.7 732.3,508.8 732.6,492.3 732.8,451.9 733.1,468.2 733.4,494.5 733.6,507.7 733.9,496.3 734.2,356.7 734.4,353.0 734.7,319.7 735.0,433.6 735.2,470.0 735.5,535.5 735.8,528.4 736.0,517.4 736.3,489.0 736.6,449.6 736.8,424.4 737.1,427.3 737.4,487.7 737.6,496.2 737.9,478.4 738.2,481.4 738.4,484.7 738.7,471.1 739.0,480.2 739.2,477.1 739.5,528.6 739.8,539.3 740.0,541.7 740.3,497.8 740.6,484.8 740.8,466.4 741.1,483.8 741.4,447.6 741.6,484.6 741.9,441.9 742.2,438.0 742.4,393.1 742.7,447.8 743.0,440.7 743.2,466.9 743.5,467.3 743.8,513.3 744.0,518.8 744.3,506.7 744.6,474.5 744.8,477.6 745.1,495.1 745.4,493.3 745.6,436.7 745.9,437.6 746.1,423.4 746.4,496.0 746.7,417.8 746.9,458.6 747.2,454.7 747.5,508.9 747.7,513.9 748.0,455.6 748.3,460.9 748.5,444.0 748.8,485.1 749.1,464.3 749.3,482.1 749.6,430.9 749.9,445.4 750.1,430.5 750.4,445.9 750.7,448.6 750.9,458.9 751.2,504.7 751.5,521.7 751.7,511.9 752.0,483.3 752.3,463.7 752.5,491.4 752.8,505.4 753.1,492.7 753.3,461.5 753.6,428.6 753.9,448.7 754.1,459.0 754.4,512.1 754.7,525.9 754.9,522.9 755.2,519.8 755.5,493.7 755.7,503.0 756.0,495.6 756.3,461.8 756.5,439.6 756.8,418.8 757.1,479.0 757.3,511.8 757.6,542.5 757.9,503.8 758.1,504.8 758.4,495.9 758.7,484.4 758.9,476.0 759.2,477.2 759.5,503.5 759.7,518.1 760.0,488.5 760.3,506.0 760.5,489.9 760.8,542.6 761.1,550.0 761.3,573.1 761.6,522.5 761.9,481.8 762.1,467.0 762.4,471.8 762.7,491.0 762.9,452.0 763.2,493.1 763.5,525.5 763.7,572.6 764.0,543.9 764.3,466.5 764.5,444.5 764.8,479.6 765.1,542.2 765.3,412.6 765.6,409.8 765.9,417.7 766.1,542.9 766.4,529.5 766.7,528.3 766.9,504.3 767.2,478.2 767.5,457.4 767.7,433.7 768.0,476.9 768.3,471.4 768.5,511.1 768.8,460.8 769.1,489.5 769.3,372.1 769.6,400.2 769.9,414.9 770.1,532.4 770.4,531.7 770.7,511.1 770.9,525.4 771.2,524.6 771.5,507.0 771.7,505.6 772.0,524.4 772.3,547.8 772.5,549.6 772.8,534.9 773.0,476.9 773.3,491.9 773.6,518.3 773.8,569.6 774.1,580.5 774.4,548.5 774.6,549.8 774.9,534.1 775.2,565.1 775.4,559.6 775.7,560.2 776.0,564.6 776.2,562.0 776.5,543.0 776.8,528.7 777.0,535.6 777.3,485.4 777.6,473.7 777.8,450.0 778.1,478.1 778.4,495.8 778.6,503.8 778.9,538.8 779.2,505.8 779.4,510.2 779.7,488.1 780.0,512.4 780.2,383.0 780.5,395.3 780.8,370.2 781.0,529.1 781.3,488.8 781.6,412.4 781.8,383.6 782.1,450.9 782.4,546.9 782.6,535.3 782.9,491.8 783.2,495.3 783.4,406.7 783.7,403.2 784.0,358.9 784.2,395.1 784.5,419.3 784.8,440.0 785.0,534.1 785.3,559.8 785.6,569.3 785.8,536.1 786.1,512.2 786.4,539.0 786.6,526.9 786.9,507.4 787.2,489.2 787.4,504.2 787.7,390.3 788.0,375.5 788.2,411.8 788.5,551.6 788.8,567.6 789.0,494.2 789.3,503.8 789.6,498.3 789.8,545.2 790.1,537.9 790.4,560.3 790.6,498.1 790.9,492.0 791.2,454.2 791.4,503.8 791.7,519.5 792.0,534.2 792.2,506.1 792.5,511.8 792.8,484.2 793.0,513.0 793.3,497.4 793.6,530.7 793.8,522.1 794.1,518.2 794.4,445.1 794.6,443.5 794.9,394.8 795.2,441.5 795.4,473.7 795.7,519.6 796.0,455.9 796.2,438.2 796.5,461.3 796.8,526.2 797.0,508.0 797.3,479.4 797.6,515.2 797.8,481.9 798.1,490.3 798.4,478.4 798.6,429.7 798.9,404.4 799.2,365.6 799.4,436.7 799.7,483.9 799.9,479.7 800.2,512.9 800.5,496.7 800.7,541.6 801.0,520.3 801.3,413.9 801.5,271.2 801.8,292.0 802.1,351.3 802.3,481.9 802.6,469.5 802.9,510.0 803.1,500.0 803.4,493.5 803.7,499.5 803.9,530.0 804.2,546.1 804.5,553.9 804.7,534.2 805.0,501.1 805.3,350.3 805.5,380.3 805.8,427.1 806.1,550.8 806.3,513.7 806.6,511.2 806.9,502.6 807.1,521.7 807.4,460.4 807.7,450.3 807.9,343.3 808.2,359.5 808.5,254.5 808.7,368.1 809.0,396.8 809.3,546.0 809.5,496.7 809.8,513.0 810.1,403.1 810.3,302.3 810.6,207.3 810.9,322.0 811.1,460.5 811.4,563.3 811.7,559.0 811.9,546.5 812.2,552.0 812.5,439.2 812.7,444.8 813.0,428.0 813.3,528.1 813.5,535.5 813.8,421.7 814.1,418.7 814.3,412.1 814.6,523.8 814.9,490.5 815.1,480.0 815.4,465.8 815.7,521.6 815.9,399.7 816.2,374.1 816.5,344.8 816.7,439.3 817.0,461.1 817.3,392.3 817.5,409.0 817.8,426.4 818.1,498.0 818.3,483.0 818.6,429.0 818.9,391.8 819.1,374.8 819.4,382.6 819.7,441.0 819.9,468.3 820.2,377.0 820.5,225.8 820.7,266.4 821.0,407.6 821.3,530.1 821.5,525.4 821.8,504.3 822.1,381.9 822.3,354.2 822.6,387.5 822.9,517.8 823.1,509.9 823.4,488.1 823.7,472.8 823.9,508.0 824.2,508.1 824.5,393.1 824.7,397.0 825.0,392.4 825.3,522.1 825.5,510.7 825.8,500.1 826.0,465.7 826.3,462.5 826.6,485.0 826.8,521.8 827.1,476.9 827.4,481.0 827.6,494.7 827.9,546.2 828.2,513.6 828.4,494.7 828.7,469.4 829.0,506.2 829.2,511.4 829.5,468.3 829.8,320.9 830.0,188.8 830.3,180.1 830.6,255.1 830.8,349.0 831.1,415.3 831.4,474.1 831.6,380.2 831.9,409.0 832.2,373.0 832.4,514.1 832.7,481.7 833.0,511.7 833.2,488.1 833.5,437.4 833.8,417.2 834.0,433.9 834.3,450.6 834.6,460.9 834.8,461.0 835.1,494.8 835.4,482.7 835.6,439.5 835.9,460.1 836.2,492.7 836.4,556.8 836.7,520.6 837.0,471.7 837.2,382.5 837.5,328.6 837.8,385.8 838.0,444.6 838.3,536.6 838.6,535.1 838.8,539.9 839.1,530.3 839.4,460.8 839.6,474.3 839.9,338.2 840.2,396.9 840.4,289.6 840.7,408.9 841.0,424.4 841.2,496.6 841.5,468.4 841.8,415.0 842.0,438.6 842.3,491.7 842.6,498.7 842.8,505.0 843.1,482.4 843.4,379.0 843.6,392.8 843.9,401.9 844.2,533.0 844.4,525.7 844.7,395.0 845.0,381.1 845.2,388.9 845.5,528.7 845.8,411.6 846.0,281.5 846.3,258.4 846.6,380.2 846.8,478.7 847.1,490.9 847.4,457.0 847.6,429.3 847.9,420.4 848.2,332.4 848.4,280.5 848.7,303.6 849.0,303.6 849.2,381.0 849.5,359.3 849.8,494.8 850.0,414.6 850.3,441.4 850.6,305.9 850.8,368.6 851.1,305.3 851.4,420.9 851.6,439.7 851.9,481.1 852.2,365.6 852.4,376.4 852.7,363.8 852.9,509.5 853.2,506.2 853.5,510.1 853.7,364.4 854.0,380.5 854.3,334.6 854.5,437.8 854.8,427.2 855.1,480.9 855.3,472.0 855.6,426.6 855.9,301.3 856.1,207.0 856.4,194.6 856.7,293.4 856.9,293.4 857.2,338.2 857.5,239.4 857.7,239.4 858.0,200.8 858.3,200.8 858.5,299.2 858.8,259.6 859.1,259.6 859.3,161.3 859.6,235.5 859.9,235.5 860.1,300.7 860.4,281.4 860.7,281.4 860.9,293.0 861.2,316.1 861.5,316.1 861.7,239.2 862.0,207.1 862.3,207.1 862.5,207.1 862.8,238.9 863.1,316.7 863.3,316.7 863.6,196.9 863.9,227.0 864.1,227.0 864.4,227.0 864.7,119.2 864.9,119.2 865.2,119.2 865.5,119.2 865.7,119.2 866.0,119.2" fill="none" stroke="#0f6fbf" stroke-width="1.2" stroke-linejoin="round"/>
<path d="M67.3 649.2h0M67.5 638.4h0M67.8 644.3h0M68.1 642.5h0M68.3 648.5h0M68.6 640.4h0M68.9 641.4h0M69.1 639.9h0M69.4 645.1h0M69.7 644.6h0M69.9 649.7h0M70.2 653.1h0M70.5 654.0h0M70.7 651.9h0M71.0 649.1h0M71.3 645.4h0M71.5 648.1h0M71.8 648.7h0M72.1 649.2h0M72.3 649.2h0M72.6 651.3h0M72.9 658.9h0M73.1 654.3h0M73.4 650.9h0M73.7 650.5h0M73.9 648.5h0M74.2 651.2h0M74.5 649.1h0M74.7 651.7h0M75.0 648.0h0M75.3 649.4h0M75.5 650.1h0M75.8 653.0h0M76.1 645.6h0M76.3 648.2h0M76.6 642.7h0M76.9 651.5h0M77.1 647.8h0M77.4 647.3h0M77.7 641.8h0M77.9 638.9h0M78.2 641.2h0M78.5 646.3h0M78.7 652.5h0M79.0 651.7h0M79.3 647.9h0M79.5 646.6h0M79.8 645.4h0M80.1 644.6h0M80.3 647.8h0M80.6 655.7h0M80.8 656.8h0M81.1 654.1h0M81.4 653.7h0M81.6 654.5h0M81.9 654.5h0M82.2 652.3h0M82.4 651.8h0M82.7 651.5h0M83.0 652.6h0M83.2 652.3h0M83.5 651.9h0M83.8 650.7h0M84.0 650.9h0M84.3 652.7h0M84.6 652.0h0M84.8 654.3h0M85.1 648.5h0M85.4 638.3h0M85.6 633.7h0M85.9 633.8h0M86.2 629.4h0M86.4 627.5h0M86.7 629.8h0M87.0 636.9h0M87.2 636.3h0M87.5 624.3h0M87.8 626.3h0M88.0 473.7h0M88.3 470.0h0M88.6 440.0h0M88.8 554.8h0M89.1 543.0h0M89.4 529.5h0M89.6 518.3h0M89.9 455.5h0M90.2 448.8h0M90.4 438.2h0M90.7 453.7h0M91.0 445.5h0M91.2 454.6h0M91.5 469.7h0M91.8 463.5h0M92.0 450.0h0M92.3 454.4h0M92.6 460.0h0M92.8 458.4h0M93.1 467.3h0M93.4 481.8h0M93.6 504.5h0M93.9 502.6h0M94.2 460.9h0M94.4 438.0h0M94.7 439.4h0M95.0 451.5h0M95.2 435.2h0M95.5 415.5h0M95.8 422.7h0M96.0 415.3h0M96.3 425.2h0M96.6 399.9h0M96.8 440.1h0M97.1 438.3h0M97.4 494.5h0M97.6 469.1h0M97.9 472.6h0M98.2 423.4h0M98.4 456.3h0M98.7 421.0h0M99.0 470.6h0M99.2 455.5h0M99.5 483.0h0M99.8 446.1h0M100.0 396.0h0M100.3 408.2h0M100.6 426.8h0M100.8 473.9h0M101.1 462.7h0M101.4 463.7h0M101.6 457.7h0M101.9 460.8h0M102.2 428.4h0M102.4 446.2h0M102.7 418.3h0M103.0 439.5h0M103.2 419.5h0M103.5 414.9h0M103.8 431.2h0M104.0 423.5h0M104.3 454.4h0M104.6 466.8h0M104.8 469.7h0M105.1 484.7h0M105.4 436.5h0M105.6 444.2h0M105.9 437.0h0M106.2 477.9h0M106.4 477.7h0M106.7 451.1h0M107.0 420.5h0M107.2 434.6h0M107.5 447.3h0M107.7 465.6h0M108.0 464.5h0M108.3 433.8h0M108.5 439.2h0M108.8 446.9h0M109.1 474.1h0M109.3 463.6h0M109.6 461.6h0M109.9 483.7h0M110.1 506.9h0M110.4 455.7h0M110.7 434.0h0M110.9 431.0h0M111.2 464.4h0M111.5 466.8h0M111.7 410.5h0M112.0 406.1h0M112.3 390.2h0M112.5 417.8h0M112.8 444.5h0M113.1 464.7h0M113.3 475.7h0M113.6 454.5h0M113.9 478.4h0M114.1 478.0h0M114.4 490.6h0M114.7 454.9h0M114.9 455.7h0M115.2 458.3h0M115.5 483.7h0M115.7 491.1h0M116.0 442.5h0M116.3 433.2h0M116.5 445.4h0M116.8 454.0h0M117.1 438.0h0M117.3 421.3h0M117.6 451.1h0M117.9 457.2h0M118.1 454.8h0M118.4 461.4h0M118.7 449.9h0M118.9 456.5h0M119.2 458.3h0M119.5 467.5h0M119.7 467.3h0M120.0 415.3h0M120.3 381.5h0M120.5 345.4h0M120.8 386.7h0M121.1 389.8h0M121.3 442.4h0M121.6 454.9h0M121.9 514.1h0M122.1 507.8h0M122.4 521.6h0M122.7 505.9h0M122.9 505.5h0M123.2 452.6h0M123.5 421.8h0M123.7 420.1h0M124.0 466.1h0M124.3 512.5h0M124.5 488.6h0M124.8 463.2h0M125.1 430.0h0M125.3 452.9h0M125.6 486.5h0M125.9 508.9h0M126.1 514.9h0M126.4 509.3h0M126.7 486.4h0M126.9 467.4h0M127.2 415.0h0M127.5 442.8h0M127.7 456.9h0M128.0 447.3h0M128.3 412.1h0M128.5 420.1h0M128.8 484.6h0M129.1 514.8h0M129.3 482.7h0M129.6 472.3h0M129.9 477.6h0M130.1 503.4h0M130.4 492.7h0M130.7 445.0h0M130.9 426.1h0M131.2 443.3h0M131.5 498.5h0M131.7 536.1h0M132.0 529.1h0M132.3 503.3h0M132.5 468.8h0M132.8 476.9h0M133.1 447.9h0M133.3 473.1h0M133.6 444.9h0M133.8 480.7h0M134.1 341.3h0M134.4 341.7h0M134.6 362.8h0M134.9 499.0h0M135.2 393.6h0M135.4 338.2h0M135.7 310.3h0M136.0 381.6h0M136.2 298.7h0M136.5 269.0h0M136.8 317.0h0M137.0 317.0h0M137.3 375.1h0M137.6 392.5h0M137.8 532.4h0M138.1 531.9h0M138.4 536.1h0M138.6 524.3h0M138.9 521.5h0M139.2 509.6h0M139.4 497.9h0M139.7 500.7h0M140.0 504.2h0M140.2 509.1h0M140.5 451.6h0M140.8 425.8h0M141.0 446.7h0M141.3 478.2h0M141.6 371.5h0M141.8 355.2h0M142.1 389.8h0M142.4 522.2h0M142.6 478.6h0M142.9 416.1h0M143.2 386.1h0M143.4 428.8h0M143.7 471.6h0M144.0 479.7h0M144.2 466.2h0M144.5 431.6h0M144.8 463.5h0M145.0 470.1h0M145.3 501.6h0M145.6 485.6h0M145.8 490.6h0M146.1 495.7h0M146.4 497.0h0M146.6 508.8h0M146.9 507.5h0M147.2 488.4h0M147.4 447.4h0M147.7 439.9h0M148.0 408.0h0M148.2 398.8h0M148.5 417.8h0M148.8 454.6h0M149.0 483.9h0M149.3 452.3h0M149.6 431.6h0M149.8 439.6h0M150.1 431.2h0M150.4 474.3h0M150.6 457.4h0M150.9 491.8h0M151.2 487.4h0M151.4 481.6h0M151.7 476.5h0M152.0 450.6h0M152.2 469.4h0M152.5 455.8h0M152.8 473.1h0M153.0 490.8h0M153.3 469.9h0M153.6 438.7h0M153.8 418.6h0M154.1 414.3h0M154.4 450.9h0M154.6 465.5h0M154.9 509.4h0M155.2 515.8h0M155.4 506.1h0M155.7 468.9h0M156.0 402.1h0M156.2 392.4h0M156.5 408.9h0M156.8 470.5h0M157.0 466.3h0M157.3 476.7h0M157.6 425.2h0M157.8 410.0h0M158.1 413.0h0M158.4 458.6h0M158.6 443.1h0M158.9 451.7h0M159.2 403.9h0M159.4 420.9h0M159.7 415.4h0M160.0 461.3h0M160.2 471.3h0M160.5 479.2h0M160.7 490.7h0M161.0 490.8h0M161.3 471.2h0M161.5 451.5h0M161.8 406.0h0M162.1 408.0h0M162.3 421.9h0M162.6 464.6h0M162.9 457.7h0M163.1 458.3h0M163.4 491.4h0M163.7 494.8h0M163.9 494.2h0M164.2 492.7h0M164.5 510.0h0M164.7 475.1h0M165.0 467.2h0M165.3 454.1h0M165.5 500.2h0M165.8 513.5h0M166.1 537.1h0M166.3 518.6h0M166.6 511.8h0M166.9 513.7h0M167.1 459.1h0M167.4 449.0h0M167.7 438.3h0M167.9 474.5h0M168.2 468.1h0M168.5 451.1h0M168.7 418.2h0M169.0 428.6h0M169.3 420.4h0M169.5 484.9h0M169.8 495.8h0M170.1 523.5h0M170.3 507.1h0M170.6 492.4h0M170.9 486.3h0M171.1 483.6h0M171.4 461.4h0M171.7 415.3h0M171.9 410.9h0M172.2 414.9h0M172.5 447.5h0M172.7 449.0h0M173.0 471.5h0M173.3 492.0h0M173.5 479.2h0M173.8 485.4h0M174.1 425.3h0M174.3 416.7h0M174.6 384.1h0M174.9 425.7h0M175.1 453.2h0M175.4 452.6h0M175.7 428.6h0M175.9 445.3h0M176.2 485.0h0M176.5 506.9h0M176.7 483.4h0M177.0 465.7h0M177.3 470.2h0M177.5 487.1h0M177.8 484.1h0M178.1 503.5h0M178.3 488.3h0M178.6 474.2h0M178.9 446.9h0M179.1 469.6h0M179.4 494.7h0M179.7 500.3h0M179.9 489.4h0M180.2 479.2h0M180.5 478.0h0M180.7 489.7h0M181.0 486.3h0M181.3 433.4h0M181.5 426.4h0M181.8 445.0h0M182.1 499.5h0M182.3 370.7h0M182.6 341.7h0M182.9 335.6h0M183.1 439.5h0M183.4 464.8h0M183.7 458.0h0M183.9 464.6h0M184.2 433.3h0M184.5 422.6h0M184.7 447.1h0M185.0 485.3h0M185.3 521.8h0M185.5 471.7h0M185.8 453.0h0M186.1 450.0h0M186.3 491.4h0M186.6 514.5h0M186.8 459.9h0M187.1 446.0h0M187.4 442.6h0M187.6 484.5h0M187.9 433.1h0M188.2 358.5h0M188.4 381.7h0M188.7 448.1h0M189.0 493.5h0M189.2 436.1h0M189.5 415.1h0M189.8 416.3h0M190.0 470.4h0M190.3 471.5h0M190.6 447.5h0M190.8 444.6h0M191.1 469.4h0M191.4 516.4h0M191.6 497.7h0M191.9 488.2h0M192.2 435.0h0M192.4 412.0h0M192.7 350.1h0M193.0 385.4h0M193.2 433.5h0M193.5 497.3h0M193.8 503.6h0M194.0 448.2h0M194.3 444.0h0M194.6 420.3h0M194.8 400.7h0M195.1 389.2h0M195.4 420.1h0M195.6 495.8h0M195.9 492.2h0M196.2 440.9h0M196.4 444.6h0M196.7 469.3h0M197.0 517.1h0M197.2 483.3h0M197.5 353.2h0M197.8 300.3h0M198.0 317.6h0M198.3 433.1h0M198.6 486.1h0M198.8 458.7h0M199.1 453.6h0M199.4 431.6h0M199.6 462.9h0M199.9 471.2h0M200.2 481.5h0M200.4 414.3h0M200.7 404.1h0M201.0 416.9h0M201.2 446.2h0M201.5 472.5h0M201.8 464.8h0M202.0 491.2h0M202.3 469.4h0M202.6 481.3h0M202.8 479.4h0M203.1 366.4h0M203.4 360.8h0M203.6 392.1h0M203.9 541.5h0M204.2 523.2h0M204.4 502.2h0M204.7 403.1h0M205.0 417.1h0M205.2 387.1h0M205.5 336.9h0M205.8 351.3h0M206.0 384.9h0M206.3 537.9h0M206.6 552.1h0M206.8 532.7h0M207.1 528.3h0M207.4 499.0h0M207.6 500.7h0M207.9 495.7h0M208.2 519.2h0M208.4 550.5h0M208.7 548.5h0M209.0 539.9h0M209.2 534.2h0M209.5 529.6h0M209.8 537.8h0M210.0 486.0h0M210.3 349.1h0M210.6 346.8h0M210.8 404.7h0M211.1 526.7h0M211.4 517.7h0M211.6 463.8h0M211.9 474.4h0M212.2 462.5h0M212.4 513.3h0M212.7 534.0h0M213.0 557.3h0M213.2 562.5h0M213.5 409.2h0M213.7 388.3h0M214.0 367.8h0M214.3 501.5h0M214.5 522.6h0M214.8 520.8h0M215.1 526.0h0M215.3 383.4h0M215.6 380.4h0M215.9 383.0h0M216.1 526.6h0M216.4 519.4h0M216.7 521.2h0M216.9 516.3h0M217.2 485.5h0M217.5 483.5h0M217.7 490.1h0M218.0 505.4h0M218.3 396.7h0M218.5 403.8h0M218.8 304.2h0M219.1 418.1h0M219.3 407.8h0M219.6 516.5h0M219.9 528.1h0M220.1 543.9h0M220.4 564.8h0M220.7 554.9h0M220.9 547.5h0M221.2 574.8h0M221.5 499.8h0M221.7 463.8h0M222.0 449.9h0M222.3 525.4h0M222.5 539.0h0M222.8 516.5h0M223.1 501.7h0M223.3 514.8h0M223.6 548.7h0M223.9 545.1h0M224.1 491.3h0M224.4 337.1h0M224.7 364.0h0M224.9 418.5h0M225.2 536.0h0M225.5 493.8h0M225.7 498.4h0M226.0 527.7h0M226.3 518.5h0M226.5 507.9h0M226.8 483.9h0M227.1 518.3h0M227.3 470.5h0M227.6 485.7h0M227.9 456.4h0M228.1 519.6h0M228.4 537.2h0M228.7 556.6h0M228.9 405.4h0M229.2 381.8h0M229.5 368.9h0M229.7 501.2h0M230.0 507.9h0M230.3 519.7h0M230.5 426.5h0M230.8 287.8h0M231.1 302.5h0M231.3 418.7h0M231.6 528.6h0M231.9 513.6h0M232.1 504.7h0M232.4 532.6h0M232.7 403.4h0M232.9 369.9h0M233.2 383.1h0M233.5 478.4h0M233.7 365.5h0M234.0 371.5h0M234.3 425.7h0M234.5 564.4h0M234.8 540.7h0M235.1 512.1h0M235.3 522.5h0M235.6 543.7h0M235.9 564.9h0M236.1 569.3h0M236.4 562.8h0M236.7 420.6h0M236.9 347.5h0M237.2 326.8h0M237.5 468.0h0M237.7 513.4h0M238.0 525.6h0M238.3 384.4h0M238.5 387.2h0M238.8 401.4h0M239.1 549.6h0M239.3 538.9h0M239.6 519.5h0M239.9 491.9h0M240.1 504.4h0M240.4 370.2h0M240.6 391.4h0M240.9 374.5h0M241.2 511.1h0M241.4 487.7h0M241.7 507.3h0M242.0 519.6h0M242.2 553.6h0M242.5 420.4h0M242.8 271.5h0M243.0 217.1h0M243.3 217.1h0M243.6 358.4h0M243.8 399.7h0M244.1 527.5h0M244.4 539.5h0M244.6 539.2h0M244.9 566.9h0M245.2 487.5h0M245.4 480.5h0M245.7 439.8h0M246.0 460.6h0M246.2 455.0h0M246.5 497.4h0M246.8 488.4h0M247.0 507.0h0M247.3 504.8h0M247.6 543.6h0M247.8 398.6h0M248.1 334.2h0M248.4 329.8h0M248.6 484.6h0M248.9 527.4h0M249.2 549.7h0M249.4 513.5h0M249.7 517.5h0M250.0 482.4h0M250.2 363.8h0M250.5 301.5h0M250.8 303.0h0M251.0 303.0h0M251.3 228.0h0M251.6 262.8h0M251.8 409.6h0M252.1 538.3h0M252.4 517.0h0M252.6 507.1h0M252.9 509.2h0M253.2 531.7h0M253.4 535.5h0M253.7 404.6h0M254.0 280.3h0M254.2 279.6h0M254.5 425.6h0M254.8 543.4h0M255.0 556.5h0M255.3 535.5h0M255.6 472.2h0M255.8 453.9h0M256.1 453.5h0M256.4 510.3h0M256.6 494.5h0M256.9 502.3h0M257.2 521.3h0M257.4 496.2h0M257.7 515.0h0M258.0 487.6h0M258.2 512.2h0M258.5 510.6h0M258.8 528.1h0M259.0 548.9h0M259.3 399.1h0M259.6 378.5h0M259.8 332.6h0M260.1 470.9h0M260.4 469.1h0M260.6 492.1h0M260.9 468.6h0M261.2 470.9h0M261.4 494.2h0M261.7 505.8h0M262.0 385.3h0M262.2 384.2h0M262.5 309.2h0M262.8 458.4h0M263.0 474.6h0M263.3 543.0h0M263.6 495.8h0M263.8 485.3h0M264.1 517.6h0M264.4 543.6h0M264.6 529.0h0M264.9 520.8h0M265.2 545.9h0M265.4 519.7h0M265.7 518.0h0M266.0 470.6h0M266.2 519.9h0M266.5 508.5h0M266.8 548.9h0M267.0 396.2h0M267.3 391.8h0M267.5 384.8h0M267.8 505.8h0M268.1 509.0h0M268.3 513.7h0M268.6 542.0h0M268.9 558.0h0M269.1 531.5h0M269.4 528.9h0M269.7 536.5h0M269.9 537.4h0M270.2 503.1h0M270.5 497.1h0M270.7 500.0h0M271.0 528.8h0M271.3 527.5h0M271.5 500.5h0M271.8 504.4h0M272.1 479.3h0M272.3 518.9h0M272.6 520.4h0M272.9 399.5h0M273.1 407.5h0M273.4 397.8h0M273.7 515.2h0M273.9 373.5h0M274.2 376.2h0M274.5 390.9h0M274.7 535.2h0M275.0 545.5h0M275.3 539.9h0M275.5 517.4h0M275.8 474.3h0M276.1 483.1h0M276.3 444.9h0M276.6 482.8h0M276.9 489.5h0M277.1 534.6h0M277.4 542.6h0M277.7 525.2h0M277.9 531.6h0M278.2 511.1h0M278.5 537.1h0M278.7 540.7h0M279.0 534.6h0M279.3 506.6h0M279.5 500.4h0M279.8 495.4h0M280.1 454.8h0M280.3 459.3h0M280.6 488.1h0M280.9 488.2h0M281.1 351.2h0M281.4 311.7h0M281.7 357.8h0M281.9 504.9h0M282.2 516.3h0M282.5 480.6h0M282.7 492.7h0M283.0 502.7h0M283.3 507.8h0M283.5 452.7h0M283.8 445.0h0M284.1 500.4h0M284.3 557.8h0M284.6 564.5h0M284.9 535.9h0M285.1 520.1h0M285.4 532.3h0M285.7 407.9h0M285.9 389.9h0M286.2 383.1h0M286.5 510.8h0M286.7 529.1h0M287.0 546.0h0M287.3 569.4h0M287.5 522.9h0M287.8 487.0h0M288.1 459.0h0M288.3 476.2h0M288.6 504.8h0M288.9 525.4h0M289.1 568.5h0M289.4 554.3h0M289.7 529.7h0M289.9 519.3h0M290.2 491.0h0M290.5 528.8h0M290.7 525.5h0M291.0 564.4h0M291.3 529.6h0M291.5 501.6h0M291.8 515.0h0M292.1 465.5h0M292.3 408.4h0M292.6 406.2h0M292.9 463.8h0M293.1 550.8h0M293.4 526.1h0M293.6 545.5h0M293.9 397.2h0M294.2 424.4h0M294.4 417.1h0M294.7 551.3h0M295.0 540.6h0M295.2 552.5h0M295.5 531.2h0M295.8 537.6h0M296.0 510.1h0M296.3 547.3h0M296.6 535.4h0M296.8 551.1h0M297.1 552.7h0M297.4 560.2h0M297.6 579.6h0M297.9 579.1h0M298.2 582.2h0M298.4 569.0h0M298.7 576.0h0M299.0 583.3h0M299.2 601.7h0M299.5 577.0h0M299.8 577.4h0M300.0 572.2h0M300.3 606.9h0M300.6 607.3h0M300.8 583.9h0M301.1 539.3h0M301.4 549.1h0M301.6 537.3h0M301.9 572.7h0M302.2 567.9h0M302.4 595.4h0M302.7 591.4h0M303.0 536.3h0M303.2 538.8h0M303.5 540.2h0M303.8 585.9h0M304.0 576.8h0M304.3 554.9h0M304.6 554.7h0M304.8 554.6h0M305.1 561.5h0M305.4 554.4h0M305.6 561.8h0M305.9 584.2h0M306.2 599.7h0M306.4 609.7h0M306.7 576.8h0M307.0 585.9h0M307.2 563.0h0M307.5 571.9h0M307.8 552.6h0M308.0 574.9h0M308.3 592.0h0M308.6 592.8h0M308.8 587.0h0M309.1 602.8h0M309.4 617.8h0M309.6 622.6h0M309.9 618.1h0M310.2 606.7h0M310.4 604.0h0M310.7 566.0h0M311.0 574.9h0M311.2 578.0h0M311.5 546.7h0M311.8 530.3h0M312.0 538.2h0M312.3 589.9h0M312.6 611.4h0M312.8 595.9h0M313.1 561.9h0M313.4 555.7h0M313.6 547.6h0M313.9 583.2h0M314.2 555.6h0M314.4 574.4h0M314.7 581.0h0M315.0 595.7h0M315.2 593.3h0M315.5 600.0h0M315.8 604.8h0M316.0 589.4h0M316.3 575.0h0M316.6 586.7h0M316.8 594.4h0M317.1 600.2h0M317.4 570.5h0M317.6 580.6h0M317.9 585.6h0M318.2 579.1h0M318.4 562.3h0M318.7 567.3h0M319.0 599.0h0M319.2 613.4h0M319.5 609.5h0M319.8 580.1h0M320.0 582.1h0M320.3 589.8h0M320.5 594.6h0M320.8 584.8h0M321.1 564.9h0M321.3 582.3h0M321.6 578.7h0M321.9 576.9h0M322.1 576.5h0M322.4 596.5h0M322.7 604.9h0M322.9 565.6h0M323.2 548.5h0M323.5 548.6h0M323.7 569.5h0M324.0 582.5h0M324.3 593.2h0M324.5 625.4h0M324.8 609.2h0M325.1 610.1h0M325.3 610.2h0M325.6 608.1h0M325.9 609.1h0M326.1 613.0h0M326.4 632.5h0M326.7 620.0h0M326.9 618.7h0M327.2 599.3h0M327.5 607.9h0M327.7 582.8h0M328.0 594.4h0M328.3 556.2h0M328.5 569.8h0M328.8 575.4h0M329.1 604.8h0M329.3 605.6h0M329.6 602.8h0M329.9 559.1h0M330.1 536.4h0M330.4 514.6h0M330.7 542.4h0M330.9 569.7h0M331.2 590.1h0M331.5 616.0h0M331.7 590.6h0M332.0 553.5h0M332.3 545.9h0M332.5 562.3h0M332.8 596.4h0M333.1 586.8h0M333.3 572.6h0M333.6 505.9h0M333.9 503.2h0M334.1 513.7h0M334.4 577.7h0M334.7 564.0h0M334.9 559.8h0M335.2 564.8h0M335.5 561.8h0M335.7 568.1h0M336.0 546.9h0M336.3 570.3h0M336.5 540.0h0M336.8 523.7h0M337.1 522.4h0M337.3 553.4h0M337.6 586.2h0M337.9 579.7h0M338.1 570.0h0M338.4 582.4h0M338.7 598.9h0M338.9 584.2h0M339.2 566.1h0M339.5 572.7h0M339.7 594.9h0M340.0 605.2h0M340.3 593.7h0M340.5 603.8h0M340.8 600.2h0M341.1 606.0h0M341.3 601.5h0M341.6 605.4h0M341.9 581.2h0M342.1 579.1h0M342.4 566.8h0M342.7 586.4h0M342.9 570.9h0M343.2 570.7h0M343.5 568.6h0M343.7 562.6h0M344.0 567.0h0M344.3 512.9h0M344.5 525.9h0M344.8 520.9h0M345.1 566.1h0M345.3 547.1h0M345.6 546.0h0M345.9 553.0h0M346.1 586.2h0M346.4 557.5h0M346.6 530.7h0M346.9 491.8h0M347.2 523.8h0M347.4 556.9h0M347.7 525.5h0M348.0 534.6h0M348.2 529.1h0M348.5 567.2h0M348.8 563.9h0M349.0 570.8h0M349.3 590.6h0M349.6 600.4h0M349.8 581.1h0M350.1 593.1h0M350.4 555.8h0M350.6 577.5h0M350.9 580.3h0M351.2 609.0h0M351.4 608.6h0M351.7 598.8h0M352.0 586.6h0M352.2 577.6h0M352.5 569.6h0M352.8 575.0h0M353.0 572.7h0M353.3 589.2h0M353.6 595.1h0M353.8 579.6h0M354.1 555.8h0M354.4 543.6h0M354.6 567.2h0M354.9 560.3h0M355.2 576.4h0M355.4 566.8h0M355.7 556.4h0M356.0 564.1h0M356.2 563.6h0M356.5 581.8h0M356.8 569.1h0M357.0 550.1h0M357.3 547.7h0M357.6 523.2h0M357.8 514.3h0M358.1 538.4h0M358.4 572.3h0M358.6 595.0h0M358.9 545.6h0M359.2 533.5h0M359.4 520.9h0M359.7 565.1h0M360.0 536.8h0M360.2 541.0h0M360.5 538.5h0M360.8 474.6h0M361.0 487.5h0M361.3 448.0h0M361.6 386.5h0M361.8 396.9h0M362.1 447.3h0M362.4 579.5h0M362.6 519.2h0M362.9 507.6h0M363.2 532.9h0M363.4 559.6h0M363.7 532.3h0M364.0 515.6h0M364.2 554.2h0M364.5 589.5h0M364.8 612.1h0M365.0 589.1h0M365.3 573.9h0M365.6 544.7h0M365.8 554.2h0M366.1 559.9h0M366.4 580.9h0M366.6 564.3h0M366.9 571.3h0M367.2 570.4h0M367.4 597.5h0M367.7 573.5h0M368.0 579.9h0M368.2 569.1h0M368.5 581.3h0M368.8 572.7h0M369.0 584.5h0M369.3 576.0h0M369.6 559.3h0M369.8 519.5h0M370.1 531.9h0M370.4 544.5h0M370.6 522.7h0M370.9 526.6h0M371.2 535.7h0M371.4 565.9h0M371.7 523.4h0M372.0 495.7h0M372.2 508.6h0M372.5 508.7h0M372.8 532.5h0M373.0 524.0h0M373.3 573.4h0M373.5 553.6h0M373.8 562.7h0M374.1 524.1h0M374.3 557.1h0M374.6 550.9h0M374.9 574.2h0M375.1 557.3h0M375.4 559.2h0M375.7 562.0h0M375.9 546.9h0M376.2 562.3h0M376.5 551.1h0M376.7 465.9h0M377.0 463.8h0M377.3 431.8h0M377.5 528.8h0M377.8 372.4h0M378.1 402.0h0M378.3 393.2h0M378.6 533.2h0M378.9 556.3h0M379.1 550.3h0M379.4 525.0h0M379.7 517.8h0M379.9 497.6h0M380.2 528.0h0M380.5 513.6h0M380.7 560.5h0M381.0 551.8h0M381.3 568.7h0M381.5 568.7h0M381.8 574.0h0M382.1 539.1h0M382.3 532.3h0M382.6 545.1h0M382.9 548.7h0M383.1 525.2h0M383.4 514.9h0M383.7 530.3h0M383.9 557.3h0M384.2 570.1h0M384.5 588.5h0M384.7 582.5h0M385.0 558.1h0M385.3 549.1h0M385.5 545.3h0M385.8 547.5h0M386.1 398.7h0M386.3 384.5h0M386.6 390.8h0M386.9 547.7h0M387.1 566.3h0M387.4 585.8h0M387.7 567.0h0M387.9 564.3h0M388.2 553.3h0M388.5 574.8h0M388.7 569.6h0M389.0 560.2h0M389.3 538.6h0M389.5 559.3h0M389.8 558.4h0M390.1 573.5h0M390.3 545.7h0M390.6 542.6h0M390.9 530.8h0M391.1 530.6h0M391.4 394.6h0M391.7 351.2h0M391.9 368.3h0M392.2 517.0h0M392.5 579.2h0M392.7 572.3h0M393.0 423.6h0M393.3 393.0h0M393.5 392.3h0M393.8 553.4h0M394.1 572.5h0M394.3 577.3h0M394.6 556.0h0M394.9 463.4h0M395.1 315.0h0M395.4 323.8h0M395.7 267.8h0M395.9 429.4h0M396.2 440.6h0M396.5 590.7h0M396.7 564.4h0M397.0 554.3h0M397.3 557.0h0M397.5 567.9h0M397.8 570.5h0M398.1 585.6h0M398.3 599.3h0M398.6 581.3h0M398.9 566.1h0M399.1 572.2h0M399.4 590.7h0M399.7 594.7h0M399.9 541.3h0M400.2 553.6h0M400.4 543.4h0M400.7 566.8h0M401.0 547.8h0M401.2 568.3h0M401.5 586.2h0M401.8 604.6h0M402.0 598.2h0M402.3 590.5h0M402.6 596.3h0M402.8 576.6h0M403.1 556.9h0M403.4 405.2h0M403.6 423.4h0M403.9 420.2h0M404.2 550.9h0M404.4 562.1h0M404.7 603.4h0M405.0 603.6h0M405.2 585.5h0M405.5 566.9h0M405.8 563.7h0M406.0 573.4h0M406.3 585.5h0M406.6 586.9h0M406.8 541.8h0M407.1 519.8h0M407.4 501.0h0M407.6 525.7h0M407.9 518.0h0M408.2 546.3h0M408.4 404.9h0M408.7 428.1h0M409.0 416.6h0M409.2 574.2h0M409.5 588.4h0M409.8 609.6h0M410.0 618.5h0M410.3 523.2h0M410.6 476.4h0M410.8 444.6h0M411.1 514.7h0M411.4 536.4h0M411.6 564.5h0M411.9 526.2h0M412.2 418.1h0M412.4 403.1h0M412.7 455.5h0M413.0 455.4h0M413.2 452.2h0M413.5 430.0h0M413.8 538.7h0M414.0 557.4h0M414.3 592.9h0M414.6 570.5h0M414.8 538.5h0M415.1 534.5h0M415.4 569.4h0M415.6 545.6h0M415.9 536.6h0M416.2 536.3h0M416.4 578.2h0M416.7 568.4h0M417.0 565.8h0M417.2 552.7h0M417.5 562.0h0M417.8 567.7h0M418.0 598.8h0M418.3 592.0h0M418.6 543.4h0M418.8 519.1h0M419.1 502.9h0M419.4 540.5h0M419.6 545.0h0M419.9 583.1h0M420.2 594.6h0M420.4 602.5h0M420.7 573.6h0M421.0 534.5h0M421.2 546.7h0M421.5 574.9h0M421.8 611.7h0M422.0 595.4h0M422.3 535.9h0M422.6 536.0h0M422.8 544.6h0M423.1 594.9h0M423.4 560.6h0M423.6 557.2h0M423.9 552.8h0M424.2 576.2h0M424.4 592.9h0M424.7 522.0h0M425.0 528.6h0M425.2 498.6h0M425.5 583.0h0M425.8 565.8h0M426.0 563.3h0M426.3 492.6h0M426.6 510.9h0M426.8 499.0h0M427.1 538.7h0M427.3 512.5h0M427.6 552.1h0M427.9 551.5h0M428.1 576.3h0M428.4 530.6h0M428.7 544.5h0M428.9 558.9h0M429.2 586.3h0M429.5 585.7h0M429.7 564.4h0M430.0 555.1h0M430.3 556.5h0M430.5 551.5h0M430.8 574.7h0M431.1 574.0h0M431.3 584.7h0M431.6 553.4h0M431.9 551.8h0M432.1 535.6h0M432.4 550.1h0M432.7 543.9h0M432.9 526.0h0M433.2 530.3h0M433.5 539.2h0M433.7 570.9h0M434.0 553.8h0M434.3 555.6h0M434.5 554.4h0M434.8 577.3h0M435.1 567.1h0M435.3 588.3h0M435.6 588.3h0M435.9 600.7h0M436.1 584.3h0M436.4 581.3h0M436.7 558.3h0M436.9 543.9h0M437.2 548.6h0M437.5 560.7h0M437.7 545.4h0M438.0 541.1h0M438.3 547.6h0M438.5 564.7h0M438.8 570.7h0M439.1 567.1h0M439.3 552.1h0M439.6 503.8h0M439.9 512.1h0M440.1 510.7h0M440.4 398.2h0M440.7 339.1h0M440.9 344.6h0M441.2 482.3h0M441.5 524.0h0M441.7 526.6h0M442.0 484.1h0M442.3 460.8h0M442.5 429.9h0M442.8 436.3h0M443.1 422.3h0M443.3 385.2h0M443.6 378.0h0M443.9 276.6h0M444.1 326.9h0M444.4 376.4h0M444.7 522.7h0M444.9 564.5h0M445.2 542.5h0M445.5 525.4h0M445.7 496.4h0M446.0 468.1h0M446.3 454.4h0M446.5 500.8h0M446.8 510.2h0M447.1 394.8h0M447.3 391.4h0M447.6 453.2h0M447.9 586.9h0M448.1 417.5h0M448.4 401.9h0M448.7 420.9h0M448.9 520.9h0M449.2 493.6h0M449.5 464.0h0M449.7 445.2h0M450.0 496.9h0M450.3 483.8h0M450.5 520.7h0M450.8 482.3h0M451.1 545.6h0M451.3 538.1h0M451.6 448.0h0M451.9 416.8h0M452.1 460.1h0M452.4 499.8h0M452.7 461.0h0M452.9 427.1h0M453.2 497.7h0M453.4 490.1h0M453.7 520.0h0M454.0 467.1h0M454.2 502.6h0M454.5 352.7h0M454.8 384.2h0M455.0 253.0h0M455.3 387.0h0M455.6 364.8h0M455.8 519.8h0M456.1 534.7h0M456.4 530.7h0M456.6 494.8h0M456.9 413.6h0M457.2 452.8h0M457.4 486.3h0M457.7 418.5h0M458.0 395.2h0M458.2 362.4h0M458.5 482.9h0M458.8 467.1h0M459.0 500.3h0M459.3 500.6h0M459.6 529.3h0M459.8 514.3h0M460.1 468.7h0M460.4 332.4h0M460.6 286.4h0M460.9 245.4h0M461.2 390.4h0M461.4 424.4h0M461.7 518.1h0M462.0 496.3h0M462.2 463.1h0M462.5 438.6h0M462.8 439.0h0M463.0 471.8h0M463.3 519.1h0M463.6 514.2h0M463.8 536.8h0M464.1 386.2h0M464.4 393.1h0M464.6 386.5h0M464.9 538.0h0M465.2 529.4h0M465.4 534.4h0M465.7 498.4h0M466.0 514.1h0M466.2 367.5h0M466.5 251.9h0M466.8 231.7h0M467.0 357.2h0M467.3 491.5h0M467.6 517.7h0M467.8 463.4h0M468.1 455.7h0M468.4 317.0h0M468.6 382.0h0M468.9 405.7h0M469.2 546.1h0M469.4 526.2h0M469.7 375.9h0M470.0 358.5h0M470.2 242.2h0M470.5 388.4h0M470.8 394.3h0M471.0 499.2h0M471.3 516.7h0M471.6 548.4h0M471.8 587.6h0M472.1 580.8h0M472.4 566.2h0M472.6 479.7h0M472.9 395.1h0M473.2 396.4h0M473.4 492.6h0M473.7 553.9h0M474.0 499.3h0M474.2 488.9h0M474.5 502.7h0M474.8 532.6h0M475.0 527.9h0M475.3 380.4h0M475.6 392.9h0M475.8 380.0h0M476.1 519.1h0M476.4 504.6h0M476.6 445.2h0M476.9 406.7h0M477.2 286.2h0M477.4 219.8h0M477.7 259.9h0M478.0 401.6h0M478.2 553.6h0M478.5 529.5h0M478.8 387.8h0M479.0 365.0h0M479.3 364.8h0M479.6 526.0h0M479.8 541.7h0M480.1 425.3h0M480.3 416.4h0M480.6 413.9h0M480.9 514.8h0M481.1 362.5h0M481.4 311.2h0M481.7 284.3h0M481.9 369.5h0M482.2 427.0h0M482.5 474.6h0M482.7 442.0h0M483.0 293.3h0M483.3 306.1h0M483.5 253.5h0M483.8 364.1h0M484.1 379.7h0M484.3 532.0h0M484.6 565.1h0M484.9 542.9h0M485.1 448.9h0M485.4 439.4h0M485.7 416.5h0M485.9 503.7h0M486.2 507.3h0M486.5 539.3h0M486.7 535.9h0M487.0 398.0h0M487.3 327.1h0M487.5 285.1h0M487.8 285.1h0M488.1 332.6h0M488.3 376.5h0M488.6 490.8h0M488.9 532.6h0M489.1 521.4h0M489.4 529.7h0M489.7 531.5h0M489.9 541.7h0M490.2 504.5h0M490.5 492.3h0M490.7 485.5h0M491.0 400.1h0M491.3 411.5h0M491.5 388.9h0M491.8 538.1h0M492.1 504.1h0M492.3 531.8h0M492.6 534.4h0M492.9 519.0h0M493.1 509.3h0M493.4 475.4h0M493.7 485.4h0M493.9 353.9h0M494.2 375.4h0M494.5 373.9h0M494.7 476.8h0M495.0 474.9h0M495.3 502.2h0M495.5 535.1h0M495.8 495.1h0M496.1 478.7h0M496.3 412.9h0M496.6 447.4h0M496.9 444.6h0M497.1 457.6h0M497.4 401.4h0M497.7 384.2h0M497.9 443.2h0M498.2 506.4h0M498.5 524.8h0M498.7 523.7h0M499.0 475.4h0M499.3 465.2h0M499.5 462.9h0M499.8 514.4h0M500.1 523.7h0M500.3 385.1h0M500.6 338.5h0M500.9 347.2h0M501.1 498.2h0M501.4 513.2h0M501.7 519.9h0M501.9 495.2h0M502.2 504.3h0M502.5 504.9h0M502.7 435.5h0M503.0 403.9h0M503.3 360.7h0M503.5 428.2h0M503.8 443.8h0M504.1 488.0h0M504.3 489.7h0M504.6 478.5h0M504.9 477.6h0M505.1 469.5h0M505.4 478.9h0M505.7 458.5h0M505.9 371.0h0M506.2 398.1h0M506.4 410.3h0M506.7 522.7h0M507.0 509.8h0M507.2 496.8h0M507.5 489.1h0M507.8 485.1h0M508.0 443.1h0M508.3 438.4h0M508.6 411.3h0M508.8 442.8h0M509.1 436.6h0M509.4 517.4h0M509.6 564.1h0M509.9 563.5h0M510.2 532.7h0M510.4 492.3h0M510.7 499.9h0M511.0 364.8h0M511.2 385.3h0M511.5 386.4h0M511.8 499.3h0M512.0 512.1h0M512.3 472.0h0M512.6 467.9h0M512.8 469.2h0M513.1 493.7h0M513.4 515.8h0M513.6 485.7h0M513.9 497.3h0M514.2 493.9h0M514.4 514.4h0M514.7 520.1h0M515.0 491.9h0M515.2 500.8h0M515.5 435.2h0M515.8 475.7h0M516.0 327.5h0M516.3 406.0h0M516.6 406.7h0M516.8 537.9h0M517.1 544.5h0M517.4 551.0h0M517.6 503.6h0M517.9 457.2h0M518.2 409.8h0M518.4 438.2h0M518.7 479.3h0M519.0 462.8h0M519.2 406.5h0M519.5 402.5h0M519.8 319.5h0M520.0 391.6h0M520.3 373.8h0M520.6 475.7h0M520.8 472.3h0M521.1 467.6h0M521.4 489.7h0M521.6 509.3h0M521.9 461.7h0M522.2 482.5h0M522.4 467.9h0M522.7 521.3h0M523.0 491.0h0M523.2 469.9h0M523.5 368.0h0M523.8 372.6h0M524.0 403.5h0M524.3 490.0h0M524.6 519.5h0M524.8 497.0h0M525.1 385.0h0M525.4 379.3h0M525.6 386.8h0M525.9 494.5h0M526.2 454.3h0M526.4 443.6h0M526.7 469.8h0M527.0 483.9h0M527.2 494.4h0M527.5 513.2h0M527.8 492.3h0M528.0 488.1h0M528.3 455.8h0M528.6 463.0h0M528.8 475.1h0M529.1 478.9h0M529.4 517.5h0M529.6 522.9h0M529.9 542.1h0M530.2 540.9h0M530.4 403.3h0M530.7 384.2h0M531.0 353.2h0M531.2 484.7h0M531.5 479.1h0M531.8 422.2h0M532.0 422.8h0M532.3 429.7h0M532.6 504.7h0M532.8 372.6h0M533.1 361.3h0M533.3 374.6h0M533.6 485.7h0M533.9 504.9h0M534.1 484.3h0M534.4 474.8h0M534.7 455.2h0M534.9 469.5h0M535.2 508.5h0M535.5 523.4h0M535.7 388.7h0M536.0 377.3h0M536.3 377.4h0M536.5 411.3h0M536.8 399.7h0M537.1 364.3h0M537.3 477.0h0M537.6 445.9h0M537.9 490.5h0M538.1 490.5h0M538.4 501.5h0M538.7 469.7h0M538.9 438.7h0M539.2 445.1h0M539.5 459.5h0M539.7 460.4h0M540.0 426.4h0M540.3 406.3h0M540.5 377.0h0M540.8 364.7h0M541.1 403.3h0M541.3 364.9h0M541.6 307.5h0M541.9 267.7h0M542.1 341.9h0M542.4 400.3h0M542.7 333.0h0M542.9 343.5h0M543.2 390.6h0M543.5 448.1h0M543.7 450.8h0M544.0 459.4h0M544.3 500.2h0M544.5 488.9h0M544.8 495.5h0M545.1 483.3h0M545.3 494.9h0M545.6 436.9h0M545.9 459.0h0M546.1 437.3h0M546.4 504.6h0M546.7 446.7h0M546.9 478.8h0M547.2 475.5h0M547.5 458.1h0M547.7 405.4h0M548.0 398.5h0M548.3 465.4h0M548.5 477.4h0M548.8 470.7h0M549.1 474.3h0M549.3 368.0h0M549.6 382.4h0M549.9 355.2h0M550.1 491.5h0M550.4 460.5h0M550.7 447.2h0M550.9 451.5h0M551.2 474.4h0M551.5 482.8h0M551.7 481.7h0M552.0 478.9h0M552.3 487.5h0M552.5 486.4h0M552.8 369.7h0M553.1 342.3h0M553.3 315.2h0M553.6 328.3h0M553.9 243.6h0M554.1 132.3h0M554.4 250.6h0M554.7 299.8h0M554.9 413.7h0M555.2 382.9h0M555.5 333.8h0M555.7 298.4h0M556.0 313.9h0M556.3 452.2h0M556.5 416.0h0M556.8 428.8h0M557.1 409.6h0M557.3 495.1h0M557.6 455.8h0M557.9 471.1h0M558.1 474.5h0M558.4 520.0h0M558.7 514.8h0M558.9 481.2h0M559.2 450.4h0M559.5 453.1h0M559.7 499.1h0M560.0 483.8h0M560.2 484.2h0M560.5 484.7h0M560.8 533.5h0M561.0 530.4h0M561.3 474.1h0M561.6 440.3h0M561.8 433.4h0M562.1 490.8h0M562.4 535.8h0M562.6 413.6h0M562.9 351.3h0M563.2 320.1h0M563.4 363.6h0M563.7 393.1h0M564.0 412.1h0M564.2 489.0h0M564.5 515.6h0M564.8 491.5h0M565.0 522.6h0M565.3 475.2h0M565.6 481.4h0M565.8 434.5h0M566.1 486.2h0M566.4 417.0h0M566.6 462.2h0M566.9 437.8h0M567.2 531.0h0M567.4 381.4h0M567.7 387.6h0M568.0 244.3h0M568.2 244.3h0M568.5 232.3h0M568.8 372.4h0M569.0 473.1h0M569.3 487.1h0M569.6 489.4h0M569.8 524.4h0M570.1 535.8h0M570.4 518.2h0M570.6 491.6h0M570.9 477.2h0M571.2 469.7h0M571.4 485.6h0M571.7 473.0h0M572.0 451.1h0M572.2 473.9h0M572.5 484.0h0M572.8 516.8h0M573.0 453.5h0M573.3 430.7h0M573.6 447.6h0M573.8 505.4h0M574.1 556.9h0M574.4 527.8h0M574.6 505.4h0M574.9 486.5h0M575.2 517.9h0M575.4 514.1h0M575.7 523.4h0M576.0 485.9h0M576.2 510.2h0M576.5 431.4h0M576.8 407.4h0M577.0 362.6h0M577.3 450.8h0M577.6 463.7h0M577.8 462.9h0M578.1 450.2h0M578.4 476.5h0M578.6 515.3h0M578.9 481.2h0M579.2 409.6h0M579.4 418.7h0M579.7 459.3h0M580.0 517.4h0M580.2 515.9h0M580.5 476.9h0M580.8 504.2h0M581.0 465.6h0M581.3 461.3h0M581.6 441.1h0M581.8 437.1h0M582.1 476.7h0M582.4 357.7h0M582.6 378.4h0M582.9 379.0h0M583.2 502.6h0M583.4 494.0h0M583.7 476.1h0M584.0 466.0h0M584.2 471.9h0M584.5 500.8h0M584.8 514.4h0M585.0 529.1h0M585.3 377.2h0M585.6 338.2h0M585.8 339.9h0M586.1 438.9h0M586.4 394.6h0M586.6 369.0h0M586.9 412.5h0M587.1 474.6h0M587.4 471.8h0M587.7 473.7h0M587.9 479.9h0M588.2 375.7h0M588.5 355.4h0M588.7 335.0h0M589.0 473.5h0M589.3 489.4h0M589.5 541.2h0M589.8 503.1h0M590.1 513.6h0M590.3 475.9h0M590.6 503.4h0M590.9 454.7h0M591.1 458.1h0M591.4 453.4h0M591.7 457.8h0M591.9 348.7h0M592.2 318.0h0M592.5 306.4h0M592.7 409.0h0M593.0 449.4h0M593.3 480.8h0M593.5 524.1h0M593.8 518.5h0M594.1 518.6h0M594.3 458.0h0M594.6 398.2h0M594.9 412.4h0M595.1 476.3h0M595.4 542.6h0M595.7 518.3h0M595.9 436.8h0M596.2 443.9h0M596.5 469.2h0M596.7 541.7h0M597.0 487.2h0M597.3 477.8h0M597.5 464.0h0M597.8 516.4h0M598.1 491.6h0M598.3 492.3h0M598.6 473.5h0M598.9 498.8h0M599.1 502.3h0M599.4 382.2h0M599.7 379.9h0M599.9 359.0h0M600.2 487.1h0M600.5 494.7h0M600.7 497.6h0M601.0 504.8h0M601.3 485.7h0M601.5 466.4h0M601.8 456.4h0M602.1 470.0h0M602.3 468.4h0M602.6 465.9h0M602.9 466.6h0M603.1 495.2h0M603.4 475.7h0M603.7 448.9h0M603.9 328.6h0M604.2 333.8h0M604.5 349.3h0M604.7 488.7h0M605.0 500.6h0M605.3 533.5h0M605.5 504.4h0M605.8 521.5h0M606.1 506.9h0M606.3 475.1h0M606.6 453.8h0M606.9 378.6h0M607.1 432.8h0M607.4 435.5h0M607.7 523.5h0M607.9 520.8h0M608.2 421.8h0M608.5 333.0h0M608.7 353.8h0M609.0 334.0h0M609.3 402.7h0M609.5 350.9h0M609.8 440.3h0M610.1 420.2h0M610.3 439.1h0M610.6 457.4h0M610.9 473.3h0M611.1 408.5h0M611.4 451.1h0M611.7 427.6h0M611.9 492.9h0M612.2 423.9h0M612.5 441.3h0M612.7 323.0h0M613.0 359.8h0M613.2 364.5h0M613.5 474.8h0M613.8 466.3h0M614.0 448.8h0M614.3 476.4h0M614.6 440.7h0M614.8 399.5h0M615.1 380.9h0M615.4 442.3h0M615.6 519.3h0M615.9 490.5h0M616.2 453.5h0M616.4 424.2h0M616.7 470.5h0M617.0 482.6h0M617.2 385.1h0M617.5 371.2h0M617.8 368.3h0M618.0 483.5h0M618.3 487.4h0M618.6 380.0h0M618.8 367.6h0M619.1 383.1h0M619.4 408.1h0M619.6 286.6h0M619.9 144.2h0M620.2 245.6h0M620.4 324.0h0M620.7 439.3h0M621.0 442.6h0M621.2 516.2h0M621.5 474.1h0M621.8 496.3h0M622.0 477.9h0M622.3 542.1h0M622.6 517.6h0M622.8 505.1h0M623.1 500.0h0M623.4 503.1h0M623.6 524.9h0M623.9 532.1h0M624.2 536.1h0M624.4 523.7h0M624.7 507.0h0M625.0 492.0h0M625.2 509.7h0M625.5 490.4h0M625.8 371.1h0M626.0 351.6h0M626.3 375.8h0M626.6 518.6h0M626.8 505.1h0M627.1 532.3h0M627.4 544.3h0M627.6 540.0h0M627.9 522.9h0M628.2 498.4h0M628.4 428.3h0M628.7 401.4h0M629.0 412.9h0M629.2 497.6h0M629.5 386.7h0M629.8 327.1h0M630.0 300.3h0M630.3 424.3h0M630.6 342.0h0M630.8 376.5h0M631.1 376.8h0M631.4 483.3h0M631.6 437.2h0M631.9 455.4h0M632.2 480.0h0M632.4 505.8h0M632.7 476.7h0M633.0 345.6h0M633.2 359.0h0M633.5 384.7h0M633.8 526.3h0M634.0 513.4h0M634.3 374.2h0M634.6 360.0h0M634.8 382.1h0M635.1 513.3h0M635.4 523.9h0M635.6 517.7h0M635.9 514.5h0M636.2 489.7h0M636.4 487.0h0M636.7 505.8h0M637.0 522.1h0M637.2 518.7h0M637.5 503.9h0M637.8 374.6h0M638.0 374.0h0M638.3 378.7h0M638.6 485.3h0M638.8 497.8h0M639.1 487.9h0M639.4 509.4h0M639.6 513.6h0M639.9 534.0h0M640.1 517.6h0M640.4 482.2h0M640.7 445.6h0M640.9 454.1h0M641.2 479.9h0M641.5 448.1h0M641.7 327.7h0M642.0 297.4h0M642.3 343.7h0M642.5 450.9h0M642.8 455.3h0M643.1 466.9h0M643.3 502.7h0M643.6 509.6h0M643.9 473.7h0M644.1 441.3h0M644.4 461.2h0M644.7 360.3h0M644.9 385.4h0M645.2 353.9h0M645.5 458.9h0M645.7 456.7h0M646.0 463.2h0M646.3 486.7h0M646.5 492.5h0M646.8 516.8h0M647.1 526.0h0M647.3 490.6h0M647.6 425.4h0M647.9 408.5h0M648.1 400.9h0M648.4 463.3h0M648.7 342.5h0M648.9 349.1h0M649.2 337.9h0M649.5 435.2h0M649.7 460.4h0M650.0 461.7h0M650.3 511.3h0M650.5 427.8h0M650.8 436.2h0M651.1 289.3h0M651.3 244.6h0M651.6 119.2h0M651.9 119.2h0M652.1 119.2h0M652.4 200.4h0M652.7 331.3h0M652.9 439.4h0M653.2 437.6h0M653.5 441.6h0M653.7 371.0h0M654.0 404.6h0M654.3 410.8h0M654.5 499.5h0M654.8 552.5h0M655.1 513.6h0M655.3 541.6h0M655.6 498.5h0M655.9 505.4h0M656.1 351.2h0M656.4 373.0h0M656.7 410.6h0M656.9 536.0h0M657.2 543.6h0M657.5 486.8h0M657.7 444.7h0M658.0 422.5h0M658.3 382.3h0M658.5 421.7h0M658.8 358.3h0M659.1 410.8h0M659.3 428.0h0M659.6 478.0h0M659.9 511.1h0M660.1 476.8h0M660.4 419.6h0M660.7 392.6h0M660.9 429.5h0M661.2 413.0h0M661.5 437.0h0M661.7 437.0h0M662.0 507.2h0M662.3 465.1h0M662.5 433.4h0M662.8 393.9h0M663.1 442.5h0M663.3 459.4h0M663.6 530.8h0M663.9 514.3h0M664.1 475.0h0M664.4 454.7h0M664.7 464.3h0M664.9 375.8h0M665.2 341.9h0M665.5 330.4h0M665.7 456.9h0M666.0 456.2h0M666.2 449.7h0M666.5 411.1h0M666.8 457.1h0M667.0 468.9h0M667.3 516.9h0M667.6 528.5h0M667.8 528.0h0M668.1 504.7h0M668.4 460.5h0M668.6 451.5h0M668.9 472.5h0M669.2 477.7h0M669.4 499.4h0M669.7 478.6h0M670.0 514.4h0M670.2 526.1h0M670.5 535.6h0M670.8 518.7h0M671.0 506.9h0M671.3 533.1h0M671.6 525.9h0M671.8 528.8h0M672.1 454.8h0M672.4 448.6h0M672.6 444.8h0M672.9 370.3h0M673.2 383.7h0M673.4 385.8h0M673.7 532.4h0M674.0 517.0h0M674.2 519.0h0M674.5 486.9h0M674.8 512.6h0M675.0 491.2h0M675.3 499.1h0M675.6 461.7h0M675.8 449.4h0M676.1 471.1h0M676.4 477.4h0M676.6 442.3h0M676.9 441.7h0M677.2 432.0h0M677.4 359.9h0M677.7 336.5h0M678.0 276.4h0M678.2 435.2h0M678.5 461.4h0M678.8 551.9h0M679.0 540.6h0M679.3 527.5h0M679.6 506.3h0M679.8 488.5h0M680.1 501.3h0M680.4 499.4h0M680.6 489.0h0M680.9 486.2h0M681.2 381.9h0M681.4 417.7h0M681.7 399.6h0M682.0 553.0h0M682.2 495.9h0M682.5 495.8h0M682.8 342.3h0M683.0 244.3h0M683.3 246.7h0M683.6 370.6h0M683.8 483.6h0M684.1 429.6h0M684.4 305.6h0M684.6 280.2h0M684.9 322.9h0M685.2 360.7h0M685.4 378.2h0M685.7 410.5h0M686.0 372.8h0M686.2 413.8h0M686.5 287.7h0M686.8 392.2h0M687.0 396.6h0M687.3 474.9h0M687.6 370.3h0M687.8 336.7h0M688.1 367.7h0M688.4 487.7h0M688.6 472.6h0M688.9 480.5h0M689.2 504.3h0M689.4 500.2h0M689.7 514.2h0M690.0 464.0h0M690.2 520.0h0M690.5 493.9h0M690.8 490.0h0M691.0 336.3h0M691.3 356.6h0M691.6 401.7h0M691.8 502.6h0M692.1 458.4h0M692.4 482.0h0M692.6 496.9h0M692.9 536.8h0M693.1 447.3h0M693.4 471.0h0M693.7 327.6h0M693.9 371.7h0M694.2 331.6h0M694.5 418.0h0M694.7 305.2h0M695.0 343.6h0M695.3 394.7h0M695.5 534.4h0M695.8 542.4h0M696.1 539.9h0M696.3 400.2h0M696.6 375.0h0M696.9 339.7h0M697.1 402.0h0M697.4 384.4h0M697.7 401.3h0M697.9 420.4h0M698.2 431.0h0M698.5 408.0h0M698.7 434.2h0M699.0 446.8h0M699.3 453.2h0M699.5 490.6h0M699.8 364.3h0M700.1 389.7h0M700.3 345.9h0M700.6 494.4h0M700.9 368.9h0M701.1 377.6h0M701.4 333.4h0M701.7 469.2h0M701.9 505.3h0M702.2 400.9h0M702.5 265.1h0M702.7 242.2h0M703.0 270.9h0M703.3 390.6h0M703.5 356.2h0M703.8 428.0h0M704.1 421.9h0M704.3 440.0h0M704.6 466.7h0M704.9 469.0h0M705.1 480.0h0M705.4 487.5h0M705.7 492.9h0M705.9 427.0h0M706.2 418.2h0M706.5 417.4h0M706.7 507.1h0M707.0 521.5h0M707.3 546.2h0M707.5 543.4h0M707.8 490.0h0M708.1 469.5h0M708.3 485.4h0M708.6 490.5h0M708.9 502.8h0M709.1 491.5h0M709.4 485.7h0M709.7 473.0h0M709.9 397.6h0M710.2 432.2h0M710.5 447.0h0M710.7 518.0h0M711.0 551.7h0M711.3 412.7h0M711.5 411.2h0M711.8 347.0h0M712.1 347.0h0M712.3 209.5h0M712.6 256.2h0M712.9 374.4h0M713.1 446.3h0M713.4 417.7h0M713.7 299.5h0M713.9 312.4h0M714.2 334.1h0M714.5 474.3h0M714.7 546.9h0M715.0 543.4h0M715.3 532.6h0M715.5 494.9h0M715.8 412.6h0M716.1 414.3h0M716.3 427.2h0M716.6 497.1h0M716.9 496.4h0M717.1 499.3h0M717.4 525.1h0M717.7 521.3h0M717.9 503.9h0M718.2 506.4h0M718.5 515.7h0M718.7 522.2h0M719.0 520.9h0M719.3 489.5h0M719.5 468.0h0M719.8 457.6h0M720.0 391.0h0M720.3 387.7h0M720.6 368.4h0M720.8 446.2h0M721.1 439.0h0M721.4 388.8h0M721.6 386.4h0M721.9 331.9h0M722.2 392.3h0M722.4 411.9h0M722.7 511.5h0M723.0 520.6h0M723.2 513.7h0M723.5 505.4h0M723.8 515.9h0M724.0 497.6h0M724.3 510.7h0M724.6 512.3h0M724.8 526.7h0M725.1 384.6h0M725.4 378.9h0M725.6 319.3h0M725.9 446.7h0M726.2 423.4h0M726.4 503.7h0M726.7 416.3h0M727.0 431.4h0M727.2 388.3h0M727.5 466.5h0M727.8 446.0h0M728.0 480.4h0M728.3 362.3h0M728.6 290.1h0M728.8 235.4h0M729.1 347.0h0M729.4 419.8h0M729.6 475.5h0M729.9 498.0h0M730.2 521.0h0M730.4 536.6h0M730.7 402.5h0M731.0 408.3h0M731.2 408.5h0M731.5 533.7h0M731.8 525.2h0M732.0 512.7h0M732.3 508.8h0M732.6 492.3h0M732.8 451.9h0M733.1 468.2h0M733.4 494.5h0M733.6 507.7h0M733.9 496.3h0M734.2 356.7h0M734.4 353.0h0M734.7 319.7h0M735.0 433.6h0M735.2 470.0h0M735.5 535.5h0M735.8 528.4h0M736.0 517.4h0M736.3 489.0h0M736.6 449.6h0M736.8 424.4h0M737.1 427.3h0M737.4 487.7h0M737.6 496.2h0M737.9 478.4h0M738.2 481.4h0M738.4 484.7h0M738.7 471.1h0M739.0 480.2h0M739.2 477.1h0M739.5 528.6h0M739.8 539.3h0M740.0 541.7h0M740.3 497.8h0M740.6 484.8h0M740.8 466.4h0M741.1 483.8h0M741.4 447.6h0M741.6 484.6h0M741.9 441.9h0M742.2 438.0h0M742.4 393.1h0M742.7 447.8h0M743.0 440.7h0M743.2 466.9h0M743.5 467.3h0M743.8 513.3h0M744.0 518.8h0M744.3 506.7h0M744.6 474.5h0M744.8 477.6h0M745.1 495.1h0M745.4 493.3h0M745.6 436.7h0M745.9 437.6h0M746.1 423.4h0M746.4 496.0h0M746.7 417.8h0M746.9 458.6h0M747.2 454.7h0M747.5 508.9h0M747.7 513.9h0M748.0 455.6h0M748.3 460.9h0M748.5 444.0h0M748.8 485.1h0M749.1 464.3h0M749.3 482.1h0M749.6 430.9h0M749.9 445.4h0M750.1 430.5h0M750.4 445.9h0M750.7 448.6h0M750.9 458.9h0M751.2 504.7h0M751.5 521.7h0M751.7 511.9h0M752.0 483.3h0M752.3 463.7h0M752.5 491.4h0M752.8 505.4h0M753.1 492.7h0M753.3 461.5h0M753.6 428.6h0M753.9 448.7h0M754.1 459.0h0M754.4 512.1h0M754.7 525.9h0M754.9 522.9h0M755.2 519.8h0M755.5 493.7h0M755.7 503.0h0M756.0 495.6h0M756.3 461.8h0M756.5 439.6h0M756.8 418.8h0M757.1 479.0h0M757.3 511.8h0M757.6 542.5h0M757.9 503.8h0M758.1 504.8h0M758.4 495.9h0M758.7 484.4h0M758.9 476.0h0M759.2 477.2h0M759.5 503.5h0M759.7 518.1h0M760.0 488.5h0M760.3 506.0h0M760.5 489.9h0M760.8 542.6h0M761.1 550.0h0M761.3 573.1h0M761.6 522.5h0M761.9 481.8h0M762.1 467.0h0M762.4 471.8h0M762.7 491.0h0M762.9 452.0h0M763.2 493.1h0M763.5 525.5h0M763.7 572.6h0M764.0 543.9h0M764.3 466.5h0M764.5 444.5h0M764.8 479.6h0M765.1 542.2h0M765.3 412.6h0M765.6 409.8h0M765.9 417.7h0M766.1 542.9h0M766.4 529.5h0M766.7 528.3h0M766.9 504.3h0M767.2 478.2h0M767.5 457.4h0M767.7 433.7h0M768.0 476.9h0M768.3 471.4h0M768.5 511.1h0M768.8 460.8h0M769.1 489.5h0M769.3 372.1h0M769.6 400.2h0M769.9 414.9h0M770.1 532.4h0M770.4 531.7h0M770.7 511.1h0M770.9 525.4h0M771.2 524.6h0M771.5 507.0h0M771.7 505.6h0M772.0 524.4h0M772.3 547.8h0M772.5 549.6h0M772.8 534.9h0M773.0 476.9h0M773.3 491.9h0M773.6 518.3h0M773.8 569.6h0M774.1 580.5h0M774.4 548.5h0M774.6 549.8h0M774.9 534.1h0M775.2 565.1h0M775.4 559.6h0M775.7 560.2h0M776.0 564.6h0M776.2 562.0h0M776.5 543.0h0M776.8 528.7h0M777.0 535.6h0M777.3 485.4h0M777.6 473.7h0M777.8 450.0h0M778.1 478.1h0M778.4 495.8h0M778.6 503.8h0M778.9 538.8h0M779.2 505.8h0M779.4 510.2h0M779.7 488.1h0M780.0 512.4h0M780.2 383.0h0M780.5 395.3h0M780.8 370.2h0M781.0 529.1h0M781.3 488.8h0M781.6 412.4h0M781.8 383.6h0M782.1 450.9h0M782.4 546.9h0M782.6 535.3h0M782.9 491.8h0M783.2 495.3h0M783.4 406.7h0M783.7 403.2h0M784.0 358.9h0M784.2 395.1h0M784.5 419.3h0M784.8 440.0h0M785.0 534.1h0M785.3 559.8h0M785.6 569.3h0M785.8 536.1h0M786.1 512.2h0M786.4 539.0h0M786.6 526.9h0M786.9 507.4h0M787.2 489.2h0M787.4 504.2h0M787.7 390.3h0M788.0 375.5h0M788.2 411.8h0M788.5 551.6h0M788.8 567.6h0M789.0 494.2h0M789.3 503.8h0M789.6 498.3h0M789.8 545.2h0M790.1 537.9h0M790.4 560.3h0M790.6 498.1h0M790.9 492.0h0M791.2 454.2h0M791.4 503.8h0M791.7 519.5h0M792.0 534.2h0M792.2 506.1h0M792.5 511.8h0M792.8 484.2h0M793.0 513.0h0M793.3 497.4h0M793.6 530.7h0M793.8 522.1h0M794.1 518.2h0M794.4 445.1h0M794.6 443.5h0M794.9 394.8h0M795.2 441.5h0M795.4 473.7h0M795.7 519.6h0M796.0 455.9h0M796.2 438.2h0M796.5 461.3h0M796.8 526.2h0M797.0 508.0h0M797.3 479.4h0M797.6 515.2h0M797.8 481.9h0M798.1 490.3h0M798.4 478.4h0M798.6 429.7h0M798.9 404.4h0M799.2 365.6h0M799.4 436.7h0M799.7 483.9h0M799.9 479.7h0M800.2 512.9h0M800.5 496.7h0M800.7 541.6h0M801.0 520.3h0M801.3 413.9h0M801.5 271.2h0M801.8 292.0h0M802.1 351.3h0M802.3 481.9h0M802.6 469.5h0M802.9 510.0h0M803.1 500.0h0M803.4 493.5h0M803.7 499.5h0M803.9 530.0h0M804.2 546.1h0M804.5 553.9h0M804.7 534.2h0M805.0 501.1h0M805.3 350.3h0M805.5 380.3h0M805.8 427.1h0M806.1 550.8h0M806.3 513.7h0M806.6 511.2h0M806.9 502.6h0M807.1 521.7h0M807.4 460.4h0M807.7 450.3h0M807.9 343.3h0M808.2 359.5h0M808.5 254.5h0M808.7 368.1h0M809.0 396.8h0M809.3 546.0h0M809.5 496.7h0M809.8 513.0h0M810.1 403.1h0M810.3 302.3h0M810.6 207.3h0M810.9 322.0h0M811.1 460.5h0M811.4 563.3h0M811.7 559.0h0M811.9 546.5h0M812.2 552.0h0M812.5 439.2h0M812.7 444.8h0M813.0 428.0h0M813.3 528.1h0M813.5 535.5h0M813.8 421.7h0M814.1 418.7h0M814.3 412.1h0M814.6 523.8h0M814.9 490.5h0M815.1 480.0h0M815.4 465.8h0M815.7 521.6h0M815.9 399.7h0M816.2 374.1h0M816.5 344.8h0M816.7 439.3h0M817.0 461.1h0M817.3 392.3h0M817.5 409.0h0M817.8 426.4h0M818.1 498.0h0M818.3 483.0h0M818.6 429.0h0M818.9 391.8h0M819.1 374.8h0M819.4 382.6h0M819.7 441.0h0M819.9 468.3h0M820.2 377.0h0M820.5 225.8h0M820.7 266.4h0M821.0 407.6h0M821.3 530.1h0M821.5 525.4h0M821.8 504.3h0M822.1 381.9h0M822.3 354.2h0M822.6 387.5h0M822.9 517.8h0M823.1 509.9h0M823.4 488.1h0M823.7 472.8h0M823.9 508.0h0M824.2 508.1h0M824.5 393.1h0M824.7 397.0h0M825.0 392.4h0M825.3 522.1h0M825.5 510.7h0M825.8 500.1h0M826.0 465.7h0M826.3 462.5h0M826.6 485.0h0M826.8 521.8h0M827.1 476.9h0M827.4 481.0h0M827.6 494.7h0M827.9 546.2h0M828.2 513.6h0M828.4 494.7h0M828.7 469.4h0M829.0 506.2h0M829.2 511.4h0M829.5 468.3h0M829.8 320.9h0M830.0 188.8h0M830.3 180.1h0M830.6 255.1h0M830.8 349.0h0M831.1 415.3h0M831.4 474.1h0M831.6 380.2h0M831.9 409.0h0M832.2 373.0h0M832.4 514.1h0M832.7 481.7h0M833.0 511.7h0M833.2 488.1h0M833.5 437.4h0M833.8 417.2h0M834.0 433.9h0M834.3 450.6h0M834.6 460.9h0M834.8 461.0h0M835.1 494.8h0M835.4 482.7h0M835.6 439.5h0M835.9 460.1h0M836.2 492.7h0M836.4 556.8h0M836.7 520.6h0M837.0 471.7h0M837.2 382.5h0M837.5 328.6h0M837.8 385.8h0M838.0 444.6h0M838.3 536.6h0M838.6 535.1h0M838.8 539.9h0M839.1 530.3h0M839.4 460.8h0M839.6 474.3h0M839.9 338.2h0M840.2 396.9h0M840.4 289.6h0M840.7 408.9h0M841.0 424.4h0M841.2 496.6h0M841.5 468.4h0M841.8 415.0h0M842.0 438.6h0M842.3 491.7h0M842.6 498.7h0M842.8 505.0h0M843.1 482.4h0M843.4 379.0h0M843.6 392.8h0M843.9 401.9h0M844.2 533.0h0M844.4 525.7h0M844.7 395.0h0M845.0 381.1h0M845.2 388.9h0M845.5 528.7h0M845.8 411.6h0M846.0 281.5h0M846.3 258.4h0M846.6 380.2h0M846.8 478.7h0M847.1 490.9h0M847.4 457.0h0M847.6 429.3h0M847.9 420.4h0M848.2 332.4h0M848.4 280.5h0M848.7 303.6h0M849.0 303.6h0M849.2 381.0h0M849.5 359.3h0M849.8 494.8h0M850.0 414.6h0M850.3 441.4h0M850.6 305.9h0M850.8 368.6h0M851.1 305.3h0M851.4 420.9h0M851.6 439.7h0M851.9 481.1h0M852.2 365.6h0M852.4 376.4h0M852.7 363.8h0M852.9 509.5h0M853.2 506.2h0M853.5 510.1h0M853.7 364.4h0M854.0 380.5h0M854.3 334.6h0M854.5 437.8h0M854.8 427.2h0M855.1 480.9h0M855.3 472.0h0M855.6 426.6h0M855.9 301.3h0M856.1 207.0h0M856.4 194.6h0M856.7 293.4h0M856.9 293.4h0M857.2 338.2h0M857.5 239.4h0M857.7 239.4h0M858.0 200.8h0M858.3 200.8h0M858.5 299.2h0M858.8 259.6h0M859.1 259.6h0M859.3 161.3h0M859.6 235.5h0M859.9 235.5h0M860.1 300.7h0M860.4 281.4h0M860.7 281.4h0M860.9 293.0h0M861.2 316.1h0M861.5 316.1h0M861.7 239.2h0M862.0 207.1h0M862.3 207.1h0M862.5 207.1h0M862.8 238.9h0M863.1 316.7h0M863.3 316.7h0M863.6 196.9h0M863.9 227.0h0M864.1 227.0h0M864.4 227.0h0M864.7 119.2h0M864.9 119.2h0M865.2 119.2h0M865.5 119.2h0M865.7 119.2h0M866.0 119.2h0" stroke="#0f6fbf" stroke-width="2.6" stroke-linecap="round"/>
<polyline points="67.3,663.2 67.5,663.1 67.8,662.7 68.1,663.3 68.3,663.2 68.6,663.3 68.9,663.1 69.1,662.9 69.4,663.3 69.7,662.7 69.9,662.8 70.2,662.9 70.5,662.9 70.7,662.4 71.0,663.3 71.3,663.1 71.5,662.5 71.8,663.3 72.1,662.9 72.3,663.0 72.6,663.2 72.9,663.2 73.1,663.0 73.4,662.8 73.7,662.8 73.9,662.7 74.2,662.8 74.5,662.8 74.7,662.7 75.0,663.0 75.3,663.1 75.5,662.6 75.8,663.3 76.1,662.6 76.3,662.4 76.6,663.1 76.9,663.3 77.1,662.9 77.4,662.6 77.7,663.0 77.9,662.4 78.2,662.5 78.5,662.9 78.7,662.4 79.0,663.0 79.3,662.7 79.5,662.5 79.8,662.2 80.1,662.4 80.3,662.1 80.6,663.0 80.8,661.6 81.1,662.8 81.4,662.4 81.6,662.0 81.9,662.3 82.2,662.1 82.4,662.8 82.7,662.8 83.0,662.6 83.2,662.6 83.5,662.4 83.8,662.5 84.0,662.7 84.3,662.3 84.6,662.8 84.8,662.6 85.1,662.2 85.4,662.6 85.6,662.3 85.9,662.1 86.2,661.8 86.4,661.9 86.7,662.0 87.0,662.1 87.2,662.6 87.5,662.5 87.8,662.5 88.0,662.4 88.3,662.2 88.6,662.5 88.8,662.3 89.1,661.8 89.4,662.3 89.6,662.8 89.9,662.1 90.2,662.0 90.4,662.0 90.7,661.1 91.0,661.4 91.2,661.0 91.5,661.7 91.8,661.2 92.0,661.3 92.3,661.3 92.6,661.5 92.8,661.0 93.1,661.7 93.4,660.6 93.6,659.9 93.9,660.2 94.2,661.4 94.4,660.5 94.7,660.7 95.0,660.6 95.2,660.4 95.5,659.8 95.8,659.9 96.0,660.4 96.3,659.8 96.6,659.8 96.8,659.1 97.1,660.2 97.4,659.7 97.6,659.9 97.9,659.5 98.2,660.1 98.4,659.6 98.7,659.2 99.0,659.3 99.2,659.3 99.5,659.0 99.8,659.1 100.0,659.1 100.3,658.8 100.6,658.6 100.8,658.4 101.1,659.1 101.4,658.5 101.6,657.8 101.9,658.7 102.2,658.0 102.4,658.2 102.7,657.5 103.0,657.4 103.2,657.6 103.5,657.8 103.8,658.2 104.0,657.7 104.3,657.7 104.6,657.3 104.8,656.6 105.1,656.4 105.4,656.9 105.6,656.9 105.9,656.9 106.2,656.7 106.4,656.8 106.7,655.9 107.0,656.8 107.2,656.4 107.5,656.6 107.7,655.9 108.0,655.5 108.3,655.8 108.5,655.9 108.8,655.9 109.1,655.6 109.3,655.9 109.6,655.0 109.9,654.9 110.1,655.1 110.4,655.1 110.7,655.5 110.9,654.5 111.2,655.7 111.5,655.4 111.7,654.1 112.0,655.1 112.3,655.1 112.5,655.4 112.8,654.2 113.1,654.0 113.3,654.4 113.6,655.0 113.9,654.3 114.1,654.5 114.4,653.7 114.7,653.4 114.9,653.7 115.2,653.7 115.5,653.1 115.7,652.9 116.0,654.1 116.3,653.3 116.5,653.9 116.8,653.7 117.1,652.7 117.3,653.6 117.6,653.1 117.9,652.4 118.1,652.7 118.4,653.5 118.7,652.8 118.9,652.7 119.2,652.9 119.5,651.6 119.7,652.3 120.0,652.3 120.3,651.7 120.5,652.0 120.8,652.6 121.1,651.9 121.3,651.7 121.6,651.7 121.9,651.2 122.1,651.2 122.4,651.3 122.7,651.5 122.9,651.3 123.2,650.4 123.5,651.9 123.7,650.6 124.0,650.8 124.3,651.2 124.5,650.8 124.8,650.4 125.1,651.3 125.3,650.5 125.6,650.2 125.9,650.8 126.1,650.2 126.4,649.6 126.7,650.0 126.9,650.4 127.2,650.7 127.5,650.7 127.7,649.3 128.0,649.8 128.3,649.6 128.5,649.6 128.8,649.8 129.1,648.5 129.3,648.9 129.6,648.5 129.9,649.7 130.1,648.7 130.4,648.6 130.7,649.4 130.9,649.2 131.2,649.1 131.5,648.1 131.7,648.4 132.0,648.7 132.3,648.0 132.5,648.5 132.8,648.1 133.1,648.1 133.3,648.4 133.6,647.4 133.8,647.8 134.1,648.8 134.4,647.7 134.6,646.8 134.9,648.6 135.2,646.9 135.4,647.2 135.7,647.8 136.0,647.1 136.2,647.6 136.5,647.7 136.8,646.7 137.0,646.6 137.3,647.6 137.6,646.9 137.8,646.5 138.1,647.2 138.4,645.8 138.6,646.6 138.9,646.0 139.2,645.7 139.4,646.5 139.7,645.7 140.0,645.8 140.2,645.5 140.5,645.9 140.8,645.1 141.0,645.1 141.3,644.6 141.6,644.7 141.8,645.9 142.1,645.4 142.4,644.8 142.6,644.4 142.9,645.2 143.2,644.8 143.4,644.5 143.7,644.7 144.0,644.0 144.2,645.0 144.5,644.1 144.8,644.7 145.0,643.9 145.3,644.6 145.6,644.2 145.8,643.4 146.1,644.4 146.4,643.7 146.6,643.3 146.9,643.6 147.2,643.6 147.4,643.4 147.7,643.8 148.0,642.8 148.2,642.7 148.5,642.1 148.8,642.8 149.0,642.3 149.3,643.1 149.6,642.4 149.8,643.1 150.1,642.4 150.4,642.6 150.6,641.8 150.9,643.4 151.2,642.3 151.4,642.3 151.7,641.6 152.0,642.3 152.2,642.1 152.5,641.0 152.8,642.0 153.0,641.8 153.3,640.8 153.6,642.6 153.8,641.1 154.1,641.0 154.4,641.0 154.6,642.1 154.9,641.8 155.2,641.3 155.4,641.3 155.7,640.3 156.0,640.9 156.2,639.7 156.5,640.5 156.8,640.0 157.0,640.7 157.3,640.5 157.6,639.8 157.8,639.5 158.1,640.3 158.4,639.1 158.6,639.9 158.9,638.7 159.2,640.3 159.4,639.7 159.7,639.0 160.0,639.3 160.2,639.6 160.5,638.7 160.7,638.5 161.0,639.2 161.3,638.4 161.5,639.0 161.8,639.2 162.1,637.8 162.3,638.9 162.6,638.7 162.9,637.9 163.1,638.9 163.4,638.7 163.7,638.2 163.9,637.9 164.2,637.3 164.5,637.9 164.7,638.1 165.0,638.4 165.3,637.8 165.5,637.8 165.8,636.7 166.1,638.3 166.3,638.3 166.6,638.3 166.9,637.2 167.1,636.7 167.4,635.9 167.7,637.8 167.9,636.6 168.2,637.0 168.5,635.5 168.7,636.2 169.0,635.4 169.3,636.3 169.5,635.5 169.8,635.9 170.1,636.4 170.3,635.3 170.6,636.0 170.9,637.2 171.1,635.7 171.4,636.3 171.7,635.1 171.9,634.4 172.2,635.1 172.5,634.9 172.7,635.9 173.0,635.6 173.3,635.3 173.5,633.6 173.8,635.1 174.1,634.5 174.3,635.8 174.6,634.9 174.9,634.4 175.1,634.4 175.4,634.5 175.7,633.9 175.9,633.8 176.2,634.8 176.5,634.8 176.7,633.5 177.0,633.2 177.3,634.6 177.5,633.1 177.8,634.4 178.1,633.5 178.3,632.5 178.6,634.3 178.9,633.1 179.1,633.2 179.4,633.7 179.7,632.4 179.9,633.4 180.2,633.2 180.5,633.4 180.7,632.2 181.0,632.1 181.3,631.4 181.5,632.4 181.8,632.8 182.1,631.1 182.3,632.4 182.6,631.5 182.9,630.7 183.1,631.2 183.4,632.9 183.7,632.3 183.9,632.0 184.2,630.8 184.5,631.9 184.7,630.7 185.0,631.0 185.3,630.9 185.5,631.0 185.8,631.4 186.1,629.8 186.3,630.6 186.6,629.6 186.8,631.2 187.1,631.6 187.4,629.4 187.6,631.1 187.9,630.1 188.2,630.4 188.4,630.1 188.7,630.2 189.0,630.6 189.2,630.6 189.5,629.5 189.8,630.1 190.0,628.3 190.3,629.4 190.6,628.3 190.8,629.6 191.1,628.6 191.4,629.5 191.6,629.7 191.9,629.1 192.2,629.0 192.4,626.8 192.7,629.6 193.0,629.0 193.2,628.0 193.5,628.5 193.8,628.2 194.0,627.6 194.3,628.2 194.6,628.6 194.8,629.0 195.1,627.9 195.4,627.4 195.6,627.5 195.9,626.7 196.2,627.8 196.4,627.2 196.7,628.0 197.0,628.7 197.2,626.7 197.5,627.4 197.8,626.5 198.0,627.4 198.3,628.0 198.6,627.4 198.8,626.9 199.1,627.1 199.4,626.7 199.6,626.0 199.9,626.3 200.2,625.9 200.4,626.2 200.7,626.6 201.0,626.7 201.2,627.5 201.5,625.3 201.8,624.8 202.0,626.3 202.3,626.2 202.6,626.0 202.8,625.0 203.1,625.1 203.4,625.3 203.6,625.0 203.9,626.2 204.2,624.9 204.4,624.9 204.7,624.3 205.0,625.1 205.2,624.9 205.5,624.2 205.8,622.2 206.0,624.6 206.3,622.5 206.6,624.7 206.8,623.8 207.1,624.5 207.4,622.6 207.6,623.5 207.9,623.3 208.2,622.6 208.4,622.3 208.7,623.7 209.0,622.9 209.2,623.4 209.5,622.0 209.8,624.5 210.0,621.0 210.3,622.8 210.6,624.2 210.8,622.2 211.1,623.0 211.4,622.2 211.6,622.1 211.9,621.2 212.2,623.4 212.4,621.6 212.7,620.9 213.0,622.7 213.2,621.0 213.5,620.8 213.7,621.8 214.0,622.9 214.3,621.1 214.5,621.5 214.8,619.8 215.1,621.1 215.3,620.3 215.6,620.5 215.9,620.5 216.1,621.6 216.4,621.1 216.7,620.3 216.9,620.3 217.2,620.3 217.5,619.5 217.7,620.0 218.0,619.3 218.3,619.7 218.5,619.4 218.8,620.1 219.1,620.8 219.3,618.7 219.6,618.6 219.9,618.7 220.1,619.8 220.4,618.1 220.7,618.9 220.9,618.7 221.2,619.3 221.5,619.1 221.7,619.1 222.0,618.2 222.3,619.0 222.5,618.3 222.8,618.7 223.1,619.2 223.3,618.0 223.6,617.8 223.9,617.8 224.1,620.2 224.4,616.8 224.7,617.6 224.9,618.3 225.2,615.7 225.5,617.2 225.7,616.5 226.0,617.0 226.3,619.0 226.5,615.9 226.8,617.8 227.1,615.8 227.3,616.7 227.6,617.2 227.9,618.5 228.1,616.7 228.4,617.1 228.7,616.1 228.9,617.0 229.2,615.3 229.5,616.3 229.7,616.1 230.0,613.9 230.3,614.9 230.5,616.0 230.8,615.1 231.1,616.7 231.3,615.8 231.6,615.2 231.9,615.6 232.1,615.8 232.4,614.3 232.7,615.2 232.9,615.3 233.2,615.1 233.5,615.0 233.7,613.7 234.0,614.0 234.3,615.5 234.5,612.9 234.8,613.0 235.1,614.1 235.3,614.6 235.6,613.7 235.9,614.1 236.1,613.0 236.4,613.4 236.7,612.2 236.9,614.6 237.2,613.7 237.5,612.8 237.7,613.4 238.0,613.2 238.3,613.8 238.5,611.0 238.8,612.7 239.1,611.8 239.3,613.1 239.6,612.7 239.9,612.2 240.1,610.6 240.4,610.8 240.6,610.1 240.9,610.6 241.2,610.5 241.4,612.0 241.7,612.4 242.0,610.5 242.2,612.3 242.5,611.1 242.8,612.0 243.0,612.4 243.3,611.3 243.6,612.1 243.8,611.5 244.1,610.4 244.4,611.3 244.6,610.2 244.9,611.4 245.2,610.7 245.4,611.8 245.7,609.7 246.0,612.6 246.2,610.5 246.5,610.2 246.8,613.0 247.0,612.0 247.3,611.9 247.6,610.5 247.8,610.6 248.1,610.7 248.4,609.7 248.6,608.2 248.9,611.1 249.2,609.8 249.4,610.0 249.7,609.0 250.0,611.9 250.2,611.3 250.5,610.8 250.8,610.7 251.0,609.5 251.3,610.1 251.6,611.4 251.8,610.2 252.1,610.9 252.4,610.1 252.6,609.5 252.9,610.0 253.2,608.1 253.4,607.1 253.7,608.7 254.0,610.5 254.2,607.7 254.5,607.0 254.8,609.1 255.0,608.5 255.3,607.8 255.6,608.5 255.8,607.5 256.1,608.1 256.4,609.1 256.6,608.9 256.9,608.7 257.2,609.0 257.4,607.1 257.7,608.0 258.0,608.4 258.2,607.4 258.5,608.0 258.8,607.1 259.0,606.5 259.3,607.8 259.6,608.4 259.8,608.9 260.1,606.1 260.4,607.3 260.6,608.2 260.9,607.7 261.2,608.6 261.4,606.2 261.7,607.1 262.0,607.7 262.2,608.7 262.5,605.3 262.8,607.1 263.0,609.2 263.3,607.6 263.6,607.0 263.8,606.8 264.1,607.9 264.4,605.7 264.6,606.2 264.9,606.7 265.2,607.3 265.4,608.3 265.7,607.0 266.0,606.7 266.2,607.5 266.5,606.1 266.8,605.6 267.0,606.7 267.3,606.6 267.5,606.1 267.8,604.5 268.1,604.7 268.3,607.5 268.6,606.4 268.9,603.4 269.1,606.1 269.4,604.1 269.7,605.2 269.9,604.4 270.2,605.9 270.5,605.4 270.7,604.9 271.0,605.4 271.3,605.4 271.5,603.9 271.8,605.3 272.1,603.9 272.3,605.6 272.6,605.3 272.9,604.3 273.1,604.4 273.4,603.9 273.7,604.7 273.9,604.8 274.2,605.1 274.5,606.1 274.7,604.9 275.0,603.5 275.3,604.5 275.5,604.2 275.8,603.1 276.1,605.1 276.3,603.9 276.6,604.7 276.9,603.0 277.1,605.4 277.4,604.3 277.7,604.4 277.9,604.2 278.2,604.3 278.5,601.9 278.7,603.9 279.0,603.8 279.3,605.0 279.5,604.8 279.8,604.2 280.1,604.6 280.3,602.9 280.6,603.9 280.9,603.7 281.1,603.4 281.4,604.1 281.7,604.4 281.9,603.8 282.2,602.9 282.5,603.2 282.7,603.9 283.0,601.5 283.3,602.6 283.5,602.3 283.8,601.4 284.1,603.8 284.3,601.9 284.6,602.6 284.9,602.5 285.1,604.2 285.4,603.5 285.7,602.7 285.9,602.7 286.2,601.1 286.5,603.0 286.7,602.3 287.0,602.8 287.3,603.8 287.5,602.8 287.8,602.3 288.1,600.7 288.3,601.2 288.6,602.9 288.9,603.2 289.1,602.3 289.4,602.8 289.7,599.8 289.9,601.3 290.2,602.2 290.5,602.6 290.7,603.1 291.0,602.1 291.3,604.5 291.5,602.4 291.8,602.4 292.1,600.4 292.3,603.6 292.6,600.9 292.9,602.1 293.1,601.0 293.4,602.5 293.6,601.3 293.9,600.8 294.2,599.1 294.4,602.4 294.7,601.7 295.0,601.6 295.2,602.1 295.5,601.6 295.8,601.4 296.0,601.8 296.3,603.1 296.6,601.1 296.8,602.8 297.1,601.4 297.4,600.2 297.6,602.5 297.9,601.3 298.2,601.0 298.4,601.2 298.7,601.6 299.0,601.0 299.2,600.3 299.5,602.0 299.8,601.1 300.0,600.2 300.3,601.5 300.6,602.1 300.8,600.1 301.1,600.1 301.4,599.8 301.6,600.7 301.9,601.3 302.2,599.1 302.4,599.4 302.7,599.8 303.0,601.1 303.2,600.4 303.5,601.4 303.8,601.5 304.0,600.3 304.3,600.1 304.6,599.8 304.8,600.2 305.1,598.2 305.4,601.3 305.6,598.9 305.9,600.6 306.2,599.2 306.4,601.1 306.7,597.9 307.0,598.6 307.2,601.7 307.5,598.7 307.8,599.8 308.0,599.0 308.3,599.9 308.6,600.0 308.8,601.2 309.1,600.3 309.4,599.8 309.6,601.4 309.9,600.7 310.2,599.6 310.4,599.2 310.7,600.1 311.0,598.1 311.2,600.0 311.5,598.9 311.8,598.1 312.0,600.2 312.3,598.2 312.6,599.5 312.8,600.2 313.1,597.6 313.4,597.6 313.6,599.5 313.9,598.1 314.2,598.1 314.4,599.1 314.7,596.8 315.0,599.2 315.2,599.7 315.5,598.9 315.8,599.1 316.0,599.4 316.3,599.2 316.6,600.2 316.8,598.2 317.1,600.2 317.4,597.6 317.6,598.0 317.9,599.1 318.2,599.0 318.4,599.3 318.7,598.6 319.0,596.7 319.2,598.2 319.5,598.9 319.8,596.6 320.0,598.8 320.3,598.7 320.5,596.1 320.8,597.6 321.1,597.0 321.3,597.6 321.6,597.6 321.9,597.5 322.1,597.3 322.4,595.8 322.7,599.3 322.9,600.5 323.2,598.3 323.5,599.5 323.7,597.8 324.0,599.2 324.3,597.8 324.5,596.7 324.8,598.4 325.1,598.6 325.3,596.9 325.6,598.5 325.9,597.8 326.1,597.8 326.4,599.0 326.7,596.6 326.9,598.7 327.2,596.6 327.5,597.1 327.7,598.6 328.0,597.8 328.3,596.5 328.5,597.7 328.8,595.0 329.1,598.4 329.3,596.0 329.6,599.0 329.9,597.5 330.1,596.1 330.4,599.2 330.7,596.8 330.9,598.3 331.2,598.5 331.5,597.8 331.7,597.6 332.0,597.5 332.3,597.6 332.5,597.8 332.8,599.7 333.1,595.4 333.3,594.5 333.6,596.3 333.9,597.0 334.1,597.8 334.4,596.4 334.7,596.3 334.9,597.6 335.2,596.8 335.5,595.7 335.7,596.2 336.0,596.5 336.3,596.3 336.5,597.2 336.8,596.4 337.1,596.3 337.3,597.1 337.6,596.4 337.9,595.2 338.1,595.1 338.4,598.6 338.7,597.7 338.9,595.0 339.2,595.6 339.5,595.6 339.7,597.5 340.0,595.9 340.3,595.3 340.5,595.4 340.8,596.7 341.1,596.5 341.3,595.5 341.6,595.6 341.9,594.3 342.1,598.2 342.4,596.3 342.7,594.3 342.9,596.9 343.2,595.5 343.5,594.0 343.7,596.6 344.0,595.1 344.3,593.3 344.5,596.8 344.8,597.6 345.1,594.2 345.3,595.9 345.6,595.4 345.9,595.2 346.1,593.9 346.4,595.5 346.6,594.1 346.9,594.3 347.2,595.1 347.4,593.9 347.7,594.7 348.0,595.1 348.2,591.6 348.5,597.2 348.8,596.2 349.0,596.0 349.3,595.3 349.6,594.6 349.8,595.0 350.1,592.2 350.4,595.3 350.6,595.9 350.9,594.6 351.2,595.1 351.4,595.1 351.7,593.5 352.0,594.2 352.2,593.2 352.5,595.7 352.8,593.7 353.0,594.4 353.3,595.1 353.6,596.1 353.8,594.4 354.1,595.6 354.4,593.4 354.6,593.7 354.9,593.6 355.2,591.0 355.4,592.7 355.7,596.4 356.0,593.4 356.2,593.8 356.5,593.7 356.8,594.5 357.0,592.9 357.3,597.1 357.6,595.4 357.8,593.1 358.1,593.6 358.4,592.7 358.6,594.2 358.9,594.3 359.2,592.8 359.4,593.4 359.7,595.6 360.0,592.5 360.2,594.8 360.5,592.5 360.8,593.3 361.0,592.8 361.3,592.3 361.6,594.6 361.8,592.6 362.1,593.4 362.4,593.6 362.6,593.3 362.9,593.9 363.2,593.2 363.4,593.0 363.7,594.0 364.0,591.9 364.2,593.1 364.5,594.4 364.8,592.6 365.0,592.5 365.3,594.7 365.6,592.7 365.8,593.5 366.1,592.7 366.4,593.2 366.6,592.5 366.9,592.7 367.2,595.6 367.4,592.8 367.7,592.2 368.0,592.0 368.2,591.3 368.5,592.4 368.8,591.2 369.0,591.7 369.3,593.3 369.6,593.5 369.8,591.1 370.1,591.8 370.4,594.7 370.6,593.8 370.9,591.2 371.2,592.3 371.4,594.5 371.7,592.0 372.0,591.3 372.2,591.7 372.5,592.5 372.8,592.6 373.0,593.0 373.3,592.9 373.5,592.0 373.8,589.3 374.1,589.2 374.3,592.4 374.6,594.0 374.9,592.3 375.1,592.5 375.4,592.4 375.7,594.1 375.9,592.2 376.2,592.8 376.5,592.0 376.7,593.9 377.0,591.9 377.3,593.4 377.5,592.9 377.8,592.7 378.1,592.6 378.3,592.5 378.6,592.5 378.9,592.6 379.1,592.6 379.4,592.5 379.7,592.2 379.9,589.5 380.2,590.6 380.5,592.4 380.7,593.3 381.0,590.3 381.3,591.6 381.5,591.2 381.8,590.2 382.1,593.8 382.3,592.2 382.6,591.3 382.9,589.8 383.1,591.5 383.4,591.3 383.7,591.4 383.9,591.4 384.2,591.1 384.5,592.0 384.7,592.1 385.0,591.7 385.3,590.5 385.5,589.8 385.8,591.0 386.1,591.5 386.3,589.6 386.6,590.4 386.9,590.2 387.1,591.2 387.4,591.5 387.7,590.4 387.9,591.2 388.2,589.5 388.5,592.0 388.7,590.5 389.0,590.9 389.3,592.1 389.5,591.3 389.8,592.1 390.1,591.2 390.3,591.1 390.6,587.5 390.9,592.0 391.1,589.9 391.4,591.2 391.7,590.2 391.9,591.0 392.2,591.6 392.5,588.8 392.7,589.2 393.0,592.7 393.3,590.7 393.5,590.9 393.8,592.4 394.1,590.2 394.3,589.8 394.6,590.3 394.9,589.8 395.1,588.1 395.4,590.9 395.7,588.7 395.9,587.6 396.2,593.8 396.5,590.5 396.7,588.5 397.0,589.7 397.3,590.9 397.5,588.3 397.8,589.0 398.1,592.0 398.3,589.0 398.6,590.2 398.9,589.7 399.1,591.4 399.4,589.2 399.7,589.7 399.9,591.0 400.2,590.3 400.4,588.0 400.7,587.9 401.0,591.6 401.2,589.1 401.5,590.1 401.8,590.3 402.0,589.4 402.3,587.7 402.6,588.9 402.8,590.8 403.1,589.5 403.4,589.0 403.6,588.1 403.9,589.6 404.2,589.3 404.4,589.1 404.7,588.6 405.0,591.8 405.2,587.6 405.5,588.9 405.8,589.3 406.0,590.7 406.3,588.9 406.6,586.8 406.8,590.0 407.1,591.3 407.4,588.6 407.6,589.1 407.9,589.2 408.2,591.0 408.4,588.5 408.7,588.2 409.0,594.5 409.2,588.8 409.5,588.0 409.8,590.1 410.0,591.6 410.3,588.8 410.6,586.2 410.8,588.4 411.1,586.0 411.4,588.4 411.6,589.1 411.9,589.7 412.2,586.9 412.4,590.4 412.7,589.5 413.0,589.2 413.2,588.3 413.5,588.5 413.8,590.5 414.0,590.1 414.3,586.3 414.6,588.4 414.8,588.5 415.1,588.9 415.4,588.1 415.6,589.4 415.9,586.9 416.2,587.3 416.4,588.3 416.7,587.1 417.0,588.5 417.2,588.8 417.5,587.0 417.8,588.3 418.0,589.2 418.3,586.1 418.6,588.4 418.8,587.5 419.1,586.1 419.4,589.7 419.6,588.4 419.9,586.8 420.2,588.4 420.4,588.5 420.7,588.1 421.0,588.3 421.2,588.3 421.5,587.3 421.8,587.7 422.0,585.6 422.3,587.4 422.6,585.6 422.8,587.6 423.1,585.4 423.4,587.9 423.6,586.1 423.9,587.4 424.2,585.5 424.4,588.6 424.7,588.2 425.0,587.0 425.2,588.8 425.5,585.6 425.8,587.7 426.0,586.7 426.3,586.1 426.6,586.6 426.8,588.3 427.1,589.1 427.3,589.5 427.6,588.5 427.9,588.2 428.1,588.3 428.4,586.6 428.7,589.0 428.9,589.3 429.2,586.9 429.5,584.8 429.7,588.3 430.0,587.2 430.3,587.1 430.5,585.6 430.8,585.9 431.1,587.6 431.3,585.7 431.6,586.8 431.9,585.8 432.1,584.5 432.4,589.7 432.7,588.7 432.9,588.6 433.2,588.4 433.5,586.6 433.7,586.6 434.0,584.4 434.3,584.8 434.5,586.3 434.8,586.8 435.1,585.7 435.3,586.0 435.6,587.2 435.9,585.6 436.1,587.2 436.4,586.6 436.7,586.7 436.9,587.2 437.2,587.3 437.5,586.3 437.7,586.5 438.0,588.0 438.3,584.1 438.5,584.0 438.8,584.1 439.1,584.7 439.3,586.4 439.6,587.5 439.9,587.6 440.1,588.5 440.4,586.6 440.7,588.4 440.9,586.0 441.2,585.7 441.5,586.8 441.7,586.8 442.0,586.1 442.3,585.2 442.5,586.4 442.8,583.7 443.1,587.1 443.3,586.7 443.6,586.5 443.9,586.1 444.1,585.5 444.4,585.1 444.7,586.2 444.9,583.6 445.2,588.2 445.5,585.3 445.7,585.6 446.0,587.5 446.3,587.6 446.5,585.5 446.8,584.1 447.1,585.0 447.3,585.7 447.6,585.9 447.9,586.2 448.1,586.0 448.4,584.6 448.7,584.0 448.9,584.7 449.2,586.3 449.5,584.6 449.7,584.0 450.0,587.8 450.3,584.9 450.5,586.0 450.8,585.1 451.1,586.9 451.3,586.6 451.6,585.3 451.9,585.9 452.1,585.8 452.4,586.3 452.7,584.5 452.9,583.6 453.2,586.3 453.4,584.7 453.7,585.6 454.0,584.6 454.2,583.4 454.5,584.6 454.8,585.1 455.0,586.3 455.3,583.3 455.6,582.6 455.8,587.4 456.1,584.0 456.4,585.0 456.6,586.4 456.9,582.4 457.2,584.0 457.4,581.8 457.7,585.7 458.0,585.2 458.2,586.6 458.5,584.5 458.8,586.8 459.0,584.9 459.3,582.9 459.6,583.7 459.8,583.1 460.1,584.2 460.4,583.3 460.6,584.5 460.9,586.1 461.2,583.7 461.4,584.4 461.7,585.3 462.0,585.7 462.2,582.6 462.5,586.4 462.8,585.3 463.0,583.7 463.3,583.3 463.6,583.8 463.8,586.1 464.1,582.6 464.4,584.2 464.6,586.0 464.9,582.5 465.2,584.1 465.4,586.4 465.7,587.5 466.0,584.1 466.2,584.7 466.5,583.5 466.8,583.6 467.0,584.9 467.3,583.2 467.6,583.5 467.8,585.2 468.1,582.7 468.4,583.5 468.6,584.0 468.9,583.3 469.2,584.9 469.4,584.8 469.7,583.9 470.0,585.0 470.2,581.6 470.5,583.4 470.8,582.7 471.0,581.2 471.3,581.7 471.6,580.8 471.8,584.8 472.1,581.4 472.4,584.2 472.6,583.9 472.9,583.3 473.2,583.5 473.4,583.6 473.7,583.1 474.0,581.5 474.2,586.5 474.5,585.5 474.8,585.3 475.0,583.1 475.3,583.3 475.6,583.0 475.8,580.9 476.1,583.4 476.4,585.4 476.6,582.9 476.9,580.9 477.2,580.7 477.4,583.5 477.7,583.2 478.0,582.9 478.2,582.6 478.5,583.6 478.8,584.0 479.0,581.2 479.3,581.2 479.6,583.3 479.8,584.1 480.1,584.2 480.3,584.9 480.6,585.0 480.9,583.7 481.1,584.3 481.4,582.9 481.7,584.0 481.9,584.5 482.2,583.8 482.5,586.7 482.7,582.7 483.0,583.6 483.3,581.3 483.5,583.8 483.8,583.4 484.1,584.5 484.3,580.3 484.6,582.8 484.9,581.5 485.1,583.6 485.4,582.4 485.7,584.5 485.9,584.0 486.2,583.6 486.5,584.4 486.7,582.1 487.0,582.0 487.3,581.5 487.5,584.4 487.8,583.9 488.1,583.1 488.3,582.2 488.6,584.8 488.9,583.4 489.1,581.6 489.4,582.9 489.7,583.2 489.9,584.6 490.2,583.5 490.5,582.1 490.7,581.6 491.0,585.3 491.3,582.5 491.5,583.5 491.8,584.3 492.1,580.5 492.3,582.1 492.6,584.5 492.9,584.4 493.1,582.7 493.4,585.0 493.7,583.2 493.9,582.3 494.2,584.7 494.5,582.7 494.7,582.3 495.0,583.8 495.3,582.4 495.5,582.0 495.8,582.3 496.1,583.8 496.3,581.7 496.6,583.3 496.9,582.6 497.1,582.8 497.4,582.8 497.7,585.6 497.9,581.4 498.2,582.2 498.5,582.6 498.7,582.0 499.0,583.4 499.3,583.0 499.5,582.1 499.8,585.7 500.1,583.8 500.3,583.6 500.6,583.2 500.9,583.5 501.1,583.8 501.4,582.4 501.7,581.6 501.9,582.1 502.2,581.3 502.5,582.0 502.7,580.6 503.0,580.5 503.3,583.3 503.5,583.8 503.8,583.5 504.1,583.1 504.3,581.6 504.6,581.9 504.9,582.3 505.1,583.5 505.4,583.2 505.7,582.8 505.9,582.3 506.2,586.7 506.4,582.2 506.7,581.9 507.0,583.5 507.2,580.6 507.5,581.5 507.8,581.5 508.0,584.7 508.3,581.4 508.6,582.3 508.8,582.2 509.1,585.6 509.4,584.6 509.6,582.9 509.9,584.3 510.2,580.6 510.4,584.0 510.7,581.4 511.0,581.9 511.2,578.5 511.5,582.3 511.8,580.3 512.0,583.0 512.3,583.9 512.6,581.9 512.8,580.6 513.1,583.1 513.4,580.9 513.6,581.5 513.9,582.3 514.2,582.0 514.4,582.1 514.7,583.1 515.0,582.0 515.2,581.7 515.5,583.2 515.8,585.8 516.0,581.3 516.3,583.1 516.6,581.4 516.8,583.4 517.1,581.6 517.4,582.5 517.6,582.6 517.9,582.2 518.2,581.7 518.4,584.6 518.7,580.4 519.0,580.7 519.2,581.7 519.5,584.4 519.8,580.9 520.0,582.1 520.3,579.8 520.6,582.7 520.8,582.3 521.1,580.7 521.4,585.0 521.6,582.6 521.9,582.3 522.2,585.2 522.4,583.3 522.7,581.7 523.0,581.5 523.2,579.7 523.5,580.7 523.8,583.8 524.0,580.9 524.3,581.4 524.6,581.8 524.8,583.5 525.1,579.3 525.4,579.5 525.6,581.5 525.9,583.0 526.2,583.4 526.4,583.4 526.7,580.6 527.0,584.2 527.2,580.3 527.5,582.1 527.8,581.3 528.0,580.8 528.3,578.5 528.6,580.8 528.8,582.0 529.1,581.2 529.4,581.6 529.6,581.7 529.9,581.6 530.2,583.1 530.4,581.3 530.7,583.6 531.0,580.1 531.2,582.2 531.5,583.3 531.8,580.8 532.0,580.7 532.3,581.5 532.6,583.7 532.8,583.4 533.1,580.9 533.3,578.5 533.6,581.3 533.9,581.2 534.1,580.8 534.4,582.8 534.7,580.0 534.9,582.4 535.2,581.5 535.5,582.7 535.7,583.2 536.0,582.6 536.3,582.8 536.5,582.1 536.8,579.4 537.1,581.1 537.3,582.3 537.6,580.9 537.9,582.3 538.1,579.9 538.4,580.3 538.7,581.9 538.9,581.5 539.2,581.3 539.5,582.8 539.7,583.0 540.0,581.6 540.3,582.6 540.5,581.4 540.8,580.2 541.1,581.7 541.3,580.5 541.6,578.9 541.9,581.9 542.1,579.3 542.4,582.4 542.7,582.9 542.9,581.0 543.2,581.5 543.5,583.3 543.7,579.5 544.0,580.1 544.3,582.6 544.5,581.5 544.8,581.3 545.1,582.9 545.3,580.7 545.6,583.1 545.9,583.6 546.1,579.2 546.4,582.0 546.7,582.2 546.9,581.5 547.2,582.1 547.5,578.2 547.7,580.5 548.0,580.0 548.3,579.9 548.5,578.1 548.8,584.2 549.1,580.0 549.3,580.8 549.6,580.9 549.9,579.4 550.1,580.2 550.4,583.4 550.7,580.7 550.9,581.2 551.2,579.5 551.5,583.9 551.7,580.1 552.0,580.8 552.3,580.1 552.5,580.4 552.8,583.8 553.1,580.0 553.3,581.0 553.6,582.0 553.9,579.6 554.1,581.0 554.4,578.6 554.7,579.4 554.9,582.4 555.2,579.8 555.5,580.9 555.7,580.9 556.0,581.1 556.3,579.4 556.5,581.9 556.8,580.2 557.1,583.0 557.3,580.4 557.6,582.6 557.9,582.6 558.1,580.8 558.4,582.3 558.7,579.2 558.9,582.3 559.2,578.5 559.5,579.6 559.7,580.6 560.0,579.8 560.2,580.4 560.5,577.4 560.8,580.0 561.0,581.5 561.3,580.1 561.6,581.1 561.8,580.8 562.1,581.5 562.4,581.4 562.6,579.5 562.9,580.7 563.2,579.5 563.4,581.0 563.7,580.7 564.0,581.2 564.2,578.8 564.5,578.3 564.8,580.7 565.0,579.3 565.3,582.5 565.6,582.3 565.8,579.5 566.1,582.9 566.4,576.6 566.6,579.1 566.9,578.1 567.2,580.6 567.4,582.3 567.7,581.7 568.0,581.7 568.2,579.3 568.5,581.9 568.8,581.5 569.0,578.2 569.3,582.1 569.6,581.3 569.8,578.5 570.1,576.9 570.4,582.7 570.6,583.7 570.9,581.3 571.2,580.0 571.4,580.4 571.7,581.1 572.0,582.1 572.2,579.1 572.5,581.0 572.8,581.2 573.0,580.2 573.3,578.2 573.6,580.0 573.8,576.6 574.1,580.7 574.4,579.4 574.6,583.2 574.9,581.1 575.2,580.2 575.4,581.2 575.7,581.3 576.0,580.9 576.2,581.5 576.5,580.9 576.8,580.0 577.0,579.6 577.3,581.6 577.6,580.4 577.8,581.2 578.1,578.8 578.4,577.6 578.6,579.8 578.9,579.5 579.2,580.4 579.4,579.3 579.7,580.3 580.0,581.8 580.2,578.3 580.5,576.8 580.8,579.1 581.0,580.0 581.3,579.3 581.6,577.6 581.8,580.6 582.1,578.9 582.4,579.7 582.6,583.0 582.9,580.4 583.2,579.1 583.4,579.4 583.7,580.0 584.0,581.6 584.2,579.5 584.5,579.6 584.8,579.1 585.0,577.3 585.3,579.8 585.6,578.3 585.8,579.1 586.1,575.9 586.4,579.1 586.6,576.0 586.9,581.2 587.1,581.5 587.4,579.1 587.7,579.9 587.9,577.9 588.2,578.6 588.5,578.5 588.7,580.8 589.0,579.7 589.3,578.5 589.5,580.4 589.8,579.6 590.1,577.9 590.3,579.7 590.6,579.3 590.9,577.9 591.1,578.9 591.4,581.6 591.7,579.4 591.9,579.5 592.2,579.1 592.5,576.3 592.7,577.9 593.0,579.3 593.3,580.4 593.5,578.3 593.8,579.2 594.1,577.6 594.3,579.0 594.6,578.0 594.9,580.6 595.1,579.7 595.4,579.4 595.7,580.6 595.9,578.9 596.2,579.9 596.5,579.9 596.7,580.4 597.0,579.5 597.3,581.7 597.5,578.1 597.8,578.8 598.1,578.5 598.3,577.6 598.6,578.9 598.9,579.7 599.1,577.4 599.4,579.9 599.7,579.1 599.9,582.4 600.2,580.1 600.5,579.3 600.7,578.4 601.0,578.6 601.3,577.9 601.5,580.1 601.8,580.1 602.1,579.0 602.3,580.4 602.6,579.9 602.9,579.2 603.1,582.1 603.4,581.6 603.7,578.7 603.9,580.3 604.2,578.3 604.5,580.0 604.7,580.8 605.0,578.5 605.3,579.7 605.5,578.8 605.8,580.3 606.1,580.5 606.3,579.8 606.6,580.4 606.9,579.6 607.1,580.8 607.4,578.8 607.7,578.2 607.9,578.7 608.2,581.1 608.5,577.6 608.7,581.8 609.0,579.0 609.3,579.2 609.5,578.3 609.8,580.3 610.1,580.0 610.3,577.7 610.6,577.7 610.9,580.8 611.1,579.7 611.4,580.4 611.7,583.0 611.9,577.7 612.2,580.2 612.5,579.2 612.7,579.0 613.0,581.1 613.2,578.0 613.5,580.3 613.8,581.4 614.0,578.8 614.3,579.1 614.6,580.1 614.8,579.4 615.1,576.9 615.4,578.3 615.6,579.3 615.9,579.8 616.2,576.7 616.4,579.9 616.7,582.0 617.0,577.6 617.2,580.0 617.5,582.4 617.8,581.3 618.0,581.2 618.3,582.4 618.6,580.3 618.8,580.1 619.1,577.0 619.4,579.4 619.6,580.1 619.9,579.5 620.2,579.0 620.4,577.9 620.7,577.4 621.0,582.0 621.2,581.3 621.5,579.3 621.8,576.5 622.0,580.0 622.3,577.7 622.6,580.0 622.8,580.0 623.1,579.6 623.4,577.3 623.6,579.9 623.9,579.1 624.2,578.8 624.4,577.9 624.7,579.1 625.0,578.0 625.2,576.8 625.5,578.1 625.8,579.7 626.0,579.4 626.3,578.8 626.6,579.6 626.8,580.8 627.1,580.5 627.4,580.0 627.6,582.0 627.9,575.1 628.2,578.0 628.4,580.0 628.7,580.2 629.0,577.5 629.2,581.2 629.5,580.6 629.8,577.7 630.0,579.3 630.3,578.1 630.6,579.0 630.8,579.2 631.1,580.1 631.4,578.5 631.6,578.8 631.9,578.8 632.2,579.8 632.4,577.5 632.7,579.1 633.0,578.3 633.2,580.8 633.5,581.5 633.8,578.1 634.0,580.1 634.3,580.3 634.6,578.6 634.8,577.3 635.1,579.5 635.4,579.6 635.6,578.5 635.9,578.4 636.2,579.0 636.4,581.7 636.7,578.0 637.0,580.2 637.2,576.2 637.5,580.1 637.8,578.8 638.0,579.2 638.3,578.8 638.6,575.6 638.8,579.5 639.1,577.7 639.4,579.1 639.6,579.6 639.9,578.0 640.1,578.6 640.4,579.4 640.7,580.5 640.9,578.5 641.2,574.3 641.5,579.3 641.7,578.2 642.0,579.9 642.3,574.2 642.5,581.1 642.8,579.9 643.1,581.7 643.3,578.1 643.6,578.9 643.9,578.5 644.1,579.1 644.4,576.9 644.7,577.1 644.9,577.4 645.2,582.9 645.5,580.4 645.7,578.9 646.0,577.8 646.3,582.9 646.5,576.8 646.8,578.6 647.1,576.8 647.3,580.7 647.6,580.1 647.9,580.5 648.1,579.9 648.4,580.1 648.7,581.5 648.9,577.2 649.2,578.3 649.5,580.2 649.7,582.0 650.0,577.4 650.3,582.3 650.5,580.6 650.8,580.8 651.1,580.1 651.3,578.4 651.6,577.8 651.9,578.6 652.1,580.7 652.4,577.2 652.7,577.3 652.9,577.9 653.2,575.7 653.5,580.5 653.7,580.1 654.0,580.1 654.3,579.9 654.5,578.1 654.8,578.7 655.1,579.6 655.3,577.4 655.6,579.1 655.9,579.8 656.1,579.9 656.4,580.9 656.7,579.4 656.9,580.3 657.2,579.2 657.5,578.5 657.7,578.4 658.0,579.7 658.3,576.3 658.5,580.7 658.8,578.0 659.1,579.0 659.3,578.6 659.6,580.0 659.9,580.1 660.1,578.1 660.4,581.5 660.7,578.8 660.9,581.1 661.2,581.6 661.5,578.9 661.7,579.8 662.0,576.2 662.3,581.5 662.5,578.8 662.8,578.9 663.1,578.8 663.3,579.7 663.6,581.3 663.9,578.0 664.1,577.9 664.4,578.4 664.7,578.6 664.9,577.3 665.2,577.6 665.5,578.0 665.7,579.9 666.0,577.5 666.2,580.2 666.5,578.4 666.8,580.4 667.0,579.2 667.3,577.8 667.6,579.4 667.8,577.6 668.1,579.6 668.4,576.6 668.6,579.2 668.9,575.3 669.2,577.9 669.4,579.0 669.7,580.5 670.0,579.5 670.2,576.1 670.5,580.7 670.8,581.2 671.0,578.5 671.3,577.2 671.6,579.5 671.8,580.2 672.1,579.2 672.4,579.2 672.6,577.3 672.9,576.3 673.2,579.1 673.4,580.1 673.7,580.6 674.0,581.4 674.2,579.0 674.5,581.1 674.8,577.9 675.0,579.2 675.3,579.9 675.6,576.9 675.8,581.4 676.1,577.6 676.4,578.8 676.6,578.5 676.9,578.9 677.2,580.5 677.4,578.0 677.7,577.2 678.0,581.8 678.2,578.8 678.5,579.1 678.8,579.3 679.0,578.3 679.3,579.2 679.6,579.5 679.8,577.2 680.1,580.3 680.4,579.5 680.6,579.5 680.9,580.0 681.2,579.6 681.4,576.9 681.7,580.1 682.0,575.3 682.2,581.1 682.5,582.3 682.8,579.9 683.0,580.7 683.3,577.1 683.6,578.2 683.8,580.4 684.1,579.2 684.4,579.3 684.6,575.1 684.9,578.7 685.2,578.5 685.4,578.1 685.7,578.6 686.0,578.9 686.2,580.1 686.5,578.7 686.8,578.6 687.0,580.8 687.3,578.8 687.6,580.7 687.8,581.3 688.1,579.0 688.4,578.1 688.6,577.5 688.9,579.7 689.2,581.0 689.4,580.1 689.7,579.2 690.0,579.0 690.2,578.2 690.5,579.1 690.8,577.3 691.0,579.8 691.3,578.2 691.6,577.9 691.8,578.3 692.1,578.1 692.4,580.4 692.6,577.6 692.9,579.6 693.1,579.1 693.4,580.3 693.7,578.3 693.9,579.5 694.2,579.8 694.5,577.8 694.7,579.9 695.0,578.3 695.3,578.6 695.5,578.1 695.8,578.7 696.1,580.5 696.3,578.6 696.6,578.3 696.9,576.1 697.1,576.1 697.4,577.5 697.7,577.4 697.9,582.4 698.2,579.5 698.5,580.3 698.7,577.9 699.0,578.0 699.3,578.0 699.5,577.9 699.8,578.2 700.1,578.9 700.3,579.6 700.6,577.7 700.9,578.7 701.1,577.2 701.4,579.4 701.7,579.1 701.9,579.9 702.2,577.8 702.5,579.9 702.7,582.1 703.0,579.9 703.3,579.7 703.5,578.7 703.8,579.2 704.1,576.9 704.3,578.3 704.6,577.3 704.9,576.7 705.1,577.2 705.4,577.4 705.7,579.4 705.9,578.1 706.2,578.8 706.5,577.6 706.7,579.5 707.0,577.7 707.3,579.4 707.5,577.6 707.8,576.9 708.1,576.9 708.3,579.3 708.6,576.8 708.9,581.1 709.1,578.4 709.4,580.7 709.7,578.6 709.9,580.4 710.2,578.7 710.5,579.7 710.7,576.8 711.0,575.6 711.3,577.4 711.5,577.2 711.8,578.0 712.1,578.8 712.3,578.9 712.6,580.3 712.9,579.7 713.1,577.5 713.4,579.2 713.7,578.1 713.9,579.9 714.2,575.3 714.5,576.7 714.7,578.7 715.0,575.9 715.3,577.9 715.5,577.0 715.8,578.8 716.1,579.2 716.3,576.5 716.6,577.5 716.9,577.4 717.1,577.1 717.4,578.4 717.7,579.2 717.9,578.0 718.2,581.1 718.5,578.4 718.7,576.9 719.0,578.9 719.3,575.9 719.5,579.0 719.8,580.0 720.0,577.7 720.3,578.8 720.6,577.7 720.8,579.5 721.1,577.7 721.4,578.4 721.6,578.2 721.9,577.2 722.2,579.6 722.4,578.8 722.7,576.9 723.0,576.8 723.2,577.5 723.5,580.1 723.8,578.2 724.0,579.1 724.3,579.0 724.6,580.7 724.8,581.5 725.1,577.1 725.4,577.4 725.6,580.6 725.9,579.0 726.2,578.4 726.4,579.3 726.7,577.8 727.0,579.1 727.2,580.5 727.5,579.1 727.8,577.9 728.0,579.8 728.3,577.4 728.6,577.0 728.8,577.6 729.1,577.7 729.4,578.6 729.6,577.7 729.9,579.5 730.2,581.8 730.4,579.5 730.7,576.4 731.0,577.0 731.2,580.0 731.5,578.8 731.8,579.5 732.0,580.2 732.3,579.0 732.6,577.4 732.8,578.4 733.1,578.8 733.4,581.6 733.6,575.4 733.9,580.1 734.2,578.5 734.4,577.3 734.7,578.2 735.0,577.3 735.2,581.8 735.5,579.7 735.8,579.4 736.0,580.4 736.3,580.7 736.6,577.3 736.8,580.3 737.1,576.9 737.4,577.2 737.6,579.0 737.9,580.5 738.2,579.3 738.4,579.5 738.7,579.4 739.0,579.6 739.2,578.4 739.5,578.9 739.8,578.6 740.0,578.5 740.3,576.7 740.6,575.6 740.8,578.4 741.1,578.6 741.4,578.7 741.6,577.1 741.9,577.5 742.2,578.3 742.4,578.7 742.7,577.6 743.0,577.0 743.2,579.1 743.5,577.8 743.8,581.0 744.0,579.4 744.3,577.8 744.6,580.7 744.8,580.6 745.1,578.1 745.4,581.2 745.6,578.9 745.9,575.5 746.1,577.9 746.4,576.0 746.7,576.2 746.9,579.5 747.2,578.7 747.5,577.9 747.7,576.9 748.0,576.4 748.3,577.3 748.5,577.9 748.8,579.9 749.1,576.9 749.3,579.2 749.6,577.0 749.9,576.5 750.1,580.4 750.4,575.5 750.7,578.7 750.9,576.9 751.2,577.0 751.5,575.8 751.7,576.7 752.0,576.1 752.3,577.2 752.5,579.5 752.8,578.6 753.1,577.4 753.3,577.0 753.6,578.1 753.9,579.4 754.1,580.1 754.4,578.2 754.7,574.1 754.9,578.5 755.2,579.0 755.5,577.5 755.7,577.3 756.0,578.2 756.3,581.2 756.5,579.3 756.8,579.2 757.1,577.4 757.3,579.2 757.6,578.7 757.9,579.9 758.1,579.1 758.4,575.2 758.7,577.1 758.9,577.7 759.2,579.5 759.5,580.0 759.7,576.9 760.0,578.3 760.3,577.5 760.5,577.9 760.8,578.2 761.1,581.9 761.3,577.1 761.6,575.9 761.9,578.3 762.1,578.7 762.4,578.1 762.7,578.8 762.9,581.0 763.2,579.0 763.5,578.5 763.7,577.0 764.0,579.9 764.3,578.9 764.5,578.5 764.8,577.9 765.1,575.8 765.3,577.6 765.6,577.6 765.9,580.3 766.1,576.3 766.4,581.0 766.7,576.7 766.9,577.4 767.2,578.5 767.5,580.1 767.7,577.9 768.0,579.3 768.3,576.7 768.5,582.8 768.8,578.5 769.1,582.4 769.3,578.6 769.6,579.1 769.9,577.5 770.1,580.3 770.4,580.1 770.7,581.8 770.9,579.4 771.2,578.5 771.5,579.1 771.7,580.2 772.0,579.1 772.3,578.0 772.5,578.4 772.8,581.6 773.0,579.6 773.3,580.1 773.6,582.8 773.8,578.0 774.1,578.5 774.4,580.4 774.6,578.2 774.9,578.6 775.2,579.6 775.4,578.5 775.7,579.3 776.0,580.0 776.2,577.5 776.5,581.2 776.8,576.3 777.0,578.7 777.3,579.6 777.6,578.4 777.8,580.4 778.1,579.7 778.4,576.3 778.6,578.4 778.9,579.3 779.2,579.3 779.4,577.8 779.7,577.8 780.0,579.6 780.2,577.5 780.5,579.2 780.8,579.2 781.0,578.1 781.3,580.2 781.6,581.4 781.8,579.4 782.1,578.0 782.4,579.7 782.6,578.0 782.9,577.5 783.2,579.8 783.4,579.3 783.7,579.5 784.0,578.4 784.2,578.6 784.5,579.1 784.8,577.4 785.0,578.8 785.3,578.9 785.6,580.4 785.8,579.3 786.1,577.5 786.4,578.4 786.6,579.2 786.9,579.5 787.2,580.6 787.4,580.4 787.7,577.9 788.0,579.3 788.2,579.2 788.5,577.5 788.8,579.9 789.0,579.9 789.3,577.2 789.6,578.4 789.8,581.5 790.1,579.2 790.4,580.3 790.6,579.9 790.9,579.5 791.2,581.5 791.4,580.2 791.7,576.6 792.0,579.4 792.2,579.8 792.5,577.8 792.8,581.1 793.0,579.4 793.3,577.3 793.6,579.1 793.8,578.6 794.1,579.4 794.4,578.6 794.6,578.1 794.9,579.3 795.2,578.9 795.4,578.7 795.7,581.7 796.0,577.7 796.2,576.4 796.5,577.8 796.8,578.6 797.0,579.5 797.3,578.4 797.6,576.2 797.8,576.8 798.1,579.9 798.4,576.8 798.6,579.9 798.9,579.8 799.2,579.1 799.4,578.0 799.7,579.2 799.9,577.5 800.2,578.4 800.5,576.6 800.7,580.8 801.0,578.6 801.3,577.9 801.5,576.6 801.8,581.7 802.1,579.1 802.3,581.5 802.6,578.1 802.9,579.5 803.1,578.3 803.4,577.3 803.7,577.5 803.9,579.0 804.2,577.8 804.5,574.3 804.7,579.4 805.0,577.9 805.3,579.3 805.5,577.5 805.8,579.8 806.1,577.8 806.3,580.7 806.6,578.3 806.9,575.1 807.1,580.2 807.4,579.4 807.7,577.3 807.9,580.1 808.2,581.8 808.5,580.9 808.7,578.2 809.0,577.0 809.3,578.4 809.5,578.4 809.8,577.0 810.1,578.5 810.3,576.6 810.6,576.4 810.9,578.9 811.1,576.6 811.4,577.4 811.7,578.6 811.9,578.4 812.2,576.9 812.5,580.1 812.7,580.6 813.0,576.7 813.3,575.6 813.5,578.0 813.8,576.9 814.1,580.6 814.3,580.2 814.6,579.1 814.9,578.8 815.1,578.1 815.4,579.0 815.7,578.4 815.9,578.6 816.2,577.4 816.5,576.8 816.7,577.0 817.0,576.3 817.3,578.5 817.5,578.9 817.8,580.9 818.1,580.6 818.3,577.1 818.6,577.5 818.9,578.1 819.1,578.6 819.4,579.9 819.7,581.3 819.9,579.0 820.2,578.5 820.5,581.8 820.7,576.3 821.0,579.1 821.3,577.5 821.5,576.3 821.8,576.0 822.1,578.5 822.3,576.7 822.6,576.8 822.9,578.0 823.1,577.6 823.4,579.3 823.7,577.7 823.9,579.0 824.2,578.4 824.5,577.9 824.7,576.7 825.0,578.4 825.3,578.4 825.5,578.6 825.8,574.1 826.0,578.6 826.3,577.3 826.6,580.1 826.8,577.9 827.1,579.7 827.4,578.7 827.6,576.9 827.9,575.5 828.2,577.7 828.4,577.0 828.7,577.6 829.0,578.5 829.2,577.8 829.5,576.5 829.8,577.6 830.0,578.4 830.3,578.5 830.6,577.1 830.8,578.3 831.1,576.5 831.4,579.8 831.6,576.7 831.9,578.9 832.2,577.9 832.4,574.7 832.7,576.3 833.0,578.5 833.2,578.3 833.5,576.4 833.8,576.4 834.0,577.7 834.3,576.6 834.6,578.3 834.8,581.6 835.1,576.1 835.4,578.4 835.6,576.8 835.9,577.9 836.2,578.0 836.4,578.9 836.7,576.5 837.0,576.4 837.2,575.8 837.5,576.6 837.8,577.0 838.0,578.3 838.3,577.5 838.6,576.9 838.8,581.1 839.1,579.2 839.4,577.8 839.6,576.3 839.9,575.5 840.2,575.1 840.4,578.6 840.7,577.4 841.0,578.2 841.2,578.6 841.5,578.0 841.8,577.3 842.0,576.3 842.3,579.5 842.6,577.6 842.8,578.8 843.1,575.4 843.4,575.0 843.6,578.1 843.9,578.4 844.2,576.5 844.4,576.0 844.7,578.8 845.0,578.0 845.2,577.0 845.5,578.8 845.8,575.2 846.0,577.3 846.3,577.2 846.6,579.0 846.8,575.5 847.1,579.2 847.4,578.3 847.6,578.1 847.9,577.4 848.2,579.3 848.4,578.4 848.7,576.4 849.0,577.3 849.2,577.0 849.5,575.8 849.8,576.6 850.0,575.8 850.3,577.1 850.6,578.4 850.8,574.8 851.1,579.6 851.4,579.1 851.6,578.8 851.9,573.8 852.2,577.0 852.4,575.6 852.7,579.3 852.9,578.7 853.2,576.6 853.5,577.7 853.7,576.9 854.0,576.2 854.3,576.9 854.5,576.9 854.8,576.7 855.1,577.3 855.3,576.6 855.6,575.6 855.9,578.3 856.1,576.6 856.4,575.7 856.7,577.2 856.9,577.1 857.2,574.3 857.5,575.3 857.7,573.7 858.0,574.2 858.3,577.4 858.5,577.9 858.8,577.3 859.1,575.6 859.3,581.7 859.6,576.8 859.9,575.1 860.1,576.8 860.4,576.4 860.7,577.1 860.9,579.2 861.2,575.4 861.5,577.2 861.7,576.1 862.0,576.7 862.3,574.0 862.5,576.1 862.8,576.1 863.1,576.9 863.3,577.9 863.6,576.1 863.9,575.2 864.1,576.7 864.4,579.7 864.7,577.8 864.9,573.9 865.2,577.4 865.5,576.4 865.7,579.3 866.0,577.4" fill="none" stroke="#ebae1c" stroke-width="2.6" stroke-linejoin="round"/>
<path d="M67.3 663.2h0M67.5 663.1h0M67.8 662.7h0M68.1 663.3h0M68.3 663.2h0M68.6 663.3h0M68.9 663.1h0M69.1 662.9h0M69.4 663.3h0M69.7 662.7h0M69.9 662.8h0M70.2 662.9h0M70.5 662.9h0M70.7 662.4h0M71.0 663.3h0M71.3 663.1h0M71.5 662.5h0M71.8 663.3h0M72.1 662.9h0M72.3 663.0h0M72.6 663.2h0M72.9 663.2h0M73.1 663.0h0M73.4 662.8h0M73.7 662.8h0M73.9 662.7h0M74.2 662.8h0M74.5 662.8h0M74.7 662.7h0M75.0 663.0h0M75.3 663.1h0M75.5 662.6h0M75.8 663.3h0M76.1 662.6h0M76.3 662.4h0M76.6 663.1h0M76.9 663.3h0M77.1 662.9h0M77.4 662.6h0M77.7 663.0h0M77.9 662.4h0M78.2 662.5h0M78.5 662.9h0M78.7 662.4h0M79.0 663.0h0M79.3 662.7h0M79.5 662.5h0M79.8 662.2h0M80.1 662.4h0M80.3 662.1h0M80.6 663.0h0M80.8 661.6h0M81.1 662.8h0M81.4 662.4h0M81.6 662.0h0M81.9 662.3h0M82.2 662.1h0M82.4 662.8h0M82.7 662.8h0M83.0 662.6h0M83.2 662.6h0M83.5 662.4h0M83.8 662.5h0M84.0 662.7h0M84.3 662.3h0M84.6 662.8h0M84.8 662.6h0M85.1 662.2h0M85.4 662.6h0M85.6 662.3h0M85.9 662.1h0M86.2 661.8h0M86.4 661.9h0M86.7 662.0h0M87.0 662.1h0M87.2 662.6h0M87.5 662.5h0M87.8 662.5h0M88.0 662.4h0M88.3 662.2h0M88.6 662.5h0M88.8 662.3h0M89.1 661.8h0M89.4 662.3h0M89.6 662.8h0M89.9 662.1h0M90.2 662.0h0M90.4 662.0h0M90.7 661.1h0M91.0 661.4h0M91.2 661.0h0M91.5 661.7h0M91.8 661.2h0M92.0 661.3h0M92.3 661.3h0M92.6 661.5h0M92.8 661.0h0M93.1 661.7h0M93.4 660.6h0M93.6 659.9h0M93.9 660.2h0M94.2 661.4h0M94.4 660.5h0M94.7 660.7h0M95.0 660.6h0M95.2 660.4h0M95.5 659.8h0M95.8 659.9h0M96.0 660.4h0M96.3 659.8h0M96.6 659.8h0M96.8 659.1h0M97.1 660.2h0M97.4 659.7h0M97.6 659.9h0M97.9 659.5h0M98.2 660.1h0M98.4 659.6h0M98.7 659.2h0M99.0 659.3h0M99.2 659.3h0M99.5 659.0h0M99.8 659.1h0M100.0 659.1h0M100.3 658.8h0M100.6 658.6h0M100.8 658.4h0M101.1 659.1h0M101.4 658.5h0M101.6 657.8h0M101.9 658.7h0M102.2 658.0h0M102.4 658.2h0M102.7 657.5h0M103.0 657.4h0M103.2 657.6h0M103.5 657.8h0M103.8 658.2h0M104.0 657.7h0M104.3 657.7h0M104.6 657.3h0M104.8 656.6h0M105.1 656.4h0M105.4 656.9h0M105.6 656.9h0M105.9 656.9h0M106.2 656.7h0M106.4 656.8h0M106.7 655.9h0M107.0 656.8h0M107.2 656.4h0M107.5 656.6h0M107.7 655.9h0M108.0 655.5h0M108.3 655.8h0M108.5 655.9h0M108.8 655.9h0M109.1 655.6h0M109.3 655.9h0M109.6 655.0h0M109.9 654.9h0M110.1 655.1h0M110.4 655.1h0M110.7 655.5h0M110.9 654.5h0M111.2 655.7h0M111.5 655.4h0M111.7 654.1h0M112.0 655.1h0M112.3 655.1h0M112.5 655.4h0M112.8 654.2h0M113.1 654.0h0M113.3 654.4h0M113.6 655.0h0M113.9 654.3h0M114.1 654.5h0M114.4 653.7h0M114.7 653.4h0M114.9 653.7h0M115.2 653.7h0M115.5 653.1h0M115.7 652.9h0M116.0 654.1h0M116.3 653.3h0M116.5 653.9h0M116.8 653.7h0M117.1 652.7h0M117.3 653.6h0M117.6 653.1h0M117.9 652.4h0M118.1 652.7h0M118.4 653.5h0M118.7 652.8h0M118.9 652.7h0M119.2 652.9h0M119.5 651.6h0M119.7 652.3h0M120.0 652.3h0M120.3 651.7h0M120.5 652.0h0M120.8 652.6h0M121.1 651.9h0M121.3 651.7h0M121.6 651.7h0M121.9 651.2h0M122.1 651.2h0M122.4 651.3h0M122.7 651.5h0M122.9 651.3h0M123.2 650.4h0M123.5 651.9h0M123.7 650.6h0M124.0 650.8h0M124.3 651.2h0M124.5 650.8h0M124.8 650.4h0M125.1 651.3h0M125.3 650.5h0M125.6 650.2h0M125.9 650.8h0M126.1 650.2h0M126.4 649.6h0M126.7 650.0h0M126.9 650.4h0M127.2 650.7h0M127.5 650.7h0M127.7 649.3h0M128.0 649.8h0M128.3 649.6h0M128.5 649.6h0M128.8 649.8h0M129.1 648.5h0M129.3 648.9h0M129.6 648.5h0M129.9 649.7h0M130.1 648.7h0M130.4 648.6h0M130.7 649.4h0M130.9 649.2h0M131.2 649.1h0M131.5 648.1h0M131.7 648.4h0M132.0 648.7h0M132.3 648.0h0M132.5 648.5h0M132.8 648.1h0M133.1 648.1h0M133.3 648.4h0M133.6 647.4h0M133.8 647.8h0M134.1 648.8h0M134.4 647.7h0M134.6 646.8h0M134.9 648.6h0M135.2 646.9h0M135.4 647.2h0M135.7 647.8h0M136.0 647.1h0M136.2 647.6h0M136.5 647.7h0M136.8 646.7h0M137.0 646.6h0M137.3 647.6h0M137.6 646.9h0M137.8 646.5h0M138.1 647.2h0M138.4 645.8h0M138.6 646.6h0M138.9 646.0h0M139.2 645.7h0M139.4 646.5h0M139.7 645.7h0M140.0 645.8h0M140.2 645.5h0M140.5 645.9h0M140.8 645.1h0M141.0 645.1h0M141.3 644.6h0M141.6 644.7h0M141.8 645.9h0M142.1 645.4h0M142.4 644.8h0M142.6 644.4h0M142.9 645.2h0M143.2 644.8h0M143.4 644.5h0M143.7 644.7h0M144.0 644.0h0M144.2 645.0h0M144.5 644.1h0M144.8 644.7h0M145.0 643.9h0M145.3 644.6h0M145.6 644.2h0M145.8 643.4h0M146.1 644.4h0M146.4 643.7h0M146.6 643.3h0M146.9 643.6h0M147.2 643.6h0M147.4 643.4h0M147.7 643.8h0M148.0 642.8h0M148.2 642.7h0M148.5 642.1h0M148.8 642.8h0M149.0 642.3h0M149.3 643.1h0M149.6 642.4h0M149.8 643.1h0M150.1 642.4h0M150.4 642.6h0M150.6 641.8h0M150.9 643.4h0M151.2 642.3h0M151.4 642.3h0M151.7 641.6h0M152.0 642.3h0M152.2 642.1h0M152.5 641.0h0M152.8 642.0h0M153.0 641.8h0M153.3 640.8h0M153.6 642.6h0M153.8 641.1h0M154.1 641.0h0M154.4 641.0h0M154.6 642.1h0M154.9 641.8h0M155.2 641.3h0M155.4 641.3h0M155.7 640.3h0M156.0 640.9h0M156.2 639.7h0M156.5 640.5h0M156.8 640.0h0M157.0 640.7h0M157.3 640.5h0M157.6 639.8h0M157.8 639.5h0M158.1 640.3h0M158.4 639.1h0M158.6 639.9h0M158.9 638.7h0M159.2 640.3h0M159.4 639.7h0M159.7 639.0h0M160.0 639.3h0M160.2 639.6h0M160.5 638.7h0M160.7 638.5h0M161.0 639.2h0M161.3 638.4h0M161.5 639.0h0M161.8 639.2h0M162.1 637.8h0M162.3 638.9h0M162.6 638.7h0M162.9 637.9h0M163.1 638.9h0M163.4 638.7h0M163.7 638.2h0M163.9 637.9h0M164.2 637.3h0M164.5 637.9h0M164.7 638.1h0M165.0 638.4h0M165.3 637.8h0M165.5 637.8h0M165.8 636.7h0M166.1 638.3h0M166.3 638.3h0M166.6 638.3h0M166.9 637.2h0M167.1 636.7h0M167.4 635.9h0M167.7 637.8h0M167.9 636.6h0M168.2 637.0h0M168.5 635.5h0M168.7 636.2h0M169.0 635.4h0M169.3 636.3h0M169.5 635.5h0M169.8 635.9h0M170.1 636.4h0M170.3 635.3h0M170.6 636.0h0M170.9 637.2h0M171.1 635.7h0M171.4 636.3h0M171.7 635.1h0M171.9 634.4h0M172.2 635.1h0M172.5 634.9h0M172.7 635.9h0M173.0 635.6h0M173.3 635.3h0M173.5 633.6h0M173.8 635.1h0M174.1 634.5h0M174.3 635.8h0M174.6 634.9h0M174.9 634.4h0M175.1 634.4h0M175.4 634.5h0M175.7 633.9h0M175.9 633.8h0M176.2 634.8h0M176.5 634.8h0M176.7 633.5h0M177.0 633.2h0M177.3 634.6h0M177.5 633.1h0M177.8 634.4h0M178.1 633.5h0M178.3 632.5h0M178.6 634.3h0M178.9 633.1h0M179.1 633.2h0M179.4 633.7h0M179.7 632.4h0M179.9 633.4h0M180.2 633.2h0M180.5 633.4h0M180.7 632.2h0M181.0 632.1h0M181.3 631.4h0M181.5 632.4h0M181.8 632.8h0M182.1 631.1h0M182.3 632.4h0M182.6 631.5h0M182.9 630.7h0M183.1 631.2h0M183.4 632.9h0M183.7 632.3h0M183.9 632.0h0M184.2 630.8h0M184.5 631.9h0M184.7 630.7h0M185.0 631.0h0M185.3 630.9h0M185.5 631.0h0M185.8 631.4h0M186.1 629.8h0M186.3 630.6h0M186.6 629.6h0M186.8 631.2h0M187.1 631.6h0M187.4 629.4h0M187.6 631.1h0M187.9 630.1h0M188.2 630.4h0M188.4 630.1h0M188.7 630.2h0M189.0 630.6h0M189.2 630.6h0M189.5 629.5h0M189.8 630.1h0M190.0 628.3h0M190.3 629.4h0M190.6 628.3h0M190.8 629.6h0M191.1 628.6h0M191.4 629.5h0M191.6 629.7h0M191.9 629.1h0M192.2 629.0h0M192.4 626.8h0M192.7 629.6h0M193.0 629.0h0M193.2 628.0h0M193.5 628.5h0M193.8 628.2h0M194.0 627.6h0M194.3 628.2h0M194.6 628.6h0M194.8 629.0h0M195.1 627.9h0M195.4 627.4h0M195.6 627.5h0M195.9 626.7h0M196.2 627.8h0M196.4 627.2h0M196.7 628.0h0M197.0 628.7h0M197.2 626.7h0M197.5 627.4h0M197.8 626.5h0M198.0 627.4h0M198.3 628.0h0M198.6 627.4h0M198.8 626.9h0M199.1 627.1h0M199.4 626.7h0M199.6 626.0h0M199.9 626.3h0M200.2 625.9h0M200.4 626.2h0M200.7 626.6h0M201.0 626.7h0M201.2 627.5h0M201.5 625.3h0M201.8 624.8h0M202.0 626.3h0M202.3 626.2h0M202.6 626.0h0M202.8 625.0h0M203.1 625.1h0M203.4 625.3h0M203.6 625.0h0M203.9 626.2h0M204.2 624.9h0M204.4 624.9h0M204.7 624.3h0M205.0 625.1h0M205.2 624.9h0M205.5 624.2h0M205.8 622.2h0M206.0 624.6h0M206.3 622.5h0M206.6 624.7h0M206.8 623.8h0M207.1 624.5h0M207.4 622.6h0M207.6 623.5h0M207.9 623.3h0M208.2 622.6h0M208.4 622.3h0M208.7 623.7h0M209.0 622.9h0M209.2 623.4h0M209.5 622.0h0M209.8 624.5h0M210.0 621.0h0M210.3 622.8h0M210.6 624.2h0M210.8 622.2h0M211.1 623.0h0M211.4 622.2h0M211.6 622.1h0M211.9 621.2h0M212.2 623.4h0M212.4 621.6h0M212.7 620.9h0M213.0 622.7h0M213.2 621.0h0M213.5 620.8h0M213.7 621.8h0M214.0 622.9h0M214.3 621.1h0M214.5 621.5h0M214.8 619.8h0M215.1 621.1h0M215.3 620.3h0M215.6 620.5h0M215.9 620.5h0M216.1 621.6h0M216.4 621.1h0M216.7 620.3h0M216.9 620.3h0M217.2 620.3h0M217.5 619.5h0M217.7 620.0h0M218.0 619.3h0M218.3 619.7h0M218.5 619.4h0M218.8 620.1h0M219.1 620.8h0M219.3 618.7h0M219.6 618.6h0M219.9 618.7h0M220.1 619.8h0M220.4 618.1h0M220.7 618.9h0M220.9 618.7h0M221.2 619.3h0M221.5 619.1h0M221.7 619.1h0M222.0 618.2h0M222.3 619.0h0M222.5 618.3h0M222.8 618.7h0M223.1 619.2h0M223.3 618.0h0M223.6 617.8h0M223.9 617.8h0M224.1 620.2h0M224.4 616.8h0M224.7 617.6h0M224.9 618.3h0M225.2 615.7h0M225.5 617.2h0M225.7 616.5h0M226.0 617.0h0M226.3 619.0h0M226.5 615.9h0M226.8 617.8h0M227.1 615.8h0M227.3 616.7h0M227.6 617.2h0M227.9 618.5h0M228.1 616.7h0M228.4 617.1h0M228.7 616.1h0M228.9 617.0h0M229.2 615.3h0M229.5 616.3h0M229.7 616.1h0M230.0 613.9h0M230.3 614.9h0M230.5 616.0h0M230.8 615.1h0M231.1 616.7h0M231.3 615.8h0M231.6 615.2h0M231.9 615.6h0M232.1 615.8h0M232.4 614.3h0M232.7 615.2h0M232.9 615.3h0M233.2 615.1h0M233.5 615.0h0M233.7 613.7h0M234.0 614.0h0M234.3 615.5h0M234.5 612.9h0M234.8 613.0h0M235.1 614.1h0M235.3 614.6h0M235.6 613.7h0M235.9 614.1h0M236.1 613.0h0M236.4 613.4h0M236.7 612.2h0M236.9 614.6h0M237.2 613.7h0M237.5 612.8h0M237.7 613.4h0M238.0 613.2h0M238.3 613.8h0M238.5 611.0h0M238.8 612.7h0M239.1 611.8h0M239.3 613.1h0M239.6 612.7h0M239.9 612.2h0M240.1 610.6h0M240.4 610.8h0M240.6 610.1h0M240.9 610.6h0M241.2 610.5h0M241.4 612.0h0M241.7 612.4h0M242.0 610.5h0M242.2 612.3h0M242.5 611.1h0M242.8 612.0h0M243.0 612.4h0M243.3 611.3h0M243.6 612.1h0M243.8 611.5h0M244.1 610.4h0M244.4 611.3h0M244.6 610.2h0M244.9 611.4h0M245.2 610.7h0M245.4 611.8h0M245.7 609.7h0M246.0 612.6h0M246.2 610.5h0M246.5 610.2h0M246.8 613.0h0M247.0 612.0h0M247.3 611.9h0M247.6 610.5h0M247.8 610.6h0M248.1 610.7h0M248.4 609.7h0M248.6 608.2h0M248.9 611.1h0M249.2 609.8h0M249.4 610.0h0M249.7 609.0h0M250.0 611.9h0M250.2 611.3h0M250.5 610.8h0M250.8 610.7h0M251.0 609.5h0M251.3 610.1h0M251.6 611.4h0M251.8 610.2h0M252.1 610.9h0M252.4 610.1h0M252.6 609.5h0M252.9 610.0h0M253.2 608.1h0M253.4 607.1h0M253.7 608.7h0M254.0 610.5h0M254.2 607.7h0M254.5 607.0h0M254.8 609.1h0M255.0 608.5h0M255.3 607.8h0M255.6 608.5h0M255.8 607.5h0M256.1 608.1h0M256.4 609.1h0M256.6 608.9h0M256.9 608.7h0M257.2 609.0h0M257.4 607.1h0M257.7 608.0h0M258.0 608.4h0M258.2 607.4h0M258.5 608.0h0M258.8 607.1h0M259.0 606.5h0M259.3 607.8h0M259.6 608.4h0M259.8 608.9h0M260.1 606.1h0M260.4 607.3h0M260.6 608.2h0M260.9 607.7h0M261.2 608.6h0M261.4 606.2h0M261.7 607.1h0M262.0 607.7h0M262.2 608.7h0M262.5 605.3h0M262.8 607.1h0M263.0 609.2h0M263.3 607.6h0M263.6 607.0h0M263.8 606.8h0M264.1 607.9h0M264.4 605.7h0M264.6 606.2h0M264.9 606.7h0M265.2 607.3h0M265.4 608.3h0M265.7 607.0h0M266.0 606.7h0M266.2 607.5h0M266.5 606.1h0M266.8 605.6h0M267.0 606.7h0M267.3 606.6h0M267.5 606.1h0M267.8 604.5h0M268.1 604.7h0M268.3 607.5h0M268.6 606.4h0M268.9 603.4h0M269.1 606.1h0M269.4 604.1h0M269.7 605.2h0M269.9 604.4h0M270.2 605.9h0M270.5 605.4h0M270.7 604.9h0M271.0 605.4h0M271.3 605.4h0M271.5 603.9h0M271.8 605.3h0M272.1 603.9h0M272.3 605.6h0M272.6 605.3h0M272.9 604.3h0M273.1 604.4h0M273.4 603.9h0M273.7 604.7h0M273.9 604.8h0M274.2 605.1h0M274.5 606.1h0M274.7 604.9h0M275.0 603.5h0M275.3 604.5h0M275.5 604.2h0M275.8 603.1h0M276.1 605.1h0M276.3 603.9h0M276.6 604.7h0M276.9 603.0h0M277.1 605.4h0M277.4 604.3h0M277.7 604.4h0M277.9 604.2h0M278.2 604.3h0M278.5 601.9h0M278.7 603.9h0M279.0 603.8h0M279.3 605.0h0M279.5 604.8h0M279.8 604.2h0M280.1 604.6h0M280.3 602.9h0M280.6 603.9h0M280.9 603.7h0M281.1 603.4h0M281.4 604.1h0M281.7 604.4h0M281.9 603.8h0M282.2 602.9h0M282.5 603.2h0M282.7 603.9h0M283.0 601.5h0M283.3 602.6h0M283.5 602.3h0M283.8 601.4h0M284.1 603.8h0M284.3 601.9h0M284.6 602.6h0M284.9 602.5h0M285.1 604.2h0M285.4 603.5h0M285.7 602.7h0M285.9 602.7h0M286.2 601.1h0M286.5 603.0h0M286.7 602.3h0M287.0 602.8h0M287.3 603.8h0M287.5 602.8h0M287.8 602.3h0M288.1 600.7h0M288.3 601.2h0M288.6 602.9h0M288.9 603.2h0M289.1 602.3h0M289.4 602.8h0M289.7 599.8h0M289.9 601.3h0M290.2 602.2h0M290.5 602.6h0M290.7 603.1h0M291.0 602.1h0M291.3 604.5h0M291.5 602.4h0M291.8 602.4h0M292.1 600.4h0M292.3 603.6h0M292.6 600.9h0M292.9 602.1h0M293.1 601.0h0M293.4 602.5h0M293.6 601.3h0M293.9 600.8h0M294.2 599.1h0M294.4 602.4h0M294.7 601.7h0M295.0 601.6h0M295.2 602.1h0M295.5 601.6h0M295.8 601.4h0M296.0 601.8h0M296.3 603.1h0M296.6 601.1h0M296.8 602.8h0M297.1 601.4h0M297.4 600.2h0M297.6 602.5h0M297.9 601.3h0M298.2 601.0h0M298.4 601.2h0M298.7 601.6h0M299.0 601.0h0M299.2 600.3h0M299.5 602.0h0M299.8 601.1h0M300.0 600.2h0M300.3 601.5h0M300.6 602.1h0M300.8 600.1h0M301.1 600.1h0M301.4 599.8h0M301.6 600.7h0M301.9 601.3h0M302.2 599.1h0M302.4 599.4h0M302.7 599.8h0M303.0 601.1h0M303.2 600.4h0M303.5 601.4h0M303.8 601.5h0M304.0 600.3h0M304.3 600.1h0M304.6 599.8h0M304.8 600.2h0M305.1 598.2h0M305.4 601.3h0M305.6 598.9h0M305.9 600.6h0M306.2 599.2h0M306.4 601.1h0M306.7 597.9h0M307.0 598.6h0M307.2 601.7h0M307.5 598.7h0M307.8 599.8h0M308.0 599.0h0M308.3 599.9h0M308.6 600.0h0M308.8 601.2h0M309.1 600.3h0M309.4 599.8h0M309.6 601.4h0M309.9 600.7h0M310.2 599.6h0M310.4 599.2h0M310.7 600.1h0M311.0 598.1h0M311.2 600.0h0M311.5 598.9h0M311.8 598.1h0M312.0 600.2h0M312.3 598.2h0M312.6 599.5h0M312.8 600.2h0M313.1 597.6h0M313.4 597.6h0M313.6 599.5h0M313.9 598.1h0M314.2 598.1h0M314.4 599.1h0M314.7 596.8h0M315.0 599.2h0M315.2 599.7h0M315.5 598.9h0M315.8 599.1h0M316.0 599.4h0M316.3 599.2h0M316.6 600.2h0M316.8 598.2h0M317.1 600.2h0M317.4 597.6h0M317.6 598.0h0M317.9 599.1h0M318.2 599.0h0M318.4 599.3h0M318.7 598.6h0M319.0 596.7h0M319.2 598.2h0M319.5 598.9h0M319.8 596.6h0M320.0 598.8h0M320.3 598.7h0M320.5 596.1h0M320.8 597.6h0M321.1 597.0h0M321.3 597.6h0M321.6 597.6h0M321.9 597.5h0M322.1 597.3h0M322.4 595.8h0M322.7 599.3h0M322.9 600.5h0M323.2 598.3h0M323.5 599.5h0M323.7 597.8h0M324.0 599.2h0M324.3 597.8h0M324.5 596.7h0M324.8 598.4h0M325.1 598.6h0M325.3 596.9h0M325.6 598.5h0M325.9 597.8h0M326.1 597.8h0M326.4 599.0h0M326.7 596.6h0M326.9 598.7h0M327.2 596.6h0M327.5 597.1h0M327.7 598.6h0M328.0 597.8h0M328.3 596.5h0M328.5 597.7h0M328.8 595.0h0M329.1 598.4h0M329.3 596.0h0M329.6 599.0h0M329.9 597.5h0M330.1 596.1h0M330.4 599.2h0M330.7 596.8h0M330.9 598.3h0M331.2 598.5h0M331.5 597.8h0M331.7 597.6h0M332.0 597.5h0M332.3 597.6h0M332.5 597.8h0M332.8 599.7h0M333.1 595.4h0M333.3 594.5h0M333.6 596.3h0M333.9 597.0h0M334.1 597.8h0M334.4 596.4h0M334.7 596.3h0M334.9 597.6h0M335.2 596.8h0M335.5 595.7h0M335.7 596.2h0M336.0 596.5h0M336.3 596.3h0M336.5 597.2h0M336.8 596.4h0M337.1 596.3h0M337.3 597.1h0M337.6 596.4h0M337.9 595.2h0M338.1 595.1h0M338.4 598.6h0M338.7 597.7h0M338.9 595.0h0M339.2 595.6h0M339.5 595.6h0M339.7 597.5h0M340.0 595.9h0M340.3 595.3h0M340.5 595.4h0M340.8 596.7h0M341.1 596.5h0M341.3 595.5h0M341.6 595.6h0M341.9 594.3h0M342.1 598.2h0M342.4 596.3h0M342.7 594.3h0M342.9 596.9h0M343.2 595.5h0M343.5 594.0h0M343.7 596.6h0M344.0 595.1h0M344.3 593.3h0M344.5 596.8h0M344.8 597.6h0M345.1 594.2h0M345.3 595.9h0M345.6 595.4h0M345.9 595.2h0M346.1 593.9h0M346.4 595.5h0M346.6 594.1h0M346.9 594.3h0M347.2 595.1h0M347.4 593.9h0M347.7 594.7h0M348.0 595.1h0M348.2 591.6h0M348.5 597.2h0M348.8 596.2h0M349.0 596.0h0M349.3 595.3h0M349.6 594.6h0M349.8 595.0h0M350.1 592.2h0M350.4 595.3h0M350.6 595.9h0M350.9 594.6h0M351.2 595.1h0M351.4 595.1h0M351.7 593.5h0M352.0 594.2h0M352.2 593.2h0M352.5 595.7h0M352.8 593.7h0M353.0 594.4h0M353.3 595.1h0M353.6 596.1h0M353.8 594.4h0M354.1 595.6h0M354.4 593.4h0M354.6 593.7h0M354.9 593.6h0M355.2 591.0h0M355.4 592.7h0M355.7 596.4h0M356.0 593.4h0M356.2 593.8h0M356.5 593.7h0M356.8 594.5h0M357.0 592.9h0M357.3 597.1h0M357.6 595.4h0M357.8 593.1h0M358.1 593.6h0M358.4 592.7h0M358.6 594.2h0M358.9 594.3h0M359.2 592.8h0M359.4 593.4h0M359.7 595.6h0M360.0 592.5h0M360.2 594.8h0M360.5 592.5h0M360.8 593.3h0M361.0 592.8h0M361.3 592.3h0M361.6 594.6h0M361.8 592.6h0M362.1 593.4h0M362.4 593.6h0M362.6 593.3h0M362.9 593.9h0M363.2 593.2h0M363.4 593.0h0M363.7 594.0h0M364.0 591.9h0M364.2 593.1h0M364.5 594.4h0M364.8 592.6h0M365.0 592.5h0M365.3 594.7h0M365.6 592.7h0M365.8 593.5h0M366.1 592.7h0M366.4 593.2h0M366.6 592.5h0M366.9 592.7h0M367.2 595.6h0M367.4 592.8h0M367.7 592.2h0M368.0 592.0h0M368.2 591.3h0M368.5 592.4h0M368.8 591.2h0M369.0 591.7h0M369.3 593.3h0M369.6 593.5h0M369.8 591.1h0M370.1 591.8h0M370.4 594.7h0M370.6 593.8h0M370.9 591.2h0M371.2 592.3h0M371.4 594.5h0M371.7 592.0h0M372.0 591.3h0M372.2 591.7h0M372.5 592.5h0M372.8 592.6h0M373.0 593.0h0M373.3 592.9h0M373.5 592.0h0M373.8 589.3h0M374.1 589.2h0M374.3 592.4h0M374.6 594.0h0M374.9 592.3h0M375.1 592.5h0M375.4 592.4h0M375.7 594.1h0M375.9 592.2h0M376.2 592.8h0M376.5 592.0h0M376.7 593.9h0M377.0 591.9h0M377.3 593.4h0M377.5 592.9h0M377.8 592.7h0M378.1 592.6h0M378.3 592.5h0M378.6 592.5h0M378.9 592.6h0M379.1 592.6h0M379.4 592.5h0M379.7 592.2h0M379.9 589.5h0M380.2 590.6h0M380.5 592.4h0M380.7 593.3h0M381.0 590.3h0M381.3 591.6h0M381.5 591.2h0M381.8 590.2h0M382.1 593.8h0M382.3 592.2h0M382.6 591.3h0M382.9 589.8h0M383.1 591.5h0M383.4 591.3h0M383.7 591.4h0M383.9 591.4h0M384.2 591.1h0M384.5 592.0h0M384.7 592.1h0M385.0 591.7h0M385.3 590.5h0M385.5 589.8h0M385.8 591.0h0M386.1 591.5h0M386.3 589.6h0M386.6 590.4h0M386.9 590.2h0M387.1 591.2h0M387.4 591.5h0M387.7 590.4h0M387.9 591.2h0M388.2 589.5h0M388.5 592.0h0M388.7 590.5h0M389.0 590.9h0M389.3 592.1h0M389.5 591.3h0M389.8 592.1h0M390.1 591.2h0M390.3 591.1h0M390.6 587.5h0M390.9 592.0h0M391.1 589.9h0M391.4 591.2h0M391.7 590.2h0M391.9 591.0h0M392.2 591.6h0M392.5 588.8h0M392.7 589.2h0M393.0 592.7h0M393.3 590.7h0M393.5 590.9h0M393.8 592.4h0M394.1 590.2h0M394.3 589.8h0M394.6 590.3h0M394.9 589.8h0M395.1 588.1h0M395.4 590.9h0M395.7 588.7h0M395.9 587.6h0M396.2 593.8h0M396.5 590.5h0M396.7 588.5h0M397.0 589.7h0M397.3 590.9h0M397.5 588.3h0M397.8 589.0h0M398.1 592.0h0M398.3 589.0h0M398.6 590.2h0M398.9 589.7h0M399.1 591.4h0M399.4 589.2h0M399.7 589.7h0M399.9 591.0h0M400.2 590.3h0M400.4 588.0h0M400.7 587.9h0M401.0 591.6h0M401.2 589.1h0M401.5 590.1h0M401.8 590.3h0M402.0 589.4h0M402.3 587.7h0M402.6 588.9h0M402.8 590.8h0M403.1 589.5h0M403.4 589.0h0M403.6 588.1h0M403.9 589.6h0M404.2 589.3h0M404.4 589.1h0M404.7 588.6h0M405.0 591.8h0M405.2 587.6h0M405.5 588.9h0M405.8 589.3h0M406.0 590.7h0M406.3 588.9h0M406.6 586.8h0M406.8 590.0h0M407.1 591.3h0M407.4 588.6h0M407.6 589.1h0M407.9 589.2h0M408.2 591.0h0M408.4 588.5h0M408.7 588.2h0M409.0 594.5h0M409.2 588.8h0M409.5 588.0h0M409.8 590.1h0M410.0 591.6h0M410.3 588.8h0M410.6 586.2h0M410.8 588.4h0M411.1 586.0h0M411.4 588.4h0M411.6 589.1h0M411.9 589.7h0M412.2 586.9h0M412.4 590.4h0M412.7 589.5h0M413.0 589.2h0M413.2 588.3h0M413.5 588.5h0M413.8 590.5h0M414.0 590.1h0M414.3 586.3h0M414.6 588.4h0M414.8 588.5h0M415.1 588.9h0M415.4 588.1h0M415.6 589.4h0M415.9 586.9h0M416.2 587.3h0M416.4 588.3h0M416.7 587.1h0M417.0 588.5h0M417.2 588.8h0M417.5 587.0h0M417.8 588.3h0M418.0 589.2h0M418.3 586.1h0M418.6 588.4h0M418.8 587.5h0M419.1 586.1h0M419.4 589.7h0M419.6 588.4h0M419.9 586.8h0M420.2 588.4h0M420.4 588.5h0M420.7 588.1h0M421.0 588.3h0M421.2 588.3h0M421.5 587.3h0M421.8 587.7h0M422.0 585.6h0M422.3 587.4h0M422.6 585.6h0M422.8 587.6h0M423.1 585.4h0M423.4 587.9h0M423.6 586.1h0M423.9 587.4h0M424.2 585.5h0M424.4 588.6h0M424.7 588.2h0M425.0 587.0h0M425.2 588.8h0M425.5 585.6h0M425.8 587.7h0M426.0 586.7h0M426.3 586.1h0M426.6 586.6h0M426.8 588.3h0M427.1 589.1h0M427.3 589.5h0M427.6 588.5h0M427.9 588.2h0M428.1 588.3h0M428.4 586.6h0M428.7 589.0h0M428.9 589.3h0M429.2 586.9h0M429.5 584.8h0M429.7 588.3h0M430.0 587.2h0M430.3 587.1h0M430.5 585.6h0M430.8 585.9h0M431.1 587.6h0M431.3 585.7h0M431.6 586.8h0M431.9 585.8h0M432.1 584.5h0M432.4 589.7h0M432.7 588.7h0M432.9 588.6h0M433.2 588.4h0M433.5 586.6h0M433.7 586.6h0M434.0 584.4h0M434.3 584.8h0M434.5 586.3h0M434.8 586.8h0M435.1 585.7h0M435.3 586.0h0M435.6 587.2h0M435.9 585.6h0M436.1 587.2h0M436.4 586.6h0M436.7 586.7h0M436.9 587.2h0M437.2 587.3h0M437.5 586.3h0M437.7 586.5h0M438.0 588.0h0M438.3 584.1h0M438.5 584.0h0M438.8 584.1h0M439.1 584.7h0M439.3 586.4h0M439.6 587.5h0M439.9 587.6h0M440.1 588.5h0M440.4 586.6h0M440.7 588.4h0M440.9 586.0h0M441.2 585.7h0M441.5 586.8h0M441.7 586.8h0M442.0 586.1h0M442.3 585.2h0M442.5 586.4h0M442.8 583.7h0M443.1 587.1h0M443.3 586.7h0M443.6 586.5h0M443.9 586.1h0M444.1 585.5h0M444.4 585.1h0M444.7 586.2h0M444.9 583.6h0M445.2 588.2h0M445.5 585.3h0M445.7 585.6h0M446.0 587.5h0M446.3 587.6h0M446.5 585.5h0M446.8 584.1h0M447.1 585.0h0M447.3 585.7h0M447.6 585.9h0M447.9 586.2h0M448.1 586.0h0M448.4 584.6h0M448.7 584.0h0M448.9 584.7h0M449.2 586.3h0M449.5 584.6h0M449.7 584.0h0M450.0 587.8h0M450.3 584.9h0M450.5 586.0h0M450.8 585.1h0M451.1 586.9h0M451.3 586.6h0M451.6 585.3h0M451.9 585.9h0M452.1 585.8h0M452.4 586.3h0M452.7 584.5h0M452.9 583.6h0M453.2 586.3h0M453.4 584.7h0M453.7 585.6h0M454.0 584.6h0M454.2 583.4h0M454.5 584.6h0M454.8 585.1h0M455.0 586.3h0M455.3 583.3h0M455.6 582.6h0M455.8 587.4h0M456.1 584.0h0M456.4 585.0h0M456.6 586.4h0M456.9 582.4h0M457.2 584.0h0M457.4 581.8h0M457.7 585.7h0M458.0 585.2h0M458.2 586.6h0M458.5 584.5h0M458.8 586.8h0M459.0 584.9h0M459.3 582.9h0M459.6 583.7h0M459.8 583.1h0M460.1 584.2h0M460.4 583.3h0M460.6 584.5h0M460.9 586.1h0M461.2 583.7h0M461.4 584.4h0M461.7 585.3h0M462.0 585.7h0M462.2 582.6h0M462.5 586.4h0M462.8 585.3h0M463.0 583.7h0M463.3 583.3h0M463.6 583.8h0M463.8 586.1h0M464.1 582.6h0M464.4 584.2h0M464.6 586.0h0M464.9 582.5h0M465.2 584.1h0M465.4 586.4h0M465.7 587.5h0M466.0 584.1h0M466.2 584.7h0M466.5 583.5h0M466.8 583.6h0M467.0 584.9h0M467.3 583.2h0M467.6 583.5h0M467.8 585.2h0M468.1 582.7h0M468.4 583.5h0M468.6 584.0h0M468.9 583.3h0M469.2 584.9h0M469.4 584.8h0M469.7 583.9h0M470.0 585.0h0M470.2 581.6h0M470.5 583.4h0M470.8 582.7h0M471.0 581.2h0M471.3 581.7h0M471.6 580.8h0M471.8 584.8h0M472.1 581.4h0M472.4 584.2h0M472.6 583.9h0M472.9 583.3h0M473.2 583.5h0M473.4 583.6h0M473.7 583.1h0M474.0 581.5h0M474.2 586.5h0M474.5 585.5h0M474.8 585.3h0M475.0 583.1h0M475.3 583.3h0M475.6 583.0h0M475.8 580.9h0M476.1 583.4h0M476.4 585.4h0M476.6 582.9h0M476.9 580.9h0M477.2 580.7h0M477.4 583.5h0M477.7 583.2h0M478.0 582.9h0M478.2 582.6h0M478.5 583.6h0M478.8 584.0h0M479.0 581.2h0M479.3 581.2h0M479.6 583.3h0M479.8 584.1h0M480.1 584.2h0M480.3 584.9h0M480.6 585.0h0M480.9 583.7h0M481.1 584.3h0M481.4 582.9h0M481.7 584.0h0M481.9 584.5h0M482.2 583.8h0M482.5 586.7h0M482.7 582.7h0M483.0 583.6h0M483.3 581.3h0M483.5 583.8h0M483.8 583.4h0M484.1 584.5h0M484.3 580.3h0M484.6 582.8h0M484.9 581.5h0M485.1 583.6h0M485.4 582.4h0M485.7 584.5h0M485.9 584.0h0M486.2 583.6h0M486.5 584.4h0M486.7 582.1h0M487.0 582.0h0M487.3 581.5h0M487.5 584.4h0M487.8 583.9h0M488.1 583.1h0M488.3 582.2h0M488.6 584.8h0M488.9 583.4h0M489.1 581.6h0M489.4 582.9h0M489.7 583.2h0M489.9 584.6h0M490.2 583.5h0M490.5 582.1h0M490.7 581.6h0M491.0 585.3h0M491.3 582.5h0M491.5 583.5h0M491.8 584.3h0M492.1 580.5h0M492.3 582.1h0M492.6 584.5h0M492.9 584.4h0M493.1 582.7h0M493.4 585.0h0M493.7 583.2h0M493.9 582.3h0M494.2 584.7h0M494.5 582.7h0M494.7 582.3h0M495.0 583.8h0M495.3 582.4h0M495.5 582.0h0M495.8 582.3h0M496.1 583.8h0M496.3 581.7h0M496.6 583.3h0M496.9 582.6h0M497.1 582.8h0M497.4 582.8h0M497.7 585.6h0M497.9 581.4h0M498.2 582.2h0M498.5 582.6h0M498.7 582.0h0M499.0 583.4h0M499.3 583.0h0M499.5 582.1h0M499.8 585.7h0M500.1 583.8h0M500.3 583.6h0M500.6 583.2h0M500.9 583.5h0M501.1 583.8h0M501.4 582.4h0M501.7 581.6h0M501.9 582.1h0M502.2 581.3h0M502.5 582.0h0M502.7 580.6h0M503.0 580.5h0M503.3 583.3h0M503.5 583.8h0M503.8 583.5h0M504.1 583.1h0M504.3 581.6h0M504.6 581.9h0M504.9 582.3h0M505.1 583.5h0M505.4 583.2h0M505.7 582.8h0M505.9 582.3h0M506.2 586.7h0M506.4 582.2h0M506.7 581.9h0M507.0 583.5h0M507.2 580.6h0M507.5 581.5h0M507.8 581.5h0M508.0 584.7h0M508.3 581.4h0M508.6 582.3h0M508.8 582.2h0M509.1 585.6h0M509.4 584.6h0M509.6 582.9h0M509.9 584.3h0M510.2 580.6h0M510.4 584.0h0M510.7 581.4h0M511.0 581.9h0M511.2 578.5h0M511.5 582.3h0M511.8 580.3h0M512.0 583.0h0M512.3 583.9h0M512.6 581.9h0M512.8 580.6h0M513.1 583.1h0M513.4 580.9h0M513.6 581.5h0M513.9 582.3h0M514.2 582.0h0M514.4 582.1h0M514.7 583.1h0M515.0 582.0h0M515.2 581.7h0M515.5 583.2h0M515.8 585.8h0M516.0 581.3h0M516.3 583.1h0M516.6 581.4h0M516.8 583.4h0M517.1 581.6h0M517.4 582.5h0M517.6 582.6h0M517.9 582.2h0M518.2 581.7h0M518.4 584.6h0M518.7 580.4h0M519.0 580.7h0M519.2 581.7h0M519.5 584.4h0M519.8 580.9h0M520.0 582.1h0M520.3 579.8h0M520.6 582.7h0M520.8 582.3h0M521.1 580.7h0M521.4 585.0h0M521.6 582.6h0M521.9 582.3h0M522.2 585.2h0M522.4 583.3h0M522.7 581.7h0M523.0 581.5h0M523.2 579.7h0M523.5 580.7h0M523.8 583.8h0M524.0 580.9h0M524.3 581.4h0M524.6 581.8h0M524.8 583.5h0M525.1 579.3h0M525.4 579.5h0M525.6 581.5h0M525.9 583.0h0M526.2 583.4h0M526.4 583.4h0M526.7 580.6h0M527.0 584.2h0M527.2 580.3h0M527.5 582.1h0M527.8 581.3h0M528.0 580.8h0M528.3 578.5h0M528.6 580.8h0M528.8 582.0h0M529.1 581.2h0M529.4 581.6h0M529.6 581.7h0M529.9 581.6h0M530.2 583.1h0M530.4 581.3h0M530.7 583.6h0M531.0 580.1h0M531.2 582.2h0M531.5 583.3h0M531.8 580.8h0M532.0 580.7h0M532.3 581.5h0M532.6 583.7h0M532.8 583.4h0M533.1 580.9h0M533.3 578.5h0M533.6 581.3h0M533.9 581.2h0M534.1 580.8h0M534.4 582.8h0M534.7 580.0h0M534.9 582.4h0M535.2 581.5h0M535.5 582.7h0M535.7 583.2h0M536.0 582.6h0M536.3 582.8h0M536.5 582.1h0M536.8 579.4h0M537.1 581.1h0M537.3 582.3h0M537.6 580.9h0M537.9 582.3h0M538.1 579.9h0M538.4 580.3h0M538.7 581.9h0M538.9 581.5h0M539.2 581.3h0M539.5 582.8h0M539.7 583.0h0M540.0 581.6h0M540.3 582.6h0M540.5 581.4h0M540.8 580.2h0M541.1 581.7h0M541.3 580.5h0M541.6 578.9h0M541.9 581.9h0M542.1 579.3h0M542.4 582.4h0M542.7 582.9h0M542.9 581.0h0M543.2 581.5h0M543.5 583.3h0M543.7 579.5h0M544.0 580.1h0M544.3 582.6h0M544.5 581.5h0M544.8 581.3h0M545.1 582.9h0M545.3 580.7h0M545.6 583.1h0M545.9 583.6h0M546.1 579.2h0M546.4 582.0h0M546.7 582.2h0M546.9 581.5h0M547.2 582.1h0M547.5 578.2h0M547.7 580.5h0M548.0 580.0h0M548.3 579.9h0M548.5 578.1h0M548.8 584.2h0M549.1 580.0h0M549.3 580.8h0M549.6 580.9h0M549.9 579.4h0M550.1 580.2h0M550.4 583.4h0M550.7 580.7h0M550.9 581.2h0M551.2 579.5h0M551.5 583.9h0M551.7 580.1h0M552.0 580.8h0M552.3 580.1h0M552.5 580.4h0M552.8 583.8h0M553.1 580.0h0M553.3 581.0h0M553.6 582.0h0M553.9 579.6h0M554.1 581.0h0M554.4 578.6h0M554.7 579.4h0M554.9 582.4h0M555.2 579.8h0M555.5 580.9h0M555.7 580.9h0M556.0 581.1h0M556.3 579.4h0M556.5 581.9h0M556.8 580.2h0M557.1 583.0h0M557.3 580.4h0M557.6 582.6h0M557.9 582.6h0M558.1 580.8h0M558.4 582.3h0M558.7 579.2h0M558.9 582.3h0M559.2 578.5h0M559.5 579.6h0M559.7 580.6h0M560.0 579.8h0M560.2 580.4h0M560.5 577.4h0M560.8 580.0h0M561.0 581.5h0M561.3 580.1h0M561.6 581.1h0M561.8 580.8h0M562.1 581.5h0M562.4 581.4h0M562.6 579.5h0M562.9 580.7h0M563.2 579.5h0M563.4 581.0h0M563.7 580.7h0M564.0 581.2h0M564.2 578.8h0M564.5 578.3h0M564.8 580.7h0M565.0 579.3h0M565.3 582.5h0M565.6 582.3h0M565.8 579.5h0M566.1 582.9h0M566.4 576.6h0M566.6 579.1h0M566.9 578.1h0M567.2 580.6h0M567.4 582.3h0M567.7 581.7h0M568.0 581.7h0M568.2 579.3h0M568.5 581.9h0M568.8 581.5h0M569.0 578.2h0M569.3 582.1h0M569.6 581.3h0M569.8 578.5h0M570.1 576.9h0M570.4 582.7h0M570.6 583.7h0M570.9 581.3h0M571.2 580.0h0M571.4 580.4h0M571.7 581.1h0M572.0 582.1h0M572.2 579.1h0M572.5 581.0h0M572.8 581.2h0M573.0 580.2h0M573.3 578.2h0M573.6 580.0h0M573.8 576.6h0M574.1 580.7h0M574.4 579.4h0M574.6 583.2h0M574.9 581.1h0M575.2 580.2h0M575.4 581.2h0M575.7 581.3h0M576.0 580.9h0M576.2 581.5h0M576.5 580.9h0M576.8 580.0h0M577.0 579.6h0M577.3 581.6h0M577.6 580.4h0M577.8 581.2h0M578.1 578.8h0M578.4 577.6h0M578.6 579.8h0M578.9 579.5h0M579.2 580.4h0M579.4 579.3h0M579.7 580.3h0M580.0 581.8h0M580.2 578.3h0M580.5 576.8h0M580.8 579.1h0M581.0 580.0h0M581.3 579.3h0M581.6 577.6h0M581.8 580.6h0M582.1 578.9h0M582.4 579.7h0M582.6 583.0h0M582.9 580.4h0M583.2 579.1h0M583.4 579.4h0M583.7 580.0h0M584.0 581.6h0M584.2 579.5h0M584.5 579.6h0M584.8 579.1h0M585.0 577.3h0M585.3 579.8h0M585.6 578.3h0M585.8 579.1h0M586.1 575.9h0M586.4 579.1h0M586.6 576.0h0M586.9 581.2h0M587.1 581.5h0M587.4 579.1h0M587.7 579.9h0M587.9 577.9h0M588.2 578.6h0M588.5 578.5h0M588.7 580.8h0M589.0 579.7h0M589.3 578.5h0M589.5 580.4h0M589.8 579.6h0M590.1 577.9h0M590.3 579.7h0M590.6 579.3h0M590.9 577.9h0M591.1 578.9h0M591.4 581.6h0M591.7 579.4h0M591.9 579.5h0M592.2 579.1h0M592.5 576.3h0M592.7 577.9h0M593.0 579.3h0M593.3 580.4h0M593.5 578.3h0M593.8 579.2h0M594.1 577.6h0M594.3 579.0h0M594.6 578.0h0M594.9 580.6h0M595.1 579.7h0M595.4 579.4h0M595.7 580.6h0M595.9 578.9h0M596.2 579.9h0M596.5 579.9h0M596.7 580.4h0M597.0 579.5h0M597.3 581.7h0M597.5 578.1h0M597.8 578.8h0M598.1 578.5h0M598.3 577.6h0M598.6 578.9h0M598.9 579.7h0M599.1 577.4h0M599.4 579.9h0M599.7 579.1h0M599.9 582.4h0M600.2 580.1h0M600.5 579.3h0M600.7 578.4h0M601.0 578.6h0M601.3 577.9h0M601.5 580.1h0M601.8 580.1h0M602.1 579.0h0M602.3 580.4h0M602.6 579.9h0M602.9 579.2h0M603.1 582.1h0M603.4 581.6h0M603.7 578.7h0M603.9 580.3h0M604.2 578.3h0M604.5 580.0h0M604.7 580.8h0M605.0 578.5h0M605.3 579.7h0M605.5 578.8h0M605.8 580.3h0M606.1 580.5h0M606.3 579.8h0M606.6 580.4h0M606.9 579.6h0M607.1 580.8h0M607.4 578.8h0M607.7 578.2h0M607.9 578.7h0M608.2 581.1h0M608.5 577.6h0M608.7 581.8h0M609.0 579.0h0M609.3 579.2h0M609.5 578.3h0M609.8 580.3h0M610.1 580.0h0M610.3 577.7h0M610.6 577.7h0M610.9 580.8h0M611.1 579.7h0M611.4 580.4h0M611.7 583.0h0M611.9 577.7h0M612.2 580.2h0M612.5 579.2h0M612.7 579.0h0M613.0 581.1h0M613.2 578.0h0M613.5 580.3h0M613.8 581.4h0M614.0 578.8h0M614.3 579.1h0M614.6 580.1h0M614.8 579.4h0M615.1 576.9h0M615.4 578.3h0M615.6 579.3h0M615.9 579.8h0M616.2 576.7h0M616.4 579.9h0M616.7 582.0h0M617.0 577.6h0M617.2 580.0h0M617.5 582.4h0M617.8 581.3h0M618.0 581.2h0M618.3 582.4h0M618.6 580.3h0M618.8 580.1h0M619.1 577.0h0M619.4 579.4h0M619.6 580.1h0M619.9 579.5h0M620.2 579.0h0M620.4 577.9h0M620.7 577.4h0M621.0 582.0h0M621.2 581.3h0M621.5 579.3h0M621.8 576.5h0M622.0 580.0h0M622.3 577.7h0M622.6 580.0h0M622.8 580.0h0M623.1 579.6h0M623.4 577.3h0M623.6 579.9h0M623.9 579.1h0M624.2 578.8h0M624.4 577.9h0M624.7 579.1h0M625.0 578.0h0M625.2 576.8h0M625.5 578.1h0M625.8 579.7h0M626.0 579.4h0M626.3 578.8h0M626.6 579.6h0M626.8 580.8h0M627.1 580.5h0M627.4 580.0h0M627.6 582.0h0M627.9 575.1h0M628.2 578.0h0M628.4 580.0h0M628.7 580.2h0M629.0 577.5h0M629.2 581.2h0M629.5 580.6h0M629.8 577.7h0M630.0 579.3h0M630.3 578.1h0M630.6 579.0h0M630.8 579.2h0M631.1 580.1h0M631.4 578.5h0M631.6 578.8h0M631.9 578.8h0M632.2 579.8h0M632.4 577.5h0M632.7 579.1h0M633.0 578.3h0M633.2 580.8h0M633.5 581.5h0M633.8 578.1h0M634.0 580.1h0M634.3 580.3h0M634.6 578.6h0M634.8 577.3h0M635.1 579.5h0M635.4 579.6h0M635.6 578.5h0M635.9 578.4h0M636.2 579.0h0M636.4 581.7h0M636.7 578.0h0M637.0 580.2h0M637.2 576.2h0M637.5 580.1h0M637.8 578.8h0M638.0 579.2h0M638.3 578.8h0M638.6 575.6h0M638.8 579.5h0M639.1 577.7h0M639.4 579.1h0M639.6 579.6h0M639.9 578.0h0M640.1 578.6h0M640.4 579.4h0M640.7 580.5h0M640.9 578.5h0M641.2 574.3h0M641.5 579.3h0M641.7 578.2h0M642.0 579.9h0M642.3 574.2h0M642.5 581.1h0M642.8 579.9h0M643.1 581.7h0M643.3 578.1h0M643.6 578.9h0M643.9 578.5h0M644.1 579.1h0M644.4 576.9h0M644.7 577.1h0M644.9 577.4h0M645.2 582.9h0M645.5 580.4h0M645.7 578.9h0M646.0 577.8h0M646.3 582.9h0M646.5 576.8h0M646.8 578.6h0M647.1 576.8h0M647.3 580.7h0M647.6 580.1h0M647.9 580.5h0M648.1 579.9h0M648.4 580.1h0M648.7 581.5h0M648.9 577.2h0M649.2 578.3h0M649.5 580.2h0M649.7 582.0h0M650.0 577.4h0M650.3 582.3h0M650.5 580.6h0M650.8 580.8h0M651.1 580.1h0M651.3 578.4h0M651.6 577.8h0M651.9 578.6h0M652.1 580.7h0M652.4 577.2h0M652.7 577.3h0M652.9 577.9h0M653.2 575.7h0M653.5 580.5h0M653.7 580.1h0M654.0 580.1h0M654.3 579.9h0M654.5 578.1h0M654.8 578.7h0M655.1 579.6h0M655.3 577.4h0M655.6 579.1h0M655.9 579.8h0M656.1 579.9h0M656.4 580.9h0M656.7 579.4h0M656.9 580.3h0M657.2 579.2h0M657.5 578.5h0M657.7 578.4h0M658.0 579.7h0M658.3 576.3h0M658.5 580.7h0M658.8 578.0h0M659.1 579.0h0M659.3 578.6h0M659.6 580.0h0M659.9 580.1h0M660.1 578.1h0M660.4 581.5h0M660.7 578.8h0M660.9 581.1h0M661.2 581.6h0M661.5 578.9h0M661.7 579.8h0M662.0 576.2h0M662.3 581.5h0M662.5 578.8h0M662.8 578.9h0M663.1 578.8h0M663.3 579.7h0M663.6 581.3h0M663.9 578.0h0M664.1 577.9h0M664.4 578.4h0M664.7 578.6h0M664.9 577.3h0M665.2 577.6h0M665.5 578.0h0M665.7 579.9h0M666.0 577.5h0M666.2 580.2h0M666.5 578.4h0M666.8 580.4h0M667.0 579.2h0M667.3 577.8h0M667.6 579.4h0M667.8 577.6h0M668.1 579.6h0M668.4 576.6h0M668.6 579.2h0M668.9 575.3h0M669.2 577.9h0M669.4 579.0h0M669.7 580.5h0M670.0 579.5h0M670.2 576.1h0M670.5 580.7h0M670.8 581.2h0M671.0 578.5h0M671.3 577.2h0M671.6 579.5h0M671.8 580.2h0M672.1 579.2h0M672.4 579.2h0M672.6 577.3h0M672.9 576.3h0M673.2 579.1h0M673.4 580.1h0M673.7 580.6h0M674.0 581.4h0M674.2 579.0h0M674.5 581.1h0M674.8 577.9h0M675.0 579.2h0M675.3 579.9h0M675.6 576.9h0M675.8 581.4h0M676.1 577.6h0M676.4 578.8h0M676.6 578.5h0M676.9 578.9h0M677.2 580.5h0M677.4 578.0h0M677.7 577.2h0M678.0 581.8h0M678.2 578.8h0M678.5 579.1h0M678.8 579.3h0M679.0 578.3h0M679.3 579.2h0M679.6 579.5h0M679.8 577.2h0M680.1 580.3h0M680.4 579.5h0M680.6 579.5h0M680.9 580.0h0M681.2 579.6h0M681.4 576.9h0M681.7 580.1h0M682.0 575.3h0M682.2 581.1h0M682.5 582.3h0M682.8 579.9h0M683.0 580.7h0M683.3 577.1h0M683.6 578.2h0M683.8 580.4h0M684.1 579.2h0M684.4 579.3h0M684.6 575.1h0M684.9 578.7h0M685.2 578.5h0M685.4 578.1h0M685.7 578.6h0M686.0 578.9h0M686.2 580.1h0M686.5 578.7h0M686.8 578.6h0M687.0 580.8h0M687.3 578.8h0M687.6 580.7h0M687.8 581.3h0M688.1 579.0h0M688.4 578.1h0M688.6 577.5h0M688.9 579.7h0M689.2 581.0h0M689.4 580.1h0M689.7 579.2h0M690.0 579.0h0M690.2 578.2h0M690.5 579.1h0M690.8 577.3h0M691.0 579.8h0M691.3 578.2h0M691.6 577.9h0M691.8 578.3h0M692.1 578.1h0M692.4 580.4h0M692.6 577.6h0M692.9 579.6h0M693.1 579.1h0M693.4 580.3h0M693.7 578.3h0M693.9 579.5h0M694.2 579.8h0M694.5 577.8h0M694.7 579.9h0M695.0 578.3h0M695.3 578.6h0M695.5 578.1h0M695.8 578.7h0M696.1 580.5h0M696.3 578.6h0M696.6 578.3h0M696.9 576.1h0M697.1 576.1h0M697.4 577.5h0M697.7 577.4h0M697.9 582.4h0M698.2 579.5h0M698.5 580.3h0M698.7 577.9h0M699.0 578.0h0M699.3 578.0h0M699.5 577.9h0M699.8 578.2h0M700.1 578.9h0M700.3 579.6h0M700.6 577.7h0M700.9 578.7h0M701.1 577.2h0M701.4 579.4h0M701.7 579.1h0M701.9 579.9h0M702.2 577.8h0M702.5 579.9h0M702.7 582.1h0M703.0 579.9h0M703.3 579.7h0M703.5 578.7h0M703.8 579.2h0M704.1 576.9h0M704.3 578.3h0M704.6 577.3h0M704.9 576.7h0M705.1 577.2h0M705.4 577.4h0M705.7 579.4h0M705.9 578.1h0M706.2 578.8h0M706.5 577.6h0M706.7 579.5h0M707.0 577.7h0M707.3 579.4h0M707.5 577.6h0M707.8 576.9h0M708.1 576.9h0M708.3 579.3h0M708.6 576.8h0M708.9 581.1h0M709.1 578.4h0M709.4 580.7h0M709.7 578.6h0M709.9 580.4h0M710.2 578.7h0M710.5 579.7h0M710.7 576.8h0M711.0 575.6h0M711.3 577.4h0M711.5 577.2h0M711.8 578.0h0M712.1 578.8h0M712.3 578.9h0M712.6 580.3h0M712.9 579.7h0M713.1 577.5h0M713.4 579.2h0M713.7 578.1h0M713.9 579.9h0M714.2 575.3h0M714.5 576.7h0M714.7 578.7h0M715.0 575.9h0M715.3 577.9h0M715.5 577.0h0M715.8 578.8h0M716.1 579.2h0M716.3 576.5h0M716.6 577.5h0M716.9 577.4h0M717.1 577.1h0M717.4 578.4h0M717.7 579.2h0M717.9 578.0h0M718.2 581.1h0M718.5 578.4h0M718.7 576.9h0M719.0 578.9h0M719.3 575.9h0M719.5 579.0h0M719.8 580.0h0M720.0 577.7h0M720.3 578.8h0M720.6 577.7h0M720.8 579.5h0M721.1 577.7h0M721.4 578.4h0M721.6 578.2h0M721.9 577.2h0M722.2 579.6h0M722.4 578.8h0M722.7 576.9h0M723.0 576.8h0M723.2 577.5h0M723.5 580.1h0M723.8 578.2h0M724.0 579.1h0M724.3 579.0h0M724.6 580.7h0M724.8 581.5h0M725.1 577.1h0M725.4 577.4h0M725.6 580.6h0M725.9 579.0h0M726.2 578.4h0M726.4 579.3h0M726.7 577.8h0M727.0 579.1h0M727.2 580.5h0M727.5 579.1h0M727.8 577.9h0M728.0 579.8h0M728.3 577.4h0M728.6 577.0h0M728.8 577.6h0M729.1 577.7h0M729.4 578.6h0M729.6 577.7h0M729.9 579.5h0M730.2 581.8h0M730.4 579.5h0M730.7 576.4h0M731.0 577.0h0M731.2 580.0h0M731.5 578.8h0M731.8 579.5h0M732.0 580.2h0M732.3 579.0h0M732.6 577.4h0M732.8 578.4h0M733.1 578.8h0M733.4 581.6h0M733.6 575.4h0M733.9 580.1h0M734.2 578.5h0M734.4 577.3h0M734.7 578.2h0M735.0 577.3h0M735.2 581.8h0M735.5 579.7h0M735.8 579.4h0M736.0 580.4h0M736.3 580.7h0M736.6 577.3h0M736.8 580.3h0M737.1 576.9h0M737.4 577.2h0M737.6 579.0h0M737.9 580.5h0M738.2 579.3h0M738.4 579.5h0M738.7 579.4h0M739.0 579.6h0M739.2 578.4h0M739.5 578.9h0M739.8 578.6h0M740.0 578.5h0M740.3 576.7h0M740.6 575.6h0M740.8 578.4h0M741.1 578.6h0M741.4 578.7h0M741.6 577.1h0M741.9 577.5h0M742.2 578.3h0M742.4 578.7h0M742.7 577.6h0M743.0 577.0h0M743.2 579.1h0M743.5 577.8h0M743.8 581.0h0M744.0 579.4h0M744.3 577.8h0M744.6 580.7h0M744.8 580.6h0M745.1 578.1h0M745.4 581.2h0M745.6 578.9h0M745.9 575.5h0M746.1 577.9h0M746.4 576.0h0M746.7 576.2h0M746.9 579.5h0M747.2 578.7h0M747.5 577.9h0M747.7 576.9h0M748.0 576.4h0M748.3 577.3h0M748.5 577.9h0M748.8 579.9h0M749.1 576.9h0M749.3 579.2h0M749.6 577.0h0M749.9 576.5h0M750.1 580.4h0M750.4 575.5h0M750.7 578.7h0M750.9 576.9h0M751.2 577.0h0M751.5 575.8h0M751.7 576.7h0M752.0 576.1h0M752.3 577.2h0M752.5 579.5h0M752.8 578.6h0M753.1 577.4h0M753.3 577.0h0M753.6 578.1h0M753.9 579.4h0M754.1 580.1h0M754.4 578.2h0M754.7 574.1h0M754.9 578.5h0M755.2 579.0h0M755.5 577.5h0M755.7 577.3h0M756.0 578.2h0M756.3 581.2h0M756.5 579.3h0M756.8 579.2h0M757.1 577.4h0M757.3 579.2h0M757.6 578.7h0M757.9 579.9h0M758.1 579.1h0M758.4 575.2h0M758.7 577.1h0M758.9 577.7h0M759.2 579.5h0M759.5 580.0h0M759.7 576.9h0M760.0 578.3h0M760.3 577.5h0M760.5 577.9h0M760.8 578.2h0M761.1 581.9h0M761.3 577.1h0M761.6 575.9h0M761.9 578.3h0M762.1 578.7h0M762.4 578.1h0M762.7 578.8h0M762.9 581.0h0M763.2 579.0h0M763.5 578.5h0M763.7 577.0h0M764.0 579.9h0M764.3 578.9h0M764.5 578.5h0M764.8 577.9h0M765.1 575.8h0M765.3 577.6h0M765.6 577.6h0M765.9 580.3h0M766.1 576.3h0M766.4 581.0h0M766.7 576.7h0M766.9 577.4h0M767.2 578.5h0M767.5 580.1h0M767.7 577.9h0M768.0 579.3h0M768.3 576.7h0M768.5 582.8h0M768.8 578.5h0M769.1 582.4h0M769.3 578.6h0M769.6 579.1h0M769.9 577.5h0M770.1 580.3h0M770.4 580.1h0M770.7 581.8h0M770.9 579.4h0M771.2 578.5h0M771.5 579.1h0M771.7 580.2h0M772.0 579.1h0M772.3 578.0h0M772.5 578.4h0M772.8 581.6h0M773.0 579.6h0M773.3 580.1h0M773.6 582.8h0M773.8 578.0h0M774.1 578.5h0M774.4 580.4h0M774.6 578.2h0M774.9 578.6h0M775.2 579.6h0M775.4 578.5h0M775.7 579.3h0M776.0 580.0h0M776.2 577.5h0M776.5 581.2h0M776.8 576.3h0M777.0 578.7h0M777.3 579.6h0M777.6 578.4h0M777.8 580.4h0M778.1 579.7h0M778.4 576.3h0M778.6 578.4h0M778.9 579.3h0M779.2 579.3h0M779.4 577.8h0M779.7 577.8h0M780.0 579.6h0M780.2 577.5h0M780.5 579.2h0M780.8 579.2h0M781.0 578.1h0M781.3 580.2h0M781.6 581.4h0M781.8 579.4h0M782.1 578.0h0M782.4 579.7h0M782.6 578.0h0M782.9 577.5h0M783.2 579.8h0M783.4 579.3h0M783.7 579.5h0M784.0 578.4h0M784.2 578.6h0M784.5 579.1h0M784.8 577.4h0M785.0 578.8h0M785.3 578.9h0M785.6 580.4h0M785.8 579.3h0M786.1 577.5h0M786.4 578.4h0M786.6 579.2h0M786.9 579.5h0M787.2 580.6h0M787.4 580.4h0M787.7 577.9h0M788.0 579.3h0M788.2 579.2h0M788.5 577.5h0M788.8 579.9h0M789.0 579.9h0M789.3 577.2h0M789.6 578.4h0M789.8 581.5h0M790.1 579.2h0M790.4 580.3h0M790.6 579.9h0M790.9 579.5h0M791.2 581.5h0M791.4 580.2h0M791.7 576.6h0M792.0 579.4h0M792.2 579.8h0M792.5 577.8h0M792.8 581.1h0M793.0 579.4h0M793.3 577.3h0M793.6 579.1h0M793.8 578.6h0M794.1 579.4h0M794.4 578.6h0M794.6 578.1h0M794.9 579.3h0M795.2 578.9h0M795.4 578.7h0M795.7 581.7h0M796.0 577.7h0M796.2 576.4h0M796.5 577.8h0M796.8 578.6h0M797.0 579.5h0M797.3 578.4h0M797.6 576.2h0M797.8 576.8h0M798.1 579.9h0M798.4 576.8h0M798.6 579.9h0M798.9 579.8h0M799.2 579.1h0M799.4 578.0h0M799.7 579.2h0M799.9 577.5h0M800.2 578.4h0M800.5 576.6h0M800.7 580.8h0M801.0 578.6h0M801.3 577.9h0M801.5 576.6h0M801.8 581.7h0M802.1 579.1h0M802.3 581.5h0M802.6 578.1h0M802.9 579.5h0M803.1 578.3h0M803.4 577.3h0M803.7 577.5h0M803.9 579.0h0M804.2 577.8h0M804.5 574.3h0M804.7 579.4h0M805.0 577.9h0M805.3 579.3h0M805.5 577.5h0M805.8 579.8h0M806.1 577.8h0M806.3 580.7h0M806.6 578.3h0M806.9 575.1h0M807.1 580.2h0M807.4 579.4h0M807.7 577.3h0M807.9 580.1h0M808.2 581.8h0M808.5 580.9h0M808.7 578.2h0M809.0 577.0h0M809.3 578.4h0M809.5 578.4h0M809.8 577.0h0M810.1 578.5h0M810.3 576.6h0M810.6 576.4h0M810.9 578.9h0M811.1 576.6h0M811.4 577.4h0M811.7 578.6h0M811.9 578.4h0M812.2 576.9h0M812.5 580.1h0M812.7 580.6h0M813.0 576.7h0M813.3 575.6h0M813.5 578.0h0M813.8 576.9h0M814.1 580.6h0M814.3 580.2h0M814.6 579.1h0M814.9 578.8h0M815.1 578.1h0M815.4 579.0h0M815.7 578.4h0M815.9 578.6h0M816.2 577.4h0M816.5 576.8h0M816.7 577.0h0M817.0 576.3h0M817.3 578.5h0M817.5 578.9h0M817.8 580.9h0M818.1 580.6h0M818.3 577.1h0M818.6 577.5h0M818.9 578.1h0M819.1 578.6h0M819.4 579.9h0M819.7 581.3h0M819.9 579.0h0M820.2 578.5h0M820.5 581.8h0M820.7 576.3h0M821.0 579.1h0M821.3 577.5h0M821.5 576.3h0M821.8 576.0h0M822.1 578.5h0M822.3 576.7h0M822.6 576.8h0M822.9 578.0h0M823.1 577.6h0M823.4 579.3h0M823.7 577.7h0M823.9 579.0h0M824.2 578.4h0M824.5 577.9h0M824.7 576.7h0M825.0 578.4h0M825.3 578.4h0M825.5 578.6h0M825.8 574.1h0M826.0 578.6h0M826.3 577.3h0M826.6 580.1h0M826.8 577.9h0M827.1 579.7h0M827.4 578.7h0M827.6 576.9h0M827.9 575.5h0M828.2 577.7h0M828.4 577.0h0M828.7 577.6h0M829.0 578.5h0M829.2 577.8h0M829.5 576.5h0M829.8 577.6h0M830.0 578.4h0M830.3 578.5h0M830.6 577.1h0M830.8 578.3h0M831.1 576.5h0M831.4 579.8h0M831.6 576.7h0M831.9 578.9h0M832.2 577.9h0M832.4 574.7h0M832.7 576.3h0M833.0 578.5h0M833.2 578.3h0M833.5 576.4h0M833.8 576.4h0M834.0 577.7h0M834.3 576.6h0M834.6 578.3h0M834.8 581.6h0M835.1 576.1h0M835.4 578.4h0M835.6 576.8h0M835.9 577.9h0M836.2 578.0h0M836.4 578.9h0M836.7 576.5h0M837.0 576.4h0M837.2 575.8h0M837.5 576.6h0M837.8 577.0h0M838.0 578.3h0M838.3 577.5h0M838.6 576.9h0M838.8 581.1h0M839.1 579.2h0M839.4 577.8h0M839.6 576.3h0M839.9 575.5h0M840.2 575.1h0M840.4 578.6h0M840.7 577.4h0M841.0 578.2h0M841.2 578.6h0M841.5 578.0h0M841.8 577.3h0M842.0 576.3h0M842.3 579.5h0M842.6 577.6h0M842.8 578.8h0M843.1 575.4h0M843.4 575.0h0M843.6 578.1h0M843.9 578.4h0M844.2 576.5h0M844.4 576.0h0M844.7 578.8h0M845.0 578.0h0M845.2 577.0h0M845.5 578.8h0M845.8 575.2h0M846.0 577.3h0M846.3 577.2h0M846.6 579.0h0M846.8 575.5h0M847.1 579.2h0M847.4 578.3h0M847.6 578.1h0M847.9 577.4h0M848.2 579.3h0M848.4 578.4h0M848.7 576.4h0M849.0 577.3h0M849.2 577.0h0M849.5 575.8h0M849.8 576.6h0M850.0 575.8h0M850.3 577.1h0M850.6 578.4h0M850.8 574.8h0M851.1 579.6h0M851.4 579.1h0M851.6 578.8h0M851.9 573.8h0M852.2 577.0h0M852.4 575.6h0M852.7 579.3h0M852.9 578.7h0M853.2 576.6h0M853.5 577.7h0M853.7 576.9h0M854.0 576.2h0M854.3 576.9h0M854.5 576.9h0M854.8 576.7h0M855.1 577.3h0M855.3 576.6h0M855.6 575.6h0M855.9 578.3h0M856.1 576.6h0M856.4 575.7h0M856.7 577.2h0M856.9 577.1h0M857.2 574.3h0M857.5 575.3h0M857.7 573.7h0M858.0 574.2h0M858.3 577.4h0M858.5 577.9h0M858.8 577.3h0M859.1 575.6h0M859.3 581.7h0M859.6 576.8h0M859.9 575.1h0M860.1 576.8h0M860.4 576.4h0M860.7 577.1h0M860.9 579.2h0M861.2 575.4h0M861.5 577.2h0M861.7 576.1h0M862.0 576.7h0M862.3 574.0h0M862.5 576.1h0M862.8 576.1h0M863.1 576.9h0M863.3 577.9h0M863.6 576.1h0M863.9 575.2h0M864.1 576.7h0M864.4 579.7h0M864.7 577.8h0M864.9 573.9h0M865.2 577.4h0M865.5 576.4h0M865.7 579.3h0M866.0 577.4h0" stroke="#ebae1c" stroke-width="3.2" stroke-linecap="round"/>
<path d="M89.0 515.2h9.2M93.6 510.6v9.2M90.3 511.9l6.6 6.6M90.3 518.5l6.6 -6.6M115.7 537.0h9.2M120.3 532.4v9.2M117.0 533.7l6.6 6.6M117.0 540.3l6.6 -6.6M142.3 457.6h9.2M146.9 453.0v9.2M143.6 454.3l6.6 6.6M143.6 460.9l6.6 -6.6M168.9 528.3h9.2M173.5 523.7v9.2M170.2 525.0l6.6 6.6M170.2 531.6l6.6 -6.6M195.6 544.6h9.2M200.2 540.0v9.2M196.9 541.3l6.6 6.6M196.9 547.9l6.6 -6.6M222.2 547.9h9.2M226.8 543.3v9.2M223.5 544.6l6.6 6.6M223.5 551.2l6.6 -6.6M248.8 507.6h9.2M253.4 503.0v9.2M250.1 504.3l6.6 6.6M250.1 510.9l6.6 -6.6M275.5 554.4h9.2M280.1 549.8v9.2M276.8 551.1l6.6 6.6M276.8 557.7l6.6 -6.6M302.1 590.3h9.2M306.7 585.7v9.2M303.4 587.0l6.6 6.6M303.4 593.6l6.6 -6.6M328.7 608.8h9.2M333.3 604.2v9.2M330.0 605.5l6.6 6.6M330.0 612.1l6.6 -6.6M355.4 616.4h9.2M360.0 611.8v9.2M356.7 613.1l6.6 6.6M356.7 619.7l6.6 -6.6M382.0 141.0h9.2M386.6 136.4v9.2M383.3 137.7l6.6 6.6M383.3 144.3l6.6 -6.6M408.6 613.2h9.2M413.2 608.6v9.2M409.9 609.9l6.6 6.6M409.9 616.5l6.6 -6.6M435.3 488.0h9.2M439.9 483.4v9.2M436.6 484.7l6.6 6.6M436.6 491.3l6.6 -6.6M461.9 172.5h9.2M466.5 167.9v9.2M463.2 169.2l6.6 6.6M463.2 175.8l6.6 -6.6M488.5 591.4h9.2M493.1 586.8v9.2M489.8 588.1l6.6 6.6M489.8 594.7l6.6 -6.6M515.2 516.3h9.2M519.8 511.7v9.2M516.5 513.0l6.6 6.6M516.5 519.6l6.6 -6.6M541.8 334.6h9.2M546.4 330.0v9.2M543.1 331.3l6.6 6.6M543.1 337.9l6.6 -6.6M568.4 436.9h9.2M573.0 432.3v9.2M569.7 433.6l6.6 6.6M569.7 440.2l6.6 -6.6M595.1 559.8h9.2M599.7 555.2v9.2M596.4 556.5l6.6 6.6M596.4 563.1l6.6 -6.6M621.7 453.2h9.2M626.3 448.6v9.2M623.0 449.9l6.6 6.6M623.0 456.5l6.6 -6.6M648.3 300.9h9.2M652.9 296.3v9.2M649.6 297.6l6.6 6.6M649.6 304.2l6.6 -6.6M675.0 461.9h9.2M679.6 457.3v9.2M676.3 458.6l6.6 6.6M676.3 465.2l6.6 -6.6M701.6 170.3h9.2M706.2 165.7v9.2M702.9 167.0l6.6 6.6M702.9 173.6l6.6 -6.6M728.2 130.1h9.2M732.8 125.5v9.2M729.5 126.8l6.6 6.6M729.5 133.4l6.6 -6.6M754.9 519.6h9.2M759.5 515.0v9.2M756.2 516.3l6.6 6.6M756.2 522.9l6.6 -6.6M781.5 599.0h9.2M786.1 594.4v9.2M782.8 595.7l6.6 6.6M782.8 602.3l6.6 -6.6M808.1 581.6h9.2M812.7 577.0v9.2M809.4 578.3l6.6 6.6M809.4 584.9l6.6 -6.6M834.8 357.5h9.2M839.4 352.9v9.2M836.1 354.2l6.6 6.6M836.1 360.8l6.6 -6.6M861.4 119.2h9.2M866.0 114.6v9.2M862.7 115.9l6.6 6.6M862.7 122.5l6.6 -6.6" stroke="#d4008f" stroke-width="1.6"/>
<circle cx="832.4" cy="409.3" r="3.6" fill="#777" stroke="#fffbd8" stroke-width="1.5"/>
</g>
<path d="M67.5 119V772.5H866" stroke="#262626" stroke-width="1" fill="none"/>
<g font-family="Liberation Sans" font-size="12" fill="#262626"><text x="63" y="777.0" text-anchor="end">-100</text><text x="63" y="668.2" text-anchor="end">0</text><text x="63" y="559.4" text-anchor="end">100</text><text x="63" y="450.6" text-anchor="end">200</text><text x="63" y="341.8" text-anchor="end">300</text><text x="63" y="233.0" text-anchor="end">400</text><text x="63" y="124.2" text-anchor="end">500</text><text x="67.0" y="786.5" text-anchor="middle">0</text><text x="200.2" y="786.5" text-anchor="middle">500</text><text x="333.3" y="786.5" text-anchor="middle">1000</text><text x="466.5" y="786.5" text-anchor="middle">1500</text><text x="599.7" y="786.5" text-anchor="middle">2000</text><text x="732.8" y="786.5" text-anchor="middle">2500</text><text x="866.0" y="786.5" text-anchor="middle">3000</text></g>
<text x="467" y="113" text-anchor="middle" font-family="Liberation Sans" font-size="13.2" font-weight="bold" fill="#262626">Episode reward for CartPoleDiscreteAction with rlDQNAgent</text>
<text x="467" y="801.5" text-anchor="middle" font-family="Liberation Sans" font-size="13" fill="#262626">Episode Number</text>
<text transform="translate(33.4 446) rotate(-90)" text-anchor="middle" font-family="Liberation Sans" font-size="13" fill="#262626">Episode Reward</text>
</svg>
</body></html>
